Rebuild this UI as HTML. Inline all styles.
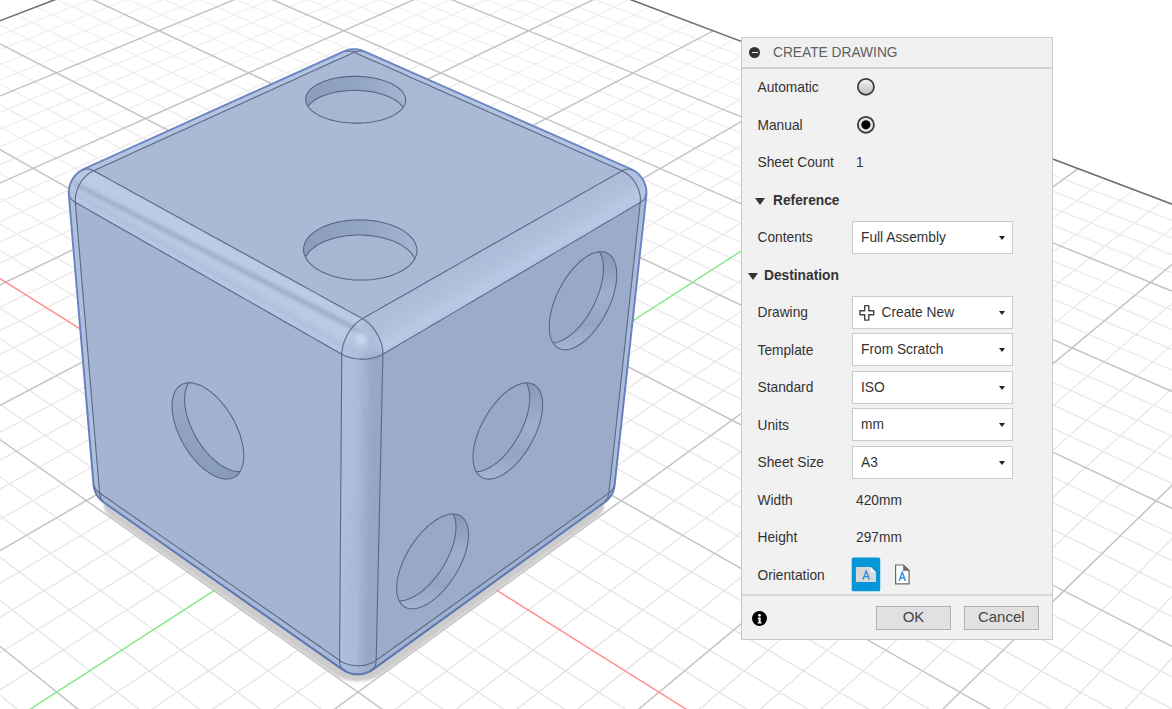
<!DOCTYPE html>
<html><head><meta charset="utf-8"><style>
html,body{margin:0;padding:0;background:#fff;width:1172px;height:709px;overflow:hidden}
body{position:relative;font-family:"Liberation Sans",sans-serif}
</style></head><body>
<svg width="1172" height="709" viewBox="0 0 1172 709" style="position:absolute;left:0;top:0"><path d="M-891.45,629.51L-1124.39,736.06M1604.10,630.07L1841.40,736.67M-876.97,649.79L-1112.02,759.05M1590.50,650.33L1830.01,759.65M-862.14,670.56L-1099.32,782.66M1576.56,671.09L1818.33,783.24M-831.33,713.71L-1072.88,831.81M1547.62,714.21L1794.01,832.36M-601.17,629.58L-815.33,736.12M-815.33,736.12L-1059.11,857.40M1314.01,630.00L1532.58,736.60M1532.58,736.60L1781.34,857.93M-583.13,649.85L-798.91,759.12M-798.91,759.12L-1044.95,883.71M1296.85,650.26L1517.15,759.59M1517.15,759.59L1768.32,884.22M-564.64,670.63L-782.06,782.73M-782.06,782.73L-1030.40,910.76M1279.25,671.03L1501.32,783.18M1501.32,783.18L1754.93,911.27M-526.24,713.78L-746.97,831.87M-746.97,831.87L-1000.01,967.25M1242.72,714.14L1468.35,832.29M1468.35,832.29L1726.97,967.72M-310.92,629.64L-506.30,736.18M-506.30,736.18L-728.70,857.46M-728.70,857.46L-984.13,996.75M1023.90,629.94L1223.74,736.54M1223.74,736.54L1451.18,857.87M1451.18,857.87L1712.37,997.20M-289.32,649.91L-485.84,759.18M-485.84,759.18L-709.92,883.77M-709.92,883.77L-967.78,1027.14M1003.17,650.20L1204.27,759.52M1204.27,759.52L1433.53,884.16M1433.53,884.16L1697.33,1027.58M-267.17,670.69L-464.83,782.79M-464.83,782.79L-690.60,910.83M-690.60,910.83L-950.93,1058.46M981.92,670.96L1184.27,783.12M1184.27,783.12L1415.38,911.20M1415.38,911.20L1681.83,1058.88M-221.19,713.84L-421.10,831.93M-421.10,831.93L-650.27,967.31M-650.27,967.31L-915.64,1124.07M937.79,714.08L1142.66,832.23M1142.66,832.23L1377.48,967.66M1377.48,967.66L1649.36,1124.45M-20.70,629.71L-197.30,736.25M-197.30,736.25L-398.32,857.52M-398.32,857.52L-629.21,996.81M-629.21,996.81L-897.14,1158.45M733.77,629.87L914.87,736.48M914.87,736.48L1120.99,857.81M1120.99,857.81L1357.69,997.14M1357.69,997.14L1632.34,1158.81M4.47,649.98L-172.79,759.24M-172.79,759.24L-374.91,883.83M-374.91,883.83L-607.51,1027.20M-607.51,1027.20L-878.04,1193.95M709.47,650.13L891.35,759.46M891.35,759.46L1098.71,884.10M1098.71,884.10L1337.30,1027.52M1337.30,1027.52L1614.77,1194.30M30.27,670.76L-147.63,782.85M-147.63,782.85L-350.84,910.89M-350.84,910.89L-585.15,1058.52M-585.15,1058.52L-858.31,1230.63M684.56,670.90L867.20,783.05M867.20,783.05L1075.79,911.14M1075.79,911.14L1316.29,1058.82M1316.29,1058.82L1596.61,1230.96M83.85,713.90L-95.25,831.99M-95.25,831.99L-300.57,967.37M-300.57,967.37L-538.31,1124.13M-538.31,1124.13L-816.81,1307.76M632.83,714.02L816.94,832.17M816.94,832.17L1027.96,967.60M1027.96,967.60L1272.27,1124.40M1272.27,1124.40L1558.43,1308.05M269.50,629.77L111.67,736.31M111.67,736.31L-67.98,857.59M-67.98,857.59L-274.32,996.87M-274.32,996.87L-513.76,1158.51M-513.76,1158.51L-794.98,1348.34M443.61,629.81L605.97,736.41M605.97,736.41L790.76,857.75M790.76,857.75L1002.97,997.09M1002.97,997.09L1249.21,1158.76M1249.21,1158.76L1538.35,1348.61M298.24,650.04L140.23,759.31M140.23,759.31L-39.94,883.89M-39.94,883.89L-247.27,1027.26M-247.27,1027.26L-488.42,1194.01M-488.42,1194.01L-772.37,1390.36M415.74,650.07L578.40,759.40M578.40,759.40L763.85,884.04M763.85,884.04L977.24,1027.46M977.24,1027.46L1225.39,1194.24M1225.39,1194.24L1517.55,1390.61M327.69,670.82L169.54,782.91M169.54,782.91L-11.11,910.95M-11.11,910.95L-219.40,1058.58M-219.40,1058.58L-462.23,1230.69M-462.23,1230.69L-748.95,1433.90M387.17,670.83L550.10,782.99M550.10,782.99L736.18,911.08M736.18,911.08L950.71,1058.76M950.71,1058.76L1200.78,1230.91M1200.78,1230.91L1495.99,1434.13M388.85,713.97L230.56,832.06M230.56,832.06L49.09,967.43M49.09,967.43L-161.02,1124.18M-161.02,1124.18L-407.17,1307.81M-407.17,1307.81L-699.47,1525.87M327.85,713.95L491.18,832.11M491.18,832.11L678.40,967.54M678.40,967.54L895.15,1124.34M895.15,1124.34L1149.03,1308.00M1149.03,1308.00L1450.47,1526.06M559.68,629.83L420.62,736.38M420.62,736.38L262.33,857.65M262.33,857.65L80.53,996.93M80.53,996.93L-130.43,1158.56M-130.43,1158.56L-378.20,1348.39M-378.20,1348.39L-673.31,1574.49M153.42,629.74L297.04,736.35M297.04,736.35L460.50,857.68M460.50,857.68L648.22,997.03M648.22,997.03L866.03,1158.71M866.03,1158.71L1121.80,1348.56M1121.80,1348.56L1426.40,1574.66M591.98,650.11L453.21,759.37M453.21,759.37L294.99,883.95M294.99,883.95L112.92,1027.32M112.92,1027.32L-98.84,1194.06M-98.84,1194.06L-348.20,1390.41M-348.20,1390.41L-646.13,1625.00M121.98,650.00L265.42,759.33M265.42,759.33L428.96,883.98M428.96,883.98L617.13,1027.40M617.13,1027.40L835.96,1194.19M835.96,1194.19L1093.60,1390.56M1093.60,1390.56L1401.39,1625.16M625.08,670.88L486.68,782.98M486.68,782.98L328.59,911.01M328.59,911.01L146.30,1058.64M146.30,1058.64L-66.20,1230.74M-66.20,1230.74L-317.11,1433.94M-317.11,1433.94L-617.88,1677.52M89.76,670.77L232.97,782.93M232.97,782.93L396.52,911.02M396.52,911.02L585.09,1058.71M585.09,1058.71L804.90,1230.85M804.90,1230.85L1064.39,1434.08M1064.39,1434.08L1375.39,1677.66M693.83,714.03L556.33,832.12M556.33,832.12L398.72,967.49M398.72,967.49L216.22,1124.24M216.22,1124.24L2.43,1307.86M2.43,1307.86L-251.45,1525.91M-251.45,1525.91L-557.86,1789.08M22.84,713.89L165.40,832.04M165.40,832.04L328.80,967.48M328.80,967.48L517.98,1124.28M517.98,1124.28L739.57,1307.95M739.57,1307.95L1002.68,1526.02M1002.68,1526.02L1320.17,1789.17M849.83,629.90L729.53,736.44M729.53,736.44L592.61,857.71M592.61,857.71L435.35,996.99M435.35,996.99L252.86,1158.62M252.86,1158.62L38.54,1348.44M38.54,1348.44L-216.74,1574.53M-216.74,1574.53L-525.95,1848.39M-136.78,629.68L-11.91,736.29M-11.91,736.29L130.21,857.62M130.21,857.62L293.43,996.97M293.43,996.97L482.81,1158.65M482.81,1158.65L705.20,1348.51M705.20,1348.51L970.05,1574.63M970.05,1574.63L1290.81,1848.46M885.69,650.17L766.17,759.43M766.17,759.43L629.90,884.02M629.90,884.02L473.08,1027.38M473.08,1027.38L290.69,1194.12M290.69,1194.12L75.93,1390.45M75.93,1390.45L-180.68,1625.04M-180.68,1625.04L-492.67,1910.26M-171.80,649.94L-47.58,759.27M-47.58,759.27L94.04,883.92M94.04,883.92L256.99,1027.34M256.99,1027.34L446.49,1194.14M446.49,1194.14L669.61,1390.52M669.61,1390.52L936.16,1625.12M936.16,1625.12L1260.18,1910.31M922.45,670.95L803.78,783.04M803.78,783.04L668.25,911.07M668.25,911.07L511.97,1058.70M511.97,1058.70L329.78,1230.79M329.78,1230.79L114.67,1433.99M114.67,1433.99L-143.18,1677.56M-143.18,1677.56L-457.91,1974.85M-207.68,670.71L-84.20,782.86M-84.20,782.86L56.83,910.96M56.83,910.96L219.44,1058.65M219.44,1058.65L408.97,1230.80M408.97,1230.80L632.73,1434.04M632.73,1434.04L900.91,1677.62M900.91,1677.62L1228.19,1974.89M998.78,714.09L882.08,832.18M882.08,832.18L748.31,967.55M748.31,967.55L593.42,1124.29M593.42,1124.29L411.97,1307.91M411.97,1307.91L196.51,1525.95M196.51,1525.95L-63.54,1789.10M-63.54,1789.10L-383.60,2112.98M-282.19,713.83L-160.42,831.98M-160.42,831.98L-20.84,967.42M-20.84,967.42L140.77,1124.23M140.77,1124.23L330.07,1307.90M330.07,1307.90L554.83,1525.98M554.83,1525.98L826.05,1789.15M826.05,1789.15L1159.81,2112.99M1139.95,629.96L1038.42,736.50M1038.42,736.50L922.85,857.77M922.85,857.77L790.13,997.05M790.13,997.05L636.10,1158.67M636.10,1158.67L455.22,1348.48M455.22,1348.48L239.77,1574.57M239.77,1574.57L-21.20,1848.41M-21.20,1848.41L-343.81,2186.94M-427.02,629.62L-320.90,736.22M-320.90,736.22L-200.11,857.56M-200.11,857.56L-61.40,996.91M-61.40,996.91L99.55,1158.60M99.55,1158.60L288.55,1348.47M288.55,1348.47L513.64,1574.59M513.64,1574.59L786.25,1848.44M786.25,1848.44L1123.19,2186.93M1179.38,650.24L1079.10,759.50M1079.10,759.50L964.77,884.08M964.77,884.08L833.20,1027.44M833.20,1027.44L680.18,1194.17M680.18,1194.17L500.00,1390.50M500.00,1390.50L284.71,1625.07M284.71,1625.07L22.97,1910.27M22.97,1910.27L-302.10,2264.47M-465.60,649.88L-360.62,759.21M-360.62,759.21L-240.92,883.86M-240.92,883.86L-103.19,1027.28M-103.19,1027.28L56.98,1194.08M56.98,1194.08L245.56,1390.47M245.56,1390.47L470.85,1625.09M470.85,1625.09L744.73,1910.30M744.73,1910.30L1084.80,2264.44M1219.79,671.01L1120.86,783.10M1120.86,783.10L1007.87,911.13M1007.87,911.13L877.59,1058.75M877.59,1058.75L725.72,1230.84M725.72,1230.84L546.39,1434.03M546.39,1434.03L331.45,1677.59M331.45,1677.59L69.09,1974.87M69.09,1974.87L-258.32,2345.85M-505.14,670.64L-401.39,782.80M-401.39,782.80L-282.89,910.90M-282.89,910.90L-146.26,1058.59M-146.26,1058.59L13.00,1230.75M13.00,1230.75L201.02,1434.00M201.02,1434.00L426.36,1677.59M426.36,1677.59L701.38,1974.88M701.38,1974.88L1044.51,2345.80M1303.70,714.16L1207.80,832.24M1207.80,832.24L1097.87,967.61M1097.87,967.61L970.58,1124.35M970.58,1124.35L821.47,1307.96M821.47,1307.96L644.40,1525.99M644.40,1525.99L430.71,1789.13M430.71,1789.13L167.70,2112.99M167.70,2112.99L-163.91,2521.32M-587.26,713.76L-486.27,831.92M-486.27,831.92L-370.51,967.36M-370.51,967.36L-236.48,1124.17M-236.48,1124.17L-79.49,1307.85M-79.49,1307.85L106.92,1525.94M106.92,1525.94L331.86,1789.12M331.86,1789.12L608.67,2112.99M608.67,2112.99L957.62,2521.25M1430.05,630.03L1347.28,736.57M1347.28,736.57L1253.07,857.83M1253.07,857.83L1144.87,997.11M1144.87,997.11L1019.31,1158.73M1019.31,1158.73L871.85,1348.53M871.85,1348.53L696.21,1574.60M696.21,1574.60L483.48,1848.43M483.48,1848.43L220.50,2186.94M220.50,2186.94L-112.92,2616.10M-717.28,629.55L-629.91,736.16M-629.91,736.16L-530.47,857.50M-530.47,857.50L-416.27,996.85M-416.27,996.85L-283.76,1158.54M-283.76,1158.54L-128.15,1348.42M-128.15,1348.42L57.17,1574.55M57.17,1574.55L281.62,1848.42M281.62,1848.42L559.03,2186.93M559.03,2186.93L910.69,2616.03M1473.04,650.30L1392.00,759.56M1392.00,759.56L1299.61,884.14M1299.61,884.14L1193.28,1027.50M1193.28,1027.50L1069.62,1194.22M1069.62,1194.22L924.01,1390.55M924.01,1390.55L750.04,1625.11M750.04,1625.11L538.53,1910.29M538.53,1910.29L275.85,2264.46M275.85,2264.46L-59.12,2716.09M-759.43,649.81L-673.68,759.14M-673.68,759.14L-575.91,883.79M-575.91,883.79L-463.41,1027.23M-463.41,1027.23L-332.58,1194.03M-332.58,1194.03L-178.54,1390.43M-178.54,1390.43L5.49,1625.05M5.49,1625.05L229.20,1910.28M229.20,1910.28L507.00,2264.46M507.00,2264.46L861.17,2716.01M1517.10,671.08L1437.91,783.17M1437.91,783.17L1347.47,911.19M1347.47,911.19L1243.18,1058.81M1243.18,1058.81L1121.60,1230.90M1121.60,1230.90L978.06,1434.08M978.06,1434.08L806.01,1677.62M806.01,1677.62L596.00,1974.88M596.00,1974.88L333.94,2345.83M333.94,2345.83L-2.28,2821.74M-802.64,670.58L-718.61,782.74M-718.61,782.74L-622.64,910.84M-622.64,910.84L-512.00,1058.53M-512.00,1058.53L-383.02,1230.70M-383.02,1230.70L-230.75,1433.95M-230.75,1433.95L-48.25,1677.56M-48.25,1677.56L174.48,1974.87M174.48,1974.87L452.38,2345.82M452.38,2345.82L808.85,2821.66M1608.59,714.22L1533.48,832.31M1533.48,832.31L1447.38,967.67M1447.38,967.67L1347.69,1124.41M1347.69,1124.41L1230.91,1308.01M1230.91,1308.01L1092.24,1526.03M1092.24,1526.03L924.88,1789.15M924.88,1789.15L718.91,2112.99M718.91,2112.99L459.21,2521.28M459.21,2521.28L121.62,3052.04M-892.35,713.70L-812.15,831.86M-812.15,831.86L-720.21,967.30M-720.21,967.30L-613.77,1124.12M-613.77,1124.12L-489.09,1307.80M-489.09,1307.80L-341.05,1525.90M-341.05,1525.90L-162.40,1789.10M-162.40,1789.10L57.45,2112.99M57.45,2112.99L334.59,2521.29M334.59,2521.29L694.80,3051.96M1720.12,630.09L1656.11,736.63M1656.11,736.63L1583.25,857.90M1583.25,857.90L1499.57,997.17M1499.57,997.17L1402.46,1158.78M1402.46,1158.78L1288.42,1348.58M1288.42,1348.58L1152.60,1574.64M1152.60,1574.64L988.08,1848.45M988.08,1848.45L784.71,2186.93M784.71,2186.93L526.87,2616.05M526.87,2616.05L189.31,3177.86M-1007.56,629.49L-938.95,736.10M-938.95,736.10L-860.86,857.44M-860.86,857.44L-771.17,996.79M-771.17,996.79L-667.11,1158.49M-667.11,1158.49L-544.90,1348.37M-544.90,1348.37L-399.36,1574.51M-399.36,1574.51L-223.09,1848.40M-223.09,1848.40L-5.21,2186.94M-5.21,2186.94L270.97,2616.07M270.97,2616.07L632.48,3177.79M1766.68,650.36L1704.87,759.62M1704.87,759.62L1634.41,884.20M1634.41,884.20L1553.32,1027.55M1553.32,1027.55L1459.02,1194.28M1459.02,1194.28L1347.98,1390.59M1347.98,1390.59L1215.31,1625.14M1215.31,1625.14L1054.01,1910.31M1054.01,1910.31L853.69,2264.45M853.69,2264.45L598.26,2716.04M598.26,2716.04L261.32,3311.71M-1053.29,649.75L-986.77,759.08M-986.77,759.08L-910.93,883.73M-910.93,883.73L-823.67,1027.17M-823.67,1027.17L-722.18,1193.98M-722.18,1193.98L-602.69,1390.38M-602.69,1390.38L-459.94,1625.02M-459.94,1625.02L-286.40,1910.26M-286.40,1910.26L-70.91,2264.47M-70.91,2264.47L203.84,2716.07M203.84,2716.07L566.19,3311.66M1814.39,671.14L1754.93,783.23M1754.93,783.23L1687.02,911.25M1687.02,911.25L1608.72,1058.87M1608.72,1058.87L1517.45,1230.95M1517.45,1230.95L1409.68,1434.12M1409.68,1434.12L1280.50,1677.65M1280.50,1677.65L1122.84,1974.89M1122.84,1974.89L926.09,2345.81M926.09,2345.81L673.68,2821.67M673.68,2821.67L338.07,3454.37M-1100.15,670.51L-1035.86,782.67M-1035.86,782.67L-962.43,910.78M-962.43,910.78L-877.77,1058.48M-877.77,1058.48L-779.09,1230.64M-779.09,1230.64L-662.58,1433.91M-662.58,1433.91L-522.93,1677.53M-522.93,1677.53L-352.51,1974.86M-352.51,1974.86L-139.86,2345.84M-139.86,2345.84L132.92,2821.73M132.92,2821.73L495.53,3454.34" stroke="#e5e5e5" stroke-width="1.35" fill="none"/><path d="M-945.99,553.11L-1170.84,649.72M1655.35,553.72L1884.12,650.39M-932.83,571.54L-1159.66,670.50M1642.98,572.13L1873.84,671.15M-905.57,609.73L-1136.45,713.65M1617.37,610.29L1852.49,714.27M-669.16,553.18L-876.97,649.79M1378.70,553.65L1590.50,650.33M-652.76,571.61L-862.14,670.56M1363.10,572.07L1576.56,671.09M-618.78,609.79L-831.33,713.71M1330.77,610.23L1547.62,714.21M-392.35,553.24L-583.13,649.85M1102.04,553.59L1296.85,650.26M-372.71,571.67L-564.64,670.63M1083.19,572.01L1279.25,671.03M-332.01,609.85L-526.24,713.78M1044.14,610.16L1242.72,714.14M-115.56,553.31L-289.32,649.91M825.35,553.53L1003.17,650.20M-92.68,571.74L-267.17,670.69M803.26,571.94L981.92,670.96M-45.27,609.92L-221.19,713.84M757.49,610.10L937.79,714.08M161.21,553.37L4.47,649.98M548.64,553.46L709.47,650.13M187.33,571.80L30.27,670.76M523.30,571.88L684.56,670.90M241.45,609.98L83.85,713.90M470.81,610.03L632.83,714.02M437.95,553.44L298.24,650.04M271.90,553.40L415.74,650.07M467.31,571.86L327.69,670.82M243.33,571.81L387.17,670.83M528.15,610.05L388.85,713.97M184.11,609.97L327.85,713.95M714.67,553.50L591.98,650.11M-4.85,553.33L121.98,650.00M747.27,571.93L625.08,670.88M-36.67,571.75L89.76,670.77M814.82,610.11L693.83,714.03M-102.61,609.91L22.84,713.89M991.36,553.56L885.69,650.17M-281.63,553.27L-171.80,649.94M1027.21,571.99L922.45,670.95M-316.70,571.68L-207.68,670.71M1101.47,610.18L998.78,714.09M-389.36,609.84L-282.19,713.83M1268.04,553.63L1179.38,650.24M-558.43,553.20L-465.60,649.88M1307.12,572.06L1219.79,671.01M-596.75,571.62L-505.14,670.64M1388.09,610.24L1303.70,714.16M-676.14,609.78L-587.26,713.76M1544.69,553.69L1473.04,650.30M-835.26,553.14L-759.43,649.81M1587.01,572.12L1517.10,671.08M-876.82,571.56L-802.64,670.58M1674.69,610.30L1608.59,714.22M-962.93,609.71L-892.35,713.70M1821.32,553.76L1766.68,650.36M-1112.10,553.07L-1053.29,649.75M1866.88,572.19L1814.39,671.14M-1156.91,571.49L-1100.15,670.51" stroke="#e6e6e6" stroke-width="1.35" fill="none"/><path d="M-1007.46,467.02L-1222.85,553.05M1713.09,467.69L1931.97,553.78M-995.71,483.48L-1212.93,571.48M1702.06,484.13L1922.85,572.20M-971.41,517.51L-1192.39,609.66M1679.23,518.14L1903.95,610.36M-958.85,535.11L-1181.74,629.45M1667.42,535.73L1894.16,630.13M-745.77,467.09L-945.99,553.11M1451.60,467.63L1655.35,553.72M-731.13,483.54L-932.83,571.54M1437.66,484.07L1642.98,572.13M-700.84,517.57L-905.57,609.73M1408.85,518.07L1617.37,610.29M-685.18,535.17L-891.45,629.51M1393.95,535.66L1604.10,630.07M-484.11,467.15L-669.16,553.18M1190.08,467.56L1378.70,553.65M-466.57,483.61L-652.76,571.61M1173.25,484.00L1363.10,572.07M-430.30,517.64L-618.78,609.79M1138.45,518.01L1330.77,610.23M-411.54,535.24L-601.17,629.58M1120.45,535.60L1314.01,630.00M-222.46,467.21L-392.35,553.24M928.54,467.50L1102.04,553.59M-202.03,483.67L-372.71,571.67M908.82,483.94L1083.19,572.01M-159.77,517.70L-332.01,609.85M868.03,517.95L1044.14,610.16M-137.92,535.30L-310.92,629.64M846.93,535.53L1023.90,629.94M39.17,467.28L-115.56,553.31M666.99,467.43L825.35,553.53M62.49,483.73L-92.68,571.74M644.37,483.88L803.26,571.94M110.73,517.77L-45.27,609.92M597.59,517.88L757.49,610.10M135.68,535.36L-20.70,629.71M573.39,535.47L733.77,629.87M300.77,467.34L161.21,553.37M405.41,467.37L548.64,553.46M326.99,483.80L187.33,571.80M379.89,483.81L523.30,571.88M381.22,517.83L241.45,609.98M327.12,517.82L470.81,610.03M409.26,535.43L269.50,629.77M299.83,535.40L443.61,629.81M562.36,467.41L437.95,553.44M143.81,467.30L271.90,553.40M591.47,483.86L467.31,571.86M115.40,483.75L243.33,571.81M651.68,517.89L528.15,610.05M56.63,517.75L184.11,609.97M682.81,535.49L559.68,629.83M26.24,535.34L153.42,629.74M823.92,467.47L714.67,553.50M-117.81,467.24L-4.85,553.33M855.93,483.93L747.27,571.93M-149.12,483.68L-36.67,571.75M922.12,517.96L814.82,610.11M-213.87,517.69L-102.61,609.91M956.34,535.56L849.83,629.90M-247.36,535.27L-136.78,629.68M1085.47,467.54L991.36,553.56M-379.44,467.18L-281.63,553.27M1120.37,483.99L1027.21,571.99M-413.66,483.62L-316.70,571.68M1192.53,518.02L1101.47,610.18M-484.40,517.62L-389.36,609.84M1229.85,535.62L1139.95,629.96M-520.99,535.21L-427.02,629.62M1346.99,467.60L1268.04,553.63M-641.10,467.11L-558.43,553.20M1384.78,484.06L1307.12,572.06M-678.21,483.55L-596.75,571.62M1462.93,518.09L1388.09,610.24M-754.96,517.56L-676.14,609.78M1503.34,535.69L1430.05,630.03M-794.65,535.15L-717.28,629.55M1608.50,467.66L1544.69,553.69M-902.78,467.05L-835.26,553.14M1649.18,484.12L1587.01,572.12M-942.79,483.49L-876.82,571.56M1733.30,518.15L1674.69,610.30M-1025.53,517.49L-962.93,609.71M1776.81,535.75L1720.12,630.09M-1068.32,535.08L-1007.56,629.49M1869.98,467.73L1821.32,553.76M-1164.48,466.98L-1112.10,553.07M1913.55,484.18L1866.88,572.19M-1207.39,483.43L-1156.91,571.49" stroke="#e7e7e7" stroke-width="1.35" fill="none"/><path d="M-1030.20,435.17L-1242.00,517.44M1734.46,435.86L1949.59,518.20M-1018.95,450.92L-1232.54,535.04M1723.89,451.60L1940.88,535.79M-814.44,389.93L-1007.46,467.02M1516.93,390.53L1713.09,467.69M-801.28,404.71L-995.71,483.48M1504.41,405.30L1702.06,484.13M-774.12,435.23L-971.41,517.51M1478.57,435.79L1679.23,518.14M-760.10,450.99L-958.85,535.11M1465.23,451.54L1667.42,535.73M-566.34,389.99L-745.77,467.09M1268.99,390.46L1451.60,467.63M-550.58,404.78L-731.13,483.54M1253.87,405.23L1437.66,484.07M-518.06,435.29L-700.84,517.57M1222.66,435.73L1408.85,518.07M-501.26,451.05L-685.18,535.17M1206.55,451.47L1393.95,535.66M-318.27,390.05L-484.11,467.15M1021.03,390.40L1190.08,467.56M-299.91,404.84L-466.57,483.61M1003.31,405.17L1173.25,484.00M-262.01,435.36L-430.30,517.64M966.73,435.67L1138.45,518.01M-242.45,451.11L-411.54,535.24M947.84,451.41L1120.45,535.60M-70.21,390.12L-222.46,467.21M773.05,390.33L928.54,467.50M-49.25,404.90L-202.03,483.67M752.73,405.11L908.82,483.94M-5.99,435.42L-159.77,517.70M710.78,435.60L868.03,517.95M16.34,451.18L-137.92,535.30M689.12,451.34L846.93,535.53M177.83,390.18L39.17,467.28M525.05,390.27L666.99,467.43M201.39,404.97L62.49,483.73M502.13,405.04L644.37,483.88M250.02,435.49L110.73,517.77M454.81,435.54L597.59,517.88M275.12,451.24L135.68,535.36M430.38,451.28L573.39,535.47M425.85,390.25L300.77,467.34M277.04,390.21L405.41,467.37M452.01,405.03L326.99,483.80M251.51,404.98L379.89,483.81M506.00,435.55L381.22,517.83M198.82,435.47L327.12,517.82M533.87,451.31L409.26,535.43M171.61,451.22L299.83,535.40M673.85,390.31L562.36,467.41M29.01,390.14L143.81,467.30M702.61,405.09L591.47,483.86M0.88,404.92L115.40,483.75M761.97,435.61L651.68,517.89M-57.19,435.41L56.63,517.75M792.61,451.37L682.81,535.49M-87.17,451.15L26.24,535.34M921.84,390.37L823.92,467.47M-219.04,390.08L-117.81,467.24M953.19,405.16L855.93,483.93M-249.78,404.85L-149.12,483.68M1017.91,435.68L922.12,517.96M-313.22,435.35L-213.87,517.69M1051.33,451.43L956.34,535.56M-345.97,451.09L-247.36,535.27M1169.80,390.44L1085.47,467.54M-467.11,390.02L-379.44,467.18M1203.76,405.22L1120.37,483.99M-500.45,404.79L-413.66,483.62M1273.84,435.74L1192.53,518.02M-569.27,435.28L-484.40,517.62M1310.02,451.50L1229.85,535.62M-604.80,451.02L-520.99,535.21M1417.75,390.50L1346.99,467.60M-715.20,389.95L-641.10,467.11M1454.30,405.29L1384.78,484.06M-751.14,404.72L-678.21,483.55M1529.75,435.81L1462.93,518.09M-825.33,435.22L-754.96,517.56M1568.70,451.56L1503.34,535.69M-863.64,450.96L-794.65,535.15M1665.68,390.56L1608.50,467.66M-963.30,389.89L-902.78,467.05M1704.83,405.35L1649.18,484.12M-1001.85,404.66L-942.79,483.49M1785.64,435.87L1733.30,518.15M-1081.42,435.15L-1025.53,517.49M1827.35,451.63L1776.81,535.75M-1122.50,450.90L-1068.32,535.08" stroke="#e8e8e8" stroke-width="1.35" fill="none"/><path d="M-839.95,361.26L-1030.20,435.17M1541.20,361.88L1734.46,435.86M-827.32,375.45L-1018.95,450.92M1529.19,376.06L1723.89,451.60M-640.47,320.44L-814.44,389.93M-626.23,333.80L-801.28,404.71M1326.45,334.32L1504.41,405.30M-596.90,361.32L-774.12,435.23M1298.30,361.82L1478.57,435.79M-581.78,375.51L-760.10,450.99M1283.79,375.99L1465.23,451.54M-404.62,320.51L-566.34,389.99M-388.04,333.86L-550.58,404.78M1088.38,334.25L1253.87,405.23M-353.86,361.39L-518.06,435.29M1055.39,361.75L1222.66,435.73M-336.25,375.57L-501.26,451.05M1038.38,375.93L1206.55,451.47M-168.80,320.57L-318.27,390.05M868.64,320.85L1021.03,390.40M-149.86,333.92L-299.91,404.84M850.29,334.19L1003.31,405.17M-110.85,361.45L-262.01,435.36M812.45,361.69L966.73,435.67M-90.74,375.64L-242.45,451.11M792.95,375.87L947.84,451.41M67.01,320.63L-70.21,390.12M632.89,320.78L773.05,390.33M88.29,333.99L-49.25,404.90M612.18,334.13L752.73,405.11M132.15,361.51L-5.99,435.42M569.50,361.63L710.78,435.60M154.76,375.70L16.34,451.18M547.51,375.80L689.12,451.34M302.81,320.69L177.83,390.18M397.12,320.72L525.05,390.27M326.44,334.05L201.39,404.97M374.06,334.06L502.13,405.04M375.13,361.58L250.02,435.49M326.54,361.56L454.81,435.54M400.23,375.76L275.12,451.24M302.04,375.74L430.38,451.28M538.58,320.76L425.85,390.25M161.33,320.66L277.04,390.21M564.56,334.11L452.01,405.03M135.92,334.00L251.51,404.98M618.10,361.64L506.00,435.55M83.55,361.50L198.82,435.47M645.69,375.83L533.87,451.31M56.56,375.67L171.61,451.22M774.34,320.82L673.85,390.31M-74.47,320.59L29.01,390.14M802.67,334.18L702.61,405.09M-102.23,333.94L0.88,404.92M861.04,361.70L761.97,435.61M-159.45,361.44L-57.19,435.41M891.13,375.89L792.61,451.37M-188.94,375.61L-87.17,451.15M1010.09,320.88L921.84,390.37M-310.29,320.53L-219.04,390.08M1040.76,334.24L953.19,405.16M-340.40,333.87L-249.78,404.85M1103.97,361.77L1017.91,435.68M-402.47,361.37L-313.22,435.35M1136.55,375.95L1051.33,451.43M-434.46,375.55L-345.97,451.09M-546.13,320.47L-467.11,390.02M1278.83,334.30L1203.76,405.22M-578.59,333.81L-500.45,404.79M1346.88,361.83L1273.84,435.74M-645.50,361.31L-569.27,435.28M1381.95,376.02L1310.02,451.50M-679.99,375.48L-604.80,451.02M-781.98,320.40L-715.20,389.95M1516.89,334.37L1454.30,405.29M-816.80,333.75L-751.14,404.72M1589.77,361.89L1529.75,435.81M-888.56,361.25L-825.33,435.22M1627.34,376.08L1568.70,451.56M-925.55,375.42L-863.64,450.96" stroke="#e9e9e9" stroke-width="1.35" fill="none"/><path d="M-668.11,294.51L-839.95,361.26M1366.62,295.06L1541.20,361.88M-654.42,307.35L-827.32,375.45M1353.49,307.89L1529.19,376.06M1340.10,320.97L1516.93,390.53M-467.81,269.62L-626.23,333.80M1165.37,270.07L1326.45,334.32M-436.83,294.57L-596.90,361.32M1135.46,295.00L1298.30,361.82M-420.88,307.41L-581.78,375.51M1120.08,307.83L1283.79,375.99M1104.38,320.91L1268.99,390.46M-240.93,269.68L-388.04,333.86M938.59,270.00L1088.38,334.25M-205.56,294.63L-353.86,361.39M904.29,294.93L1055.39,361.75M-187.36,307.47L-336.25,375.57M886.64,307.76L1038.38,375.93M-14.07,269.74L-149.86,333.92M711.79,269.94L850.29,334.19M25.69,294.69L-110.85,361.45M673.10,294.87L812.45,361.69M46.15,307.54L-90.74,375.64M653.19,307.70L792.95,375.87M212.78,269.81L88.29,333.99M484.97,269.88L612.18,334.13M256.92,294.76L132.15,361.51M441.90,294.81L569.50,361.63M279.64,307.60L154.76,375.70M419.73,307.64L547.51,375.80M439.61,269.87L326.44,334.05M258.15,269.82L374.06,334.06M488.14,294.82L375.13,361.58M210.68,294.74L326.54,361.56M513.12,307.66L400.23,375.76M186.25,307.57L302.04,375.74M666.43,269.93L564.56,334.11M31.30,269.76L135.92,334.00M719.34,294.88L618.10,361.64M-20.56,294.68L83.55,361.50M746.57,307.72L645.69,375.83M-47.25,307.51L56.56,375.67M893.23,269.99L802.67,334.18M-195.56,269.69L-102.23,333.94M950.53,294.95L861.04,361.70M-251.81,294.62L-159.45,361.44M980.02,307.79L891.13,375.89M-280.77,307.45L-188.94,375.61M1120.01,270.05L1040.76,334.24M-422.43,269.63L-340.40,333.87M1181.70,295.01L1103.97,361.77M-483.08,294.56L-402.47,361.37M1213.44,307.85L1136.55,375.95M-514.30,307.39L-434.46,375.55M1245.82,320.95L1169.80,390.44M1346.78,270.12L1278.83,334.30M-649.32,269.57L-578.59,333.81M1412.85,295.07L1346.88,361.83M-714.37,294.49L-645.50,361.31M1446.85,307.91L1381.95,376.02M-747.84,307.32L-679.99,375.48M1481.53,321.01L1417.75,390.50" stroke="#eaeaea" stroke-width="1.35" fill="none"/><path d="M-512.14,233.92L-668.11,294.51M1208.15,234.40L1366.62,295.06M-497.63,245.60L-654.42,307.35M1194.16,246.07L1353.49,307.89M-482.86,257.49L-640.47,320.44M1179.90,257.95L1340.10,320.97M-323.75,211.26L-467.81,269.62M1018.88,211.64L1165.37,270.07M-291.54,233.98L-436.83,294.57M987.65,234.34L1135.46,295.00M-274.98,245.66L-420.88,307.41M971.60,246.01L1120.08,307.83M-258.12,257.56L-404.62,320.51M955.25,257.89L1104.38,320.91M-107.16,211.32L-240.93,269.68M802.36,211.58L938.59,270.00M-70.95,234.04L-205.56,294.63M767.14,234.28L904.29,294.93M-52.34,245.72L-187.36,307.47M749.03,245.94L886.64,307.76M-33.39,257.62L-168.80,320.57M730.58,257.83L868.64,320.85M109.42,211.38L-14.07,269.74M585.83,211.51L711.79,269.94M149.62,234.10L25.69,294.69M546.61,234.21L673.10,294.87M170.28,245.78L46.15,307.54M526.45,245.88L653.19,307.70M191.33,257.68L67.01,320.63M505.90,257.77L632.89,320.78M325.98,211.44L212.78,269.81M369.29,211.45L484.97,269.88M370.17,234.16L256.92,294.76M326.06,234.15L441.90,294.81M392.89,245.84L279.64,307.60M303.85,245.82L419.73,307.64M416.03,257.74L302.81,320.69M281.21,257.71L397.12,320.72M542.52,211.50L439.61,269.87M152.73,211.39L258.15,269.82M590.71,234.23L488.14,294.82M105.50,234.09L210.68,294.74M615.48,245.91L513.12,307.66M81.23,245.76L186.25,307.57M640.71,257.81L538.58,320.76M56.50,257.64L161.33,320.66M759.06,211.56L666.43,269.93M-63.84,211.33L31.30,269.76M811.24,234.29L719.34,294.88M-115.07,234.03L-20.56,294.68M838.06,245.97L746.57,307.72M-141.40,245.70L-47.25,307.51M865.38,257.87L774.34,320.82M-168.22,257.58L-74.47,320.59M975.58,211.63L893.23,269.99M-280.43,211.27L-195.56,269.69M1031.75,234.35L950.53,294.95M-335.66,233.97L-251.81,294.62M1060.62,246.03L980.02,307.79M-364.04,245.63L-280.77,307.45M1090.04,257.93L1010.09,320.88M-392.96,257.52L-310.29,320.53M1192.08,211.69L1120.01,270.05M-497.03,211.21L-422.43,269.63M1252.25,234.41L1181.70,295.01M-556.26,233.91L-483.08,294.56M1283.17,246.09L1213.44,307.85M-586.70,245.57L-514.30,307.39M1314.68,257.99L1245.82,320.95M-617.72,257.46L-546.13,320.47" stroke="#ebebeb" stroke-width="1.35" fill="none"/><path d="M-369.93,178.68L-512.14,233.92M1063.66,179.09L1208.15,234.40M-354.81,189.34L-497.63,245.60M1049.00,189.75L1194.16,246.07M-339.42,200.20L-482.86,257.49M1034.07,200.59L1179.90,257.95M-192.18,157.96L-323.75,211.26M885.08,158.27L1018.88,211.64M-159.07,178.74L-291.54,233.98M852.87,179.03L987.65,234.34M-142.07,189.40L-274.98,245.66M836.34,189.68L971.60,246.01M-124.77,200.26L-258.12,257.56M819.50,200.53L955.25,257.89M15.01,158.02L-107.16,211.32M677.95,158.21L802.36,211.58M51.78,178.80L-70.95,234.04M642.08,178.97L767.14,234.28M70.65,189.47L-52.34,245.72M623.66,189.62L749.03,245.94M89.86,200.32L-33.39,257.62M604.92,200.47L730.58,257.83M222.19,158.08L109.42,211.38M470.79,158.15L585.83,211.51M262.61,178.86L149.62,234.10M431.27,178.91L546.61,234.21M283.36,189.53L170.28,245.78M410.97,189.56L526.45,245.88M304.48,200.39L191.33,257.68M390.32,200.41L505.90,257.77M429.36,158.14L325.98,211.44M263.63,158.09L369.29,211.45M473.43,178.92L370.17,234.16M220.44,178.85L326.06,234.15M496.05,189.59L392.89,245.84M198.27,189.50L303.85,245.82M519.08,200.45L416.03,257.74M175.71,200.35L281.21,257.71M636.52,158.20L542.52,211.50M56.45,158.03L152.73,211.39M684.24,178.98L590.71,234.23M9.61,178.79L105.50,234.09M708.73,189.65L615.48,245.91M-14.44,189.44L81.23,245.76M733.67,200.51L640.71,257.81M-38.92,200.29L56.50,257.64M843.66,158.26L759.06,211.56M-150.74,157.97L-63.84,211.33M895.03,179.04L811.24,234.29M-201.24,178.73L-115.07,234.03M921.40,189.71L838.06,245.97M-227.17,189.38L-141.40,245.70M948.25,200.57L865.38,257.87M-253.56,200.23L-168.22,257.58M1050.79,158.32L975.58,211.63M-357.94,157.91L-280.43,211.27M1105.81,179.10L1031.75,234.35M-412.10,178.66L-335.66,233.97M1134.06,189.77L1060.62,246.03M-439.91,189.32L-364.04,245.63M1162.81,200.63L1090.04,257.93M-468.21,200.17L-392.96,257.52" stroke="#ececec" stroke-width="1.35" fill="none"/><path d="M-239.74,128.10L-369.93,178.68M931.36,128.45L1063.66,179.09M-224.16,137.89L-354.81,189.34M916.20,138.22L1049.00,189.75M-208.31,147.84L-339.42,200.20M900.78,148.16L1034.07,200.59M-37.80,128.16L-159.07,178.74M729.48,128.39L852.87,179.03M-20.50,137.95L-142.07,189.40M712.59,138.16L836.34,189.68M-2.89,147.90L-124.77,200.26M695.42,148.10L819.50,200.53M164.13,128.22L51.78,178.80M527.58,128.33L642.08,178.97M183.16,138.01L70.65,189.47M508.97,138.10L623.66,189.62M202.51,147.96L89.86,200.32M490.05,148.04L604.92,200.47M366.05,128.28L262.61,178.86M325.67,128.27L431.27,178.91M386.79,138.07L283.36,189.53M305.34,138.04L410.97,189.56M407.90,148.02L304.48,200.39M284.66,147.98L390.32,200.41M567.96,128.34L473.43,178.92M123.75,128.21L220.44,178.85M590.42,138.13L496.05,189.59M101.70,137.98L198.27,189.50M613.27,148.08L519.08,200.45M79.27,147.92L175.71,200.35M769.85,128.40L684.24,178.98M-78.19,128.15L9.61,178.79M794.04,138.19L708.73,189.65M-101.96,137.92L-14.44,189.44M818.63,148.14L733.67,200.51M-126.14,147.86L-38.92,200.29M971.74,128.46L895.03,179.04M-280.14,128.09L-201.24,178.73M997.64,138.25L921.40,189.71M-305.63,137.86L-227.17,189.38M1023.98,148.20L948.25,200.57M-331.56,147.80L-253.56,200.23" stroke="#ededed" stroke-width="1.35" fill="none"/><path d="M-120.12,81.63L-239.74,128.10M809.79,81.92L931.36,128.45M-104.19,90.64L-224.16,137.89M794.25,90.91L916.20,138.22M-88.00,99.79L-208.31,147.84M778.46,100.05L900.78,148.16M-71.55,109.09L-192.18,157.96M762.40,109.34L885.08,158.27M73.63,81.69L-37.80,128.16M616.08,81.86L729.48,128.39M91.14,90.70L-20.50,137.95M598.96,90.85L712.59,138.16M108.94,99.85L-2.89,147.90M581.55,99.99L695.42,148.10M127.03,109.15L15.01,158.02M563.86,109.28L677.95,158.21M267.37,81.75L164.13,128.22M422.36,81.80L527.58,128.33M286.46,90.75L183.16,138.01M403.65,90.79L508.97,138.10M305.87,99.90L202.51,147.96M384.64,99.93L490.05,148.04M325.60,109.21L222.19,158.08M365.31,109.22L470.79,158.15M461.10,81.81L366.05,128.28M228.63,81.74L325.67,128.27M481.78,90.81L386.79,138.07M208.34,90.73L305.34,138.04M502.79,99.96L407.90,148.02M187.71,99.87L284.66,147.98M524.15,109.27L429.36,158.14M166.74,109.16L263.63,158.09M654.82,81.87L567.96,128.34M34.88,81.68L123.75,128.21M677.08,90.87L590.42,138.13M13.01,90.67L101.70,137.98M699.70,100.02L613.27,148.08M-9.23,99.81L79.27,147.92M722.69,109.33L636.52,158.20M-31.83,109.10L56.45,158.03M848.53,81.93L769.85,128.40M-158.87,81.62L-78.19,128.15M872.37,90.93L794.04,138.19M-182.33,90.61L-101.96,137.92M896.59,100.08L818.63,148.14M-206.18,99.75L-126.14,147.86M921.23,109.38L843.66,158.26M-230.42,109.04L-150.74,157.97" stroke="#eeeeee" stroke-width="1.35" fill="none"/><path d="M-9.82,38.79L-120.12,81.63M697.68,39.00L809.79,81.92M6.35,47.10L-104.19,90.64M681.88,47.31L794.25,90.91M22.77,55.54L-88.00,99.79M665.82,55.74L778.46,100.05M39.46,64.12L-71.55,109.09M649.50,64.31L762.40,109.34M176.38,38.84L73.63,81.69M511.51,38.95L616.08,81.86M194.01,47.16L91.14,90.70M494.24,47.25L598.96,90.85M211.92,55.60L108.94,99.85M476.70,55.68L581.55,99.99M230.11,64.18L127.03,109.15M458.87,64.25L563.86,109.28M362.57,38.90L267.37,81.75M325.33,38.89L422.36,81.80M381.66,47.21L286.46,90.75M306.60,47.19L403.65,90.79M401.05,55.66L305.87,99.90M287.57,55.62L384.64,99.93M420.75,64.24L325.60,109.21M268.24,64.19L365.31,109.22M548.75,38.96L461.10,81.81M139.14,38.83L228.63,81.74M569.30,47.27L481.78,90.81M118.95,47.13L208.34,90.73M590.17,55.72L502.79,99.96M98.43,55.56L187.71,99.87M611.38,64.29L524.15,109.27M77.59,64.13L166.74,109.16M734.92,39.02L654.82,81.87M-47.06,38.77L34.88,81.68M756.93,47.33L677.08,90.87M-68.72,47.07L13.01,90.67M779.28,55.77L699.70,100.02M-90.72,55.51L-9.23,99.81M802.00,64.35L722.69,109.33M-113.07,64.07L-31.83,109.10" stroke="#efefef" stroke-width="1.35" fill="none"/><path d="M357.02,-103.71L274.91,-71.82M274.91,-71.82L186.86,-37.62M186.86,-37.62L92.21,-0.85M92.21,-0.85L-9.82,38.79M324.80,-103.73L408.27,-71.78M408.27,-71.78L497.77,-37.52M497.77,-37.52L593.98,-0.69M593.98,-0.69L697.68,39.00M373.48,-97.50L291.37,-65.16M291.37,-65.16L203.28,-30.47M203.28,-30.47L108.54,6.85M108.54,6.85L6.35,47.10M308.61,-97.52L392.10,-65.13M392.10,-65.13L481.66,-30.38M481.66,-30.38L577.99,7.00M577.99,7.00L681.88,47.31M390.16,-91.20L308.07,-58.41M308.07,-58.41L219.94,-23.21M219.94,-23.21L125.11,14.67M125.11,14.67L22.77,55.54M292.19,-91.23L375.69,-58.38M375.69,-58.38L465.31,-23.13M465.31,-23.13L561.75,14.80M561.75,14.80L665.82,55.74M407.08,-84.81L325.00,-51.56M325.00,-51.56L236.85,-15.85M236.85,-15.85L141.94,22.60M141.94,22.60L39.46,64.12M275.55,-84.85L359.05,-51.55M359.05,-51.55L448.72,-15.78M448.72,-15.78L545.26,22.73M545.26,22.73L649.50,64.31M441.61,-71.76L359.59,-37.56M359.59,-37.56L271.42,-0.79M271.42,-0.79L176.38,38.84M241.57,-71.83L325.05,-37.57M325.05,-37.57L414.79,-0.75M414.79,-0.75L511.51,38.95M459.24,-65.11L377.27,-30.41M377.27,-30.41L289.10,6.91M289.10,6.91L194.01,47.16M224.22,-65.18L307.68,-30.43M307.68,-30.43L397.44,6.94M397.44,6.94L494.24,47.25M477.12,-58.35L395.21,-23.15M395.21,-23.15L307.05,14.72M307.05,14.72L211.92,55.60M206.63,-58.44L290.05,-23.19M290.05,-23.19L379.82,14.75M379.82,14.75L476.70,55.68M495.26,-51.50L413.41,-15.79M413.41,-15.79L325.27,22.66M325.27,22.66L230.11,64.18M188.78,-51.60L272.16,-15.84M272.16,-15.84L361.94,22.67M361.94,22.67L458.87,64.25M532.32,-37.51L450.63,-0.74M450.63,-0.74L362.57,38.90M152.32,-37.63L235.58,-0.80M235.58,-0.80L325.33,38.89M551.25,-30.35L469.66,6.96M469.66,6.96L381.66,47.21M133.69,-30.49L216.88,6.88M216.88,6.88L306.60,47.19M570.46,-23.10L488.98,14.78M488.98,14.78L401.05,55.66M114.78,-23.24L197.89,14.69M197.89,14.69L287.57,55.62M589.95,-15.74L508.60,22.72M508.60,22.72L420.75,64.24M95.60,-15.89L178.61,22.61M178.61,22.61L268.24,64.19M629.82,-0.68L548.75,38.96M56.37,-0.86L139.14,38.83M650.20,7.02L569.30,47.27M36.31,6.83L118.95,47.13M670.90,14.84L590.17,55.72M15.94,14.63L98.43,55.56M691.91,22.77L611.38,64.29M-4.73,22.56L77.59,64.13" stroke="#f0f0f0" stroke-width="1.35" fill="none"/><path d="M424.22,-78.33L-1202.78,590.34M258.68,-78.39L1913.51,591.05M513.65,-44.55L-1148.20,691.80M170.68,-44.66L1863.30,692.44M609.74,-8.26L-1086.27,806.90M76.13,-8.43L1806.33,807.47M713.25,30.83L-1015.42,938.60M-25.73,30.60L1741.15,939.09M825.08,73.07L-933.56,1090.76M-135.79,72.78L1665.84,1091.16M1078.06,168.62L-724.66,1479.04M-384.79,168.20L1473.65,1479.25M1221.89,222.95L-588.48,1732.17M-526.37,222.45L1348.34,1732.28M1379.50,282.47L-421.59,2042.36M-681.53,281.91L1194.77,2042.38M1552.97,347.99L-212.31,2431.35M-852.32,347.36L1002.17,2431.30M1744.80,420.45L57.86,2933.54M-1041.21,419.75L753.49,2933.46" stroke="#c4c4c4" stroke-width="1.5" fill="none"/><path d="M340.78,-109.85L-1251.26,500.24M340.78,-109.85L1958.10,501.01M1958.10,501.01L420.05,3606.75M-1251.26,500.24L420.05,3606.75" stroke="#6e6e6e" stroke-width="1.6" fill="none"/><path d="M-255.07,118.49L1577.84,1268.85" stroke="#ff8c8c" stroke-width="1.4" fill="none"/><path d="M946.27,118.84L-837.91,1268.55" stroke="#80e880" stroke-width="1.4" fill="none"/><defs><filter id="blur" x="-10%" y="-10%" width="120%" height="120%"><feGaussianBlur stdDeviation="1.1"/></filter></defs><path d="M381.34,674.20 L376.93,676.88 L371.89,678.97 L366.39,680.41 L360.60,681.13 L354.70,681.13 L348.88,680.40 L343.32,678.97 L338.19,676.88 L333.66,674.19 L110.83,517.07 L107.77,514.45 L105.52,511.50 L104.16,508.30 L103.71,504.97 L104.19,501.61 L105.58,498.31 L107.82,495.17 L110.85,492.30 L114.57,489.76 L331.41,363.81 L335.07,362.03 L339.21,360.65 L343.69,359.71 L348.39,359.23 L353.18,359.23 L357.90,359.71 L362.43,360.66 L366.62,362.04 L370.35,363.82 L592.55,489.88 L596.38,492.41 L599.53,495.29 L601.91,498.43 L603.44,501.73 L604.06,505.09 L603.76,508.42 L602.53,511.61 L600.41,514.57 L597.46,517.19Z" fill="#cccccc" filter="url(#blur)"/><path d="M68.75,192.23 L68.89,190.25 L69.03,189.08 L69.36,187.14 L69.89,185.24 L70.21,184.14 L70.92,182.34 L71.42,181.28 L72.29,179.61 L72.93,178.62 L73.95,177.11 L74.71,176.19 L75.84,174.86 L76.69,174.03 L77.90,172.89 L78.82,172.16 L80.08,171.23 L81.01,170.60 L82.03,170.02 L83.20,169.39 L84.20,168.90 L344.33,51.26 L345.22,50.90 L346.35,50.49 L347.17,50.21 L348.05,49.96 L348.98,49.74 L349.93,49.56 L350.59,49.47 L351.42,49.35 L352.28,49.26 L353.15,49.21 L354.03,49.20 L354.91,49.21 L355.79,49.26 L356.66,49.35 L357.49,49.47 L358.09,49.56 L359.05,49.74 L359.99,49.96 L360.88,50.21 L361.72,50.50 L362.80,50.90 L363.70,51.27 L630.98,169.05 L632.01,169.54 L632.95,170.06 L634.17,170.76 L635.15,171.39 L636.00,172.05 L637.29,173.04 L638.13,173.80 L639.35,175.00 L640.12,175.86 L641.25,177.26 L641.91,178.20 L642.91,179.77 L643.45,180.77 L644.30,182.50 L644.96,184.30 L645.35,185.40 L645.84,187.30 L646.04,188.44 L646.33,190.41 L646.42,192.39 L646.43,193.56 L646.31,195.56 L614.52,485.34 L614.31,486.62 L614.05,488.22 L613.60,489.79 L613.22,491.03 L612.60,492.51 L612.06,493.69 L611.29,495.06 L610.59,496.17 L609.70,497.41 L608.87,498.43 L607.86,499.51 L606.93,500.42 L605.84,501.32 L604.84,502.12 L373.00,669.40 L371.63,670.30 L370.68,670.87 L369.30,671.63 L367.82,672.31 L366.28,672.88 L365.56,673.12 L364.07,673.56 L362.52,673.90 L360.93,674.15 L359.32,674.31 L357.69,674.36 L356.06,674.30 L354.44,674.15 L352.84,673.90 L351.27,673.55 L349.75,673.11 L348.31,672.58 L347.55,672.30 L346.05,671.63 L344.63,670.86 L343.33,670.03 L342.36,669.40 L103.31,502.01 L102.26,501.20 L101.22,500.30 L100.25,499.38 L99.30,498.30 L98.43,497.29 L97.57,496.05 L96.83,494.94 L96.11,493.57 L95.51,492.39 L94.94,490.90 L94.51,489.66 L94.10,488.10 L93.84,486.82 L93.61,485.20 L68.88,195.38 L68.82,194.22Z" fill="#b3c3df"/><g><path d="M608.9,493.1L376.2,660.4L382.9,354.2L640.3,202.5Z" fill="#9aacca" stroke="#9aacca" stroke-width="0.5"/><path d="M99.6,493.0L339.6,660.4L341.8,354.2L75.3,202.3ZM359.0,665.7L358.0,665.7L362.5,359.1L363.6,359.1ZM360.1,672.4L360.2,671.5L357.9,671.5L357.8,672.4ZM360.2,671.5L360.3,670.3L357.9,670.4L357.9,671.5ZM360.3,670.3L360.4,669.0L357.9,669.1L357.9,670.4Z" fill="#a3b5d3" stroke="#a3b5d3" stroke-width="0.5"/><path d="M354.2,52.3L622.0,170.8L362.3,318.6L93.6,170.7Z" fill="#a9bad6" stroke="#a9bad6" stroke-width="0.5"/><path d="M354.2,52.3L374.5,61.3L375.1,61.0L354.8,52.0ZM354.2,52.3L334.5,61.3L333.8,61.0L353.5,52.0ZM374.5,61.3L395.1,70.4L395.7,70.1L375.1,61.0ZM334.5,61.3L314.4,70.4L313.8,70.1L333.8,61.0ZM395.1,70.4L416.0,79.7L416.7,79.4L395.7,70.1ZM314.4,70.4L294.0,79.6L293.4,79.4L313.8,70.1ZM416.0,79.7L437.3,89.1L438.0,88.8L416.7,79.4ZM294.0,79.6L273.3,89.1L272.6,88.8L293.4,79.4ZM437.3,89.1L459.0,98.7L459.6,98.4L438.0,88.8ZM273.3,89.1L252.2,98.6L251.5,98.3L272.6,88.8ZM459.0,98.7L481.1,108.5L481.7,108.2L459.6,98.4ZM252.2,98.6L230.7,108.4L230.1,108.1L251.5,98.3ZM481.1,108.5L503.5,118.4L504.2,118.1L481.7,108.2ZM230.7,108.4L208.9,118.3L208.2,118.0L230.1,108.1ZM503.5,118.4L526.4,128.5L527.0,128.2L504.2,118.1ZM208.9,118.3L186.6,128.4L186.0,128.1L208.2,118.0ZM526.4,128.5L549.6,138.8L550.3,138.5L527.0,128.2ZM186.6,128.4L164.0,138.7L163.4,138.4L186.0,128.1ZM549.6,138.8L573.3,149.3L574.0,149.0L550.3,138.5ZM164.0,138.7L141.0,149.2L140.3,148.8L163.4,138.4ZM573.3,149.3L597.4,160.0L598.1,159.6L574.0,149.0ZM141.0,149.2L117.5,159.8L116.9,159.5L140.3,148.8ZM597.4,160.0L622.0,170.8L622.6,170.5L598.1,159.6ZM117.5,159.8L93.6,170.7L93.0,170.3L116.9,159.5ZM635.4,183.0L616.0,194.2L616.6,195.1L635.9,183.9ZM616.0,194.2L596.3,205.7L596.8,206.6L616.6,195.1ZM596.3,205.7L576.2,217.3L576.8,218.2L596.8,206.6ZM576.2,217.3L555.7,229.2L556.3,230.1L576.8,218.2ZM555.7,229.2L534.8,241.2L535.4,242.2L556.3,230.1ZM534.8,241.2L513.6,253.6L514.1,254.5L535.4,242.2ZM513.6,253.6L491.8,266.1L492.4,267.1L514.1,254.5ZM491.8,266.1L469.7,279.0L470.3,279.9L492.4,267.1ZM469.7,279.0L447.1,292.0L447.7,293.0L470.3,279.9ZM447.1,292.0L424.0,305.4L424.6,306.3L447.7,293.0ZM424.0,305.4L400.5,319.0L401.1,320.0L424.6,306.3ZM400.5,319.0L376.5,332.9L377.1,333.9L401.1,320.0ZM97.5,491.2L98.0,491.7L73.5,201.2L73.0,200.8ZM613.2,487.8L613.4,487.2L645.2,197.3L645.0,197.7ZM354.2,52.3L353.3,51.5L353.5,51.4L354.2,52.3ZM354.2,52.3L353.5,51.4L353.7,51.4L354.2,52.3ZM354.2,52.3L353.7,51.4L353.9,51.4L354.2,52.3ZM354.2,52.3L353.9,51.4L354.2,51.4L354.2,52.3ZM354.2,52.3L354.2,51.4L354.4,51.4L354.2,52.3ZM354.2,52.3L354.4,51.4L354.6,51.4L354.2,52.3ZM354.2,52.3L354.6,51.4L354.8,51.4L354.2,52.3ZM354.2,52.3L354.8,51.4L355.0,51.5L354.2,52.3ZM613.2,488.7L613.5,487.0L613.8,485.6L613.5,487.3ZM622.0,170.8L624.1,170.3L623.9,170.2L622.0,170.8ZM622.0,170.8L623.9,170.2L623.7,170.1L622.0,170.8ZM624.4,170.7L626.8,170.8L626.6,170.5L624.3,170.6ZM624.3,170.6L626.6,170.5L626.4,170.3L624.2,170.5ZM627.0,171.3L629.4,171.8L629.3,171.4L626.9,171.0ZM626.9,171.0L629.3,171.4L629.1,171.1L626.8,170.8ZM629.4,172.5L631.8,173.5L631.8,173.0L629.5,172.2ZM629.5,172.2L631.8,173.0L631.7,172.5L629.4,171.8ZM631.7,174.0L633.8,175.3L634.0,174.7L631.8,173.5ZM633.6,175.8L635.6,177.4L635.9,176.7L633.8,175.3ZM635.2,178.0L636.9,179.8L637.4,179.1L635.6,177.4ZM635.6,177.4L637.4,179.1L637.8,178.3L635.9,176.7ZM636.9,179.8L638.6,181.7L639.1,180.9L637.4,179.1ZM637.0,183.2L638.2,185.4L639.2,184.6L637.8,182.5ZM377.1,333.9L378.4,336.4L376.8,337.2L375.6,334.7ZM359.9,348.6L359.8,351.4L357.1,351.2L357.3,348.4ZM357.3,348.4L357.1,351.2L354.4,350.8L354.7,348.1ZM347.5,346.1L347.0,348.8L344.8,347.8L345.4,345.2ZM349.3,349.6L349.0,352.2L346.6,351.4L347.0,348.8Z" fill="#b0c1dd" stroke="#b0c1dd" stroke-width="0.5"/><path d="M354.8,52.0L375.1,61.0L375.7,60.8L355.5,51.8ZM353.5,52.0L333.8,61.0L333.2,60.7L352.9,51.8ZM375.1,61.0L395.7,70.1L396.3,69.9L375.7,60.8ZM333.8,61.0L313.8,70.1L313.1,69.8L333.2,60.7ZM395.7,70.1L416.7,79.4L417.3,79.1L396.3,69.9ZM313.8,70.1L293.4,79.4L292.7,79.1L313.1,69.8ZM416.7,79.4L438.0,88.8L438.6,88.6L417.3,79.1ZM293.4,79.4L272.6,88.8L272.0,88.5L292.7,79.1ZM438.0,88.8L459.6,98.4L460.3,98.1L438.6,88.6ZM272.6,88.8L251.5,98.3L250.9,98.1L272.0,88.5ZM459.6,98.4L481.7,108.2L482.3,107.9L460.3,98.1ZM251.5,98.3L230.1,108.1L229.4,107.8L250.9,98.1ZM481.7,108.2L504.2,118.1L504.8,117.8L482.3,107.9ZM230.1,108.1L208.2,118.0L207.6,117.7L229.4,107.8ZM504.2,118.1L527.0,128.2L527.6,127.9L504.8,117.8ZM208.2,118.0L186.0,128.1L185.3,127.8L207.6,117.7ZM527.0,128.2L550.3,138.5L550.9,138.2L527.6,127.9ZM186.0,128.1L163.4,138.4L162.7,138.1L185.3,127.8ZM550.3,138.5L574.0,149.0L574.6,148.7L550.9,138.2ZM163.4,138.4L140.3,148.8L139.7,148.5L162.7,138.1ZM574.0,149.0L598.1,159.6L598.7,159.3L574.6,148.7ZM140.3,148.8L116.9,159.5L116.2,159.2L139.7,148.5ZM598.1,159.6L622.6,170.5L623.2,170.2L598.7,159.3ZM116.9,159.5L93.0,170.3L92.3,170.0L116.2,159.2ZM635.9,183.9L616.6,195.1L617.1,196.0L636.4,184.8ZM616.6,195.1L596.8,206.6L597.4,207.5L617.1,196.0ZM596.8,206.6L576.8,218.2L577.3,219.1L597.4,207.5ZM576.8,218.2L556.3,230.1L556.8,231.0L577.3,219.1ZM556.3,230.1L535.4,242.2L535.9,243.1L556.8,231.0ZM535.4,242.2L514.1,254.5L514.6,255.4L535.9,243.1ZM514.1,254.5L492.4,267.1L492.9,268.0L514.6,255.4ZM492.4,267.1L470.3,279.9L470.8,280.9L492.9,268.0ZM470.3,279.9L447.7,293.0L448.2,294.0L470.8,280.9ZM447.7,293.0L424.6,306.3L425.2,307.3L448.2,294.0ZM424.6,306.3L401.1,320.0L401.6,321.0L425.2,307.3ZM401.1,320.0L377.1,333.9L377.6,334.9L401.6,321.0ZM636.4,184.8L617.1,196.0L617.5,196.9L636.9,185.7ZM617.1,196.0L597.4,207.5L597.8,208.4L617.5,196.9ZM597.4,207.5L577.3,219.1L577.8,220.0L597.8,208.4ZM577.3,219.1L556.8,231.0L557.3,231.9L577.8,220.0ZM556.8,231.0L535.9,243.1L536.4,244.0L557.3,231.9ZM535.9,243.1L514.6,255.4L515.1,256.4L536.4,244.0ZM514.6,255.4L492.9,268.0L493.4,269.0L515.1,256.4ZM492.9,268.0L470.8,280.9L471.3,281.8L493.4,269.0ZM470.8,280.9L448.2,294.0L448.7,294.9L471.3,281.8ZM448.2,294.0L425.2,307.3L425.7,308.3L448.7,294.9ZM425.2,307.3L401.6,321.0L402.2,322.0L425.7,308.3ZM401.6,321.0L377.6,334.9L378.2,335.9L402.2,322.0ZM96.2,489.7L96.6,490.2L72.0,199.9L71.6,199.4ZM613.4,487.2L613.6,486.7L645.4,196.8L645.2,197.3ZM354.2,52.3L352.6,51.7L352.7,51.6L354.2,52.3ZM354.2,52.3L352.7,51.6L352.9,51.6L354.2,52.3ZM354.2,52.3L352.9,51.6L353.1,51.5L354.2,52.3ZM354.2,52.3L355.2,51.5L355.4,51.6L354.2,52.3ZM354.2,52.3L355.4,51.6L355.6,51.6L354.2,52.3ZM354.2,52.3L355.6,51.6L355.8,51.7L354.2,52.3ZM353.3,51.5L352.4,50.8L352.8,50.8L353.5,51.4ZM353.5,51.4L352.8,50.8L353.2,50.7L353.7,51.4ZM353.7,51.4L353.2,50.7L353.7,50.7L353.9,51.4ZM353.9,51.4L353.7,50.7L354.1,50.7L354.2,51.4ZM354.2,51.4L354.1,50.7L354.6,50.7L354.4,51.4ZM354.4,51.4L354.6,50.7L355.0,50.7L354.6,51.4ZM354.6,51.4L355.0,50.7L355.4,50.8L354.8,51.4ZM354.8,51.4L355.4,50.8L355.9,50.8L355.0,51.5ZM93.6,170.7L92.0,169.9L91.8,170.0L93.6,170.7ZM93.6,170.7L91.8,170.0L91.6,170.1L93.6,170.7ZM624.1,170.3L626.1,170.1L625.8,169.9L623.9,170.2ZM626.8,170.8L629.1,171.1L628.8,170.7L626.6,170.5ZM626.6,170.5L628.8,170.7L628.5,170.4L626.4,170.3ZM629.4,171.8L631.7,172.5L631.5,172.1L629.3,171.4ZM629.3,171.4L631.5,172.1L631.3,171.6L629.1,171.1ZM631.8,173.0L634.0,174.1L633.9,173.5L631.7,172.5ZM634.0,174.7L636.1,176.0L636.1,175.3L634.0,174.1ZM635.9,176.7L637.8,178.3L638.0,177.5L636.1,176.0ZM637.4,179.1L639.1,180.9L639.5,180.1L637.8,178.3ZM635.9,183.9L637.1,186.2L638.2,185.4L637.0,183.2ZM638.6,181.7L640.0,183.8L640.6,182.9L639.1,180.9ZM644.9,196.0L644.8,198.2L645.3,197.0L645.4,194.8ZM378.4,336.4L379.6,339.0L377.9,339.9L376.8,337.2ZM347.0,348.8L346.6,351.4L344.3,350.4L344.8,347.8ZM349.0,352.2L348.8,354.8L346.3,353.9L346.6,351.4Z" fill="#b1c2de" stroke="#b1c2de" stroke-width="0.5"/><path d="M355.5,51.8L375.7,60.8L376.4,60.6L356.1,51.6ZM352.9,51.8L333.2,60.7L332.5,60.5L352.2,51.6ZM375.7,60.8L396.3,69.9L397.0,69.7L376.4,60.6ZM333.2,60.7L313.1,69.8L312.5,69.6L332.5,60.5ZM396.3,69.9L417.3,79.1L417.9,78.9L397.0,69.7ZM313.1,69.8L292.7,79.1L292.1,78.9L312.5,69.6ZM417.3,79.1L438.6,88.6L439.2,88.3L417.9,78.9ZM292.7,79.1L272.0,88.5L271.3,88.3L292.1,78.9ZM438.6,88.6L460.3,98.1L460.9,97.9L439.2,88.3ZM272.0,88.5L250.9,98.1L250.2,97.8L271.3,88.3ZM460.3,98.1L482.3,107.9L483.0,107.7L460.9,97.9ZM250.9,98.1L229.4,107.8L228.8,107.6L250.2,97.8ZM482.3,107.9L504.8,117.8L505.4,117.6L483.0,107.7ZM229.4,107.8L207.6,117.7L206.9,117.5L228.8,107.6ZM504.8,117.8L527.6,127.9L528.3,127.7L505.4,117.6ZM207.6,117.7L185.3,127.8L184.7,127.6L206.9,117.5ZM527.6,127.9L550.9,138.2L551.5,138.0L528.3,127.7ZM185.3,127.8L162.7,138.1L162.1,137.8L184.7,127.6ZM550.9,138.2L574.6,148.7L575.2,148.4L551.5,138.0ZM162.7,138.1L139.7,148.5L139.0,148.3L162.1,137.8ZM574.6,148.7L598.7,159.3L599.3,159.1L575.2,148.4ZM139.7,148.5L116.2,159.2L115.6,158.9L139.0,148.3ZM598.7,159.3L623.2,170.2L623.9,169.9L599.3,159.1ZM116.2,159.2L92.3,170.0L91.7,169.8L115.6,158.9ZM75.9,194.0L81.9,197.4L81.7,198.3L75.7,195.0ZM81.9,197.4L87.9,200.8L87.7,201.7L81.7,198.3ZM87.9,200.8L93.9,204.2L93.7,205.1L87.7,201.7ZM93.9,204.2L99.9,207.6L99.7,208.6L93.7,205.1ZM99.9,207.6L106.0,211.1L105.8,212.0L99.7,208.6ZM106.0,211.1L112.2,214.5L112.0,215.5L105.8,212.0ZM112.2,214.5L118.3,218.0L118.1,219.0L112.0,215.5ZM118.3,218.0L124.5,221.5L124.3,222.5L118.1,219.0ZM124.5,221.5L130.7,225.0L130.5,226.0L124.3,222.5ZM130.7,225.0L137.0,228.6L136.8,229.6L130.5,226.0ZM137.0,228.6L143.3,232.2L143.1,233.1L136.8,229.6ZM143.3,232.2L149.6,235.7L149.4,236.7L143.1,233.1ZM149.6,235.7L156.0,239.3L155.8,240.3L149.4,236.7ZM156.0,239.3L162.4,243.0L162.2,244.0L155.8,240.3ZM162.4,243.0L168.9,246.6L168.7,247.6L162.2,244.0ZM168.9,246.6L175.4,250.3L175.1,251.3L168.7,247.6ZM175.4,250.3L181.9,254.0L181.7,255.0L175.1,251.3ZM181.9,254.0L188.4,257.7L188.2,258.7L181.7,255.0ZM188.4,257.7L195.0,261.4L194.8,262.4L188.2,258.7ZM195.0,261.4L201.7,265.2L201.4,266.2L194.8,262.4ZM201.7,265.2L208.4,269.0L208.1,270.0L201.4,266.2ZM208.4,269.0L215.1,272.8L214.8,273.8L208.1,270.0ZM215.1,272.8L221.8,276.6L221.6,277.6L214.8,273.8ZM221.8,276.6L228.6,280.4L228.4,281.4L221.6,277.6ZM228.6,280.4L235.5,284.3L235.2,285.3L228.4,281.4ZM235.5,284.3L242.3,288.2L242.1,289.2L235.2,285.3ZM242.3,288.2L249.3,292.1L249.0,293.1L242.1,289.2ZM249.3,292.1L256.2,296.1L256.0,297.1L249.0,293.1ZM256.2,296.1L263.2,300.0L263.0,301.0L256.0,297.1ZM263.2,300.0L270.3,304.0L270.0,305.0L263.0,301.0ZM270.3,304.0L277.3,308.0L277.1,309.0L270.0,305.0ZM277.3,308.0L284.5,312.1L284.2,313.1L277.1,309.0ZM284.5,312.1L291.6,316.1L291.4,317.1L284.2,313.1ZM291.6,316.1L298.9,320.2L298.6,321.2L291.4,317.1ZM298.9,320.2L306.1,324.3L305.9,325.3L298.6,321.2ZM306.1,324.3L313.4,328.4L313.2,329.5L305.9,325.3ZM313.4,328.4L320.8,332.6L320.5,333.6L313.2,329.5ZM320.8,332.6L328.2,336.8L327.9,337.8L320.5,333.6ZM328.2,336.8L335.6,341.0L335.4,342.0L327.9,337.8ZM335.6,341.0L343.1,345.2L342.8,346.3L335.4,342.0ZM75.7,195.0L81.7,198.3L81.5,199.3L75.6,195.9ZM81.7,198.3L87.7,201.7L87.5,202.7L81.5,199.3ZM87.7,201.7L93.7,205.1L93.5,206.1L87.5,202.7ZM93.7,205.1L99.7,208.6L99.6,209.5L93.5,206.1ZM99.7,208.6L105.8,212.0L105.7,213.0L99.6,209.5ZM105.8,212.0L112.0,215.5L111.8,216.4L105.7,213.0ZM112.0,215.5L118.1,219.0L117.9,219.9L111.8,216.4ZM118.1,219.0L124.3,222.5L124.1,223.4L117.9,219.9ZM124.3,222.5L130.5,226.0L130.4,227.0L124.1,223.4ZM130.5,226.0L136.8,229.6L136.6,230.5L130.4,227.0ZM136.8,229.6L143.1,233.1L142.9,234.1L136.6,230.5ZM143.1,233.1L149.4,236.7L149.2,237.7L142.9,234.1ZM149.4,236.7L155.8,240.3L155.6,241.3L149.2,237.7ZM155.8,240.3L162.2,244.0L162.0,244.9L155.6,241.3ZM162.2,244.0L168.7,247.6L168.5,248.6L162.0,244.9ZM168.7,247.6L175.1,251.3L174.9,252.3L168.5,248.6ZM175.1,251.3L181.7,255.0L181.5,256.0L174.9,252.3ZM181.7,255.0L188.2,258.7L188.0,259.7L181.5,256.0ZM188.2,258.7L194.8,262.4L194.6,263.4L188.0,259.7ZM194.8,262.4L201.4,266.2L201.3,267.2L194.6,263.4ZM201.4,266.2L208.1,270.0L207.9,271.0L201.3,267.2ZM208.1,270.0L214.8,273.8L214.6,274.8L207.9,271.0ZM214.8,273.8L221.6,277.6L221.4,278.6L214.6,274.8ZM221.6,277.6L228.4,281.4L228.2,282.4L221.4,278.6ZM228.4,281.4L235.2,285.3L235.0,286.3L228.2,282.4ZM235.2,285.3L242.1,289.2L241.9,290.2L235.0,286.3ZM242.1,289.2L249.0,293.1L248.8,294.1L241.9,290.2ZM249.0,293.1L256.0,297.1L255.8,298.1L248.8,294.1ZM256.0,297.1L263.0,301.0L262.8,302.0L255.8,298.1ZM263.0,301.0L270.0,305.0L269.8,306.0L262.8,302.0ZM270.0,305.0L277.1,309.0L276.9,310.1L269.8,306.0ZM277.1,309.0L284.2,313.1L284.0,314.1L276.9,310.1ZM284.2,313.1L291.4,317.1L291.2,318.2L284.0,314.1ZM291.4,317.1L298.6,321.2L298.4,322.2L291.2,318.2ZM298.6,321.2L305.9,325.3L305.6,326.4L298.4,322.2ZM305.9,325.3L313.2,329.5L312.9,330.5L305.6,326.4ZM313.2,329.5L320.5,333.6L320.3,334.7L312.9,330.5ZM320.5,333.6L327.9,337.8L327.7,338.9L320.3,334.7ZM327.9,337.8L335.4,342.0L335.1,343.1L327.7,338.9ZM335.4,342.0L342.8,346.3L342.6,347.3L335.1,343.1ZM353.1,51.5L352.0,50.9L352.4,50.8L353.3,51.5ZM355.0,51.5L355.9,50.8L356.3,50.9L355.2,51.5ZM93.6,170.7L91.6,170.1L91.5,170.2L93.6,170.7ZM73.3,179.6L72.1,181.4L71.8,182.5L72.9,180.7ZM72.9,182.8L71.8,184.8L72.1,185.9L73.2,183.8ZM73.5,191.2L72.9,193.5L74.2,194.5L74.7,192.2ZM74.7,192.2L74.2,194.5L75.6,195.4L76.1,193.1ZM623.9,170.2L625.8,169.9L625.4,169.7L623.7,170.1ZM626.4,170.3L628.5,170.4L628.1,170.0L626.1,170.1ZM629.1,171.1L631.3,171.6L630.9,171.1L628.8,170.7ZM631.7,172.5L633.9,173.5L633.7,172.9L631.5,172.1ZM352.7,344.8L352.2,347.5L349.8,346.9L350.4,344.1ZM350.4,344.1L349.8,346.9L347.5,346.1L348.2,343.4Z" fill="#b2c2de" stroke="#b2c2de" stroke-width="0.5"/><path d="M356.1,51.6L376.4,60.6L377.0,60.4L356.7,51.4ZM352.2,51.6L332.5,60.5L331.9,60.4L351.6,51.4ZM376.4,60.6L397.0,69.7L397.6,69.5L377.0,60.4ZM332.5,60.5L312.5,69.6L311.8,69.4L331.9,60.4ZM397.0,69.7L417.9,78.9L418.5,78.7L397.6,69.5ZM312.5,69.6L292.1,78.9L291.4,78.7L311.8,69.4ZM417.9,78.9L439.2,88.3L439.9,88.1L418.5,78.7ZM292.1,78.9L271.3,88.3L270.7,88.1L291.4,78.7ZM439.2,88.3L460.9,97.9L461.5,97.7L439.9,88.1ZM271.3,88.3L250.2,97.8L249.6,97.7L270.7,88.1ZM460.9,97.9L483.0,107.7L483.6,107.5L461.5,97.7ZM250.2,97.8L228.8,107.6L228.1,107.4L249.6,97.7ZM483.0,107.7L505.4,117.6L506.0,117.4L483.6,107.5ZM228.8,107.6L206.9,117.5L206.3,117.3L228.1,107.4ZM505.4,117.6L528.3,127.7L528.9,127.5L506.0,117.4ZM206.9,117.5L184.7,127.6L184.1,127.4L206.3,117.3ZM528.3,127.7L551.5,138.0L552.1,137.7L528.9,127.5ZM184.7,127.6L162.1,137.8L161.4,137.6L184.1,127.4ZM551.5,138.0L575.2,148.4L575.8,148.2L552.1,137.7ZM162.1,137.8L139.0,148.3L138.4,148.1L161.4,137.6ZM575.2,148.4L599.3,159.1L599.9,158.8L575.8,148.2ZM139.0,148.3L115.6,158.9L114.9,158.7L138.4,148.1ZM599.3,159.1L623.9,169.9L624.5,169.7L599.9,158.8ZM115.6,158.9L91.7,169.8L91.0,169.5L114.9,158.7ZM636.9,185.7L617.5,196.9L618.0,197.9L637.3,186.6ZM617.5,196.9L597.8,208.4L598.3,209.3L618.0,197.9ZM597.8,208.4L577.8,220.0L578.2,221.0L598.3,209.3ZM577.8,220.0L557.3,231.9L557.7,232.9L578.2,221.0ZM557.3,231.9L536.4,244.0L536.9,245.0L557.7,232.9ZM536.4,244.0L515.1,256.4L515.6,257.4L536.9,245.0ZM515.1,256.4L493.4,269.0L493.9,270.0L515.6,257.4ZM493.4,269.0L471.3,281.8L471.8,282.8L493.9,270.0ZM471.3,281.8L448.7,294.9L449.2,295.9L471.8,282.8ZM448.7,294.9L425.7,308.3L426.2,309.3L449.2,295.9ZM425.7,308.3L402.2,322.0L402.7,323.0L426.2,309.3ZM402.2,322.0L378.2,335.9L378.7,336.9L402.7,323.0ZM95.6,488.7L95.9,489.2L71.2,199.0L70.9,198.5ZM613.7,486.1L613.8,485.6L645.6,195.8L645.5,196.3ZM352.6,51.7L350.9,51.3L351.3,51.1L352.7,51.6ZM352.7,51.6L351.3,51.1L351.6,51.0L352.9,51.6ZM355.4,51.6L356.7,51.0L357.0,51.2L355.6,51.6ZM355.6,51.6L357.0,51.2L357.3,51.3L355.8,51.7ZM352.4,50.8L351.5,50.4L352.1,50.3L352.8,50.8ZM352.8,50.8L352.1,50.3L352.8,50.3L353.2,50.7ZM353.2,50.7L352.8,50.3L353.4,50.2L353.7,50.7ZM353.7,50.7L353.4,50.2L354.1,50.2L354.1,50.7ZM354.1,50.7L354.1,50.2L354.7,50.2L354.6,50.7ZM354.6,50.7L354.7,50.2L355.4,50.3L355.0,50.7ZM355.0,50.7L355.4,50.3L356.0,50.3L355.4,50.8ZM355.4,50.8L356.0,50.3L356.7,50.4L355.9,50.8ZM71.4,197.0L71.4,199.2L72.5,200.3L72.4,198.1ZM623.7,170.1L625.4,169.7L625.1,169.5L623.5,170.0ZM626.1,170.1L628.1,170.0L627.6,169.7L625.8,169.9ZM628.8,170.7L630.9,171.1L630.5,170.7L628.5,170.4ZM631.5,172.1L633.7,172.9L633.4,172.3L631.3,171.6ZM634.0,174.1L636.1,175.3L636.0,174.6L633.9,173.5ZM633.9,173.5L636.0,174.6L635.7,173.9L633.7,172.9ZM636.1,176.0L638.0,177.5L638.0,176.7L636.1,175.3ZM637.8,178.3L639.5,180.1L639.7,179.2L638.0,177.5ZM639.1,180.9L640.6,182.9L641.0,182.0L639.5,180.1ZM637.1,186.2L638.1,188.5L639.4,187.7L638.2,185.4ZM640.0,183.8L641.2,185.9L641.9,185.0L640.6,182.9ZM645.4,194.8L645.3,197.0L645.6,195.8L645.7,193.6ZM379.6,339.0L380.7,341.6L378.8,342.6L377.9,339.9ZM365.1,345.8L365.2,348.6L362.6,348.7L362.6,345.9ZM355.1,345.3L354.7,348.1L352.2,347.5L352.7,344.8ZM344.8,347.8L344.3,350.4L342.2,349.4L342.7,346.8ZM346.6,351.4L346.3,353.9L344.0,352.9L344.3,350.4Z" fill="#b2c3df" stroke="#b2c3df" stroke-width="0.5"/><path d="M356.7,51.4L377.0,60.4L377.6,60.2L357.3,51.3ZM351.6,51.4L331.9,60.4L331.2,60.2L350.9,51.3ZM377.0,60.4L397.6,69.5L398.2,69.3L377.6,60.2ZM331.9,60.4L311.8,69.4L311.2,69.3L331.2,60.2ZM397.6,69.5L418.5,78.7L419.2,78.6L398.2,69.3ZM311.8,69.4L291.4,78.7L290.8,78.5L311.2,69.3ZM418.5,78.7L439.9,88.1L440.5,88.0L419.2,78.6ZM291.4,78.7L270.7,88.1L270.0,87.9L290.8,78.5ZM439.9,88.1L461.5,97.7L462.1,97.6L440.5,88.0ZM270.7,88.1L249.6,97.7L249.0,97.5L270.0,87.9ZM461.5,97.7L483.6,107.5L484.2,107.3L462.1,97.6ZM249.6,97.7L228.1,107.4L227.5,107.2L249.0,97.5ZM483.6,107.5L506.0,117.4L506.7,117.2L484.2,107.3ZM228.1,107.4L206.3,117.3L205.7,117.1L227.5,107.2ZM506.0,117.4L528.9,127.5L529.5,127.3L506.7,117.2ZM206.3,117.3L184.1,127.4L183.4,127.2L205.7,117.1ZM528.9,127.5L552.1,137.7L552.7,137.6L529.5,127.3ZM184.1,127.4L161.4,137.6L160.8,137.4L183.4,127.2ZM552.1,137.7L575.8,148.2L576.4,148.0L552.7,137.6ZM161.4,137.6L138.4,148.1L137.8,147.9L160.8,137.4ZM575.8,148.2L599.9,158.8L600.5,158.7L576.4,148.0ZM138.4,148.1L114.9,158.7L114.3,158.5L137.8,147.9ZM599.9,158.8L624.5,169.7L625.1,169.5L600.5,158.7ZM114.9,158.7L91.0,169.5L90.4,169.3L114.3,158.5ZM637.8,187.5L618.4,198.8L618.8,199.7L638.1,188.5ZM618.4,198.8L598.7,210.3L599.1,211.2L618.8,199.7ZM598.7,210.3L578.6,221.9L579.0,222.9L599.1,211.2ZM578.6,221.9L558.2,233.8L558.6,234.8L579.0,222.9ZM558.2,233.8L537.3,246.0L537.7,246.9L558.6,234.8ZM537.3,246.0L516.1,258.3L516.5,259.3L537.7,246.9ZM516.1,258.3L494.4,270.9L494.8,271.9L516.5,259.3ZM494.4,270.9L472.3,283.8L472.7,284.8L494.8,271.9ZM472.3,283.8L449.7,296.9L450.1,297.9L472.7,284.8ZM449.7,296.9L426.7,310.3L427.1,311.3L450.1,297.9ZM426.7,310.3L403.2,324.0L403.6,325.0L427.1,311.3ZM403.2,324.0L379.2,337.9L379.6,339.0L403.6,325.0ZM95.0,487.7L95.3,488.2L70.6,198.1L70.3,197.6ZM351.3,51.1L349.8,50.9L350.4,50.7L351.6,51.0ZM356.7,51.0L357.8,50.7L358.4,50.9L357.0,51.2ZM350.9,50.6L349.9,50.4L350.7,50.2L351.5,50.4ZM351.5,50.4L350.7,50.2L351.5,50.1L352.1,50.3ZM356.0,50.3L356.6,50.1L357.5,50.2L356.7,50.4ZM356.7,50.4L357.5,50.2L358.2,50.4L357.3,50.6ZM352.3,50.0L351.9,50.0L352.9,49.9L353.2,50.0ZM353.2,50.0L352.9,49.9L354.0,49.9L354.0,49.9ZM354.0,49.9L354.0,49.9L355.1,49.9L354.9,50.0ZM354.9,50.0L355.1,49.9L356.1,50.0L355.8,50.0ZM625.8,169.9L627.6,169.7L627.1,169.4L625.4,169.7ZM628.5,170.4L630.5,170.7L629.9,170.2L628.1,170.0ZM630.9,171.1L632.9,171.7L632.4,171.2L630.5,170.7ZM633.7,172.9L635.7,173.9L635.3,173.2L633.4,172.3ZM636.0,174.6L637.9,175.9L637.6,175.1L635.7,173.9ZM638.0,176.7L639.7,178.3L639.6,177.4L637.9,175.9ZM639.7,179.2L641.2,181.0L641.3,180.0L639.7,178.3ZM640.6,182.9L641.9,185.0L642.3,184.0L641.0,182.0ZM641.2,185.9L642.3,188.1L642.9,187.1L641.9,185.0ZM641.4,189.1L642.1,191.4L643.1,190.4L642.3,188.1ZM642.7,193.7L643.0,196.0L644.0,194.9L643.7,192.6ZM643.7,192.6L644.0,194.9L644.8,193.8L644.4,191.5ZM380.7,341.6L381.5,344.2L379.6,345.2L378.8,342.6ZM357.6,345.6L357.3,348.4L354.7,348.1L355.1,345.3Z" fill="#b3c4e0" stroke="#b3c4e0" stroke-width="0.5"/><path d="M357.3,51.3L377.6,60.2L378.2,60.1L358.0,51.2ZM350.9,51.3L331.2,60.2L330.6,60.1L350.3,51.2ZM377.6,60.2L398.2,69.3L398.8,69.2L378.2,60.1ZM331.2,60.2L311.2,69.3L310.5,69.2L330.6,60.1ZM398.2,69.3L419.2,78.6L419.8,78.5L398.8,69.2ZM311.2,69.3L290.8,78.5L290.1,78.4L310.5,69.2ZM419.2,78.6L440.5,88.0L441.1,87.9L419.8,78.5ZM290.8,78.5L270.0,87.9L269.4,87.8L290.1,78.4ZM440.5,88.0L462.1,97.6L462.8,97.4L441.1,87.9ZM270.0,87.9L249.0,97.5L248.3,97.4L269.4,87.8ZM462.1,97.6L484.2,107.3L484.8,107.2L462.8,97.4ZM249.0,97.5L227.5,107.2L226.9,107.1L248.3,97.4ZM484.2,107.3L506.7,117.2L507.3,117.1L484.8,107.2ZM227.5,107.2L205.7,117.1L205.0,117.0L226.9,107.1ZM506.7,117.2L529.5,127.3L530.1,127.2L507.3,117.1ZM205.7,117.1L183.4,127.2L182.8,127.1L205.0,117.0ZM529.5,127.3L552.7,137.6L553.3,137.4L530.1,127.2ZM183.4,127.2L160.8,137.4L160.2,137.3L182.8,127.1ZM552.7,137.6L576.4,148.0L577.0,147.9L553.3,137.4ZM160.8,137.4L137.8,147.9L137.1,147.7L160.2,137.3ZM576.4,148.0L600.5,158.7L601.1,158.5L577.0,147.9ZM137.8,147.9L114.3,158.5L113.7,158.4L137.1,147.7ZM600.5,158.7L625.1,169.5L625.7,169.3L601.1,158.5ZM114.3,158.5L90.4,169.3L89.8,169.2L113.7,158.4ZM114.4,207.8L120.6,211.3L120.1,212.2L114.0,208.7ZM76.4,192.1L82.3,195.5L82.1,196.4L76.1,193.1ZM82.3,195.5L88.3,198.9L88.1,199.8L82.1,196.4ZM88.3,198.9L94.4,202.3L94.1,203.2L88.1,199.8ZM94.4,202.3L100.4,205.7L100.2,206.6L94.1,203.2ZM100.4,205.7L106.5,209.1L106.3,210.1L100.2,206.6ZM106.5,209.1L112.6,212.6L112.4,213.6L106.3,210.1ZM112.6,212.6L118.8,216.1L118.5,217.0L112.4,213.6ZM118.8,216.1L125.0,219.6L124.7,220.5L118.5,217.0ZM125.0,219.6L131.2,223.1L131.0,224.1L124.7,220.5ZM131.2,223.1L137.5,226.6L137.2,227.6L131.0,224.1ZM137.5,226.6L143.8,230.2L143.5,231.2L137.2,227.6ZM143.8,230.2L150.2,233.8L149.9,234.8L143.5,231.2ZM150.2,233.8L156.5,237.4L156.3,238.4L149.9,234.8ZM156.5,237.4L162.9,241.0L162.7,242.0L156.3,238.4ZM162.9,241.0L169.4,244.7L169.1,245.6L162.7,242.0ZM169.4,244.7L175.9,248.3L175.6,249.3L169.1,245.6ZM175.9,248.3L182.4,252.0L182.1,253.0L175.6,249.3ZM182.4,252.0L189.0,255.7L188.7,256.7L182.1,253.0ZM189.0,255.7L195.6,259.4L195.3,260.4L188.7,256.7ZM195.6,259.4L202.2,263.2L201.9,264.2L195.3,260.4ZM202.2,263.2L208.9,267.0L208.6,268.0L201.9,264.2ZM208.9,267.0L215.6,270.8L215.3,271.8L208.6,268.0ZM215.6,270.8L222.4,274.6L222.1,275.6L215.3,271.8ZM222.4,274.6L229.2,278.4L228.9,279.4L222.1,275.6ZM229.2,278.4L236.0,282.3L235.7,283.3L228.9,279.4ZM236.0,282.3L242.9,286.2L242.6,287.2L235.7,283.3ZM242.9,286.2L249.8,290.1L249.5,291.1L242.6,287.2ZM249.8,290.1L256.8,294.0L256.5,295.0L249.5,291.1ZM256.8,294.0L263.8,298.0L263.5,299.0L256.5,295.0ZM263.8,298.0L270.8,302.0L270.5,303.0L263.5,299.0ZM270.8,302.0L277.9,306.0L277.6,307.0L270.5,303.0ZM277.9,306.0L285.1,310.0L284.8,311.0L277.6,307.0ZM285.1,310.0L292.2,314.1L291.9,315.1L284.8,311.0ZM292.2,314.1L299.5,318.1L299.1,319.2L291.9,315.1ZM299.5,318.1L306.7,322.2L306.4,323.3L299.1,319.2ZM306.7,322.2L314.0,326.4L313.7,327.4L306.4,323.3ZM314.0,326.4L321.4,330.5L321.1,331.6L313.7,327.4ZM321.4,330.5L328.8,334.7L328.5,335.8L321.1,331.6ZM328.8,334.7L336.2,338.9L335.9,340.0L328.5,335.8ZM336.2,338.9L343.7,343.2L343.4,344.2L335.9,340.0ZM94.8,487.1L95.0,487.7L70.3,197.6L70.1,197.1ZM350.9,51.3L349.3,51.1L349.8,50.9L351.3,51.1ZM357.0,51.2L358.4,50.9L358.9,51.1L357.3,51.3ZM350.4,50.7L349.1,50.6L349.9,50.4L350.9,50.6ZM357.3,50.6L358.2,50.4L359.0,50.6L357.8,50.7ZM350.7,50.2L349.8,50.3L350.8,50.1L351.5,50.1ZM351.5,50.1L350.8,50.1L351.9,50.0L352.3,50.0ZM355.8,50.0L356.1,50.0L357.2,50.1L356.6,50.1ZM356.6,50.1L357.2,50.1L358.2,50.3L357.5,50.2ZM91.5,170.2L89.4,169.9L89.2,170.1L91.4,170.3ZM74.3,178.9L72.9,180.7L72.8,181.7L74.2,179.9ZM72.1,181.4L71.2,183.4L70.9,184.5L71.8,182.5ZM74.3,188.9L73.5,191.2L74.7,192.2L75.5,189.8ZM75.5,189.8L74.7,192.2L76.1,193.1L76.8,190.7ZM71.8,189.1L71.1,191.4L71.9,192.5L72.5,190.2ZM71.1,191.4L70.7,193.6L71.5,194.7L71.9,192.5ZM625.4,169.7L627.1,169.4L626.5,169.2L625.1,169.5ZM628.1,170.0L629.9,170.2L629.3,169.8L627.6,169.7ZM630.5,170.7L632.4,171.2L631.7,170.6L629.9,170.2ZM633.4,172.3L635.3,173.2L634.8,172.6L632.9,171.7ZM635.7,173.9L637.6,175.1L637.1,174.3L635.3,173.2ZM637.9,175.9L639.6,177.4L639.2,176.5L637.6,175.1ZM639.7,178.3L641.3,180.0L641.1,179.1L639.6,177.4ZM641.0,182.0L642.3,184.0L642.6,182.9L641.2,181.0ZM638.1,188.5L639.0,190.8L640.3,190.0L639.4,187.7ZM641.9,185.0L642.9,187.1L643.4,186.0L642.3,184.0ZM640.3,190.0L641.0,192.3L642.1,191.4L641.4,189.1ZM346.2,342.5L345.4,345.2L343.4,344.2L344.3,341.6Z" fill="#b4c4e0" stroke="#b4c4e0" stroke-width="0.5"/><path d="M358.0,51.2L378.2,60.1L378.8,60.0L358.6,51.1ZM350.3,51.2L330.6,60.1L329.9,60.0L349.7,51.1ZM378.2,60.1L398.8,69.2L399.4,69.1L378.8,60.0ZM330.6,60.1L310.5,69.2L309.9,69.1L329.9,60.0ZM398.8,69.2L419.8,78.5L420.4,78.4L399.4,69.1ZM310.5,69.2L290.1,78.4L289.5,78.3L309.9,69.1ZM419.8,78.5L441.1,87.9L441.7,87.8L420.4,78.4ZM290.1,78.4L269.4,87.8L268.8,87.7L289.5,78.3ZM441.1,87.9L462.8,97.4L463.4,97.3L441.7,87.8ZM269.4,87.8L248.3,97.4L247.7,97.3L268.8,87.7ZM462.8,97.4L484.8,107.2L485.4,107.1L463.4,97.3ZM248.3,97.4L226.9,107.1L226.2,107.0L247.7,97.3ZM484.8,107.2L507.3,117.1L507.9,117.0L485.4,107.1ZM226.9,107.1L205.0,117.0L204.4,116.9L226.2,107.0ZM507.3,117.1L530.1,127.2L530.7,127.1L507.9,117.0ZM205.0,117.0L182.8,127.1L182.2,126.9L204.4,116.9ZM530.1,127.2L553.3,137.4L553.9,137.3L530.7,127.1ZM182.8,127.1L160.2,137.3L159.6,137.2L182.2,126.9ZM553.3,137.4L577.0,147.9L577.6,147.7L553.9,137.3ZM160.2,137.3L137.1,147.7L136.5,147.6L159.6,137.2ZM577.0,147.9L601.1,158.5L601.7,158.4L577.6,147.7ZM137.1,147.7L113.7,158.4L113.1,158.2L136.5,147.6ZM601.1,158.5L625.7,169.3L626.2,169.2L601.7,158.4ZM113.7,158.4L89.8,169.2L89.2,169.1L113.1,158.2ZM638.1,188.5L618.8,199.7L619.2,200.7L638.5,189.4ZM618.8,199.7L599.1,211.2L599.5,212.2L619.2,200.7ZM599.1,211.2L579.0,222.9L579.4,223.8L599.5,212.2ZM579.0,222.9L558.6,234.8L559.0,235.8L579.4,223.8ZM558.6,234.8L537.7,246.9L538.1,247.9L559.0,235.8ZM537.7,246.9L516.5,259.3L516.9,260.3L538.1,247.9ZM516.5,259.3L494.8,271.9L495.2,272.9L516.9,260.3ZM494.8,271.9L472.7,284.8L473.1,285.8L495.2,272.9ZM472.7,284.8L450.1,297.9L450.5,299.0L473.1,285.8ZM450.1,297.9L427.1,311.3L427.5,312.4L450.5,299.0ZM427.1,311.3L403.6,325.0L404.0,326.0L427.5,312.4ZM403.6,325.0L379.6,339.0L380.1,340.0L404.0,326.0ZM349.8,50.9L348.4,50.8L349.1,50.6L350.4,50.7ZM357.8,50.7L359.0,50.6L359.7,50.8L358.4,50.9ZM349.9,50.4L348.9,50.5L349.8,50.3L350.7,50.2ZM357.5,50.2L358.2,50.3L359.2,50.5L358.2,50.4ZM90.4,169.3L88.9,169.0L88.3,169.3L90.1,169.5ZM90.1,169.5L88.3,169.3L87.9,169.6L89.7,169.7ZM71.2,188.0L70.5,190.2L71.1,191.4L71.8,189.1ZM70.7,193.6L70.5,195.8L71.4,197.0L71.5,194.7ZM627.6,169.7L629.3,169.8L628.7,169.4L627.1,169.4ZM632.9,171.7L634.8,172.6L634.1,171.9L632.4,171.2ZM635.3,173.2L637.1,174.3L636.5,173.6L634.8,172.6ZM637.6,175.1L639.2,176.5L638.7,175.6L637.1,174.3ZM639.6,177.4L641.1,179.1L640.7,178.1L639.2,176.5ZM639.2,176.5L640.7,178.1L640.2,177.1L638.7,175.6ZM641.2,181.0L642.6,182.9L642.6,181.9L641.3,180.0ZM641.3,180.0L642.6,181.9L642.4,180.8L641.1,179.1ZM641.1,179.1L642.4,180.8L642.0,179.8L640.7,178.1ZM642.3,184.0L643.4,186.0L643.7,184.9L642.6,182.9ZM642.9,187.1L643.8,189.3L644.3,188.2L643.4,186.0ZM641.0,192.3L641.5,194.7L642.7,193.7L642.1,191.4ZM643.8,189.3L644.4,191.5L644.9,190.4L644.3,188.2ZM644.4,191.5L644.8,193.8L645.3,192.6L644.9,190.4ZM351.1,341.4L350.4,344.1L348.2,343.4L349.0,340.7Z" fill="#b4c5e1" stroke="#b4c5e1" stroke-width="0.5"/><path d="M358.6,51.1L378.8,60.0L379.4,60.0L359.2,51.1ZM349.7,51.1L329.9,60.0L329.3,60.0L349.0,51.1ZM378.8,60.0L399.4,69.1L400.0,69.1L379.4,60.0ZM329.9,60.0L309.9,69.1L309.3,69.1L329.3,60.0ZM399.4,69.1L420.4,78.4L421.0,78.3L400.0,69.1ZM309.9,69.1L289.5,78.3L288.9,78.3L309.3,69.1ZM420.4,78.4L441.7,87.8L442.3,87.7L421.0,78.3ZM289.5,78.3L268.8,87.7L268.2,87.7L288.9,78.3ZM441.7,87.8L463.4,97.3L464.0,97.3L442.3,87.7ZM268.8,87.7L247.7,97.3L247.1,97.2L268.2,87.7ZM463.4,97.3L485.4,107.1L486.0,107.0L464.0,97.3ZM247.7,97.3L226.2,107.0L225.6,106.9L247.1,97.2ZM485.4,107.1L507.9,117.0L508.4,116.9L486.0,107.0ZM226.2,107.0L204.4,116.9L203.8,116.8L225.6,106.9ZM507.9,117.0L530.7,127.1L531.3,127.0L508.4,116.9ZM204.4,116.9L182.2,126.9L181.6,126.9L203.8,116.8ZM530.7,127.1L553.9,137.3L554.5,137.2L531.3,127.0ZM182.2,126.9L159.6,137.2L158.9,137.1L181.6,126.9ZM553.9,137.3L577.6,147.7L578.2,147.7L554.5,137.2ZM159.6,137.2L136.5,147.6L135.9,147.5L158.9,137.1ZM577.6,147.7L601.7,158.4L602.3,158.3L578.2,147.7ZM136.5,147.6L113.1,158.2L112.5,158.2L135.9,147.5ZM601.7,158.4L626.2,169.2L626.8,169.1L602.3,158.3ZM113.1,158.2L89.2,169.1L88.6,169.0L112.5,158.2ZM638.5,189.4L619.2,200.7L619.5,201.6L638.8,190.4ZM619.2,200.7L599.5,212.2L599.8,213.1L619.5,201.6ZM599.5,212.2L579.4,223.8L579.8,224.8L599.8,213.1ZM579.4,223.8L559.0,235.8L559.3,236.7L579.8,224.8ZM559.0,235.8L538.1,247.9L538.5,248.9L559.3,236.7ZM538.1,247.9L516.9,260.3L517.2,261.3L538.5,248.9ZM516.9,260.3L495.2,272.9L495.6,273.9L517.2,261.3ZM495.2,272.9L473.1,285.8L473.5,286.8L495.6,273.9ZM473.1,285.8L450.5,299.0L450.9,300.0L473.5,286.8ZM450.5,299.0L427.5,312.4L427.9,313.4L450.9,300.0ZM427.5,312.4L404.0,326.0L404.4,327.1L427.9,313.4ZM404.0,326.0L380.1,340.0L380.5,341.1L404.4,327.1ZM120.6,211.3L126.8,214.8L126.4,215.7L120.1,212.2ZM83.3,192.6L89.3,196.0L88.9,196.9L82.9,193.6ZM76.7,191.2L82.6,194.5L82.3,195.5L76.4,192.1ZM82.6,194.5L88.6,197.9L88.3,198.9L82.3,195.5ZM88.6,197.9L94.6,201.3L94.4,202.3L88.3,198.9ZM94.6,201.3L100.7,204.7L100.4,205.7L94.4,202.3ZM100.7,204.7L106.8,208.2L106.5,209.1L100.4,205.7ZM106.8,208.2L112.9,211.6L112.6,212.6L106.5,209.1ZM112.9,211.6L119.1,215.1L118.8,216.1L112.6,212.6ZM119.1,215.1L125.3,218.6L125.0,219.6L118.8,216.1ZM125.3,218.6L131.5,222.1L131.2,223.1L125.0,219.6ZM131.5,222.1L137.8,225.7L137.5,226.6L131.2,223.1ZM137.8,225.7L144.1,229.2L143.8,230.2L137.5,226.6ZM144.1,229.2L150.5,232.8L150.2,233.8L143.8,230.2ZM150.5,232.8L156.8,236.4L156.5,237.4L150.2,233.8ZM156.8,236.4L163.2,240.0L162.9,241.0L156.5,237.4ZM163.2,240.0L169.7,243.7L169.4,244.7L162.9,241.0ZM169.7,243.7L176.2,247.3L175.9,248.3L169.4,244.7ZM176.2,247.3L182.7,251.0L182.4,252.0L175.9,248.3ZM182.7,251.0L189.3,254.7L189.0,255.7L182.4,252.0ZM189.3,254.7L195.9,258.5L195.6,259.4L189.0,255.7ZM195.9,258.5L202.5,262.2L202.2,263.2L195.6,259.4ZM202.5,262.2L209.2,266.0L208.9,267.0L202.2,263.2ZM209.2,266.0L215.9,269.8L215.6,270.8L208.9,267.0ZM215.9,269.8L222.7,273.6L222.4,274.6L215.6,270.8ZM222.7,273.6L229.5,277.4L229.2,278.4L222.4,274.6ZM229.5,277.4L236.3,281.3L236.0,282.3L229.2,278.4ZM236.3,281.3L243.2,285.2L242.9,286.2L236.0,282.3ZM243.2,285.2L250.2,289.1L249.8,290.1L242.9,286.2ZM250.2,289.1L257.1,293.0L256.8,294.0L249.8,290.1ZM257.1,293.0L264.1,297.0L263.8,298.0L256.8,294.0ZM264.1,297.0L271.2,300.9L270.8,302.0L263.8,298.0ZM271.2,300.9L278.3,304.9L277.9,306.0L270.8,302.0ZM278.3,304.9L285.4,309.0L285.1,310.0L277.9,306.0ZM285.4,309.0L292.6,313.0L292.2,314.1L285.1,310.0ZM292.6,313.0L299.8,317.1L299.5,318.1L292.2,314.1ZM299.8,317.1L307.1,321.2L306.7,322.2L299.5,318.1ZM307.1,321.2L314.4,325.3L314.0,326.4L306.7,322.2ZM314.4,325.3L321.7,329.5L321.4,330.5L314.0,326.4ZM321.7,329.5L329.1,333.7L328.8,334.7L321.4,330.5ZM329.1,333.7L336.6,337.9L336.2,338.9L328.8,334.7ZM336.6,337.9L344.1,342.1L343.7,343.2L336.2,338.9ZM75.4,196.9L81.4,200.2L81.3,201.2L75.3,197.8ZM81.4,200.2L87.4,203.6L87.3,204.6L81.3,201.2ZM87.4,203.6L93.4,207.0L93.3,208.0L87.3,204.6ZM93.4,207.0L99.4,210.5L99.3,211.4L93.3,208.0ZM99.4,210.5L105.5,213.9L105.4,214.9L99.3,211.4ZM105.5,213.9L111.6,217.4L111.5,218.4L105.4,214.9ZM111.6,217.4L117.8,220.9L117.7,221.8L111.5,218.4ZM117.8,220.9L124.0,224.4L123.9,225.4L117.7,221.8ZM124.0,224.4L130.2,227.9L130.1,228.9L123.9,225.4ZM130.2,227.9L136.5,231.5L136.4,232.4L130.1,228.9ZM136.5,231.5L142.8,235.1L142.6,236.0L136.4,232.4ZM142.8,235.1L149.1,238.7L149.0,239.6L142.6,236.0ZM149.1,238.7L155.5,242.3L155.3,243.2L149.0,239.6ZM155.5,242.3L161.9,245.9L161.7,246.9L155.3,243.2ZM161.9,245.9L168.3,249.6L168.2,250.5L161.7,246.9ZM168.3,249.6L174.8,253.2L174.7,254.2L168.2,250.5ZM174.8,253.2L181.3,256.9L181.2,257.9L174.7,254.2ZM181.3,256.9L187.9,260.7L187.7,261.6L181.2,257.9ZM187.9,260.7L194.5,264.4L194.3,265.4L187.7,261.6ZM194.5,264.4L201.1,268.2L201.0,269.1L194.3,265.4ZM201.1,268.2L207.8,271.9L207.6,272.9L201.0,269.1ZM207.8,271.9L214.5,275.8L214.3,276.7L207.6,272.9ZM214.5,275.8L221.2,279.6L221.1,280.6L214.3,276.7ZM221.2,279.6L228.0,283.4L227.9,284.4L221.1,280.6ZM228.0,283.4L234.8,287.3L234.7,288.3L227.9,284.4ZM234.8,287.3L241.7,291.2L241.6,292.2L234.7,288.3ZM241.7,291.2L248.6,295.1L248.5,296.1L241.6,292.2ZM248.6,295.1L255.6,299.1L255.4,300.1L248.5,296.1ZM255.6,299.1L262.6,303.0L262.4,304.0L255.4,300.1ZM262.6,303.0L269.6,307.0L269.5,308.0L262.4,304.0ZM269.6,307.0L276.7,311.1L276.5,312.1L269.5,308.0ZM276.7,311.1L283.8,315.1L283.6,316.1L276.5,312.1ZM283.8,315.1L291.0,319.2L290.8,320.2L283.6,316.1ZM291.0,319.2L298.2,323.3L298.0,324.3L290.8,320.2ZM298.2,323.3L305.4,327.4L305.3,328.4L298.0,324.3ZM305.4,327.4L312.7,331.5L312.6,332.5L305.3,328.4ZM312.7,331.5L320.1,335.7L319.9,336.7L312.6,332.5ZM320.1,335.7L327.5,339.9L327.3,340.9L319.9,336.7ZM327.5,339.9L334.9,344.1L334.7,345.1L327.3,340.9ZM334.9,344.1L342.4,348.3L342.2,349.4L334.7,345.1ZM94.4,485.4L94.5,486.0L69.7,196.1L69.6,195.6ZM94.5,486.0L94.6,486.6L69.9,196.6L69.7,196.1ZM349.1,50.6L348.0,50.7L348.9,50.5L349.9,50.4ZM358.2,50.4L359.2,50.5L360.1,50.7L359.0,50.6ZM89.7,169.7L87.9,169.6L87.4,169.9L89.4,169.9ZM73.8,178.6L72.7,180.3L72.1,181.4L73.3,179.6ZM72.6,186.9L71.8,189.1L72.5,190.2L73.4,188.0ZM70.9,186.9L70.2,189.0L70.5,190.2L71.2,188.0ZM70.2,189.0L69.7,191.2L70.1,192.4L70.5,190.2ZM70.1,192.4L69.9,194.6L70.5,195.8L70.7,193.6ZM69.6,193.4L69.6,195.6L70.0,196.8L69.9,194.6ZM629.9,170.2L631.7,170.6L631.0,170.1L629.3,169.8ZM632.4,171.2L634.1,171.9L633.4,171.3L631.7,170.6ZM634.8,172.6L636.5,173.6L635.8,172.8L634.1,171.9ZM637.1,174.3L638.7,175.6L638.1,174.8L636.5,173.6ZM638.7,175.6L640.2,177.1L639.5,176.2L638.1,174.8ZM640.7,178.1L642.0,179.8L641.4,178.7L640.2,177.1ZM642.6,182.9L643.7,184.9L643.7,183.8L642.6,181.9ZM642.6,181.9L643.7,183.8L643.5,182.7L642.4,180.8ZM642.4,180.8L643.5,182.7L643.1,181.6L642.0,179.8ZM639.0,190.8L639.6,193.2L641.0,192.3L640.3,190.0ZM643.4,186.0L644.3,188.2L644.5,187.0L643.7,184.9ZM353.3,342.0L352.7,344.8L350.4,344.1L351.1,341.4ZM360.1,345.8L359.9,348.6L357.3,348.4L357.6,345.6ZM344.3,350.4L344.0,352.9L341.9,351.8L342.2,349.4Z" fill="#b5c5e1" stroke="#b5c5e1" stroke-width="0.5"/><path d="M359.2,51.1L379.4,60.0L380.0,60.0L359.8,51.1ZM349.0,51.1L329.3,60.0L328.7,60.0L348.4,51.1ZM379.4,60.0L400.0,69.1L400.6,69.1L380.0,60.0ZM329.3,60.0L309.3,69.1L308.7,69.1L328.7,60.0ZM400.0,69.1L421.0,78.3L421.6,78.3L400.6,69.1ZM309.3,69.1L288.9,78.3L288.3,78.3L308.7,69.1ZM421.0,78.3L442.3,87.7L442.9,87.7L421.6,78.3ZM288.9,78.3L268.2,87.7L267.6,87.7L288.3,78.3ZM442.3,87.7L464.0,97.3L464.5,97.3L442.9,87.7ZM268.2,87.7L247.1,97.2L246.5,97.2L267.6,87.7ZM464.0,97.3L486.0,107.0L486.6,107.0L464.5,97.3ZM247.1,97.2L225.6,106.9L225.0,106.9L246.5,97.2ZM486.0,107.0L508.4,116.9L509.0,116.9L486.6,107.0ZM225.6,106.9L203.8,116.8L203.2,116.8L225.0,106.9ZM508.4,116.9L531.3,127.0L531.9,127.0L509.0,116.9ZM203.8,116.8L181.6,126.9L181.0,126.9L203.2,116.8ZM531.3,127.0L554.5,137.2L555.1,137.2L531.9,127.0ZM181.6,126.9L158.9,137.1L158.3,137.1L181.0,126.9ZM554.5,137.2L578.2,147.7L578.7,147.6L555.1,137.2ZM158.9,137.1L135.9,147.5L135.3,147.5L158.3,137.1ZM578.2,147.7L602.3,158.3L602.8,158.3L578.7,147.6ZM135.9,147.5L112.5,158.2L111.9,158.1L135.3,147.5ZM602.3,158.3L626.8,169.1L627.4,169.1L602.8,158.3ZM112.5,158.2L88.6,169.0L88.0,168.9L111.9,158.1ZM638.8,190.4L619.5,201.6L619.8,202.6L639.1,191.3ZM619.5,201.6L599.8,213.1L600.1,214.1L619.8,202.6ZM599.8,213.1L579.8,224.8L580.1,225.8L600.1,214.1ZM579.8,224.8L559.3,236.7L559.6,237.7L580.1,225.8ZM559.3,236.7L538.5,248.9L538.8,249.9L559.6,237.7ZM538.5,248.9L517.2,261.3L517.6,262.3L538.8,249.9ZM517.2,261.3L495.6,273.9L495.9,274.9L517.6,262.3ZM495.6,273.9L473.5,286.8L473.8,287.8L495.9,274.9ZM473.5,286.8L450.9,300.0L451.3,301.0L473.8,287.8ZM450.9,300.0L427.9,313.4L428.3,314.4L451.3,301.0ZM427.9,313.4L404.4,327.1L404.8,328.1L428.3,314.4ZM404.4,327.1L380.5,341.1L380.8,342.1L404.8,328.1ZM349.3,51.1L347.8,51.1L348.4,50.8L349.8,50.9ZM358.4,50.9L359.7,50.8L360.4,51.1L358.9,51.1ZM627.1,169.4L628.7,169.4L627.9,169.1L626.5,169.2ZM636.5,173.6L638.1,174.8L637.3,173.9L635.8,172.8ZM638.1,174.8L639.5,176.2L638.6,175.2L637.3,173.9ZM640.2,177.1L641.4,178.7L640.7,177.7L639.5,176.2ZM642.0,179.8L643.1,181.6L642.5,180.5L641.4,178.7ZM643.7,184.9L644.5,187.0L644.6,185.9L643.7,183.8ZM643.7,183.8L644.6,185.9L644.4,184.7L643.5,182.7ZM643.5,182.7L644.4,184.7L643.9,183.5L643.1,181.6Z" fill="#b5c6e2" stroke="#b5c6e2" stroke-width="0.5"/><path d="M359.8,51.1L380.0,60.0L380.6,60.0L360.4,51.1ZM348.4,51.1L328.7,60.0L328.1,60.0L347.8,51.1ZM380.0,60.0L400.6,69.1L401.2,69.1L380.6,60.0ZM328.7,60.0L308.7,69.1L308.1,69.1L328.1,60.0ZM400.6,69.1L421.6,78.3L422.2,78.3L401.2,69.1ZM308.7,69.1L288.3,78.3L287.7,78.3L308.1,69.1ZM421.6,78.3L442.9,87.7L443.4,87.7L422.2,78.3ZM288.3,78.3L267.6,87.7L267.0,87.7L287.7,78.3ZM442.9,87.7L464.5,97.3L465.1,97.3L443.4,87.7ZM267.6,87.7L246.5,97.2L245.9,97.2L267.0,87.7ZM464.5,97.3L486.6,107.0L487.2,107.0L465.1,97.3ZM246.5,97.2L225.0,106.9L224.4,106.9L245.9,97.2ZM486.6,107.0L509.0,116.9L509.6,116.9L487.2,107.0ZM225.0,106.9L203.2,116.8L202.6,116.8L224.4,106.9ZM509.0,116.9L531.9,127.0L532.4,127.0L509.6,116.9ZM203.2,116.8L181.0,126.9L180.4,126.9L202.6,116.8ZM531.9,127.0L555.1,137.2L555.7,137.2L532.4,127.0ZM181.0,126.9L158.3,137.1L157.8,137.1L180.4,126.9ZM555.1,137.2L578.7,147.6L579.3,147.6L555.7,137.2ZM158.3,137.1L135.3,147.5L134.7,147.5L157.8,137.1ZM578.7,147.6L602.8,158.3L603.4,158.3L579.3,147.6ZM135.3,147.5L111.9,158.1L111.3,158.1L134.7,147.5ZM602.8,158.3L627.4,169.1L627.9,169.1L603.4,158.3ZM111.9,158.1L88.0,168.9L87.4,168.9L111.3,158.1ZM639.1,191.3L619.8,202.6L620.1,203.6L639.4,192.3ZM619.8,202.6L600.1,214.1L600.4,215.0L620.1,203.6ZM600.1,214.1L580.1,225.8L580.4,226.8L600.4,215.0ZM580.1,225.8L559.6,237.7L559.9,238.7L580.4,226.8ZM559.6,237.7L538.8,249.9L539.1,250.9L559.9,238.7ZM538.8,249.9L517.6,262.3L517.9,263.3L539.1,250.9ZM517.6,262.3L495.9,274.9L496.2,275.9L517.9,263.3ZM495.9,274.9L473.8,287.8L474.1,288.8L496.2,275.9ZM473.8,287.8L451.3,301.0L451.6,302.0L474.1,288.8ZM451.3,301.0L428.3,314.4L428.6,315.5L451.6,302.0ZM428.3,314.4L404.8,328.1L405.1,329.2L428.6,315.5ZM404.8,328.1L380.8,342.1L381.2,343.2L405.1,329.2ZM107.8,205.3L114.0,208.7L113.6,209.7L107.5,206.2ZM95.3,199.4L101.4,202.8L101.0,203.8L95.0,200.3ZM95.0,200.3L101.0,203.8L100.7,204.7L94.6,201.3ZM101.0,203.8L107.1,207.2L106.8,208.2L100.7,204.7ZM107.1,207.2L113.3,210.7L112.9,211.6L106.8,208.2ZM113.3,210.7L119.4,214.1L119.1,215.1L112.9,211.6ZM75.3,197.8L81.3,201.2L81.2,202.1L75.3,198.7ZM81.3,201.2L87.3,204.6L87.2,205.5L81.2,202.1ZM87.3,204.6L93.3,208.0L93.2,208.9L87.2,205.5ZM93.3,208.0L99.3,211.4L99.3,212.4L93.2,208.9ZM99.3,211.4L105.4,214.9L105.3,215.8L99.3,212.4ZM105.4,214.9L111.5,218.4L111.5,219.3L105.3,215.8ZM111.5,218.4L117.7,221.8L117.6,222.8L111.5,219.3ZM117.7,221.8L123.9,225.4L123.8,226.3L117.6,222.8ZM123.9,225.4L130.1,228.9L130.0,229.8L123.8,226.3ZM130.1,228.9L136.4,232.4L136.3,233.4L130.0,229.8ZM136.4,232.4L142.6,236.0L142.6,237.0L136.3,233.4ZM142.6,236.0L149.0,239.6L148.9,240.6L142.6,237.0ZM149.0,239.6L155.3,243.2L155.3,244.2L148.9,240.6ZM155.3,243.2L161.7,246.9L161.7,247.8L155.3,244.2ZM161.7,246.9L168.2,250.5L168.1,251.5L161.7,247.8ZM168.2,250.5L174.7,254.2L174.6,255.2L168.1,251.5ZM174.7,254.2L181.2,257.9L181.1,258.9L174.6,255.2ZM181.2,257.9L187.7,261.6L187.6,262.6L181.1,258.9ZM187.7,261.6L194.3,265.4L194.2,266.3L187.6,262.6ZM194.3,265.4L201.0,269.1L200.9,270.1L194.2,266.3ZM201.0,269.1L207.6,272.9L207.5,273.9L200.9,270.1ZM207.6,272.9L214.3,276.7L214.2,277.7L207.5,273.9ZM214.3,276.7L221.1,280.6L221.0,281.5L214.2,277.7ZM221.1,280.6L227.9,284.4L227.8,285.4L221.0,281.5ZM227.9,284.4L234.7,288.3L234.6,289.3L227.8,285.4ZM234.7,288.3L241.6,292.2L241.4,293.2L234.6,289.3ZM241.6,292.2L248.5,296.1L248.4,297.1L241.4,293.2ZM248.5,296.1L255.4,300.1L255.3,301.0L248.4,297.1ZM255.4,300.1L262.4,304.0L262.3,305.0L255.3,301.0ZM262.4,304.0L269.5,308.0L269.3,309.0L262.3,305.0ZM269.5,308.0L276.5,312.1L276.4,313.0L269.3,309.0ZM276.5,312.1L283.6,316.1L283.5,317.1L276.4,313.0ZM283.6,316.1L290.8,320.2L290.7,321.2L283.5,317.1ZM290.8,320.2L298.0,324.3L297.9,325.3L290.7,321.2ZM298.0,324.3L305.3,328.4L305.1,329.4L297.9,325.3ZM305.3,328.4L312.6,332.5L312.4,333.5L305.1,329.4ZM312.6,332.5L319.9,336.7L319.8,337.7L312.4,333.5ZM319.9,336.7L327.3,340.9L327.2,341.9L319.8,337.7ZM327.3,340.9L334.7,345.1L334.6,346.1L327.2,341.9ZM334.7,345.1L342.2,349.4L342.1,350.4L334.6,346.1ZM94.3,484.9L94.4,485.4L69.6,195.6L69.6,195.1ZM348.4,50.8L347.1,51.0L348.0,50.7L349.1,50.6ZM359.0,50.6L360.1,50.7L361.0,51.0L359.7,50.8ZM88.9,169.0L87.4,168.9L86.7,169.3L88.3,169.3ZM88.3,169.3L86.7,169.3L86.1,169.7L87.9,169.6ZM71.7,183.7L70.8,185.7L70.9,186.9L71.8,184.8ZM71.8,184.8L70.9,186.9L71.2,188.0L72.1,185.9ZM72.1,185.9L71.2,188.0L71.8,189.1L72.6,186.9ZM70.8,185.7L70.1,187.8L70.2,189.0L70.9,186.9ZM70.2,186.6L69.8,188.7L69.6,190.0L70.1,187.8ZM70.1,187.8L69.6,190.0L69.7,191.2L70.2,189.0ZM69.7,191.2L69.6,193.4L69.9,194.6L70.1,192.4ZM69.5,192.1L69.5,194.3L69.6,195.6L69.6,193.4ZM629.3,169.8L631.0,170.1L630.1,169.6L628.7,169.4ZM631.7,170.6L633.4,171.3L632.5,170.7L631.0,170.1ZM634.1,171.9L635.8,172.8L634.9,172.1L633.4,171.3ZM635.8,172.8L637.3,173.9L636.3,173.1L634.9,172.1ZM639.6,193.2L640.1,195.6L641.5,194.7L641.0,192.3ZM644.5,187.0L645.2,189.2L645.2,188.0L644.6,185.9ZM644.6,185.9L645.2,188.0L645.0,186.8L644.4,184.7ZM640.1,195.6L640.4,198.0L641.8,197.0L641.5,194.7ZM645.2,189.2L645.6,191.4L645.6,190.1L645.2,188.0ZM645.2,188.0L645.6,190.1L645.4,188.9L645.0,186.8Z" fill="#b6c6e2" stroke="#b6c6e2" stroke-width="0.5"/><path d="M360.4,51.1L380.6,60.0L381.2,60.1L360.9,51.2ZM347.8,51.1L328.1,60.0L327.5,60.1L347.2,51.2ZM380.6,60.0L401.2,69.1L401.8,69.2L381.2,60.1ZM328.1,60.0L308.1,69.1L307.5,69.1L327.5,60.1ZM401.2,69.1L422.2,78.3L422.7,78.4L401.8,69.2ZM308.1,69.1L287.7,78.3L287.1,78.4L307.5,69.1ZM422.2,78.3L443.4,87.7L444.0,87.8L422.7,78.4ZM287.7,78.3L267.0,87.7L266.4,87.7L287.1,78.4ZM443.4,87.7L465.1,97.3L465.7,97.3L444.0,87.8ZM267.0,87.7L245.9,97.2L245.3,97.3L266.4,87.7ZM465.1,97.3L487.2,107.0L487.7,107.1L465.7,97.3ZM245.9,97.2L224.4,106.9L223.8,107.0L245.3,97.3ZM487.2,107.0L509.6,116.9L510.1,116.9L487.7,107.1ZM224.4,106.9L202.6,116.8L202.0,116.9L223.8,107.0ZM509.6,116.9L532.4,127.0L533.0,127.0L510.1,116.9ZM202.6,116.8L180.4,126.9L179.8,126.9L202.0,116.9ZM532.4,127.0L555.7,137.2L556.2,137.2L533.0,127.0ZM180.4,126.9L157.8,137.1L157.2,137.1L179.8,126.9ZM555.7,137.2L579.3,147.6L579.8,147.7L556.2,137.2ZM157.8,137.1L134.7,147.5L134.2,147.5L157.2,137.1ZM579.3,147.6L603.4,158.3L603.9,158.3L579.8,147.7ZM134.7,147.5L111.3,158.1L110.7,158.1L134.2,147.5ZM603.4,158.3L627.9,169.1L628.5,169.1L603.9,158.3ZM111.3,158.1L87.4,168.9L86.9,168.9L110.7,158.1ZM639.4,192.3L620.1,203.6L620.3,204.5L639.6,193.2ZM620.1,203.6L600.4,215.0L600.7,216.0L620.3,204.5ZM600.4,215.0L580.4,226.8L580.6,227.7L600.7,216.0ZM580.4,226.8L559.9,238.7L560.2,239.7L580.6,227.7ZM559.9,238.7L539.1,250.9L539.4,251.9L560.2,239.7ZM539.1,250.9L517.9,263.3L518.1,264.3L539.4,251.9ZM517.9,263.3L496.2,275.9L496.5,276.9L518.1,264.3ZM496.2,275.9L474.1,288.8L474.4,289.9L496.5,276.9ZM474.1,288.8L451.6,302.0L451.9,303.0L474.4,289.9ZM451.6,302.0L428.6,315.5L428.9,316.5L451.9,303.0ZM428.6,315.5L405.1,329.2L405.4,330.2L428.9,316.5ZM405.1,329.2L381.2,343.2L381.5,344.2L405.4,330.2ZM120.1,212.2L126.4,215.7L126.0,216.7L119.8,213.2ZM119.8,213.2L126.0,216.7L125.6,217.6L119.4,214.1ZM75.2,199.6L81.2,203.0L81.2,203.9L75.2,200.6ZM81.2,203.0L87.2,206.4L87.1,207.3L81.2,203.9ZM87.2,206.4L93.2,209.8L93.2,210.8L87.1,207.3ZM93.2,209.8L99.2,213.3L99.2,214.2L93.2,210.8ZM99.2,213.3L105.3,216.7L105.3,217.7L99.2,214.2ZM105.3,216.7L111.4,220.2L111.4,221.1L105.3,217.7ZM111.4,220.2L117.6,223.7L117.5,224.6L111.4,221.1ZM117.6,223.7L123.7,227.2L123.7,228.2L117.5,224.6ZM123.7,227.2L130.0,230.8L129.9,231.7L123.7,228.2ZM130.0,230.8L136.2,234.3L136.2,235.3L129.9,231.7ZM136.2,234.3L142.5,237.9L142.5,238.8L136.2,235.3ZM142.5,237.9L148.8,241.5L148.8,242.4L142.5,238.8ZM148.8,241.5L155.2,245.1L155.2,246.1L148.8,242.4ZM155.2,245.1L161.6,248.8L161.6,249.7L155.2,246.1ZM161.6,248.8L168.0,252.4L168.0,253.4L161.6,249.7ZM168.0,252.4L174.5,256.1L174.5,257.0L168.0,253.4ZM174.5,256.1L181.0,259.8L181.0,260.8L174.5,257.0ZM181.0,259.8L187.6,263.5L187.5,264.5L181.0,260.8ZM187.6,263.5L194.2,267.3L194.1,268.2L187.5,264.5ZM194.2,267.3L200.8,271.1L200.7,272.0L194.1,268.2ZM200.8,271.1L207.4,274.8L207.4,275.8L200.7,272.0ZM207.4,274.8L214.1,278.7L214.1,279.6L207.4,275.8ZM214.1,278.7L220.9,282.5L220.8,283.4L214.1,279.6ZM220.9,282.5L227.7,286.4L227.6,287.3L220.8,283.4ZM227.7,286.4L234.5,290.2L234.4,291.2L227.6,287.3ZM234.5,290.2L241.4,294.1L241.3,295.1L234.4,291.2ZM241.4,294.1L248.3,298.1L248.2,299.0L241.3,295.1ZM248.3,298.1L255.2,302.0L255.2,303.0L248.2,299.0ZM255.2,302.0L262.2,306.0L262.1,306.9L255.2,303.0ZM262.2,306.0L269.2,310.0L269.2,311.0L262.1,306.9ZM269.2,310.0L276.3,314.0L276.2,315.0L269.2,311.0ZM276.3,314.0L283.4,318.1L283.4,319.0L276.2,315.0ZM283.4,318.1L290.6,322.1L290.5,323.1L283.4,319.0ZM290.6,322.1L297.8,326.2L297.7,327.2L290.5,323.1ZM297.8,326.2L305.0,330.4L305.0,331.3L297.7,327.2ZM305.0,330.4L312.3,334.5L312.3,335.5L305.0,331.3ZM312.3,334.5L319.7,338.7L319.6,339.6L312.3,335.5ZM319.7,338.7L327.0,342.9L327.0,343.8L319.6,339.6ZM327.0,342.9L334.5,347.1L334.4,348.1L327.0,343.8ZM334.5,347.1L341.9,351.3L341.9,352.3L334.4,348.1ZM347.8,51.1L346.3,51.3L347.1,51.0L348.4,50.8ZM359.7,50.8L361.0,51.0L361.8,51.3L360.4,51.1ZM347.1,51.0L345.8,51.4L346.9,51.1L348.0,50.7ZM360.1,50.7L361.2,51.1L362.2,51.4L361.0,51.0ZM87.4,168.9L86.1,169.1L85.2,169.5L86.7,169.3ZM86.7,169.3L85.2,169.5L84.4,170.0L86.1,169.7ZM74.6,177.9L73.3,179.6L72.9,180.7L74.3,178.9ZM71.2,183.4L70.6,185.4L70.2,186.6L70.9,184.5ZM70.9,184.5L70.2,186.6L70.1,187.8L70.8,185.7ZM69.6,190.0L69.5,192.1L69.6,193.4L69.7,191.2ZM628.7,169.4L630.1,169.6L629.2,169.2L627.9,169.1ZM631.0,170.1L632.5,170.7L631.5,170.1L630.1,169.6ZM632.5,170.7L633.9,171.4L632.8,170.8L631.5,170.1ZM350.0,338.0L349.0,340.7L347.1,339.9L348.2,337.2Z" fill="#b7c7e3" stroke="#b7c7e3" stroke-width="0.5"/><path d="M360.9,51.2L381.2,60.1L381.8,60.2L361.5,51.3ZM347.2,51.2L327.5,60.1L326.9,60.2L346.6,51.3ZM381.2,60.1L401.8,69.2L402.3,69.3L381.8,60.2ZM327.5,60.1L307.5,69.1L306.9,69.2L326.9,60.2ZM401.8,69.2L422.7,78.4L423.3,78.5L402.3,69.3ZM307.5,69.1L287.1,78.4L286.5,78.5L306.9,69.2ZM422.7,78.4L444.0,87.8L444.6,87.9L423.3,78.5ZM287.1,78.4L266.4,87.7L265.8,87.8L286.5,78.5ZM444.0,87.8L465.7,97.3L466.2,97.4L444.6,87.9ZM266.4,87.7L245.3,97.3L244.7,97.4L265.8,87.8ZM465.7,97.3L487.7,107.1L488.3,107.1L466.2,97.4ZM245.3,97.3L223.8,107.0L223.3,107.1L244.7,97.4ZM487.7,107.1L510.1,116.9L510.7,117.0L488.3,107.1ZM223.8,107.0L202.0,116.9L201.4,116.9L223.3,107.1ZM510.1,116.9L533.0,127.0L533.5,127.1L510.7,117.0ZM202.0,116.9L179.8,126.9L179.2,127.0L201.4,116.9ZM533.0,127.0L556.2,137.2L556.7,137.3L533.5,127.1ZM179.8,126.9L157.2,137.1L156.6,137.2L179.2,127.0ZM556.2,137.2L579.8,147.7L580.4,147.7L556.7,137.3ZM157.2,137.1L134.2,147.5L133.6,147.6L156.6,137.2ZM579.8,147.7L603.9,158.3L604.5,158.4L580.4,147.7ZM134.2,147.5L110.7,158.1L110.2,158.2L133.6,147.6ZM603.9,158.3L628.5,169.1L629.0,169.2L604.5,158.4ZM110.7,158.1L86.9,168.9L86.3,169.0L110.2,158.2ZM639.6,193.2L620.3,204.5L620.6,205.5L639.9,194.2ZM620.3,204.5L600.7,216.0L600.9,217.0L620.6,205.5ZM600.7,216.0L580.6,227.7L580.9,228.7L600.9,217.0ZM580.6,227.7L560.2,239.7L560.4,240.7L580.9,228.7ZM560.2,239.7L539.4,251.9L539.6,252.9L560.4,240.7ZM539.4,251.9L518.1,264.3L518.4,265.3L539.6,252.9ZM518.1,264.3L496.5,276.9L496.7,278.0L518.4,265.3ZM496.5,276.9L474.4,289.9L474.7,290.9L496.7,278.0ZM474.4,289.9L451.9,303.0L452.1,304.1L474.7,290.9ZM451.9,303.0L428.9,316.5L429.2,317.5L452.1,304.1ZM428.9,316.5L405.4,330.2L405.7,331.2L429.2,317.5ZM405.4,330.2L381.5,344.2L381.8,345.3L405.7,331.2ZM640.4,198.0L621.1,209.3L621.2,210.2L640.4,198.9ZM621.1,209.3L601.5,220.8L601.5,221.8L621.2,210.2ZM601.5,220.8L581.4,232.6L581.5,233.5L601.5,221.8ZM581.4,232.6L561.0,244.6L561.1,245.5L581.5,233.5ZM561.0,244.6L540.2,256.8L540.3,257.7L561.1,245.5ZM540.2,256.8L519.0,269.2L519.1,270.2L540.3,257.7ZM519.0,269.2L497.4,281.9L497.5,282.9L519.1,270.2ZM497.4,281.9L475.4,294.9L475.5,295.8L497.5,282.9ZM475.4,294.9L452.9,308.1L453.0,309.1L475.5,295.8ZM452.9,308.1L429.9,321.6L430.0,322.6L453.0,309.1ZM429.9,321.6L406.5,335.3L406.6,336.3L430.0,322.6ZM406.5,335.3L382.6,349.4L382.7,350.4L406.6,336.3Z" fill="#b7c8e4" stroke="#b7c8e4" stroke-width="0.5"/><path d="M361.5,51.3L381.8,60.2L382.3,60.3L362.1,51.4ZM346.6,51.3L326.9,60.2L326.3,60.3L346.0,51.4ZM381.8,60.2L402.3,69.3L402.9,69.4L382.3,60.3ZM326.9,60.2L306.9,69.2L306.3,69.4L326.3,60.3ZM402.3,69.3L423.3,78.5L423.8,78.6L402.9,69.4ZM306.9,69.2L286.5,78.5L285.9,78.6L306.3,69.4ZM423.3,78.5L444.6,87.9L445.1,88.0L423.8,78.6ZM286.5,78.5L265.8,87.8L265.2,88.0L285.9,78.6ZM444.6,87.9L466.2,97.4L466.8,97.6L445.1,88.0ZM265.8,87.8L244.7,97.4L244.1,97.5L265.2,88.0ZM466.2,97.4L488.3,107.1L488.8,107.3L466.8,97.6ZM244.7,97.4L223.3,107.1L222.7,107.2L244.1,97.5ZM488.3,107.1L510.7,117.0L511.2,117.1L488.8,107.3ZM223.3,107.1L201.4,116.9L200.9,117.1L222.7,107.2ZM510.7,117.0L533.5,127.1L534.0,127.2L511.2,117.1ZM201.4,116.9L179.2,127.0L178.7,127.1L200.9,117.1ZM533.5,127.1L556.7,137.3L557.3,137.4L534.0,127.2ZM179.2,127.0L156.6,137.2L156.1,137.3L178.7,127.1ZM556.7,137.3L580.4,147.7L580.9,147.9L557.3,137.4ZM156.6,137.2L133.6,147.6L133.1,147.7L156.1,137.3ZM580.4,147.7L604.5,158.4L605.0,158.5L580.9,147.9ZM133.6,147.6L110.2,158.2L109.6,158.3L133.1,147.7ZM604.5,158.4L629.0,169.2L629.5,169.3L605.0,158.5ZM110.2,158.2L86.3,169.0L85.8,169.1L109.6,158.3ZM639.9,194.2L620.6,205.5L620.7,206.4L640.0,195.1ZM620.6,205.5L600.9,217.0L601.1,217.9L620.7,206.4ZM600.9,217.0L580.9,228.7L581.0,229.7L601.1,217.9ZM580.9,228.7L560.4,240.7L560.6,241.6L581.0,229.7ZM560.4,240.7L539.6,252.9L539.8,253.8L560.6,241.6ZM539.6,252.9L518.4,265.3L518.6,266.3L539.8,253.8ZM518.4,265.3L496.7,278.0L497.0,279.0L518.6,266.3ZM496.7,278.0L474.7,290.9L474.9,291.9L497.0,279.0ZM474.7,290.9L452.1,304.1L452.4,305.1L474.9,291.9ZM452.1,304.1L429.2,317.5L429.4,318.5L452.4,305.1ZM429.2,317.5L405.7,331.2L406.0,332.3L429.4,318.5ZM405.7,331.2L381.8,345.3L382.0,346.3L406.0,332.3ZM640.3,197.0L621.0,208.3L621.1,209.3L640.4,198.0ZM621.0,208.3L601.4,219.9L601.5,220.8L621.1,209.3ZM601.4,219.9L581.3,231.6L581.4,232.6L601.5,220.8ZM581.3,231.6L560.9,243.6L561.0,244.6L581.4,232.6ZM560.9,243.6L540.1,255.8L540.2,256.8L561.0,244.6ZM540.1,255.8L518.9,268.2L519.0,269.2L540.2,256.8ZM518.9,268.2L497.3,280.9L497.4,281.9L519.0,269.2ZM497.3,280.9L475.2,293.9L475.4,294.9L497.4,281.9ZM475.2,293.9L452.7,307.1L452.9,308.1L475.4,294.9ZM452.7,307.1L429.8,320.6L429.9,321.6L452.9,308.1ZM429.8,320.6L406.4,334.3L406.5,335.3L429.9,321.6ZM406.4,334.3L382.4,348.3L382.6,349.4L406.5,335.3ZM138.9,222.8L145.2,226.3L144.8,227.3L138.5,223.7ZM75.3,198.7L81.2,202.1L81.2,203.0L75.2,199.6ZM81.2,202.1L87.2,205.5L87.2,206.4L81.2,203.0ZM87.2,205.5L93.2,208.9L93.2,209.8L87.2,206.4ZM93.2,208.9L99.3,212.4L99.2,213.3L93.2,209.8ZM99.3,212.4L105.3,215.8L105.3,216.7L99.2,213.3ZM105.3,215.8L111.5,219.3L111.4,220.2L105.3,216.7ZM111.5,219.3L117.6,222.8L117.6,223.7L111.4,220.2ZM117.6,222.8L123.8,226.3L123.7,227.2L117.6,223.7ZM123.8,226.3L130.0,229.8L130.0,230.8L123.7,227.2ZM130.0,229.8L136.3,233.4L136.2,234.3L130.0,230.8ZM136.3,233.4L142.6,237.0L142.5,237.9L136.2,234.3ZM142.6,237.0L148.9,240.6L148.8,241.5L142.5,237.9ZM148.9,240.6L155.3,244.2L155.2,245.1L148.8,241.5ZM155.3,244.2L161.7,247.8L161.6,248.8L155.2,245.1ZM161.7,247.8L168.1,251.5L168.0,252.4L161.6,248.8ZM168.1,251.5L174.6,255.2L174.5,256.1L168.0,252.4ZM174.6,255.2L181.1,258.9L181.0,259.8L174.5,256.1ZM181.1,258.9L187.6,262.6L187.6,263.5L181.0,259.8ZM187.6,262.6L194.2,266.3L194.2,267.3L187.6,263.5ZM194.2,266.3L200.9,270.1L200.8,271.1L194.2,267.3ZM200.9,270.1L207.5,273.9L207.4,274.8L200.8,271.1ZM207.5,273.9L214.2,277.7L214.1,278.7L207.4,274.8ZM214.2,277.7L221.0,281.5L220.9,282.5L214.1,278.7ZM221.0,281.5L227.8,285.4L227.7,286.4L220.9,282.5ZM227.8,285.4L234.6,289.3L234.5,290.2L227.7,286.4ZM234.6,289.3L241.4,293.2L241.4,294.1L234.5,290.2ZM241.4,293.2L248.4,297.1L248.3,298.1L241.4,294.1ZM248.4,297.1L255.3,301.0L255.2,302.0L248.3,298.1ZM255.3,301.0L262.3,305.0L262.2,306.0L255.2,302.0ZM262.3,305.0L269.3,309.0L269.2,310.0L262.2,306.0ZM269.3,309.0L276.4,313.0L276.3,314.0L269.2,310.0ZM276.4,313.0L283.5,317.1L283.4,318.1L276.3,314.0ZM283.5,317.1L290.7,321.2L290.6,322.1L283.4,318.1ZM290.7,321.2L297.9,325.3L297.8,326.2L290.6,322.1ZM297.9,325.3L305.1,329.4L305.0,330.4L297.8,326.2ZM305.1,329.4L312.4,333.5L312.3,334.5L305.0,330.4ZM312.4,333.5L319.8,337.7L319.7,338.7L312.3,334.5ZM319.8,337.7L327.2,341.9L327.0,342.9L319.7,338.7ZM327.2,341.9L334.6,346.1L334.5,347.1L327.0,342.9ZM334.6,346.1L342.1,350.4L341.9,351.3L334.5,347.1ZM346.3,51.3L344.9,51.8L345.8,51.4L347.1,51.0ZM361.0,51.0L362.2,51.4L363.1,51.8L361.8,51.3ZM630.1,169.6L631.5,170.1L630.4,169.6L629.2,169.2Z" fill="#b8c8e4" stroke="#b8c8e4" stroke-width="0.5"/><path d="M362.1,51.4L382.3,60.3L382.8,60.5L362.6,51.6ZM346.0,51.4L326.3,60.3L325.8,60.5L345.5,51.6ZM382.3,60.3L402.9,69.4L403.4,69.6L382.8,60.5ZM326.3,60.3L306.3,69.4L305.7,69.5L325.8,60.5ZM402.9,69.4L423.8,78.6L424.4,78.8L403.4,69.6ZM306.3,69.4L285.9,78.6L285.4,78.7L305.7,69.5ZM423.8,78.6L445.1,88.0L445.6,88.2L424.4,78.8ZM285.9,78.6L265.2,88.0L264.7,88.1L285.4,78.7ZM445.1,88.0L466.8,97.6L467.3,97.7L445.6,88.2ZM265.2,88.0L244.1,97.5L243.6,97.6L264.7,88.1ZM466.8,97.6L488.8,107.3L489.3,107.4L467.3,97.7ZM244.1,97.5L222.7,107.2L222.2,107.3L243.6,97.6ZM488.8,107.3L511.2,117.1L511.7,117.3L489.3,107.4ZM222.7,107.2L200.9,117.1L200.3,117.2L222.2,107.3ZM511.2,117.1L534.0,127.2L534.5,127.4L511.7,117.3ZM200.9,117.1L178.7,127.1L178.1,127.2L200.3,117.2ZM534.0,127.2L557.3,137.4L557.8,137.6L534.5,127.4ZM178.7,127.1L156.1,137.3L155.5,137.5L178.1,127.2ZM557.3,137.4L580.9,147.9L581.4,148.0L557.8,137.6ZM156.1,137.3L133.1,147.7L132.5,147.9L155.5,137.5ZM580.9,147.9L605.0,158.5L605.5,158.6L581.4,148.0ZM133.1,147.7L109.6,158.3L109.1,158.5L132.5,147.9ZM605.0,158.5L629.5,169.3L630.0,169.4L605.5,158.6ZM109.6,158.3L85.8,169.1L85.3,169.2L109.1,158.5ZM362.6,51.6L382.8,60.5L383.4,60.7L363.1,51.8ZM345.5,51.6L325.8,60.5L325.2,60.7L344.9,51.8ZM382.8,60.5L403.4,69.6L403.9,69.8L383.4,60.7ZM325.8,60.5L305.7,69.5L305.2,69.7L325.2,60.7ZM403.4,69.6L424.4,78.8L424.9,79.0L403.9,69.8ZM305.7,69.5L285.4,78.7L284.8,78.9L305.2,69.7ZM424.4,78.8L445.6,88.2L446.2,88.4L424.9,79.0ZM285.4,78.7L264.7,88.1L264.1,88.3L284.8,78.9ZM445.6,88.2L467.3,97.7L467.8,97.9L446.2,88.4ZM264.7,88.1L243.6,97.6L243.1,97.8L264.1,88.3ZM467.3,97.7L489.3,107.4L489.8,107.6L467.8,97.9ZM243.6,97.6L222.2,107.3L221.6,107.5L243.1,97.8ZM489.3,107.4L511.7,117.3L512.2,117.5L489.8,107.6ZM222.2,107.3L200.3,117.2L199.8,117.4L221.6,107.5ZM511.7,117.3L534.5,127.4L535.0,127.5L512.2,117.5ZM200.3,117.2L178.1,127.2L177.6,127.4L199.8,117.4ZM534.5,127.4L557.8,137.6L558.3,137.8L535.0,127.5ZM178.1,127.2L155.5,137.5L155.0,137.6L177.6,127.4ZM557.8,137.6L581.4,148.0L581.9,148.2L558.3,137.8ZM155.5,137.5L132.5,147.9L132.0,148.0L155.0,137.6ZM581.4,148.0L605.5,158.6L605.9,158.8L581.9,148.2ZM132.5,147.9L109.1,158.5L108.6,158.6L132.0,148.0ZM605.5,158.6L630.0,169.4L630.4,169.6L605.9,158.8ZM109.1,158.5L85.3,169.2L84.8,169.4L108.6,158.6ZM344.9,51.8L325.2,60.7L324.7,60.9L344.4,52.0ZM325.2,60.7L305.2,69.7L304.7,70.0L324.7,60.9ZM305.2,69.7L284.8,78.9L284.3,79.2L304.7,70.0ZM284.8,78.9L264.1,88.3L263.6,88.5L284.3,79.2ZM264.1,88.3L243.1,97.8L242.5,98.1L263.6,88.5ZM243.1,97.8L221.6,107.5L221.1,107.8L242.5,98.1ZM221.6,107.5L199.8,117.4L199.3,117.6L221.1,107.8ZM199.8,117.4L177.6,127.4L177.1,127.7L199.3,117.6ZM177.6,127.4L155.0,137.6L154.5,137.9L177.1,127.7ZM155.0,137.6L132.0,148.0L131.5,148.3L154.5,137.9ZM132.0,148.0L108.6,158.6L108.1,158.9L131.5,148.3ZM108.6,158.6L84.8,169.4L84.3,169.6L108.1,158.9ZM640.0,195.1L620.7,206.4L620.9,207.4L640.2,196.1ZM620.7,206.4L601.1,217.9L601.2,218.9L620.9,207.4ZM601.1,217.9L581.0,229.7L581.2,230.7L601.2,218.9ZM581.0,229.7L560.6,241.6L560.8,242.6L581.2,230.7ZM560.6,241.6L539.8,253.8L540.0,254.8L560.8,242.6ZM539.8,253.8L518.6,266.3L518.8,267.3L540.0,254.8ZM518.6,266.3L497.0,279.0L497.1,279.9L518.8,267.3ZM497.0,279.0L474.9,291.9L475.1,292.9L497.1,279.9ZM474.9,291.9L452.4,305.1L452.6,306.1L475.1,292.9ZM452.4,305.1L429.4,318.5L429.6,319.6L452.6,306.1ZM429.4,318.5L406.0,332.3L406.2,333.3L429.6,319.6ZM406.0,332.3L382.0,346.3L382.3,347.3L406.2,333.3ZM640.2,196.1L620.9,207.4L621.0,208.3L640.3,197.0ZM620.9,207.4L601.2,218.9L601.4,219.9L621.0,208.3ZM601.2,218.9L581.2,230.7L581.3,231.6L601.4,219.9ZM581.2,230.7L560.8,242.6L560.9,243.6L581.3,231.6ZM560.8,242.6L540.0,254.8L540.1,255.8L560.9,243.6ZM540.0,254.8L518.8,267.3L518.9,268.2L540.1,255.8ZM518.8,267.3L497.1,279.9L497.3,280.9L518.9,268.2ZM497.1,279.9L475.1,292.9L475.2,293.9L497.3,280.9ZM475.1,292.9L452.6,306.1L452.7,307.1L475.2,293.9ZM452.6,306.1L429.6,319.6L429.8,320.6L452.7,307.1ZM429.6,319.6L406.2,333.3L406.4,334.3L429.8,320.6ZM406.2,333.3L382.3,347.3L382.4,348.3L406.4,334.3ZM86.1,169.1L84.8,169.4L83.7,169.9L85.2,169.5ZM83.7,169.9L82.4,170.6L81.3,171.2L82.8,170.5ZM82.8,170.5L81.3,171.2L80.3,171.9L81.9,171.1ZM75.8,176.0L74.5,177.5L73.8,178.6L75.1,176.9Z" fill="#b9c9e5" stroke="#b9c9e5" stroke-width="0.5"/><path d="M103.9,501.6L122.0,514.3L121.6,513.9L103.5,501.2ZM122.0,514.3L140.4,527.1L140.0,526.8L121.6,513.9ZM140.4,527.1L159.1,540.2L158.7,539.9L140.0,526.8ZM159.1,540.2L178.1,553.6L177.7,553.2L158.7,539.9ZM178.1,553.6L197.5,567.1L197.1,566.8L177.7,553.2ZM197.5,567.1L217.2,580.9L216.8,580.6L197.1,566.8ZM217.2,580.9L237.2,594.9L236.8,594.6L216.8,580.6ZM237.2,594.9L257.6,609.2L257.2,608.9L236.8,594.6ZM257.6,609.2L278.4,623.8L278.0,623.4L257.2,608.9ZM278.4,623.8L299.5,638.6L299.1,638.2L278.0,623.4ZM299.5,638.6L321.0,653.6L320.6,653.3L299.1,638.2ZM321.0,653.6L342.9,669.0L342.5,668.7L320.6,653.3ZM103.5,501.2L121.6,513.9L121.1,513.5L103.0,500.9ZM121.6,513.9L140.0,526.8L139.5,526.4L121.1,513.5ZM140.0,526.8L158.7,539.9L158.3,539.5L139.5,526.4ZM158.7,539.9L177.7,553.2L177.3,552.9L158.3,539.5ZM177.7,553.2L197.1,566.8L196.7,566.4L177.3,552.9ZM197.1,566.8L216.8,580.6L216.4,580.2L196.7,566.4ZM216.8,580.6L236.8,594.6L236.4,594.3L216.4,580.2ZM236.8,594.6L257.2,608.9L256.8,608.5L236.4,594.3ZM257.2,608.9L278.0,623.4L277.6,623.1L256.8,608.5ZM278.0,623.4L299.1,638.2L298.7,637.9L277.6,623.1ZM299.1,638.2L320.6,653.3L320.2,653.0L298.7,637.9ZM320.6,653.3L342.5,668.7L342.2,668.3L320.2,653.0ZM103.0,500.9L121.1,513.5L120.7,513.1L102.6,500.5ZM121.1,513.5L139.5,526.4L139.1,526.0L120.7,513.1ZM139.5,526.4L158.3,539.5L157.9,539.1L139.1,526.0ZM158.3,539.5L177.3,552.9L176.9,552.5L157.9,539.1ZM177.3,552.9L196.7,566.4L196.3,566.0L176.9,552.5ZM196.7,566.4L216.4,580.2L216.0,579.8L196.3,566.0ZM216.4,580.2L236.4,594.3L236.0,593.9L216.0,579.8ZM236.4,594.3L256.8,608.5L256.4,608.2L236.0,593.9ZM256.8,608.5L277.6,623.1L277.2,622.7L256.4,608.2ZM277.6,623.1L298.7,637.9L298.4,637.5L277.2,622.7ZM298.7,637.9L320.2,653.0L319.9,652.6L298.4,637.5ZM320.2,653.0L342.2,668.3L341.8,667.9L319.9,652.6ZM102.6,500.5L120.7,513.1L120.4,512.7L102.2,500.0ZM120.7,513.1L139.1,526.0L138.8,525.6L120.4,512.7ZM139.1,526.0L157.9,539.1L157.5,538.7L138.8,525.6ZM157.9,539.1L176.9,552.5L176.5,552.0L157.5,538.7ZM176.9,552.5L196.3,566.0L195.9,565.6L176.5,552.0ZM196.3,566.0L216.0,579.8L215.6,579.4L195.9,565.6ZM216.0,579.8L236.0,593.9L235.7,593.4L215.6,579.4ZM236.0,593.9L256.4,608.2L256.1,607.7L235.7,593.4ZM256.4,608.2L277.2,622.7L276.9,622.3L256.1,607.7ZM277.2,622.7L298.4,637.5L298.0,637.1L276.9,622.3ZM298.4,637.5L319.9,652.6L319.6,652.2L298.0,637.1ZM319.9,652.6L341.8,667.9L341.5,667.5L319.6,652.2ZM102.2,500.0L120.4,512.7L120.0,512.3L101.9,499.6ZM120.4,512.7L138.8,525.6L138.4,525.1L120.0,512.3ZM138.8,525.6L157.5,538.7L157.1,538.3L138.4,525.1ZM157.5,538.7L176.5,552.0L176.2,551.6L157.1,538.3ZM176.5,552.0L195.9,565.6L195.6,565.1L176.2,551.6ZM195.9,565.6L215.6,579.4L215.3,578.9L195.6,565.1ZM215.6,579.4L235.7,593.4L235.3,593.0L215.3,578.9ZM235.7,593.4L256.1,607.7L255.8,607.3L235.3,593.0ZM256.1,607.7L276.9,622.3L276.5,621.8L255.8,607.3ZM276.9,622.3L298.0,637.1L297.7,636.6L276.5,621.8ZM298.0,637.1L319.6,652.2L319.2,651.7L297.7,636.6ZM319.6,652.2L341.5,667.5L341.2,667.1L319.2,651.7ZM101.9,499.6L120.0,512.3L119.7,511.8L101.5,499.1ZM120.0,512.3L138.4,525.1L138.1,524.7L119.7,511.8ZM138.4,525.1L157.1,538.3L156.8,537.8L138.1,524.7ZM157.1,538.3L176.2,551.6L175.9,551.1L156.8,537.8ZM176.2,551.6L195.6,565.1L195.3,564.7L175.9,551.1ZM195.6,565.1L215.3,578.9L215.0,578.5L195.3,564.7ZM215.3,578.9L235.3,593.0L235.0,592.5L215.0,578.5ZM235.3,593.0L255.8,607.3L255.5,606.8L235.0,592.5ZM255.8,607.3L276.5,621.8L276.2,621.4L255.5,606.8ZM276.5,621.8L297.7,636.6L297.4,636.2L276.2,621.4ZM297.7,636.6L319.2,651.7L319.0,651.2L297.4,636.2ZM319.2,651.7L341.2,667.1L340.9,666.6L319.0,651.2ZM101.5,499.1L119.7,511.8L119.4,511.3L101.2,498.6ZM119.7,511.8L138.1,524.7L137.8,524.2L119.4,511.3ZM138.1,524.7L156.8,537.8L156.5,537.3L137.8,524.2ZM156.8,537.8L175.9,551.1L175.6,550.6L156.5,537.3ZM175.9,551.1L195.3,564.7L195.0,564.2L175.6,550.6ZM195.3,564.7L215.0,578.5L214.7,578.0L195.0,564.2ZM215.0,578.5L235.0,592.5L234.8,592.0L214.7,578.0ZM235.0,592.5L255.5,606.8L255.2,606.3L234.8,592.0ZM255.5,606.8L276.2,621.4L276.0,620.8L255.2,606.3ZM276.2,621.4L297.4,636.2L297.1,635.7L276.0,620.8ZM297.4,636.2L319.0,651.2L318.7,650.7L297.1,635.7ZM319.0,651.2L340.9,666.6L340.6,666.1L318.7,650.7ZM101.2,498.6L119.4,511.3L119.1,510.7L100.9,498.0ZM119.4,511.3L137.8,524.2L137.5,523.6L119.1,510.7ZM137.8,524.2L156.5,537.3L156.2,536.7L137.5,523.6ZM156.5,537.3L175.6,550.6L175.3,550.1L156.2,536.7ZM175.6,550.6L195.0,564.2L194.7,563.6L175.3,550.1ZM195.0,564.2L214.7,578.0L214.4,577.4L194.7,563.6ZM214.7,578.0L234.8,592.0L234.5,591.5L214.4,577.4ZM234.8,592.0L255.2,606.3L254.9,605.8L234.5,591.5ZM255.2,606.3L276.0,620.8L275.7,620.3L254.9,605.8ZM276.0,620.8L297.1,635.7L296.9,635.1L275.7,620.3ZM297.1,635.7L318.7,650.7L318.5,650.2L296.9,635.1ZM318.7,650.7L340.6,666.1L340.4,665.6L318.5,650.2ZM100.9,498.0L119.1,510.7L118.8,510.2L100.7,497.5ZM119.1,510.7L137.5,523.6L137.2,523.1L118.8,510.2ZM137.5,523.6L156.2,536.7L156.0,536.2L137.2,523.1ZM156.2,536.7L175.3,550.1L175.1,549.5L156.0,536.2ZM175.3,550.1L194.7,563.6L194.5,563.1L175.1,549.5ZM194.7,563.6L214.4,577.4L214.2,576.9L194.5,563.1ZM214.4,577.4L234.5,591.5L234.3,590.9L214.2,576.9ZM234.5,591.5L254.9,605.8L254.7,605.2L234.3,590.9ZM254.9,605.8L275.7,620.3L275.5,619.8L254.7,605.2ZM275.7,620.3L296.9,635.1L296.7,634.6L275.5,619.8ZM296.9,635.1L318.5,650.2L318.3,649.6L296.7,634.6ZM318.5,650.2L340.4,665.6L340.2,665.0L318.3,649.6ZM100.7,497.5L118.8,510.2L118.6,509.6L100.5,496.9ZM118.8,510.2L137.2,523.1L137.0,522.5L118.6,509.6ZM137.2,523.1L156.0,536.2L155.8,535.6L137.0,522.5ZM156.0,536.2L175.1,549.5L174.8,548.9L155.8,535.6ZM175.1,549.5L194.5,563.1L194.2,562.5L174.8,548.9ZM194.5,563.1L214.2,576.9L214.0,576.3L194.2,562.5ZM214.2,576.9L234.3,590.9L234.1,590.3L214.0,576.3ZM234.3,590.9L254.7,605.2L254.5,604.6L234.1,590.3ZM254.7,605.2L275.5,619.8L275.3,619.2L254.5,604.6ZM275.5,619.8L296.7,634.6L296.5,634.0L275.3,619.2ZM296.7,634.6L318.3,649.6L318.1,649.1L296.5,634.0ZM318.3,649.6L340.2,665.0L340.0,664.4L318.1,649.1ZM100.5,496.9L118.6,509.6L118.4,509.0L100.2,496.3ZM118.6,509.6L137.0,522.5L136.8,521.9L118.4,509.0ZM137.0,522.5L155.8,535.6L155.6,535.0L136.8,521.9ZM155.8,535.6L174.8,548.9L174.6,548.3L155.6,535.0ZM174.8,548.9L194.2,562.5L194.1,561.9L174.6,548.3ZM194.2,562.5L214.0,576.3L213.8,575.7L194.1,561.9ZM214.0,576.3L234.1,590.3L233.9,589.7L213.8,575.7ZM234.1,590.3L254.5,604.6L254.3,604.0L233.9,589.7ZM254.5,604.6L275.3,619.2L275.2,618.6L254.3,604.0ZM275.3,619.2L296.5,634.0L296.3,633.4L275.2,618.6ZM296.5,634.0L318.1,649.1L317.9,648.4L296.3,633.4ZM318.1,649.1L340.0,664.4L339.9,663.8L317.9,648.4ZM100.2,496.3L118.4,509.0L118.2,508.3L100.1,495.7ZM118.4,509.0L136.8,521.9L136.6,521.2L118.2,508.3ZM136.8,521.9L155.6,535.0L155.4,534.3L136.6,521.2ZM155.6,535.0L174.6,548.3L174.5,547.7L155.4,534.3ZM174.6,548.3L194.1,561.9L193.9,561.2L174.5,547.7ZM194.1,561.9L213.8,575.7L213.6,575.0L193.9,561.2ZM213.8,575.7L233.9,589.7L233.7,589.1L213.6,575.0ZM233.9,589.7L254.3,604.0L254.2,603.4L233.7,589.1ZM254.3,604.0L275.2,618.6L275.0,617.9L254.2,603.4ZM275.2,618.6L296.3,633.4L296.2,632.7L275.0,617.9ZM296.3,633.4L317.9,648.4L317.8,647.8L296.2,632.7ZM317.9,648.4L339.9,663.8L339.8,663.2L317.8,647.8ZM100.1,495.7L118.2,508.3L118.0,507.7L99.9,495.0ZM118.2,508.3L136.6,521.2L136.5,520.6L118.0,507.7ZM136.6,521.2L155.4,534.3L155.3,533.7L136.5,520.6ZM155.4,534.3L174.5,547.7L174.3,547.0L155.3,533.7ZM174.5,547.7L193.9,561.2L193.8,560.6L174.3,547.0ZM193.9,561.2L213.6,575.0L213.5,574.4L193.8,560.6ZM213.6,575.0L233.7,589.1L233.6,588.4L213.5,574.4ZM233.7,589.1L254.2,603.4L254.1,602.7L233.6,588.4ZM254.2,603.4L275.0,617.9L274.9,617.3L254.1,602.7ZM275.0,617.9L296.2,632.7L296.1,632.1L274.9,617.3ZM296.2,632.7L317.8,647.8L317.7,647.1L296.1,632.1ZM317.8,647.8L339.8,663.2L339.7,662.5L317.7,647.1ZM99.9,495.0L118.0,507.7L117.9,507.0L99.8,494.4ZM118.0,507.7L136.5,520.6L136.4,519.9L117.9,507.0ZM136.5,520.6L155.3,533.7L155.1,533.0L136.4,519.9ZM155.3,533.7L174.3,547.0L174.2,546.3L155.1,533.0ZM174.3,547.0L193.8,560.6L193.7,559.9L174.2,546.3ZM193.8,560.6L213.5,574.4L213.4,573.7L193.7,559.9ZM213.5,574.4L233.6,588.4L233.5,587.7L213.4,573.7ZM233.6,588.4L254.1,602.7L254.0,602.0L233.5,587.7ZM254.1,602.7L274.9,617.3L274.8,616.6L254.0,602.0ZM274.9,617.3L296.1,632.1L296.0,631.4L274.8,616.6ZM296.1,632.1L317.7,647.1L317.6,646.5L296.0,631.4ZM317.7,647.1L339.7,662.5L339.6,661.8L317.6,646.5ZM99.8,494.4L117.9,507.0L117.8,506.3L99.7,493.7ZM117.9,507.0L136.4,519.9L136.3,519.2L117.8,506.3ZM136.4,519.9L155.1,533.0L155.1,532.3L136.3,519.2ZM155.1,533.0L174.2,546.3L174.2,545.6L155.1,532.3ZM174.2,546.3L193.7,559.9L193.6,559.2L174.2,545.6ZM193.7,559.9L213.4,573.7L213.3,573.0L193.6,559.2ZM213.4,573.7L233.5,587.7L233.5,587.0L213.3,573.0ZM233.5,587.7L254.0,602.0L253.9,601.3L233.5,587.0ZM254.0,602.0L274.8,616.6L274.8,615.9L253.9,601.3ZM274.8,616.6L296.0,631.4L296.0,630.7L274.8,615.9ZM296.0,631.4L317.6,646.5L317.6,645.8L296.0,630.7ZM317.6,646.5L339.6,661.8L339.6,661.1L317.6,645.8ZM99.7,493.7L117.8,506.3L117.8,505.6L99.6,493.0ZM117.8,506.3L136.3,519.2L136.2,518.5L117.8,505.6ZM136.3,519.2L155.1,532.3L155.0,531.6L136.2,518.5ZM155.1,532.3L174.2,545.6L174.1,544.9L155.0,531.6ZM174.2,545.6L193.6,559.2L193.5,558.5L174.1,544.9ZM193.6,559.2L213.3,573.0L213.3,572.3L193.5,558.5ZM213.3,573.0L233.5,587.0L233.4,586.3L213.3,572.3ZM233.5,587.0L253.9,601.3L253.9,600.6L233.4,586.3ZM253.9,601.3L274.8,615.9L274.7,615.1L253.9,600.6ZM274.8,615.9L296.0,630.7L296.0,630.0L274.7,615.1ZM296.0,630.7L317.6,645.8L317.6,645.0L296.0,630.0ZM317.6,645.8L339.6,661.1L339.6,660.4L317.6,645.0ZM608.9,493.1L609.4,492.7L640.9,202.1L640.3,202.5ZM610.6,494.2L611.0,492.6L612.0,491.4L611.5,493.0ZM609.9,493.7L610.2,492.0L611.3,490.9L611.0,492.6ZM350.7,672.7L350.1,672.4L348.3,671.8L349.1,672.1ZM351.9,672.9L351.5,672.4L349.5,671.9L350.1,672.4ZM350.1,672.4L349.5,671.9L347.6,671.3L348.3,671.8ZM351.5,672.4L351.2,671.7L349.1,671.2L349.5,671.9ZM351.2,671.7L350.9,670.8L348.7,670.3L349.1,671.2ZM353.2,671.2L353.1,670.1L350.7,669.7L350.9,670.8ZM365.4,354.1L365.4,356.6L362.5,356.7L362.6,354.2Z" fill="#a8b9d7" stroke="#a8b9d7" stroke-width="0.5"/><path d="M604.2,501.7L586.7,514.4L587.1,514.0L604.7,501.4ZM586.7,514.4L568.8,527.2L569.3,526.9L587.1,514.0ZM568.8,527.2L550.7,540.3L551.1,540.0L569.3,526.9ZM550.7,540.3L532.2,553.6L532.7,553.3L551.1,540.0ZM532.2,553.6L513.4,567.2L513.9,566.9L532.7,553.3ZM513.4,567.2L494.3,581.0L494.8,580.6L513.9,566.9ZM494.3,581.0L474.9,595.0L475.4,594.7L494.8,580.6ZM474.9,595.0L455.1,609.3L455.6,608.9L475.4,594.7ZM455.1,609.3L435.0,623.8L435.4,623.5L455.6,608.9ZM435.0,623.8L414.5,638.6L414.9,638.3L435.4,623.5ZM414.5,638.6L393.6,653.6L394.1,653.3L414.9,638.3ZM393.6,653.6L372.4,669.0L372.8,668.7L394.1,653.3ZM604.7,501.4L587.1,514.0L587.6,513.7L605.1,501.0ZM587.1,514.0L569.3,526.9L569.7,526.5L587.6,513.7ZM569.3,526.9L551.1,540.0L551.6,539.6L569.7,526.5ZM551.1,540.0L532.7,553.3L533.1,552.9L551.6,539.6ZM532.7,553.3L513.9,566.9L514.3,566.5L533.1,552.9ZM513.9,566.9L494.8,580.6L495.2,580.3L514.3,566.5ZM494.8,580.6L475.4,594.7L475.8,594.3L495.2,580.3ZM475.4,594.7L455.6,608.9L456.0,608.6L475.8,594.3ZM455.6,608.9L435.4,623.5L435.9,623.1L456.0,608.6ZM435.4,623.5L414.9,638.3L415.4,637.9L435.9,623.1ZM414.9,638.3L394.1,653.3L394.5,653.0L415.4,637.9ZM394.1,653.3L372.8,668.7L373.2,668.3L394.5,653.0ZM605.1,501.0L587.6,513.7L588.0,513.3L605.6,500.6ZM587.6,513.7L569.7,526.5L570.2,526.1L588.0,513.3ZM569.7,526.5L551.6,539.6L552.0,539.2L570.2,526.1ZM551.6,539.6L533.1,552.9L533.5,552.5L552.0,539.2ZM533.1,552.9L514.3,566.5L514.8,566.1L533.5,552.5ZM514.3,566.5L495.2,580.3L495.6,579.9L514.8,566.1ZM495.2,580.3L475.8,594.3L476.2,593.9L495.6,579.9ZM475.8,594.3L456.0,608.6L456.4,608.2L476.2,593.9ZM456.0,608.6L435.9,623.1L436.3,622.7L456.4,608.2ZM435.9,623.1L415.4,637.9L415.8,637.5L436.3,622.7ZM415.4,637.9L394.5,653.0L394.9,652.6L415.8,637.5ZM394.5,653.0L373.2,668.3L373.6,667.9L394.9,652.6ZM605.6,500.6L588.0,513.3L588.4,512.8L606.0,500.2ZM588.0,513.3L570.2,526.1L570.6,525.7L588.4,512.8ZM570.2,526.1L552.0,539.2L552.4,538.8L570.6,525.7ZM552.0,539.2L533.5,552.5L533.9,552.1L552.4,538.8ZM533.5,552.5L514.8,566.1L515.1,565.7L533.9,552.1ZM514.8,566.1L495.6,579.9L496.0,579.5L515.1,565.7ZM495.6,579.9L476.2,593.9L476.6,593.5L496.0,579.5ZM476.2,593.9L456.4,608.2L456.8,607.8L476.6,593.5ZM456.4,608.2L436.3,622.7L436.6,622.3L456.8,607.8ZM436.3,622.7L415.8,637.5L416.1,637.1L436.6,622.3ZM415.8,637.5L394.9,652.6L395.2,652.2L416.1,637.1ZM394.9,652.6L373.6,667.9L374.0,667.5L395.2,652.2ZM606.0,500.2L588.4,512.8L588.8,512.4L606.4,499.7ZM588.4,512.8L570.6,525.7L570.9,525.2L588.8,512.4ZM570.6,525.7L552.4,538.8L552.8,538.3L570.9,525.2ZM552.4,538.8L533.9,552.1L534.3,551.7L552.8,538.3ZM533.9,552.1L515.1,565.7L515.5,565.2L534.3,551.7ZM515.1,565.7L496.0,579.5L496.4,579.0L515.5,565.2ZM496.0,579.5L476.6,593.5L476.9,593.0L496.4,579.0ZM476.6,593.5L456.8,607.8L457.1,607.3L476.9,593.0ZM456.8,607.8L436.6,622.3L437.0,621.9L457.1,607.3ZM436.6,622.3L416.1,637.1L416.5,636.7L437.0,621.9ZM416.1,637.1L395.2,652.2L395.6,651.7L416.5,636.7ZM395.2,652.2L374.0,667.5L374.3,667.1L395.6,651.7ZM606.4,499.7L588.8,512.4L589.2,511.9L606.7,499.2ZM588.8,512.4L570.9,525.2L571.3,524.8L589.2,511.9ZM570.9,525.2L552.8,538.3L553.1,537.9L571.3,524.8ZM552.8,538.3L534.3,551.7L534.7,551.2L553.1,537.9ZM534.3,551.7L515.5,565.2L515.9,564.7L534.7,551.2ZM515.5,565.2L496.4,579.0L496.7,578.5L515.9,564.7ZM496.4,579.0L476.9,593.0L477.3,592.6L496.7,578.5ZM476.9,593.0L457.1,607.3L457.5,606.9L477.3,592.6ZM457.1,607.3L437.0,621.9L437.3,621.4L457.5,606.9ZM437.0,621.9L416.5,636.7L416.8,636.2L437.3,621.4ZM416.5,636.7L395.6,651.7L395.9,651.3L416.8,636.2ZM395.6,651.7L374.3,667.1L374.6,666.6L395.9,651.3ZM606.7,499.2L589.2,511.9L589.5,511.4L607.1,498.7ZM589.2,511.9L571.3,524.8L571.6,524.3L589.5,511.4ZM571.3,524.8L553.1,537.9L553.5,537.4L571.6,524.3ZM553.1,537.9L534.7,551.2L535.0,550.7L553.5,537.4ZM534.7,551.2L515.9,564.7L516.2,564.2L535.0,550.7ZM515.9,564.7L496.7,578.5L497.0,578.0L516.2,564.2ZM496.7,578.5L477.3,592.6L477.6,592.1L497.0,578.0ZM477.3,592.6L457.5,606.9L457.8,606.3L477.6,592.1ZM457.5,606.9L437.3,621.4L437.6,620.9L457.8,606.3ZM437.3,621.4L416.8,636.2L417.1,635.7L437.6,620.9ZM416.8,636.2L395.9,651.3L396.2,650.8L417.1,635.7ZM395.9,651.3L374.6,666.6L374.9,666.1L396.2,650.8ZM607.1,498.7L589.5,511.4L589.8,510.8L607.4,498.2ZM589.5,511.4L571.6,524.3L571.9,523.7L589.8,510.8ZM571.6,524.3L553.5,537.4L553.7,536.8L571.9,523.7ZM553.5,537.4L535.0,550.7L535.3,550.1L553.7,536.8ZM535.0,550.7L516.2,564.2L516.5,563.7L535.3,550.1ZM516.2,564.2L497.0,578.0L497.3,577.5L516.5,563.7ZM497.0,578.0L477.6,592.1L477.9,591.5L497.3,577.5ZM477.6,592.1L457.8,606.3L458.0,605.8L477.9,591.5ZM457.8,606.3L437.6,620.9L437.9,620.4L458.0,605.8ZM437.6,620.9L417.1,635.7L417.3,635.2L437.9,620.4ZM417.1,635.7L396.2,650.8L396.4,650.2L417.3,635.2ZM396.2,650.8L374.9,666.1L375.1,665.6L396.4,650.2ZM607.4,498.2L589.8,510.8L590.1,510.3L607.6,497.6ZM589.8,510.8L571.9,523.7L572.2,523.2L590.1,510.3ZM571.9,523.7L553.7,536.8L554.0,536.3L572.2,523.2ZM553.7,536.8L535.3,550.1L535.5,549.6L554.0,536.3ZM535.3,550.1L516.5,563.7L516.7,563.1L535.5,549.6ZM516.5,563.7L497.3,577.5L497.6,576.9L516.7,563.1ZM497.3,577.5L477.9,591.5L478.1,591.0L497.6,576.9ZM477.9,591.5L458.0,605.8L458.3,605.2L478.1,591.0ZM458.0,605.8L437.9,620.4L438.1,619.8L458.3,605.2ZM437.9,620.4L417.3,635.2L417.6,634.6L438.1,619.8ZM417.3,635.2L396.4,650.2L396.7,649.7L417.6,634.6ZM396.4,650.2L375.1,665.6L375.4,665.0L396.7,649.7ZM360.0,665.7L359.0,665.7L363.6,359.1L364.8,359.1ZM363.0,673.1L363.5,672.9L361.6,673.2L361.2,673.4ZM363.5,672.9L364.0,672.4L362.0,672.8L361.6,673.2ZM362.5,671.2L362.7,670.1L360.3,670.3L360.2,671.5ZM373.5,352.9L373.6,355.5L370.9,356.0L370.8,353.5ZM368.2,356.4L368.2,358.8L365.3,359.1L365.4,356.6Z" fill="#a1b3d1" stroke="#a1b3d1" stroke-width="0.5"/><path d="M607.6,497.6L590.1,510.3L590.3,509.7L607.9,497.0ZM590.1,510.3L572.2,523.2L572.4,522.6L590.3,509.7ZM572.2,523.2L554.0,536.3L554.3,535.7L572.4,522.6ZM554.0,536.3L535.5,549.6L535.8,549.0L554.3,535.7ZM535.5,549.6L516.7,563.1L517.0,562.6L535.8,549.0ZM516.7,563.1L497.6,576.9L497.8,576.3L517.0,562.6ZM497.6,576.9L478.1,591.0L478.3,590.4L497.8,576.3ZM478.1,591.0L458.3,605.2L458.5,604.7L478.3,590.4ZM458.3,605.2L438.1,619.8L438.3,619.2L458.5,604.7ZM438.1,619.8L417.6,634.6L417.8,634.0L438.3,619.2ZM417.6,634.6L396.7,649.7L396.9,649.1L417.8,634.0ZM396.7,649.7L375.4,665.0L375.6,664.4L396.9,649.1ZM607.9,497.0L590.3,509.7L590.5,509.1L608.1,496.4ZM590.3,509.7L572.4,522.6L572.7,522.0L590.5,509.1ZM572.4,522.6L554.3,535.7L554.5,535.1L572.7,522.0ZM554.3,535.7L535.8,549.0L536.0,548.4L554.5,535.1ZM535.8,549.0L517.0,562.6L517.2,561.9L536.0,548.4ZM517.0,562.6L497.8,576.3L498.0,575.7L517.2,561.9ZM497.8,576.3L478.3,590.4L478.5,589.8L498.0,575.7ZM478.3,590.4L458.5,604.7L458.7,604.1L478.5,589.8ZM458.5,604.7L438.3,619.2L438.5,618.6L458.7,604.1ZM438.3,619.2L417.8,634.0L418.0,633.4L438.5,618.6ZM417.8,634.0L396.9,649.1L397.1,648.5L418.0,633.4ZM396.9,649.1L375.6,664.4L375.7,663.8L397.1,648.5ZM608.1,496.4L590.5,509.1L590.7,508.5L608.3,495.8ZM590.5,509.1L572.7,522.0L572.9,521.3L590.7,508.5ZM572.7,522.0L554.5,535.1L554.7,534.4L572.9,521.3ZM554.5,535.1L536.0,548.4L536.2,547.8L554.7,534.4ZM536.0,548.4L517.2,561.9L517.4,561.3L536.2,547.8ZM517.2,561.9L498.0,575.7L498.2,575.1L517.4,561.3ZM498.0,575.7L478.5,589.8L478.7,589.1L498.2,575.1ZM478.5,589.8L458.7,604.1L458.9,603.4L478.7,589.1ZM458.7,604.1L438.5,618.6L438.7,618.0L458.9,603.4ZM438.5,618.6L418.0,633.4L418.1,632.8L438.7,618.0ZM418.0,633.4L397.1,648.5L397.2,647.8L418.1,632.8ZM397.1,648.5L375.7,663.8L375.9,663.2L397.2,647.8ZM608.3,495.8L590.7,508.5L590.9,507.8L608.5,495.1ZM590.7,508.5L572.9,521.3L573.0,520.7L590.9,507.8ZM572.9,521.3L554.7,534.4L554.8,533.8L573.0,520.7ZM554.7,534.4L536.2,547.8L536.3,547.1L554.8,533.8ZM536.2,547.8L517.4,561.3L517.5,560.7L536.3,547.1ZM517.4,561.3L498.2,575.1L498.4,574.4L517.5,560.7ZM498.2,575.1L478.7,589.1L478.9,588.5L498.4,574.4ZM478.7,589.1L458.9,603.4L459.0,602.8L478.9,588.5ZM458.9,603.4L438.7,618.0L438.8,617.3L459.0,602.8ZM438.7,618.0L418.1,632.8L418.3,632.1L438.8,617.3ZM418.1,632.8L397.2,647.8L397.3,647.2L418.3,632.1ZM397.2,647.8L375.9,663.2L376.0,662.5L397.3,647.2ZM608.5,495.1L590.9,507.8L591.1,507.1L608.7,494.5ZM590.9,507.8L573.0,520.7L573.2,520.0L591.1,507.1ZM573.0,520.7L554.8,533.8L555.0,533.1L573.2,520.0ZM554.8,533.8L536.3,547.1L536.5,546.4L555.0,533.1ZM536.3,547.1L517.5,560.7L517.6,560.0L536.5,546.4ZM517.5,560.7L498.4,574.4L498.5,573.8L517.6,560.0ZM498.4,574.4L478.9,588.5L479.0,587.8L498.5,573.8ZM478.9,588.5L459.0,602.8L459.1,602.1L479.0,587.8ZM459.0,602.8L438.8,617.3L438.9,616.6L459.1,602.1ZM438.8,617.3L418.3,632.1L418.4,631.4L438.9,616.6ZM418.3,632.1L397.3,647.2L397.4,646.5L418.4,631.4ZM397.3,647.2L376.0,662.5L376.1,661.8L397.4,646.5ZM608.7,494.5L591.1,507.1L591.2,506.5L608.8,493.8ZM591.1,507.1L573.2,520.0L573.3,519.3L591.2,506.5ZM573.2,520.0L555.0,533.1L555.1,532.4L573.3,519.3ZM555.0,533.1L536.5,546.4L536.6,545.7L555.1,532.4ZM536.5,546.4L517.6,560.0L517.7,559.3L536.6,545.7ZM517.6,560.0L498.5,573.8L498.6,573.1L517.7,559.3ZM498.5,573.8L479.0,587.8L479.1,587.1L498.6,573.1ZM479.0,587.8L459.1,602.1L459.2,601.4L479.1,587.1ZM459.1,602.1L438.9,616.6L439.0,615.9L459.2,601.4ZM438.9,616.6L418.4,631.4L418.4,630.7L439.0,615.9ZM418.4,631.4L397.4,646.5L397.5,645.8L418.4,630.7ZM397.4,646.5L376.1,661.8L376.2,661.1L397.5,645.8ZM608.8,493.8L591.2,506.5L591.3,505.7L608.9,493.1ZM591.2,506.5L573.3,519.3L573.4,518.6L591.3,505.7ZM573.3,519.3L555.1,532.4L555.2,531.7L573.4,518.6ZM555.1,532.4L536.6,545.7L536.6,545.0L555.2,531.7ZM536.6,545.7L517.7,559.3L517.8,558.6L536.6,545.0ZM517.7,559.3L498.6,573.1L498.6,572.3L517.8,558.6ZM498.6,573.1L479.1,587.1L479.1,586.4L498.6,572.3ZM479.1,587.1L459.2,601.4L459.3,600.7L479.1,586.4ZM459.2,601.4L439.0,615.9L439.1,615.2L459.3,600.7ZM439.0,615.9L418.4,630.7L418.5,630.0L439.1,615.2ZM418.4,630.7L397.5,645.8L397.5,645.0L418.5,630.0ZM397.5,645.8L376.2,661.1L376.2,660.4L397.5,645.0ZM361.0,665.6L360.0,665.7L364.8,359.1L365.9,359.0ZM370.3,670.3L371.3,669.7L369.6,670.5L368.7,671.1ZM368.7,671.1L369.6,670.5L367.8,671.3L367.1,671.8ZM367.1,671.8L367.8,671.3L366.0,671.9L365.3,672.4ZM365.3,672.4L366.0,671.9L364.0,672.4L363.5,672.9ZM371.3,669.7L372.2,668.8L370.4,669.7L369.6,670.5ZM364.0,672.4L364.4,671.7L362.3,672.1L362.0,672.8ZM373.8,667.7L374.6,666.6L372.9,667.7L372.2,668.8ZM364.4,671.7L364.8,670.8L362.5,671.2L362.3,672.1ZM374.6,666.6L375.3,665.3L373.5,666.4L372.9,667.7ZM362.7,670.1L362.9,668.7L360.4,669.0L360.3,670.3Z" fill="#a0b2d0" stroke="#a0b2d0" stroke-width="0.5"/><path d="M622.0,170.8L602.6,181.9L603.4,182.3L622.8,171.2ZM602.6,181.9L582.8,193.1L583.6,193.5L603.4,182.3ZM582.8,193.1L562.6,204.6L563.4,205.0L583.6,193.5ZM562.6,204.6L542.1,216.3L542.9,216.7L563.4,205.0ZM542.1,216.3L521.1,228.2L521.9,228.7L542.9,216.7ZM521.1,228.2L499.8,240.4L500.6,240.8L521.9,228.7ZM499.8,240.4L478.0,252.8L478.8,253.2L500.6,240.8ZM478.0,252.8L455.8,265.4L456.6,265.9L478.8,253.2ZM455.8,265.4L433.1,278.3L433.9,278.8L456.6,265.9ZM433.1,278.3L410.0,291.5L410.8,291.9L433.9,278.8ZM410.0,291.5L386.4,304.9L387.2,305.4L410.8,291.9ZM386.4,304.9L362.3,318.6L363.2,319.1L387.2,305.4ZM622.8,171.2L603.4,182.3L604.2,182.7L623.6,171.6ZM603.4,182.3L583.6,193.5L584.4,194.0L604.2,182.7ZM583.6,193.5L563.4,205.0L564.2,205.5L584.4,194.0ZM563.4,205.0L542.9,216.7L543.7,217.2L564.2,205.5ZM542.9,216.7L521.9,228.7L522.7,229.1L543.7,217.2ZM521.9,228.7L500.6,240.8L501.4,241.3L522.7,229.1ZM500.6,240.8L478.8,253.2L479.6,253.7L501.4,241.3ZM478.8,253.2L456.6,265.9L457.4,266.3L479.6,253.7ZM456.6,265.9L433.9,278.8L434.8,279.3L457.4,266.3ZM433.9,278.8L410.8,291.9L411.6,292.4L434.8,279.3ZM410.8,291.9L387.2,305.4L388.1,305.9L411.6,292.4ZM387.2,305.4L363.2,319.1L364.0,319.6L388.1,305.9ZM622.0,170.8L624.0,171.8L624.1,171.7L622.0,170.8ZM373.2,338.6L374.0,341.4L371.9,342.0L371.2,339.2Z" fill="#abbcd8" stroke="#abbcd8" stroke-width="0.5"/><path d="M623.6,171.6L604.2,182.7L605.0,183.1L624.4,172.1ZM604.2,182.7L584.4,194.0L585.2,194.4L605.0,183.1ZM584.4,194.0L564.2,205.5L565.0,205.9L585.2,194.4ZM564.2,205.5L543.7,217.2L544.5,217.6L565.0,205.9ZM543.7,217.2L522.7,229.1L523.6,229.6L544.5,217.6ZM522.7,229.1L501.4,241.3L502.2,241.8L523.6,229.6ZM501.4,241.3L479.6,253.7L480.4,254.2L502.2,241.8ZM479.6,253.7L457.4,266.3L458.2,266.9L480.4,254.2ZM457.4,266.3L434.8,279.3L435.6,279.8L458.2,266.9ZM434.8,279.3L411.6,292.4L412.5,293.0L435.6,279.8ZM411.6,292.4L388.1,305.9L388.9,306.4L412.5,293.0ZM388.1,305.9L364.0,319.6L364.8,320.1L388.9,306.4ZM624.4,172.1L605.0,183.1L605.8,183.6L625.2,172.5ZM605.0,183.1L585.2,194.4L586.0,194.9L605.8,183.6ZM585.2,194.4L565.0,205.9L565.8,206.4L586.0,194.9ZM565.0,205.9L544.5,217.6L545.3,218.1L565.8,206.4ZM544.5,217.6L523.6,229.6L524.4,230.1L545.3,218.1ZM523.6,229.6L502.2,241.8L503.0,242.3L524.4,230.1ZM502.2,241.8L480.4,254.2L481.2,254.7L503.0,242.3ZM480.4,254.2L458.2,266.9L459.0,267.4L481.2,254.7ZM458.2,266.9L435.6,279.8L436.4,280.3L459.0,267.4ZM435.6,279.8L412.5,293.0L413.3,293.5L436.4,280.3ZM412.5,293.0L388.9,306.4L389.7,307.0L413.3,293.5ZM388.9,306.4L364.8,320.1L365.6,320.7L389.7,307.0ZM625.2,172.5L605.8,183.6L606.6,184.1L626.0,173.0ZM605.8,183.6L586.0,194.9L586.8,195.4L606.6,184.1ZM586.0,194.9L565.8,206.4L566.6,206.9L586.8,195.4ZM565.8,206.4L545.3,218.1L546.1,218.7L566.6,206.9ZM545.3,218.1L524.4,230.1L525.1,230.6L546.1,218.7ZM524.4,230.1L503.0,242.3L503.8,242.8L525.1,230.6ZM503.0,242.3L481.2,254.7L482.0,255.3L503.8,242.8ZM481.2,254.7L459.0,267.4L459.8,268.0L482.0,255.3ZM459.0,267.4L436.4,280.3L437.2,280.9L459.8,268.0ZM436.4,280.3L413.3,293.5L414.1,294.1L437.2,280.9ZM413.3,293.5L389.7,307.0L390.5,307.6L414.1,294.1ZM389.7,307.0L365.6,320.7L366.4,321.3L390.5,307.6ZM626.0,173.0L606.6,184.1L607.3,184.7L626.7,173.6ZM606.6,184.1L586.8,195.4L587.6,196.0L607.3,184.7ZM586.8,195.4L566.6,206.9L567.4,207.5L587.6,196.0ZM566.6,206.9L546.1,218.7L546.9,219.3L567.4,207.5ZM546.1,218.7L525.1,230.6L525.9,231.2L546.9,219.3ZM525.1,230.6L503.8,242.8L504.6,243.4L525.9,231.2ZM503.8,242.8L482.0,255.3L482.8,255.9L504.6,243.4ZM482.0,255.3L459.8,268.0L460.6,268.6L482.8,255.9ZM459.8,268.0L437.2,280.9L438.0,281.5L460.6,268.6ZM437.2,280.9L414.1,294.1L414.9,294.7L438.0,281.5ZM414.1,294.1L390.5,307.6L391.3,308.2L414.9,294.7ZM390.5,307.6L366.4,321.3L367.2,322.0L391.3,308.2ZM626.7,173.6L607.3,184.7L608.1,185.3L627.5,174.2ZM607.3,184.7L587.6,196.0L588.3,196.6L608.1,185.3ZM587.6,196.0L567.4,207.5L568.2,208.1L588.3,196.6ZM567.4,207.5L546.9,219.3L547.6,219.9L568.2,208.1ZM546.9,219.3L525.9,231.2L526.7,231.8L547.6,219.9ZM525.9,231.2L504.6,243.4L505.4,244.1L526.7,231.8ZM504.6,243.4L482.8,255.9L483.6,256.5L505.4,244.1ZM482.8,255.9L460.6,268.6L461.4,269.2L483.6,256.5ZM460.6,268.6L438.0,281.5L438.8,282.2L461.4,269.2ZM438.0,281.5L414.9,294.7L415.7,295.4L438.8,282.2ZM414.9,294.7L391.3,308.2L392.1,308.9L415.7,295.4ZM391.3,308.2L367.2,322.0L368.0,322.7L392.1,308.9ZM622.0,170.8L624.1,171.7L624.3,171.6L622.0,170.8ZM622.0,170.8L624.3,171.6L624.4,171.5L622.0,170.8ZM624.0,171.8L626.0,173.0L626.3,172.9L624.1,171.7ZM624.1,171.7L626.3,172.9L626.5,172.7L624.3,171.6ZM362.3,318.6L364.4,319.9L364.2,320.0L362.3,318.6ZM362.3,318.6L364.2,320.0L364.0,320.1L362.3,318.6ZM364.4,319.9L366.4,321.3L366.0,321.5L364.2,320.0ZM367.8,348.4L368.0,351.2L365.3,351.4L365.2,348.6Z" fill="#acbdd9" stroke="#acbdd9" stroke-width="0.5"/><path d="M627.5,174.2L608.1,185.3L608.9,185.9L628.3,174.8ZM608.1,185.3L588.3,196.6L589.1,197.2L608.9,185.9ZM588.3,196.6L568.2,208.1L568.9,208.7L589.1,197.2ZM568.2,208.1L547.6,219.9L548.4,220.5L568.9,208.7ZM547.6,219.9L526.7,231.8L527.5,232.5L548.4,220.5ZM526.7,231.8L505.4,244.1L506.1,244.7L527.5,232.5ZM505.4,244.1L483.6,256.5L484.4,257.2L506.1,244.7ZM483.6,256.5L461.4,269.2L462.2,269.9L484.4,257.2ZM461.4,269.2L438.8,282.2L439.5,282.9L462.2,269.9ZM438.8,282.2L415.7,295.4L416.4,296.1L439.5,282.9ZM415.7,295.4L392.1,308.9L392.9,309.6L416.4,296.1ZM392.1,308.9L368.0,322.7L368.8,323.4L392.9,309.6ZM628.3,174.8L608.9,185.9L609.6,186.5L629.0,175.4ZM608.9,185.9L589.1,197.2L589.8,197.8L609.6,186.5ZM589.1,197.2L568.9,208.7L569.7,209.4L589.8,197.8ZM568.9,208.7L548.4,220.5L549.2,221.2L569.7,209.4ZM548.4,220.5L527.5,232.5L528.2,233.2L549.2,221.2ZM527.5,232.5L506.1,244.7L506.9,245.4L528.2,233.2ZM506.1,244.7L484.4,257.2L485.1,257.9L506.9,245.4ZM484.4,257.2L462.2,269.9L462.9,270.6L485.1,257.9ZM462.2,269.9L439.5,282.9L440.3,283.6L462.9,270.6ZM439.5,282.9L416.4,296.1L417.2,296.8L440.3,283.6ZM416.4,296.1L392.9,309.6L393.6,310.3L417.2,296.8ZM392.9,309.6L368.8,323.4L369.6,324.1L393.6,310.3ZM629.0,175.4L609.6,186.5L610.3,187.2L629.7,176.0ZM609.6,186.5L589.8,197.8L590.6,198.5L610.3,187.2ZM589.8,197.8L569.7,209.4L570.4,210.1L590.6,198.5ZM569.7,209.4L549.2,221.2L549.9,221.8L570.4,210.1ZM549.2,221.2L528.2,233.2L529.0,233.9L549.9,221.8ZM528.2,233.2L506.9,245.4L507.6,246.1L529.0,233.9ZM506.9,245.4L485.1,257.9L485.9,258.6L507.6,246.1ZM485.1,257.9L462.9,270.6L463.7,271.3L485.9,258.6ZM462.9,270.6L440.3,283.6L441.1,284.3L463.7,271.3ZM440.3,283.6L417.2,296.8L418.0,297.6L441.1,284.3ZM417.2,296.8L393.6,310.3L394.4,311.1L418.0,297.6ZM393.6,310.3L369.6,324.1L370.3,324.9L394.4,311.1ZM629.7,176.0L610.3,187.2L611.0,187.9L630.4,176.7ZM610.3,187.2L590.6,198.5L591.3,199.2L611.0,187.9ZM590.6,198.5L570.4,210.1L571.1,210.8L591.3,199.2ZM570.4,210.1L549.9,221.8L550.6,222.6L571.1,210.8ZM549.9,221.8L529.0,233.9L529.7,234.6L550.6,222.6ZM529.0,233.9L507.6,246.1L508.4,246.8L529.7,234.6ZM507.6,246.1L485.9,258.6L486.6,259.3L508.4,246.8ZM485.9,258.6L463.7,271.3L464.4,272.1L486.6,259.3ZM463.7,271.3L441.1,284.3L441.8,285.1L464.4,272.1ZM441.1,284.3L418.0,297.6L418.7,298.3L441.8,285.1ZM418.0,297.6L394.4,311.1L395.1,311.9L418.7,298.3ZM394.4,311.1L370.3,324.9L371.1,325.7L395.1,311.9ZM622.0,170.8L624.4,171.5L624.4,171.4L622.0,170.8ZM622.0,170.8L624.4,171.4L624.5,171.3L622.0,170.8ZM622.0,170.8L624.5,171.3L624.5,171.2L622.0,170.8ZM624.3,171.6L626.5,172.7L626.7,172.4L624.4,171.5ZM624.4,171.5L626.7,172.4L626.9,172.2L624.4,171.4ZM626.0,173.0L627.9,174.4L628.3,174.2L626.3,172.9ZM626.3,172.9L628.3,174.2L628.7,173.9L626.5,172.7ZM626.5,172.7L628.7,173.9L629.0,173.6L626.7,172.4ZM627.9,174.4L629.7,176.0L630.3,175.7L628.3,174.2ZM628.3,174.2L630.3,175.7L630.8,175.3L628.7,173.9ZM362.3,318.6L364.0,320.1L363.7,320.2L362.3,318.6ZM364.0,320.1L365.6,321.7L365.1,321.9L363.7,320.2ZM366.0,321.5L367.8,323.3L367.1,323.6L365.6,321.7ZM368.4,323.0L370.3,324.9L369.5,325.3L367.8,323.3ZM367.8,323.3L369.5,325.3L368.7,325.7L367.1,323.6ZM370.3,324.9L372.2,326.9L371.2,327.4L369.5,325.3ZM369.5,325.3L371.2,327.4L370.1,327.9L368.7,325.7ZM370.1,345.3L370.4,348.1L367.8,348.4L367.6,345.6Z" fill="#adbeda" stroke="#adbeda" stroke-width="0.5"/><path d="M630.4,176.7L611.0,187.9L611.7,188.6L631.1,177.4ZM611.0,187.9L591.3,199.2L592.0,199.9L611.7,188.6ZM591.3,199.2L571.1,210.8L571.8,211.5L592.0,199.9ZM571.1,210.8L550.6,222.6L551.3,223.3L571.8,211.5ZM550.6,222.6L529.7,234.6L530.4,235.3L551.3,223.3ZM529.7,234.6L508.4,246.8L509.1,247.6L530.4,235.3ZM508.4,246.8L486.6,259.3L487.3,260.1L509.1,247.6ZM486.6,259.3L464.4,272.1L465.2,272.8L487.3,260.1ZM464.4,272.1L441.8,285.1L442.5,285.9L465.2,272.8ZM441.8,285.1L418.7,298.3L419.4,299.1L442.5,285.9ZM418.7,298.3L395.1,311.9L395.9,312.7L419.4,299.1ZM395.1,311.9L371.1,325.7L371.8,326.5L395.9,312.7ZM631.1,177.4L611.7,188.6L612.4,189.3L631.8,178.2ZM611.7,188.6L592.0,199.9L592.6,200.7L612.4,189.3ZM592.0,199.9L571.8,211.5L572.5,212.3L592.6,200.7ZM571.8,211.5L551.3,223.3L552.0,224.1L572.5,212.3ZM551.3,223.3L530.4,235.3L531.1,236.1L552.0,224.1ZM530.4,235.3L509.1,247.6L509.8,248.4L531.1,236.1ZM509.1,247.6L487.3,260.1L488.0,260.9L509.8,248.4ZM487.3,260.1L465.2,272.8L465.9,273.7L488.0,260.9ZM465.2,272.8L442.5,285.9L443.2,286.7L465.9,273.7ZM442.5,285.9L419.4,299.1L420.2,300.0L443.2,286.7ZM419.4,299.1L395.9,312.7L396.6,313.5L420.2,300.0ZM395.9,312.7L371.8,326.5L372.5,327.4L396.6,313.5ZM631.8,178.2L612.4,189.3L613.1,190.1L632.4,178.9ZM612.4,189.3L592.6,200.7L593.3,201.5L613.1,190.1ZM592.6,200.7L572.5,212.3L573.2,213.1L593.3,201.5ZM572.5,212.3L552.0,224.1L552.7,224.9L573.2,213.1ZM552.0,224.1L531.1,236.1L531.8,236.9L552.7,224.9ZM531.1,236.1L509.8,248.4L510.5,249.2L531.8,236.9ZM509.8,248.4L488.0,260.9L488.7,261.7L510.5,249.2ZM488.0,260.9L465.9,273.7L466.5,274.5L488.7,261.7ZM465.9,273.7L443.2,286.7L443.9,287.5L466.5,274.5ZM443.2,286.7L420.2,300.0L420.8,300.8L443.9,287.5ZM420.2,300.0L396.6,313.5L397.3,314.4L420.8,300.8ZM396.6,313.5L372.5,327.4L373.3,328.2L397.3,314.4ZM632.4,178.9L613.1,190.1L613.7,190.9L633.1,179.7ZM613.1,190.1L593.3,201.5L594.0,202.3L613.7,190.9ZM593.3,201.5L573.2,213.1L573.8,213.9L594.0,202.3ZM573.2,213.1L552.7,224.9L553.3,225.7L573.8,213.9ZM552.7,224.9L531.8,236.9L532.4,237.7L553.3,225.7ZM531.8,236.9L510.5,249.2L511.1,250.0L532.4,237.7ZM510.5,249.2L488.7,261.7L489.4,262.6L511.1,250.0ZM488.7,261.7L466.5,274.5L467.2,275.3L489.4,262.6ZM466.5,274.5L443.9,287.5L444.6,288.4L467.2,275.3ZM443.9,287.5L420.8,300.8L421.5,301.7L444.6,288.4ZM420.8,300.8L397.3,314.4L398.0,315.3L421.5,301.7ZM397.3,314.4L373.3,328.2L373.9,329.1L398.0,315.3ZM633.1,179.7L613.7,190.9L614.3,191.7L633.7,180.5ZM613.7,190.9L594.0,202.3L594.6,203.1L614.3,191.7ZM594.0,202.3L573.8,213.9L574.5,214.7L594.6,203.1ZM573.8,213.9L553.3,225.7L554.0,226.5L574.5,214.7ZM553.3,225.7L532.4,237.7L533.1,238.6L554.0,226.5ZM532.4,237.7L511.1,250.0L511.8,250.9L533.1,238.6ZM511.1,250.0L489.4,262.6L490.0,263.4L511.8,250.9ZM489.4,262.6L467.2,275.3L467.9,276.2L490.0,263.4ZM467.2,275.3L444.6,288.4L445.3,289.3L467.9,276.2ZM444.6,288.4L421.5,301.7L422.2,302.6L445.3,289.3ZM421.5,301.7L398.0,315.3L398.6,316.2L422.2,302.6ZM398.0,315.3L373.9,329.1L374.6,330.0L398.6,316.2ZM622.0,170.8L624.5,171.2L624.5,171.1L622.0,170.8ZM622.0,170.8L624.5,171.1L624.5,170.9L622.0,170.8ZM622.0,170.8L624.5,170.9L624.5,170.8L622.0,170.8ZM622.0,170.8L624.5,170.8L624.4,170.7L622.0,170.8ZM624.4,171.4L626.9,172.2L627.0,172.0L624.5,171.3ZM624.5,171.3L627.0,172.0L627.0,171.8L624.5,171.2ZM624.5,171.2L627.0,171.8L627.0,171.5L624.5,171.1ZM626.7,172.4L629.0,173.6L629.2,173.2L626.9,172.2ZM626.9,172.2L629.2,173.2L629.4,172.9L627.0,172.0ZM628.7,173.9L630.8,175.3L631.1,174.9L629.0,173.6ZM629.0,173.6L631.1,174.9L631.4,174.4L629.2,173.2ZM629.7,176.0L631.5,177.8L632.1,177.4L630.3,175.7ZM630.3,175.7L632.1,177.4L632.7,176.9L630.8,175.3ZM630.8,175.3L632.7,176.9L633.2,176.4L631.1,174.9ZM631.5,177.8L633.1,179.7L633.9,179.2L632.1,177.4ZM632.1,177.4L633.9,179.2L634.6,178.6L632.7,176.9ZM365.1,321.9L366.4,323.8L365.7,324.0L364.6,322.0ZM368.7,325.7L370.1,327.9L369.0,328.3L367.7,326.0ZM372.2,326.9L373.9,329.1L372.8,329.7L371.2,327.4ZM371.2,327.4L372.8,329.7L371.5,330.3L370.1,327.9ZM370.1,327.9L371.5,330.3L370.2,330.7L369.0,328.3ZM373.9,329.1L375.6,331.4L374.3,332.1L372.8,329.7ZM372.8,329.7L374.3,332.1L372.8,332.7L371.5,330.3ZM371.5,330.3L372.8,332.7L371.3,333.3L370.2,330.7ZM374.3,332.1L375.6,334.7L374.0,335.3L372.8,332.7ZM372.8,332.7L374.0,335.3L372.3,335.9L371.3,333.3ZM374.0,335.3L375.1,338.0L373.2,338.6L372.3,335.9ZM375.1,338.0L376.0,340.7L374.0,341.4L373.2,338.6ZM379.6,345.2L380.2,347.9L378.0,348.8L377.5,346.1Z" fill="#aebfdb" stroke="#aebfdb" stroke-width="0.5"/><path d="M633.7,180.5L614.3,191.7L614.9,192.5L634.3,181.3ZM614.3,191.7L594.6,203.1L595.2,203.9L614.9,192.5ZM594.6,203.1L574.5,214.7L575.1,215.5L595.2,203.9ZM574.5,214.7L554.0,226.5L554.6,227.4L575.1,215.5ZM554.0,226.5L533.1,238.6L533.7,239.5L554.6,227.4ZM533.1,238.6L511.8,250.9L512.4,251.8L533.7,239.5ZM511.8,250.9L490.0,263.4L490.7,264.3L512.4,251.8ZM490.0,263.4L467.9,276.2L468.5,277.1L490.7,264.3ZM467.9,276.2L445.3,289.3L445.9,290.2L468.5,277.1ZM445.3,289.3L422.2,302.6L422.8,303.5L445.9,290.2ZM422.2,302.6L398.6,316.2L399.3,317.1L422.8,303.5ZM398.6,316.2L374.6,330.0L375.3,331.0L399.3,317.1ZM634.3,181.3L614.9,192.5L615.5,193.4L634.9,182.2ZM614.9,192.5L595.2,203.9L595.8,204.8L615.5,193.4ZM595.2,203.9L575.1,215.5L575.7,216.4L595.8,204.8ZM575.1,215.5L554.6,227.4L555.2,228.3L575.7,216.4ZM554.6,227.4L533.7,239.5L534.3,240.3L555.2,228.3ZM533.7,239.5L512.4,251.8L513.0,252.7L534.3,240.3ZM512.4,251.8L490.7,264.3L491.3,265.2L513.0,252.7ZM490.7,264.3L468.5,277.1L469.1,278.0L491.3,265.2ZM468.5,277.1L445.9,290.2L446.5,291.1L469.1,278.0ZM445.9,290.2L422.8,303.5L423.4,304.4L446.5,291.1ZM422.8,303.5L399.3,317.1L399.9,318.0L423.4,304.4ZM399.3,317.1L375.3,331.0L375.9,331.9L399.9,318.0ZM634.9,182.2L615.5,193.4L616.0,194.2L635.4,183.0ZM615.5,193.4L595.8,204.8L596.3,205.7L616.0,194.2ZM595.8,204.8L575.7,216.4L576.2,217.3L596.3,205.7ZM575.7,216.4L555.2,228.3L555.7,229.2L576.2,217.3ZM555.2,228.3L534.3,240.3L534.8,241.2L555.7,229.2ZM534.3,240.3L513.0,252.7L513.6,253.6L534.8,241.2ZM513.0,252.7L491.3,265.2L491.8,266.1L513.6,253.6ZM491.3,265.2L469.1,278.0L469.7,279.0L491.8,266.1ZM469.1,278.0L446.5,291.1L447.1,292.0L469.7,279.0ZM446.5,291.1L423.4,304.4L424.0,305.4L447.1,292.0ZM423.4,304.4L399.9,318.0L400.5,319.0L424.0,305.4ZM399.9,318.0L375.9,331.9L376.5,332.9L400.5,319.0ZM612.7,488.8L613.0,488.3L644.8,198.2L644.5,198.7ZM622.0,170.8L624.4,170.7L624.3,170.6L622.0,170.8ZM622.0,170.8L624.3,170.6L624.2,170.5L622.0,170.8ZM622.0,170.8L624.2,170.5L624.1,170.3L622.0,170.8ZM624.5,171.1L627.0,171.5L627.0,171.3L624.5,170.9ZM624.5,170.9L627.0,171.3L626.9,171.0L624.5,170.8ZM624.5,170.8L626.9,171.0L626.8,170.8L624.4,170.7ZM627.0,172.0L629.4,172.9L629.4,172.5L627.0,171.8ZM627.0,171.8L629.4,172.5L629.5,172.2L627.0,171.5ZM629.2,173.2L631.4,174.4L631.7,174.0L629.4,172.9ZM629.4,172.9L631.7,174.0L631.8,173.5L629.4,172.5ZM631.1,174.9L633.2,176.4L633.6,175.8L631.4,174.4ZM631.4,174.4L633.6,175.8L633.8,175.3L631.7,174.0ZM632.7,176.9L634.6,178.6L635.2,178.0L633.2,176.4ZM633.2,176.4L635.2,178.0L635.6,177.4L633.6,175.8ZM633.1,179.7L634.6,181.8L635.5,181.2L633.9,179.2ZM633.9,179.2L635.5,181.2L636.3,180.5L634.6,178.6ZM634.6,178.6L636.3,180.5L636.9,179.8L635.2,178.0ZM634.6,181.8L635.9,183.9L637.0,183.2L635.5,181.2ZM635.5,181.2L637.0,183.2L637.8,182.5L636.3,180.5ZM375.6,331.4L377.1,333.9L375.6,334.7L374.3,332.1ZM375.6,334.7L376.8,337.2L375.1,338.0L374.0,335.3ZM367.6,345.6L367.8,348.4L365.2,348.6L365.1,345.8ZM362.6,348.7L362.6,351.5L359.8,351.4L359.9,348.6ZM354.4,350.8L354.2,353.5L351.6,352.9L351.8,350.3ZM382.6,349.4L382.9,351.8L380.8,352.9L380.6,350.4Z" fill="#afc0dc" stroke="#afc0dc" stroke-width="0.5"/><path d="M637.3,186.6L618.0,197.9L618.4,198.8L637.8,187.5ZM618.0,197.9L598.3,209.3L598.7,210.3L618.4,198.8ZM598.3,209.3L578.2,221.0L578.6,221.9L598.7,210.3ZM578.2,221.0L557.7,232.9L558.2,233.8L578.6,221.9ZM557.7,232.9L536.9,245.0L537.3,246.0L558.2,233.8ZM536.9,245.0L515.6,257.4L516.1,258.3L537.3,246.0ZM515.6,257.4L493.9,270.0L494.4,270.9L516.1,258.3ZM493.9,270.0L471.8,282.8L472.3,283.8L494.4,270.9ZM471.8,282.8L449.2,295.9L449.7,296.9L472.3,283.8ZM449.2,295.9L426.2,309.3L426.7,310.3L449.7,296.9ZM426.2,309.3L402.7,323.0L403.2,324.0L426.7,310.3ZM402.7,323.0L378.7,336.9L379.2,337.9L403.2,324.0ZM76.1,193.1L82.1,196.4L81.9,197.4L75.9,194.0ZM82.1,196.4L88.1,199.8L87.9,200.8L81.9,197.4ZM88.1,199.8L94.1,203.2L93.9,204.2L87.9,200.8ZM94.1,203.2L100.2,206.6L99.9,207.6L93.9,204.2ZM100.2,206.6L106.3,210.1L106.0,211.1L99.9,207.6ZM106.3,210.1L112.4,213.6L112.2,214.5L106.0,211.1ZM112.4,213.6L118.5,217.0L118.3,218.0L112.2,214.5ZM118.5,217.0L124.7,220.5L124.5,221.5L118.3,218.0ZM124.7,220.5L131.0,224.1L130.7,225.0L124.5,221.5ZM131.0,224.1L137.2,227.6L137.0,228.6L130.7,225.0ZM137.2,227.6L143.5,231.2L143.3,232.2L137.0,228.6ZM143.5,231.2L149.9,234.8L149.6,235.7L143.3,232.2ZM149.9,234.8L156.3,238.4L156.0,239.3L149.6,235.7ZM156.3,238.4L162.7,242.0L162.4,243.0L156.0,239.3ZM162.7,242.0L169.1,245.6L168.9,246.6L162.4,243.0ZM169.1,245.6L175.6,249.3L175.4,250.3L168.9,246.6ZM175.6,249.3L182.1,253.0L181.9,254.0L175.4,250.3ZM182.1,253.0L188.7,256.7L188.4,257.7L181.9,254.0ZM188.7,256.7L195.3,260.4L195.0,261.4L188.4,257.7ZM195.3,260.4L201.9,264.2L201.7,265.2L195.0,261.4ZM201.9,264.2L208.6,268.0L208.4,269.0L201.7,265.2ZM208.6,268.0L215.3,271.8L215.1,272.8L208.4,269.0ZM215.3,271.8L222.1,275.6L221.8,276.6L215.1,272.8ZM222.1,275.6L228.9,279.4L228.6,280.4L221.8,276.6ZM228.9,279.4L235.7,283.3L235.5,284.3L228.6,280.4ZM235.7,283.3L242.6,287.2L242.3,288.2L235.5,284.3ZM242.6,287.2L249.5,291.1L249.3,292.1L242.3,288.2ZM249.5,291.1L256.5,295.0L256.2,296.1L249.3,292.1ZM256.5,295.0L263.5,299.0L263.2,300.0L256.2,296.1ZM263.5,299.0L270.5,303.0L270.3,304.0L263.2,300.0ZM270.5,303.0L277.6,307.0L277.3,308.0L270.3,304.0ZM277.6,307.0L284.8,311.0L284.5,312.1L277.3,308.0ZM284.8,311.0L291.9,315.1L291.6,316.1L284.5,312.1ZM291.9,315.1L299.1,319.2L298.9,320.2L291.6,316.1ZM299.1,319.2L306.4,323.3L306.1,324.3L298.9,320.2ZM306.4,323.3L313.7,327.4L313.4,328.4L306.1,324.3ZM313.7,327.4L321.1,331.6L320.8,332.6L313.4,328.4ZM321.1,331.6L328.5,335.8L328.2,336.8L320.8,332.6ZM328.5,335.8L335.9,340.0L335.6,341.0L328.2,336.8ZM335.9,340.0L343.4,344.2L343.1,345.2L335.6,341.0ZM75.6,195.9L81.5,199.3L81.4,200.2L75.4,196.9ZM81.5,199.3L87.5,202.7L87.4,203.6L81.4,200.2ZM87.5,202.7L93.5,206.1L93.4,207.0L87.4,203.6ZM93.5,206.1L99.6,209.5L99.4,210.5L93.4,207.0ZM99.6,209.5L105.7,213.0L105.5,213.9L99.4,210.5ZM105.7,213.0L111.8,216.4L111.6,217.4L105.5,213.9ZM111.8,216.4L117.9,219.9L117.8,220.9L111.6,217.4ZM117.9,219.9L124.1,223.4L124.0,224.4L117.8,220.9ZM124.1,223.4L130.4,227.0L130.2,227.9L124.0,224.4ZM130.4,227.0L136.6,230.5L136.5,231.5L130.2,227.9ZM136.6,230.5L142.9,234.1L142.8,235.1L136.5,231.5ZM142.9,234.1L149.2,237.7L149.1,238.7L142.8,235.1ZM149.2,237.7L155.6,241.3L155.5,242.3L149.1,238.7ZM155.6,241.3L162.0,244.9L161.9,245.9L155.5,242.3ZM162.0,244.9L168.5,248.6L168.3,249.6L161.9,245.9ZM168.5,248.6L174.9,252.3L174.8,253.2L168.3,249.6ZM174.9,252.3L181.5,256.0L181.3,256.9L174.8,253.2ZM181.5,256.0L188.0,259.7L187.9,260.7L181.3,256.9ZM188.0,259.7L194.6,263.4L194.5,264.4L187.9,260.7ZM194.6,263.4L201.3,267.2L201.1,268.2L194.5,264.4ZM201.3,267.2L207.9,271.0L207.8,271.9L201.1,268.2ZM207.9,271.0L214.6,274.8L214.5,275.8L207.8,271.9ZM214.6,274.8L221.4,278.6L221.2,279.6L214.5,275.8ZM221.4,278.6L228.2,282.4L228.0,283.4L221.2,279.6ZM228.2,282.4L235.0,286.3L234.8,287.3L228.0,283.4ZM235.0,286.3L241.9,290.2L241.7,291.2L234.8,287.3ZM241.9,290.2L248.8,294.1L248.6,295.1L241.7,291.2ZM248.8,294.1L255.8,298.1L255.6,299.1L248.6,295.1ZM255.8,298.1L262.8,302.0L262.6,303.0L255.6,299.1ZM262.8,302.0L269.8,306.0L269.6,307.0L262.6,303.0ZM269.8,306.0L276.9,310.1L276.7,311.1L269.6,307.0ZM276.9,310.1L284.0,314.1L283.8,315.1L276.7,311.1ZM284.0,314.1L291.2,318.2L291.0,319.2L283.8,315.1ZM291.2,318.2L298.4,322.2L298.2,323.3L291.0,319.2ZM298.4,322.2L305.6,326.4L305.4,327.4L298.2,323.3ZM305.6,326.4L312.9,330.5L312.7,331.5L305.4,327.4ZM312.9,330.5L320.3,334.7L320.1,335.7L312.7,331.5ZM320.3,334.7L327.7,338.9L327.5,339.9L320.1,335.7ZM327.7,338.9L335.1,343.1L334.9,344.1L327.5,339.9ZM335.1,343.1L342.6,347.3L342.4,348.3L334.9,344.1ZM351.6,51.0L350.4,50.7L350.9,50.6L352.0,50.9ZM352.0,50.9L350.9,50.6L351.5,50.4L352.4,50.8ZM355.9,50.8L356.7,50.4L357.3,50.6L356.3,50.9ZM356.3,50.9L357.3,50.6L357.8,50.7L356.7,51.0ZM352.8,50.3L352.3,50.0L353.2,50.0L353.4,50.2ZM353.4,50.2L353.2,50.0L354.0,49.9L354.1,50.2ZM354.1,50.2L354.0,49.9L354.9,50.0L354.7,50.2ZM354.7,50.2L354.9,50.0L355.8,50.0L355.4,50.3ZM93.6,170.7L91.3,170.4L91.2,170.5L93.6,170.7ZM93.6,170.7L91.2,170.5L91.1,170.7L93.6,170.7ZM92.0,169.9L90.4,169.3L90.1,169.5L91.8,170.0ZM91.8,170.0L90.1,169.5L89.7,169.7L91.6,170.1ZM73.7,184.8L72.6,186.9L73.4,188.0L74.4,185.8ZM74.4,185.8L73.4,188.0L74.3,188.9L75.3,186.7ZM75.3,186.7L74.3,188.9L75.5,189.8L76.4,187.5ZM76.4,187.5L75.5,189.8L76.8,190.7L77.7,188.3ZM72.5,190.2L71.9,192.5L72.9,193.5L73.5,191.2ZM72.9,193.5L72.6,195.8L73.8,196.9L74.2,194.5ZM74.2,194.5L73.8,196.9L75.3,197.8L75.6,195.4ZM631.3,171.6L633.4,172.3L632.9,171.7L630.9,171.1ZM636.1,175.3L638.0,176.7L637.9,175.9L636.0,174.6ZM638.0,177.5L639.7,179.2L639.7,178.3L638.0,176.7ZM639.5,180.1L641.0,182.0L641.2,181.0L639.7,179.2ZM348.2,343.4L347.5,346.1L345.4,345.2L346.2,342.5Z" fill="#b3c3df" stroke="#b3c3df" stroke-width="0.5"/><path d="M640.4,198.9L621.2,210.2L621.2,211.1L640.4,199.8ZM621.2,210.2L601.5,221.8L601.5,222.7L621.2,211.1ZM601.5,221.8L581.5,233.5L581.5,234.5L601.5,222.7ZM581.5,233.5L561.1,245.5L561.1,246.5L581.5,234.5ZM561.1,245.5L540.3,257.7L540.4,258.7L561.1,246.5ZM540.3,257.7L519.1,270.2L519.2,271.1L540.4,258.7ZM519.1,270.2L497.5,282.9L497.6,283.9L519.2,271.1ZM497.5,282.9L475.5,295.8L475.5,296.8L497.6,283.9ZM475.5,295.8L453.0,309.1L453.1,310.0L475.5,296.8ZM453.0,309.1L430.0,322.6L430.1,323.5L453.1,310.0ZM430.0,322.6L406.6,336.3L406.7,337.3L430.1,323.5ZM406.6,336.3L382.7,350.4L382.8,351.4L406.7,337.3ZM633.4,171.3L634.9,172.1L633.9,171.4L632.5,170.7Z" fill="#b6c7e3" stroke="#b6c7e3" stroke-width="0.5"/><path d="M640.4,199.8L621.2,211.1L621.2,212.1L640.4,200.7ZM621.2,211.1L601.5,222.7L601.5,223.6L621.2,212.1ZM601.5,222.7L581.5,234.5L581.5,235.4L601.5,223.6ZM581.5,234.5L561.1,246.5L561.2,247.4L581.5,235.4ZM561.1,246.5L540.4,258.7L540.4,259.6L561.2,247.4ZM540.4,258.7L519.2,271.1L519.2,272.1L540.4,259.6ZM519.2,271.1L497.6,283.9L497.6,284.8L519.2,272.1ZM497.6,283.9L475.5,296.8L475.6,297.8L497.6,284.8ZM475.5,296.8L453.1,310.0L453.1,311.0L475.6,297.8ZM453.1,310.0L430.1,323.5L430.2,324.5L453.1,311.0ZM430.1,323.5L406.7,337.3L406.8,338.3L430.2,324.5ZM406.7,337.3L382.8,351.4L382.9,352.3L406.8,338.3Z" fill="#b6c6e3" stroke="#b6c6e3" stroke-width="0.5"/><path d="M640.4,200.7L621.2,212.1L621.1,213.0L640.4,201.6ZM621.2,212.1L601.5,223.6L601.5,224.5L621.1,213.0ZM601.5,223.6L581.5,235.4L581.5,236.3L601.5,224.5ZM581.5,235.4L561.2,247.4L561.1,248.3L581.5,236.3ZM561.2,247.4L540.4,259.6L540.4,260.5L561.1,248.3ZM540.4,259.6L519.2,272.1L519.2,273.0L540.4,260.5ZM519.2,272.1L497.6,284.8L497.6,285.7L519.2,273.0ZM497.6,284.8L475.6,297.8L475.6,298.7L497.6,285.7ZM475.6,297.8L453.1,311.0L453.1,311.9L475.6,298.7ZM453.1,311.0L430.2,324.5L430.2,325.4L453.1,311.9ZM430.2,324.5L406.8,338.3L406.8,339.2L430.2,325.4ZM406.8,338.3L382.9,352.3L382.9,353.3L406.8,339.2Z" fill="#b5c6e3" stroke="#b5c6e3" stroke-width="0.5"/><path d="M640.4,201.6L621.1,213.0L621.0,213.8L640.3,202.5ZM621.1,213.0L601.5,224.5L601.4,225.4L621.0,213.8ZM601.5,224.5L581.5,236.3L581.4,237.2L601.4,225.4ZM581.5,236.3L561.1,248.3L561.1,249.2L581.4,237.2ZM561.1,248.3L540.4,260.5L540.3,261.4L561.1,249.2ZM540.4,260.5L519.2,273.0L519.1,273.9L540.3,261.4ZM519.2,273.0L497.6,285.7L497.6,286.7L519.1,273.9ZM497.6,285.7L475.6,298.7L475.5,299.6L497.6,286.7ZM475.6,298.7L453.1,311.9L453.1,312.9L475.5,299.6ZM453.1,311.9L430.2,325.4L430.2,326.4L453.1,312.9ZM430.2,325.4L406.8,339.2L406.8,340.2L430.2,326.4ZM406.8,339.2L382.9,353.3L382.9,354.2L406.8,340.2Z" fill="#b4c5e2" stroke="#b4c5e2" stroke-width="0.5"/><path d="M93.6,170.7L99.6,174.0L98.8,174.4L92.8,171.0ZM99.6,174.0L105.6,177.3L104.8,177.7L98.8,174.4ZM105.6,177.3L111.7,180.6L110.9,181.0L104.8,177.7ZM111.7,180.6L117.8,184.0L117.0,184.4L110.9,181.0ZM117.8,184.0L123.9,187.4L123.1,187.7L117.0,184.4ZM123.9,187.4L130.1,190.7L129.3,191.1L123.1,187.7ZM130.1,190.7L136.3,194.2L135.5,194.5L129.3,191.1ZM136.3,194.2L142.5,197.6L141.7,198.0L135.5,194.5ZM142.5,197.6L148.8,201.0L148.0,201.4L141.7,198.0ZM148.8,201.0L155.1,204.5L154.3,204.9L148.0,201.4ZM155.1,204.5L161.4,208.0L160.6,208.4L154.3,204.9ZM161.4,208.0L167.8,211.5L167.0,211.9L160.6,208.4ZM167.8,211.5L174.2,215.0L173.4,215.4L167.0,211.9ZM174.2,215.0L180.6,218.6L179.8,219.0L173.4,215.4ZM180.6,218.6L187.1,222.2L186.3,222.6L179.8,219.0ZM187.1,222.2L193.6,225.7L192.9,226.2L186.3,222.6ZM193.6,225.7L200.2,229.4L199.4,229.8L192.9,226.2ZM200.2,229.4L206.8,233.0L206.0,233.4L199.4,229.8ZM206.8,233.0L213.4,236.6L212.7,237.1L206.0,233.4ZM213.4,236.6L220.1,240.3L219.3,240.7L212.7,237.1ZM220.1,240.3L226.8,244.0L226.0,244.4L219.3,240.7ZM226.8,244.0L233.6,247.7L232.8,248.2L226.0,244.4ZM233.6,247.7L240.4,251.5L239.6,251.9L232.8,248.2ZM240.4,251.5L247.2,255.2L246.4,255.7L239.6,251.9ZM247.2,255.2L254.1,259.0L253.3,259.5L246.4,255.7ZM254.1,259.0L261.0,262.8L260.2,263.3L253.3,259.5ZM261.0,262.8L268.0,266.7L267.2,267.1L260.2,263.3ZM268.0,266.7L275.0,270.5L274.2,271.0L267.2,267.1ZM275.0,270.5L282.0,274.4L281.2,274.8L274.2,271.0ZM282.0,274.4L289.1,278.3L288.3,278.7L281.2,274.8ZM289.1,278.3L296.2,282.2L295.4,282.7L288.3,278.7ZM296.2,282.2L303.4,286.2L302.6,286.6L295.4,282.7ZM303.4,286.2L310.6,290.1L309.8,290.6L302.6,286.6ZM310.6,290.1L317.9,294.1L317.1,294.6L309.8,290.6ZM317.9,294.1L325.2,298.2L324.4,298.6L317.1,294.6ZM325.2,298.2L332.5,302.2L331.7,302.7L324.4,298.6ZM332.5,302.2L339.9,306.3L339.1,306.7L331.7,302.7ZM339.9,306.3L347.3,310.4L346.5,310.8L339.1,306.7ZM347.3,310.4L354.8,314.5L354.0,314.9L346.5,310.8ZM354.8,314.5L362.3,318.6L361.5,319.1L354.0,314.9ZM283.1,295.0L290.2,299.0L289.7,300.0L282.5,296.0ZM172.1,237.8L178.6,241.5L178.2,242.4L171.7,238.8ZM146.0,224.4L152.4,228.0L151.9,228.9L145.6,225.4ZM95.7,198.4L101.7,201.9L101.4,202.8L95.3,199.4ZM77.3,189.3L83.3,192.6L82.9,193.6L77.0,190.2ZM93.6,170.7L91.1,171.1L91.2,171.3L93.6,170.7ZM93.6,170.7L91.2,171.3L91.3,171.4L93.6,170.7ZM91.3,170.4L89.0,170.4L88.8,170.6L91.2,170.5ZM91.2,170.5L88.8,170.6L88.7,170.9L91.1,170.7ZM79.5,180.3L77.9,182.4L78.8,183.1L80.3,181.0ZM75.9,179.0L74.3,180.8L74.6,181.8L76.1,179.9ZM362.3,318.6L360.8,320.1L360.6,320.0L362.3,318.6Z" fill="#b5c5e0" stroke="#b5c5e0" stroke-width="0.5"/><path d="M92.8,171.0L98.8,174.4L98.0,174.8L92.0,171.5ZM98.8,174.4L104.8,177.7L104.1,178.1L98.0,174.8ZM104.8,177.7L110.9,181.0L110.1,181.4L104.1,178.1ZM110.9,181.0L117.0,184.4L116.2,184.8L110.1,181.4ZM117.0,184.4L123.1,187.7L122.3,188.2L116.2,184.8ZM123.1,187.7L129.3,191.1L128.5,191.6L122.3,188.2ZM129.3,191.1L135.5,194.5L134.7,195.0L128.5,191.6ZM135.5,194.5L141.7,198.0L140.9,198.4L134.7,195.0ZM141.7,198.0L148.0,201.4L147.2,201.9L140.9,198.4ZM148.0,201.4L154.3,204.9L153.5,205.3L147.2,201.9ZM154.3,204.9L160.6,208.4L159.8,208.8L153.5,205.3ZM160.6,208.4L167.0,211.9L166.2,212.3L159.8,208.8ZM167.0,211.9L173.4,215.4L172.6,215.9L166.2,212.3ZM173.4,215.4L179.8,219.0L179.1,219.4L172.6,215.9ZM179.8,219.0L186.3,222.6L185.5,223.0L179.1,219.4ZM186.3,222.6L192.9,226.2L192.1,226.6L185.5,223.0ZM192.9,226.2L199.4,229.8L198.6,230.2L192.1,226.6ZM199.4,229.8L206.0,233.4L205.2,233.9L198.6,230.2ZM206.0,233.4L212.7,237.1L211.9,237.5L205.2,233.9ZM212.7,237.1L219.3,240.7L218.5,241.2L211.9,237.5ZM219.3,240.7L226.0,244.4L225.3,244.9L218.5,241.2ZM226.0,244.4L232.8,248.2L232.0,248.6L225.3,244.9ZM232.8,248.2L239.6,251.9L238.8,252.4L232.0,248.6ZM239.6,251.9L246.4,255.7L245.6,256.1L238.8,252.4ZM246.4,255.7L253.3,259.5L252.5,259.9L245.6,256.1ZM253.3,259.5L260.2,263.3L259.4,263.7L252.5,259.9ZM260.2,263.3L267.2,267.1L266.4,267.6L259.4,263.7ZM267.2,267.1L274.2,271.0L273.4,271.4L266.4,267.6ZM274.2,271.0L281.2,274.8L280.4,275.3L273.4,271.4ZM281.2,274.8L288.3,278.7L287.5,279.2L280.4,275.3ZM288.3,278.7L295.4,282.7L294.6,283.1L287.5,279.2ZM295.4,282.7L302.6,286.6L301.8,287.1L294.6,283.1ZM302.6,286.6L309.8,290.6L309.0,291.1L301.8,287.1ZM309.8,290.6L317.1,294.6L316.3,295.1L309.0,291.1ZM317.1,294.6L324.4,298.6L323.6,299.1L316.3,295.1ZM324.4,298.6L331.7,302.7L330.9,303.2L323.6,299.1ZM331.7,302.7L339.1,306.7L338.3,307.2L330.9,303.2ZM339.1,306.7L346.5,310.8L345.7,311.3L338.3,307.2ZM346.5,310.8L354.0,314.9L353.2,315.5L345.7,311.3ZM354.0,314.9L361.5,319.1L360.8,319.6L353.2,315.5ZM238.1,262.6L245.0,266.4L244.3,267.2L237.4,263.4ZM210.3,248.3L217.0,252.0L216.4,252.8L209.7,249.1ZM183.2,234.4L189.8,238.0L189.1,238.9L182.6,235.2ZM124.7,204.1L130.9,207.6L130.3,208.4L124.1,204.9ZM327.3,318.4L334.7,322.6L334.1,323.5L326.7,319.4ZM297.4,303.0L304.7,307.1L304.1,308.0L296.9,304.0Z" fill="#b8c7e1" stroke="#b8c7e1" stroke-width="0.5"/><path d="M92.0,171.5L98.0,174.8L97.3,175.2L91.3,171.9ZM98.0,174.8L104.1,178.1L103.3,178.5L97.3,175.2ZM104.1,178.1L110.1,181.4L109.3,181.9L103.3,178.5ZM110.1,181.4L116.2,184.8L115.4,185.2L109.3,181.9ZM116.2,184.8L122.3,188.2L121.6,188.6L115.4,185.2ZM122.3,188.2L128.5,191.6L127.7,192.0L121.6,188.6ZM128.5,191.6L134.7,195.0L133.9,195.4L127.7,192.0ZM134.7,195.0L140.9,198.4L140.1,198.9L133.9,195.4ZM140.9,198.4L147.2,201.9L146.4,202.3L140.1,198.9ZM147.2,201.9L153.5,205.3L152.7,205.8L146.4,202.3ZM153.5,205.3L159.8,208.8L159.0,209.3L152.7,205.8ZM159.8,208.8L166.2,212.3L165.4,212.8L159.0,209.3ZM166.2,212.3L172.6,215.9L171.8,216.3L165.4,212.8ZM172.6,215.9L179.1,219.4L178.3,219.9L171.8,216.3ZM179.1,219.4L185.5,223.0L184.8,223.5L178.3,219.9ZM185.5,223.0L192.1,226.6L191.3,227.1L184.8,223.5ZM192.1,226.6L198.6,230.2L197.8,230.7L191.3,227.1ZM198.6,230.2L205.2,233.9L204.4,234.3L197.8,230.7ZM205.2,233.9L211.9,237.5L211.1,238.0L204.4,234.3ZM211.9,237.5L218.5,241.2L217.7,241.7L211.1,238.0ZM218.5,241.2L225.3,244.9L224.5,245.4L217.7,241.7ZM225.3,244.9L232.0,248.6L231.2,249.1L224.5,245.4ZM232.0,248.6L238.8,252.4L238.0,252.9L231.2,249.1ZM238.8,252.4L245.6,256.1L244.8,256.6L238.0,252.9ZM245.6,256.1L252.5,259.9L251.7,260.4L244.8,256.6ZM252.5,259.9L259.4,263.7L258.6,264.2L251.7,260.4ZM259.4,263.7L266.4,267.6L265.6,268.1L258.6,264.2ZM266.4,267.6L273.4,271.4L272.6,271.9L265.6,268.1ZM273.4,271.4L280.4,275.3L279.6,275.8L272.6,271.9ZM280.4,275.3L287.5,279.2L286.7,279.7L279.6,275.8ZM287.5,279.2L294.6,283.1L293.8,283.7L286.7,279.7ZM294.6,283.1L301.8,287.1L301.0,287.6L293.8,283.7ZM301.8,287.1L309.0,291.1L308.2,291.6L301.0,287.6ZM309.0,291.1L316.3,295.1L315.5,295.6L308.2,291.6ZM316.3,295.1L323.6,299.1L322.8,299.6L315.5,295.6ZM323.6,299.1L330.9,303.2L330.1,303.7L322.8,299.6ZM330.9,303.2L338.3,307.2L337.5,307.8L330.1,303.7ZM338.3,307.2L345.7,311.3L344.9,311.9L337.5,307.8ZM345.7,311.3L353.2,315.5L352.4,316.0L344.9,311.9ZM353.2,315.5L360.8,319.6L360.0,320.1L352.4,316.0ZM310.8,299.5L318.1,303.5L317.4,304.3L310.1,300.2ZM281.4,284.3L288.5,288.2L287.7,289.0L280.6,285.0ZM252.6,269.4L259.5,273.3L258.8,274.1L251.9,270.2ZM190.4,237.2L197.0,240.9L196.4,241.7L189.8,238.0ZM163.8,223.6L170.2,227.2L169.6,228.0L163.2,224.4ZM137.8,210.2L144.1,213.7L143.5,214.6L137.2,211.1ZM106.2,193.8L112.4,197.2L111.8,198.1L105.7,194.6ZM81.5,181.2L87.5,184.5L87.0,185.4L81.0,182.0ZM319.3,315.3L326.7,319.4L326.1,320.4L318.7,316.2ZM91.3,171.4L89.0,172.3L89.2,172.5L91.4,171.5ZM89.0,172.3L86.7,173.4L87.0,173.7L89.2,172.5ZM86.7,173.4L84.6,174.7L85.0,175.1L87.0,173.7ZM84.6,174.7L82.5,176.2L83.0,176.7L85.0,175.1ZM82.5,176.2L80.6,177.9L81.2,178.5L83.0,176.7ZM81.2,178.5L79.5,180.3L80.3,181.0L81.9,179.0Z" fill="#bac9e3" stroke="#bac9e3" stroke-width="0.5"/><path d="M91.3,171.9L97.3,175.2L96.5,175.7L90.5,172.4ZM97.3,175.2L103.3,178.5L102.5,179.0L96.5,175.7ZM103.3,178.5L109.3,181.9L108.6,182.4L102.5,179.0ZM109.3,181.9L115.4,185.2L114.7,185.7L108.6,182.4ZM115.4,185.2L121.6,188.6L120.8,189.1L114.7,185.7ZM121.6,188.6L127.7,192.0L126.9,192.5L120.8,189.1ZM127.7,192.0L133.9,195.4L133.1,195.9L126.9,192.5ZM133.9,195.4L140.1,198.9L139.4,199.4L133.1,195.9ZM140.1,198.9L146.4,202.3L145.6,202.8L139.4,199.4ZM146.4,202.3L152.7,205.8L151.9,206.3L145.6,202.8ZM152.7,205.8L159.0,209.3L158.3,209.8L151.9,206.3ZM159.0,209.3L165.4,212.8L164.6,213.3L158.3,209.8ZM165.4,212.8L171.8,216.3L171.1,216.9L164.6,213.3ZM171.8,216.3L178.3,219.9L177.5,220.4L171.1,216.9ZM178.3,219.9L184.8,223.5L184.0,224.0L177.5,220.4ZM184.8,223.5L191.3,227.1L190.5,227.6L184.0,224.0ZM191.3,227.1L197.8,230.7L197.1,231.2L190.5,227.6ZM197.8,230.7L204.4,234.3L203.7,234.9L197.1,231.2ZM204.4,234.3L211.1,238.0L210.3,238.5L203.7,234.9ZM211.1,238.0L217.7,241.7L217.0,242.2L210.3,238.5ZM217.7,241.7L224.5,245.4L223.7,245.9L217.0,242.2ZM224.5,245.4L231.2,249.1L230.4,249.6L223.7,245.9ZM231.2,249.1L238.0,252.9L237.2,253.4L230.4,249.6ZM238.0,252.9L244.8,256.6L244.1,257.2L237.2,253.4ZM244.8,256.6L251.7,260.4L250.9,261.0L244.1,257.2ZM251.7,260.4L258.6,264.2L257.8,264.8L250.9,261.0ZM258.6,264.2L265.6,268.1L264.8,268.6L257.8,264.8ZM265.6,268.1L272.6,271.9L271.8,272.5L264.8,268.6ZM272.6,271.9L279.6,275.8L278.8,276.4L271.8,272.5ZM279.6,275.8L286.7,279.7L285.9,280.3L278.8,276.4ZM286.7,279.7L293.8,283.7L293.0,284.2L285.9,280.3ZM293.8,283.7L301.0,287.6L300.2,288.2L293.0,284.2ZM301.0,287.6L308.2,291.6L307.4,292.2L300.2,288.2ZM308.2,291.6L315.5,295.6L314.7,296.2L307.4,292.2ZM315.5,295.6L322.8,299.6L322.0,300.2L314.7,296.2ZM322.8,299.6L330.1,303.7L329.3,304.2L322.0,300.2ZM330.1,303.7L337.5,307.8L336.7,308.3L329.3,304.2ZM337.5,307.8L344.9,311.9L344.2,312.4L336.7,308.3ZM344.9,311.9L352.4,316.0L351.6,316.6L344.2,312.4ZM352.4,316.0L360.0,320.1L359.2,320.7L351.6,316.6ZM90.5,172.4L96.5,175.7L95.7,176.2L89.7,172.9ZM96.5,175.7L102.5,179.0L101.7,179.5L95.7,176.2ZM102.5,179.0L108.6,182.4L107.8,182.9L101.7,179.5ZM108.6,182.4L114.7,185.7L113.9,186.2L107.8,182.9ZM114.7,185.7L120.8,189.1L120.0,189.6L113.9,186.2ZM120.8,189.1L126.9,192.5L126.2,193.0L120.0,189.6ZM126.9,192.5L133.1,195.9L132.4,196.4L126.2,193.0ZM133.1,195.9L139.4,199.4L138.6,199.9L132.4,196.4ZM139.4,199.4L145.6,202.8L144.9,203.3L138.6,199.9ZM145.6,202.8L151.9,206.3L151.2,206.8L144.9,203.3ZM151.9,206.3L158.3,209.8L157.5,210.3L151.2,206.8ZM158.3,209.8L164.6,213.3L163.9,213.9L157.5,210.3ZM164.6,213.3L171.1,216.9L170.3,217.4L163.9,213.9ZM171.1,216.9L177.5,220.4L176.7,221.0L170.3,217.4ZM177.5,220.4L184.0,224.0L183.2,224.5L176.7,221.0ZM184.0,224.0L190.5,227.6L189.7,228.1L183.2,224.5ZM190.5,227.6L197.1,231.2L196.3,231.8L189.7,228.1ZM197.1,231.2L203.7,234.9L202.9,235.4L196.3,231.8ZM203.7,234.9L210.3,238.5L209.5,239.1L202.9,235.4ZM210.3,238.5L217.0,242.2L216.2,242.8L209.5,239.1ZM217.0,242.2L223.7,245.9L222.9,246.5L216.2,242.8ZM223.7,245.9L230.4,249.6L229.7,250.2L222.9,246.5ZM230.4,249.6L237.2,253.4L236.4,254.0L229.7,250.2ZM237.2,253.4L244.1,257.2L243.3,257.7L236.4,254.0ZM244.1,257.2L250.9,261.0L250.2,261.5L243.3,257.7ZM250.9,261.0L257.8,264.8L257.1,265.4L250.2,261.5ZM257.8,264.8L264.8,268.6L264.0,269.2L257.1,265.4ZM264.8,268.6L271.8,272.5L271.0,273.1L264.0,269.2ZM271.8,272.5L278.8,276.4L278.1,277.0L271.0,273.1ZM278.8,276.4L285.9,280.3L285.1,280.9L278.1,277.0ZM285.9,280.3L293.0,284.2L292.3,284.8L285.1,280.9ZM293.0,284.2L300.2,288.2L299.4,288.8L292.3,284.8ZM300.2,288.2L307.4,292.2L306.6,292.7L299.4,288.8ZM307.4,292.2L314.7,296.2L313.9,296.8L306.6,292.7ZM314.7,296.2L322.0,300.2L321.2,300.8L313.9,296.8ZM322.0,300.2L329.3,304.2L328.5,304.8L321.2,300.8ZM329.3,304.2L336.7,308.3L335.9,308.9L328.5,304.8ZM336.7,308.3L344.2,312.4L343.4,313.0L335.9,308.9ZM344.2,312.4L351.6,316.6L350.9,317.2L343.4,313.0ZM351.6,316.6L359.2,320.7L358.4,321.3L350.9,317.2ZM89.7,172.9L95.7,176.2L95.0,176.7L89.0,173.4ZM95.7,176.2L101.7,179.5L101.0,180.1L95.0,176.7ZM101.7,179.5L107.8,182.9L107.0,183.4L101.0,180.1ZM107.8,182.9L113.9,186.2L113.1,186.8L107.0,183.4ZM113.9,186.2L120.0,189.6L119.3,190.2L113.1,186.8ZM120.0,189.6L126.2,193.0L125.4,193.6L119.3,190.2ZM126.2,193.0L132.4,196.4L131.6,197.0L125.4,193.6ZM132.4,196.4L138.6,199.9L137.8,200.4L131.6,197.0ZM138.6,199.9L144.9,203.3L144.1,203.9L137.8,200.4ZM144.9,203.3L151.2,206.8L150.4,207.4L144.1,203.9ZM151.2,206.8L157.5,210.3L156.7,210.9L150.4,207.4ZM157.5,210.3L163.9,213.9L163.1,214.4L156.7,210.9ZM163.9,213.9L170.3,217.4L169.5,218.0L163.1,214.4ZM170.3,217.4L176.7,221.0L176.0,221.5L169.5,218.0ZM176.7,221.0L183.2,224.5L182.4,225.1L176.0,221.5ZM183.2,224.5L189.7,228.1L189.0,228.7L182.4,225.1ZM189.7,228.1L196.3,231.8L195.5,232.3L189.0,228.7ZM196.3,231.8L202.9,235.4L202.1,236.0L195.5,232.3ZM202.9,235.4L209.5,239.1L208.7,239.7L202.1,236.0ZM209.5,239.1L216.2,242.8L215.4,243.4L208.7,239.7ZM216.2,242.8L222.9,246.5L222.1,247.1L215.4,243.4ZM222.9,246.5L229.7,250.2L228.9,250.8L222.1,247.1ZM229.7,250.2L236.4,254.0L235.7,254.6L228.9,250.8ZM236.4,254.0L243.3,257.7L242.5,258.3L235.7,254.6ZM243.3,257.7L250.2,261.5L249.4,262.1L242.5,258.3ZM250.2,261.5L257.1,265.4L256.3,266.0L249.4,262.1ZM257.1,265.4L264.0,269.2L263.3,269.8L256.3,266.0ZM264.0,269.2L271.0,273.1L270.2,273.7L263.3,269.8ZM271.0,273.1L278.1,277.0L277.3,277.6L270.2,273.7ZM278.1,277.0L285.1,280.9L284.4,281.5L277.3,277.6ZM285.1,280.9L292.3,284.8L291.5,285.4L284.4,281.5ZM292.3,284.8L299.4,288.8L298.7,289.4L291.5,285.4ZM299.4,288.8L306.6,292.7L305.9,293.4L298.7,289.4ZM306.6,292.7L313.9,296.8L313.1,297.4L305.9,293.4ZM313.9,296.8L321.2,300.8L320.4,301.4L313.1,297.4ZM321.2,300.8L328.5,304.8L327.8,305.5L320.4,301.4ZM328.5,304.8L335.9,308.9L335.2,309.6L327.8,305.5ZM335.9,308.9L343.4,313.0L342.6,313.7L335.2,309.6ZM343.4,313.0L350.9,317.2L350.1,317.8L342.6,313.7ZM350.9,317.2L358.4,321.3L357.6,322.0L350.1,317.8ZM89.0,173.4L95.0,176.7L94.2,177.3L88.2,174.0ZM95.0,176.7L101.0,180.1L100.2,180.6L94.2,177.3ZM101.0,180.1L107.0,183.4L106.3,184.0L100.2,180.6ZM107.0,183.4L113.1,186.8L112.4,187.4L106.3,184.0ZM113.1,186.8L119.3,190.2L118.5,190.8L112.4,187.4ZM119.3,190.2L125.4,193.6L124.7,194.2L118.5,190.8ZM125.4,193.6L131.6,197.0L130.9,197.6L124.7,194.2ZM131.6,197.0L137.8,200.4L137.1,201.0L130.9,197.6ZM137.8,200.4L144.1,203.9L143.3,204.5L137.1,201.0ZM144.1,203.9L150.4,207.4L149.6,208.0L143.3,204.5ZM150.4,207.4L156.7,210.9L156.0,211.5L149.6,208.0ZM156.7,210.9L163.1,214.4L162.4,215.0L156.0,211.5ZM163.1,214.4L169.5,218.0L168.8,218.6L162.4,215.0ZM169.5,218.0L176.0,221.5L175.2,222.1L168.8,218.6ZM176.0,221.5L182.4,225.1L181.7,225.7L175.2,222.1ZM182.4,225.1L189.0,228.7L188.2,229.3L181.7,225.7ZM189.0,228.7L195.5,232.3L194.8,233.0L188.2,229.3ZM195.5,232.3L202.1,236.0L201.4,236.6L194.8,233.0ZM202.1,236.0L208.7,239.7L208.0,240.3L201.4,236.6ZM208.7,239.7L215.4,243.4L214.7,244.0L208.0,240.3ZM215.4,243.4L222.1,247.1L221.4,247.7L214.7,244.0ZM222.1,247.1L228.9,250.8L228.1,251.4L221.4,247.7ZM228.9,250.8L235.7,254.6L234.9,255.2L228.1,251.4ZM235.7,254.6L242.5,258.3L241.7,259.0L234.9,255.2ZM242.5,258.3L249.4,262.1L248.6,262.8L241.7,259.0ZM249.4,262.1L256.3,266.0L255.5,266.6L248.6,262.8ZM256.3,266.0L263.3,269.8L262.5,270.4L255.5,266.6ZM263.3,269.8L270.2,273.7L269.5,274.3L262.5,270.4ZM270.2,273.7L277.3,277.6L276.5,278.2L269.5,274.3ZM277.3,277.6L284.4,281.5L283.6,282.1L276.5,278.2ZM284.4,281.5L291.5,285.4L290.7,286.1L283.6,282.1ZM291.5,285.4L298.7,289.4L297.9,290.0L290.7,286.1ZM298.7,289.4L305.9,293.4L305.1,294.0L297.9,290.0ZM305.9,293.4L313.1,297.4L312.4,298.0L305.1,294.0ZM313.1,297.4L320.4,301.4L319.7,302.1L312.4,298.0ZM320.4,301.4L327.8,305.5L327.0,306.1L319.7,302.1ZM327.8,305.5L335.2,309.6L334.4,310.2L327.0,306.1ZM335.2,309.6L342.6,313.7L341.8,314.4L334.4,310.2ZM342.6,313.7L350.1,317.8L349.3,318.5L341.8,314.4ZM350.1,317.8L357.6,322.0L356.8,322.7L349.3,318.5ZM88.2,174.0L94.2,177.3L93.5,177.9L87.5,174.6ZM94.2,177.3L100.2,180.6L99.5,181.2L93.5,177.9ZM100.2,180.6L106.3,184.0L105.6,184.6L99.5,181.2ZM106.3,184.0L112.4,187.4L111.6,188.0L105.6,184.6ZM112.4,187.4L118.5,190.8L117.8,191.4L111.6,188.0ZM118.5,190.8L124.7,194.2L123.9,194.8L117.8,191.4ZM124.7,194.2L130.9,197.6L130.1,198.2L123.9,194.8ZM130.9,197.6L137.1,201.0L136.3,201.7L130.1,198.2ZM137.1,201.0L143.3,204.5L142.6,205.1L136.3,201.7ZM143.3,204.5L149.6,208.0L148.9,208.6L142.6,205.1ZM149.6,208.0L156.0,211.5L155.2,212.1L148.9,208.6ZM156.0,211.5L162.4,215.0L161.6,215.7L155.2,212.1ZM162.4,215.0L168.8,218.6L168.0,219.2L161.6,215.7ZM168.8,218.6L175.2,222.1L174.5,222.8L168.0,219.2ZM175.2,222.1L181.7,225.7L180.9,226.4L174.5,222.8ZM181.7,225.7L188.2,229.3L187.5,230.0L180.9,226.4ZM188.2,229.3L194.8,233.0L194.0,233.6L187.5,230.0ZM194.8,233.0L201.4,236.6L200.6,237.3L194.0,233.6ZM201.4,236.6L208.0,240.3L207.2,240.9L200.6,237.3ZM208.0,240.3L214.7,244.0L213.9,244.6L207.2,240.9ZM214.7,244.0L221.4,247.7L220.6,248.3L213.9,244.6ZM221.4,247.7L228.1,251.4L227.4,252.1L220.6,248.3ZM228.1,251.4L234.9,255.2L234.2,255.8L227.4,252.1ZM234.9,255.2L241.7,259.0L241.0,259.6L234.2,255.8ZM241.7,259.0L248.6,262.8L247.9,263.4L241.0,259.6ZM248.6,262.8L255.5,266.6L254.8,267.3L247.9,263.4ZM255.5,266.6L262.5,270.4L261.7,271.1L254.8,267.3ZM262.5,270.4L269.5,274.3L268.7,275.0L261.7,271.1ZM269.5,274.3L276.5,278.2L275.8,278.9L268.7,275.0ZM276.5,278.2L283.6,282.1L282.8,282.8L275.8,278.9ZM283.6,282.1L290.7,286.1L290.0,286.8L282.8,282.8ZM290.7,286.1L297.9,290.0L297.1,290.7L290.0,286.8ZM297.9,290.0L305.1,294.0L304.3,294.7L297.1,290.7ZM305.1,294.0L312.4,298.0L311.6,298.7L304.3,294.7ZM312.4,298.0L319.7,302.1L318.9,302.8L311.6,298.7ZM319.7,302.1L327.0,306.1L326.2,306.8L318.9,302.8ZM327.0,306.1L334.4,310.2L333.6,310.9L326.2,306.8ZM334.4,310.2L341.8,314.4L341.1,315.1L333.6,310.9ZM341.8,314.4L349.3,318.5L348.5,319.2L341.1,315.1ZM275.8,278.9L282.8,282.8L282.1,283.5L275.0,279.6ZM282.8,282.8L290.0,286.8L289.2,287.5L282.1,283.5ZM290.0,286.8L297.1,290.7L296.4,291.4L289.2,287.5ZM297.1,290.7L304.3,294.7L303.6,295.4L296.4,291.4ZM304.3,294.7L311.6,298.7L310.8,299.5L303.6,295.4ZM311.6,298.7L318.9,302.8L318.1,303.5L310.8,299.5ZM261.0,271.8L268.0,275.7L267.2,276.4L260.2,272.5ZM268.0,275.7L275.0,279.6L274.3,280.3L267.2,276.4ZM275.0,279.6L282.1,283.5L281.4,284.3L274.3,280.3ZM282.1,283.5L289.2,287.5L288.5,288.2L281.4,284.3ZM289.2,287.5L296.4,291.4L295.6,292.2L288.5,288.2ZM239.5,261.0L246.4,264.9L245.7,265.6L238.8,261.8ZM246.4,264.9L253.3,268.7L252.6,269.4L245.7,265.6ZM253.3,268.7L260.2,272.5L259.5,273.3L252.6,269.4ZM260.2,272.5L267.2,276.4L266.5,277.2L259.5,273.3ZM211.7,246.8L218.4,250.5L217.7,251.2L211.0,247.5ZM218.4,250.5L225.2,254.2L224.5,255.0L217.7,251.2ZM225.2,254.2L232.0,258.0L231.3,258.8L224.5,255.0ZM232.0,258.0L238.8,261.8L238.1,262.6L231.3,258.8ZM191.1,236.5L197.7,240.1L197.0,240.9L190.4,237.2ZM197.7,240.1L204.4,243.8L203.7,244.6L197.0,240.9ZM204.4,243.8L211.0,247.5L210.3,248.3L203.7,244.6ZM158.1,219.2L164.5,222.8L163.8,223.6L157.4,220.0ZM164.5,222.8L170.9,226.4L170.2,227.2L163.8,223.6ZM170.9,226.4L177.4,230.0L176.7,230.8L170.2,227.2ZM132.2,206.0L138.4,209.4L137.8,210.2L131.5,206.8ZM138.4,209.4L144.7,212.9L144.1,213.7L137.8,210.2ZM106.9,193.0L113.0,196.4L112.4,197.2L106.2,193.8ZM89.4,172.7L87.4,174.0L87.9,174.3L89.7,172.9ZM87.4,174.0L85.5,175.5L86.1,175.9L87.9,174.3ZM85.5,175.5L83.6,177.2L84.3,177.6L86.1,175.9ZM83.6,177.2L81.9,179.0L82.7,179.6L84.3,177.6Z" fill="#bccbe4" stroke="#bccbe4" stroke-width="0.5"/><path d="M349.3,318.5L356.8,322.7L356.1,323.4L348.5,319.2ZM177.4,230.0L183.9,233.6L183.2,234.4L176.7,230.8ZM151.0,216.5L157.4,220.0L156.8,220.8L150.4,217.3ZM119.1,199.8L125.3,203.3L124.7,204.1L118.5,200.7ZM125.3,203.3L131.5,206.8L130.9,207.6L124.7,204.1ZM88.1,183.7L94.1,187.1L93.5,187.9L87.5,184.5ZM94.1,187.1L100.2,190.4L99.6,191.3L93.5,187.9ZM341.6,327.7L349.1,331.9L348.5,332.9L341.0,328.7ZM318.7,316.2L326.1,320.4L325.5,321.3L318.1,317.2ZM85.0,175.1L83.0,176.7L83.6,177.2L85.5,175.5ZM81.9,179.0L80.3,181.0L81.3,181.6L82.7,179.6ZM358.8,321.5L357.1,323.3L356.4,323.0L358.4,321.3ZM357.2,334.1L356.6,336.8L354.7,336.4L355.5,333.7ZM365.0,343.0L365.1,345.8L362.6,345.9L362.6,343.0Z" fill="#bbcae4" stroke="#bbcae4" stroke-width="0.5"/><path d="M87.5,174.6L93.5,177.9L92.8,178.5L86.8,175.2ZM93.5,177.9L99.5,181.2L98.8,181.9L92.8,178.5ZM99.5,181.2L105.6,184.6L104.8,185.2L98.8,181.9ZM105.6,184.6L111.6,188.0L110.9,188.6L104.8,185.2ZM111.6,188.0L117.8,191.4L117.0,192.0L110.9,188.6ZM117.8,191.4L123.9,194.8L123.2,195.4L117.0,192.0ZM123.9,194.8L130.1,198.2L129.4,198.9L123.2,195.4ZM130.1,198.2L136.3,201.7L135.6,202.3L129.4,198.9ZM136.3,201.7L142.6,205.1L141.9,205.8L135.6,202.3ZM142.6,205.1L148.9,208.6L148.2,209.3L141.9,205.8ZM148.9,208.6L155.2,212.1L154.5,212.8L148.2,209.3ZM155.2,212.1L161.6,215.7L160.9,216.3L154.5,212.8ZM161.6,215.7L168.0,219.2L167.3,219.9L160.9,216.3ZM168.0,219.2L174.5,222.8L173.7,223.4L167.3,219.9ZM174.5,222.8L180.9,226.4L180.2,227.0L173.7,223.4ZM180.9,226.4L187.5,230.0L186.7,230.6L180.2,227.0ZM187.5,230.0L194.0,233.6L193.3,234.3L186.7,230.6ZM194.0,233.6L200.6,237.3L199.9,237.9L193.3,234.3ZM200.6,237.3L207.2,240.9L206.5,241.6L199.9,237.9ZM207.2,240.9L213.9,244.6L213.2,245.3L206.5,241.6ZM213.9,244.6L220.6,248.3L219.9,249.0L213.2,245.3ZM220.6,248.3L227.4,252.1L226.6,252.8L219.9,249.0ZM227.4,252.1L234.2,255.8L233.4,256.5L226.6,252.8ZM234.2,255.8L241.0,259.6L240.2,260.3L233.4,256.5ZM241.0,259.6L247.9,263.4L247.1,264.1L240.2,260.3ZM247.9,263.4L254.8,267.3L254.0,268.0L247.1,264.1ZM254.8,267.3L261.7,271.1L261.0,271.8L254.0,268.0ZM261.7,271.1L268.7,275.0L268.0,275.7L261.0,271.8ZM86.8,175.2L92.8,178.5L92.0,179.2L86.1,175.9ZM92.8,178.5L98.8,181.9L98.1,182.5L92.0,179.2ZM98.8,181.9L104.8,185.2L104.1,185.9L98.1,182.5ZM104.8,185.2L110.9,188.6L110.2,189.3L104.1,185.9ZM110.9,188.6L117.0,192.0L116.3,192.7L110.2,189.3ZM117.0,192.0L123.2,195.4L122.5,196.1L116.3,192.7ZM123.2,195.4L129.4,198.9L128.7,199.5L122.5,196.1ZM129.4,198.9L135.6,202.3L134.9,203.0L128.7,199.5ZM135.6,202.3L141.9,205.8L141.2,206.5L134.9,203.0ZM141.9,205.8L148.2,209.3L147.5,210.0L141.2,206.5ZM148.2,209.3L154.5,212.8L153.8,213.5L147.5,210.0ZM154.5,212.8L160.9,216.3L160.2,217.0L153.8,213.5ZM160.9,216.3L167.3,219.9L166.6,220.6L160.2,217.0ZM167.3,219.9L173.7,223.4L173.0,224.1L166.6,220.6ZM173.7,223.4L180.2,227.0L179.5,227.7L173.0,224.1ZM180.2,227.0L186.7,230.6L186.0,231.3L179.5,227.7ZM186.7,230.6L193.3,234.3L192.5,235.0L186.0,231.3ZM193.3,234.3L199.9,237.9L199.1,238.6L192.5,235.0ZM199.9,237.9L206.5,241.6L205.8,242.3L199.1,238.6ZM206.5,241.6L213.2,245.3L212.4,246.0L205.8,242.3ZM213.2,245.3L219.9,249.0L219.1,249.7L212.4,246.0ZM219.9,249.0L226.6,252.8L225.9,253.5L219.1,249.7ZM226.6,252.8L233.4,256.5L232.7,257.2L225.9,253.5ZM233.4,256.5L240.2,260.3L239.5,261.0L232.7,257.2ZM240.2,260.3L247.1,264.1L246.4,264.9L239.5,261.0ZM247.1,264.1L254.0,268.0L253.3,268.7L246.4,264.9ZM86.1,175.9L92.0,179.2L91.3,179.9L85.4,176.6ZM92.0,179.2L98.1,182.5L97.4,183.2L91.3,179.9ZM98.1,182.5L104.1,185.9L103.4,186.6L97.4,183.2ZM104.1,185.9L110.2,189.3L109.5,190.0L103.4,186.6ZM110.2,189.3L116.3,192.7L115.6,193.4L109.5,190.0ZM116.3,192.7L122.5,196.1L121.8,196.8L115.6,193.4ZM122.5,196.1L128.7,199.5L128.0,200.2L121.8,196.8ZM128.7,199.5L134.9,203.0L134.2,203.7L128.0,200.2ZM134.9,203.0L141.2,206.5L140.4,207.2L134.2,203.7ZM141.2,206.5L147.5,210.0L146.7,210.7L140.4,207.2ZM147.5,210.0L153.8,213.5L153.1,214.2L146.7,210.7ZM153.8,213.5L160.2,217.0L159.4,217.7L153.1,214.2ZM160.2,217.0L166.6,220.6L165.8,221.3L159.4,217.7ZM166.6,220.6L173.0,224.1L172.3,224.8L165.8,221.3ZM173.0,224.1L179.5,227.7L178.8,228.4L172.3,224.8ZM179.5,227.7L186.0,231.3L185.3,232.1L178.8,228.4ZM186.0,231.3L192.5,235.0L191.8,235.7L185.3,232.1ZM192.5,235.0L199.1,238.6L198.4,239.4L191.8,235.7ZM199.1,238.6L205.8,242.3L205.1,243.0L198.4,239.4ZM205.8,242.3L212.4,246.0L211.7,246.8L205.1,243.0ZM212.4,246.0L219.1,249.7L218.4,250.5L211.7,246.8ZM219.1,249.7L225.9,253.5L225.2,254.2L218.4,250.5ZM225.9,253.5L232.7,257.2L232.0,258.0L225.2,254.2ZM85.4,176.6L91.3,179.9L90.7,180.6L84.7,177.3ZM91.3,179.9L97.4,183.2L96.7,184.0L90.7,180.6ZM97.4,183.2L103.4,186.6L102.7,187.3L96.7,184.0ZM103.4,186.6L109.5,190.0L108.8,190.7L102.7,187.3ZM109.5,190.0L115.6,193.4L114.9,194.1L108.8,190.7ZM115.6,193.4L121.8,196.8L121.1,197.5L114.9,194.1ZM121.8,196.8L128.0,200.2L127.3,201.0L121.1,197.5ZM128.0,200.2L134.2,203.7L133.5,204.4L127.3,201.0ZM134.2,203.7L140.4,207.2L139.8,207.9L133.5,204.4ZM140.4,207.2L146.7,210.7L146.1,211.4L139.8,207.9ZM146.7,210.7L153.1,214.2L152.4,214.9L146.1,211.4ZM153.1,214.2L159.4,217.7L158.7,218.5L152.4,214.9ZM159.4,217.7L165.8,221.3L165.2,222.0L158.7,218.5ZM165.8,221.3L172.3,224.8L171.6,225.6L165.2,222.0ZM172.3,224.8L178.8,228.4L178.1,229.2L171.6,225.6ZM178.8,228.4L185.3,232.1L184.6,232.8L178.1,229.2ZM185.3,232.1L191.8,235.7L191.1,236.5L184.6,232.8ZM191.8,235.7L198.4,239.4L197.7,240.1L191.1,236.5ZM198.4,239.4L205.1,243.0L204.4,243.8L197.7,240.1ZM205.1,243.0L211.7,246.8L211.0,247.5L204.4,243.8ZM84.7,177.3L90.7,180.6L90.0,181.3L84.0,178.0ZM90.7,180.6L96.7,184.0L96.0,184.7L90.0,181.3ZM96.7,184.0L102.7,187.3L102.1,188.1L96.0,184.7ZM102.7,187.3L108.8,190.7L108.1,191.4L102.1,188.1ZM108.8,190.7L114.9,194.1L114.3,194.8L108.1,191.4ZM114.9,194.1L121.1,197.5L120.4,198.3L114.3,194.8ZM121.1,197.5L127.3,201.0L126.6,201.7L120.4,198.3ZM127.3,201.0L133.5,204.4L132.8,205.2L126.6,201.7ZM133.5,204.4L139.8,207.9L139.1,208.7L132.8,205.2ZM139.8,207.9L146.1,211.4L145.4,212.2L139.1,208.7ZM146.1,211.4L152.4,214.9L151.7,215.7L145.4,212.2ZM152.4,214.9L158.7,218.5L158.1,219.2L151.7,215.7ZM158.7,218.5L165.2,222.0L164.5,222.8L158.1,219.2ZM165.2,222.0L171.6,225.6L170.9,226.4L164.5,222.8ZM171.6,225.6L178.1,229.2L177.4,230.0L170.9,226.4ZM84.0,178.0L90.0,181.3L89.4,182.1L83.4,178.8ZM90.0,181.3L96.0,184.7L95.4,185.5L89.4,182.1ZM96.0,184.7L102.1,188.1L101.4,188.8L95.4,185.5ZM102.1,188.1L108.1,191.4L107.5,192.2L101.4,188.8ZM108.1,191.4L114.3,194.8L113.6,195.6L107.5,192.2ZM114.3,194.8L120.4,198.3L119.8,199.0L113.6,195.6ZM120.4,198.3L126.6,201.7L125.9,202.5L119.8,199.0ZM126.6,201.7L132.8,205.2L132.2,206.0L125.9,202.5ZM132.8,205.2L139.1,208.7L138.4,209.4L132.2,206.0Z" fill="#bdcce5" stroke="#bdcce5" stroke-width="0.5"/><path d="M268.7,275.0L275.8,278.9L275.0,279.6L268.0,275.7ZM254.0,268.0L261.0,271.8L260.2,272.5L253.3,268.7ZM232.7,257.2L239.5,261.0L238.8,261.8L232.0,258.0ZM184.6,232.8L191.1,236.5L190.4,237.2L183.9,233.6ZM145.4,212.2L151.7,215.7L151.0,216.5L144.7,212.9ZM151.7,215.7L158.1,219.2L157.4,220.0L151.0,216.5ZM107.5,192.2L113.6,195.6L113.0,196.4L106.9,193.0ZM113.6,195.6L119.8,199.0L119.1,199.8L113.0,196.4ZM119.8,199.0L125.9,202.5L125.3,203.3L119.1,199.8ZM125.9,202.5L132.2,206.0L131.5,206.8L125.3,203.3ZM82.7,179.6L88.7,182.9L88.1,183.7L82.1,180.4ZM88.7,182.9L94.7,186.2L94.1,187.1L88.1,183.7ZM94.7,186.2L100.8,189.6L100.2,190.4L94.1,187.1ZM100.8,189.6L106.9,193.0L106.2,193.8L100.2,190.4ZM367.0,339.9L367.3,342.8L365.0,343.0L364.8,340.1Z" fill="#bccbe5" stroke="#bccbe5" stroke-width="0.5"/><path d="M318.9,302.8L326.2,306.8L325.5,307.6L318.1,303.5ZM144.7,212.9L151.0,216.5L150.4,217.3L144.1,213.7ZM113.0,196.4L119.1,199.8L118.5,200.7L112.4,197.2ZM82.1,180.4L88.1,183.7L87.5,184.5L81.5,181.2ZM91.5,171.6L89.4,172.7L89.7,172.9L91.7,171.7Z" fill="#bbcbe4" stroke="#bbcbe4" stroke-width="0.5"/><path d="M326.2,306.8L333.6,310.9L332.9,311.7L325.5,307.6ZM333.6,310.9L341.1,315.1L340.3,315.8L332.9,311.7ZM296.4,291.4L303.6,295.4L302.8,296.2L295.6,292.2ZM303.6,295.4L310.8,299.5L310.1,300.2L302.8,296.2ZM267.2,276.4L274.3,280.3L273.6,281.1L266.5,277.2ZM274.3,280.3L281.4,284.3L280.6,285.0L273.6,281.1ZM238.8,261.8L245.7,265.6L245.0,266.4L238.1,262.6ZM245.7,265.6L252.6,269.4L251.9,270.2L245.0,266.4ZM211.0,247.5L217.7,251.2L217.0,252.0L210.3,248.3ZM217.7,251.2L224.5,255.0L223.8,255.8L217.0,252.0ZM183.9,233.6L190.4,237.2L189.8,238.0L183.2,234.4ZM157.4,220.0L163.8,223.6L163.2,224.4L156.8,220.8ZM87.0,173.7L85.0,175.1L85.5,175.5L87.4,174.0ZM360.6,320.0L358.8,321.5L358.4,321.3L360.4,319.9Z" fill="#bbcae3" stroke="#bbcae3" stroke-width="0.5"/><path d="M341.1,315.1L348.5,319.2L347.8,319.9L340.3,315.8ZM224.5,255.0L231.3,258.8L230.6,259.6L223.8,255.8ZM197.0,240.9L203.7,244.6L203.0,245.4L196.4,241.7ZM360.8,320.1L359.3,321.7L358.8,321.5L360.6,320.0ZM359.3,321.7L357.7,323.6L357.1,323.3L358.8,321.5Z" fill="#bac9e2" stroke="#bac9e2" stroke-width="0.5"/><path d="M348.5,319.2L356.1,323.4L355.3,324.1L347.8,319.9ZM318.1,303.5L325.5,307.6L324.7,308.3L317.4,304.3ZM288.5,288.2L295.6,292.2L294.9,293.0L287.7,289.0ZM170.2,227.2L176.7,230.8L176.1,231.6L169.6,228.0Z" fill="#b9c9e2" stroke="#b9c9e2" stroke-width="0.5"/><path d="M325.5,307.6L332.9,311.7L332.1,312.4L324.7,308.3ZM295.6,292.2L302.8,296.2L302.1,297.0L294.9,293.0Z" fill="#b9c8e1" stroke="#b9c8e1" stroke-width="0.5"/><path d="M332.9,311.7L340.3,315.8L339.6,316.6L332.1,312.4ZM302.8,296.2L310.1,300.2L309.4,301.0L302.1,297.0Z" fill="#b8c7e0" stroke="#b8c7e0" stroke-width="0.5"/><path d="M340.3,315.8L347.8,319.9L347.0,320.7L339.6,316.6ZM310.1,300.2L317.4,304.3L316.7,305.0L309.4,301.0Z" fill="#b6c6df" stroke="#b6c6df" stroke-width="0.5"/><path d="M347.8,319.9L355.3,324.1L354.6,324.9L347.0,320.7ZM317.4,304.3L324.7,308.3L324.0,309.1L316.7,305.0ZM287.7,289.0L294.9,293.0L294.2,293.8L287.0,289.8ZM258.8,274.1L265.8,278.0L265.1,278.8L258.1,274.9ZM169.6,228.0L176.1,231.6L175.4,232.4L169.0,228.8Z" fill="#b5c4de" stroke="#b5c4de" stroke-width="0.5"/><path d="M324.7,308.3L332.1,312.4L331.4,313.2L324.0,309.1ZM203.0,245.4L209.7,249.1L209.0,249.9L202.3,246.2Z" fill="#b4c3dd" stroke="#b4c3dd" stroke-width="0.5"/><path d="M332.1,312.4L339.6,316.6L338.8,317.3L331.4,313.2ZM302.1,297.0L309.4,301.0L308.7,301.8L301.4,297.8Z" fill="#b2c1db" stroke="#b2c1db" stroke-width="0.5"/><path d="M339.6,316.6L347.0,320.7L346.3,321.5L338.8,317.3ZM189.1,238.9L195.7,242.5L195.1,243.4L188.5,239.7Z" fill="#b0c0da" stroke="#b0c0da" stroke-width="0.5"/><path d="M347.0,320.7L354.6,324.9L353.8,325.7L346.3,321.5ZM316.7,305.0L324.0,309.1L323.3,309.9L315.9,305.8ZM169.0,228.8L175.4,232.4L174.8,233.3L168.4,229.7ZM276.6,290.1L283.7,294.1L283.1,295.0L276.0,291.0Z" fill="#aebed8" stroke="#aebed8" stroke-width="0.5"/><path d="M259.5,273.3L266.5,277.2L265.8,278.0L258.8,274.1ZM231.3,258.8L238.1,262.6L237.4,263.4L230.6,259.6ZM203.7,244.6L210.3,248.3L209.7,249.1L203.0,245.4ZM144.1,213.7L150.4,217.3L149.8,218.1L143.5,214.6ZM118.5,200.7L124.7,204.1L124.1,204.9L117.9,201.5ZM91.2,171.3L88.8,172.1L89.0,172.3L91.3,171.4ZM88.7,171.8L86.3,172.7L86.5,173.1L88.8,172.1Z" fill="#b9c8e2" stroke="#b9c8e2" stroke-width="0.5"/><path d="M266.5,277.2L273.6,281.1L272.8,281.9L265.8,278.0ZM150.4,217.3L156.8,220.8L156.1,221.7L149.8,218.1ZM361.0,320.2L359.7,321.9L359.3,321.7L360.8,320.1ZM359.7,321.9L358.5,323.8L357.7,323.6L359.3,321.7Z" fill="#b8c8e1" stroke="#b8c8e1" stroke-width="0.5"/><path d="M273.6,281.1L280.6,285.0L279.9,285.8L272.8,281.9ZM357.1,323.3L355.4,325.3L354.6,324.9L356.4,323.0Z" fill="#b7c7e0" stroke="#b7c7e0" stroke-width="0.5"/><path d="M280.6,285.0L287.7,289.0L287.0,289.8L279.9,285.8ZM251.9,270.2L258.8,274.1L258.1,274.9L251.2,271.0ZM223.8,255.8L230.6,259.6L229.9,260.4L223.1,256.6ZM137.2,211.1L143.5,214.6L142.9,215.4L136.6,211.9ZM358.5,323.8L357.2,326.0L356.3,325.7L357.7,323.6Z" fill="#b6c5df" stroke="#b6c5df" stroke-width="0.5"/><path d="M294.9,293.0L302.1,297.0L301.4,297.8L294.2,293.8ZM176.1,231.6L182.6,235.2L182.0,236.1L175.4,232.4ZM149.8,218.1L156.1,221.7L155.5,222.5L149.2,219.0ZM268.9,287.1L276.0,291.0L275.4,292.0L268.3,288.0ZM240.5,272.4L247.4,276.3L246.8,277.3L239.9,273.4ZM364.2,331.8L364.4,334.5L362.6,334.5L362.6,331.8ZM353.5,330.3L352.2,332.7L350.8,332.1L352.2,329.7Z" fill="#b3c3dd" stroke="#b3c3dd" stroke-width="0.5"/><path d="M309.4,301.0L316.7,305.0L315.9,305.8L308.7,301.8ZM279.9,285.8L287.0,289.8L286.3,290.6L279.2,286.6ZM162.5,225.2L169.0,228.8L168.4,229.7L161.9,226.1ZM283.7,294.1L290.9,298.1L290.2,299.0L283.1,295.0ZM254.9,279.3L261.9,283.2L261.3,284.1L254.3,280.2Z" fill="#b0bfda" stroke="#b0bfda" stroke-width="0.5"/><path d="M324.0,309.1L331.4,313.2L330.7,314.0L323.3,309.9ZM202.3,246.2L209.0,249.9L208.4,250.8L201.7,247.1ZM175.4,232.4L182.0,236.1L181.3,236.9L174.8,233.3ZM269.5,286.2L276.6,290.1L276.0,291.0L268.9,287.1ZM241.1,271.5L248.0,275.4L247.4,276.3L240.5,272.4ZM213.3,257.2L220.0,261.0L219.5,261.9L212.7,258.2ZM78.1,187.4L84.0,190.7L83.6,191.7L77.7,188.3Z" fill="#acbcd7" stroke="#acbcd7" stroke-width="0.5"/><path d="M331.4,313.2L338.8,317.3L338.1,318.2L330.7,314.0ZM301.4,297.8L308.7,301.8L307.9,302.6L300.7,298.6ZM182.0,236.1L188.5,239.7L187.9,240.6L181.3,236.9ZM291.5,297.2L298.7,301.2L298.1,302.1L290.9,298.1ZM155.5,222.5L161.9,226.1L161.3,227.0L155.0,223.4ZM262.5,282.2L269.5,286.2L268.9,287.1L261.9,283.2ZM234.2,267.7L241.1,271.5L240.5,272.4L233.6,268.6ZM96.5,196.6L102.6,200.0L102.1,200.9L96.1,197.5Z" fill="#aabad5" stroke="#aabad5" stroke-width="0.5"/><path d="M338.8,317.3L346.3,321.5L345.6,322.3L338.1,318.2ZM308.7,301.8L315.9,305.8L315.2,306.7L307.9,302.6ZM313.9,308.4L321.2,312.5L320.6,313.4L313.2,309.3ZM284.3,293.2L291.5,297.2L290.9,298.1L283.7,294.1ZM161.9,226.1L168.4,229.7L167.8,230.6L161.3,227.0ZM136.0,212.8L142.3,216.3L141.7,217.2L135.4,213.7ZM115.3,205.9L121.4,209.4L121.0,210.3L114.8,206.9ZM355.4,325.3L353.8,327.4L352.7,326.9L354.6,324.9Z" fill="#a8b8d3" stroke="#a8b8d3" stroke-width="0.5"/><path d="M346.3,321.5L353.8,325.7L353.1,326.5L345.6,322.3Z" fill="#a7b6d2" stroke="#a7b6d2" stroke-width="0.5"/><path d="M178.1,229.2L184.6,232.8L183.9,233.6L177.4,230.0ZM139.1,208.7L145.4,212.2L144.7,212.9L138.4,209.4ZM83.4,178.8L89.4,182.1L88.7,182.9L82.7,179.6ZM89.4,182.1L95.4,185.5L94.7,186.2L88.7,182.9ZM95.4,185.5L101.4,188.8L100.8,189.6L94.7,186.2ZM101.4,188.8L107.5,192.2L106.9,193.0L100.8,189.6Z" fill="#bccce5" stroke="#bccce5" stroke-width="0.5"/><path d="M245.0,266.4L251.9,270.2L251.2,271.0L244.3,267.2ZM217.0,252.0L223.8,255.8L223.1,256.6L216.4,252.8ZM130.9,207.6L137.2,211.1L136.6,211.9L130.3,208.4ZM319.9,314.3L327.3,318.4L326.7,319.4L319.3,315.3ZM366.2,334.3L366.6,337.1L364.6,337.3L364.4,334.5Z" fill="#b7c6e0" stroke="#b7c6e0" stroke-width="0.5"/><path d="M265.8,278.0L272.8,281.9L272.1,282.7L265.1,278.8ZM327.9,317.5L335.4,321.7L334.7,322.6L327.3,318.4ZM124.1,204.9L130.3,208.4L129.7,209.3L123.5,205.8ZM298.1,302.1L305.3,306.2L304.7,307.1L297.4,303.0ZM359.4,331.6L359.0,334.3L357.2,334.1L357.8,331.4Z" fill="#b3c2dd" stroke="#b3c2dd" stroke-width="0.5"/><path d="M272.8,281.9L279.9,285.8L279.2,286.6L272.1,282.7ZM320.6,313.4L327.9,317.5L327.3,318.4L319.9,314.3ZM130.3,208.4L136.6,211.9L136.0,212.8L129.7,209.3Z" fill="#b1c1db" stroke="#b1c1db" stroke-width="0.5"/><path d="M287.0,289.8L294.2,293.8L293.5,294.6L286.3,290.6ZM305.9,305.2L313.2,309.3L312.6,310.2L305.3,306.2Z" fill="#aebdd8" stroke="#aebdd8" stroke-width="0.5"/><path d="M294.2,293.8L301.4,297.8L300.7,298.6L293.5,294.6ZM328.6,316.6L336.0,320.8L335.4,321.7L327.9,317.5Z" fill="#acbbd6" stroke="#acbbd6" stroke-width="0.5"/><path d="M315.9,305.8L323.3,309.9L322.6,310.8L315.2,306.7ZM306.6,304.3L313.9,308.4L313.2,309.3L305.9,305.2ZM277.2,289.2L284.3,293.2L283.7,294.1L276.6,290.1ZM168.4,229.7L174.8,233.3L174.2,234.2L167.8,230.6ZM142.3,216.3L148.6,219.8L148.0,220.7L141.7,217.2ZM134.4,215.5L140.7,219.0L140.2,219.9L133.9,216.4ZM109.1,202.5L115.3,205.9L114.8,206.9L108.7,203.4ZM84.5,189.8L90.5,193.2L90.0,194.1L84.0,190.7ZM78.8,183.1L77.5,185.3L78.7,186.0L79.9,183.8ZM356.0,328.3L354.9,330.7L353.5,330.3L354.9,327.9Z" fill="#a6b6d2" stroke="#a6b6d2" stroke-width="0.5"/><path d="M323.3,309.9L330.7,314.0L330.0,314.9L322.6,310.8ZM299.3,300.3L306.6,304.3L305.9,305.2L298.7,301.2ZM270.1,285.3L277.2,289.2L276.6,290.1L269.5,286.2ZM174.8,233.3L181.3,236.9L180.8,237.8L174.2,234.2ZM103.0,199.1L109.1,202.5L108.7,203.4L102.6,200.0Z" fill="#a5b5d0" stroke="#a5b5d0" stroke-width="0.5"/><path d="M330.7,314.0L338.1,318.2L337.4,319.0L330.0,314.9ZM300.7,298.6L307.9,302.6L307.3,303.5L300.0,299.4ZM271.5,283.5L278.5,287.5L277.9,288.3L270.8,284.4ZM321.9,311.6L329.3,315.7L328.6,316.6L321.2,312.5ZM242.9,268.9L249.8,272.7L249.2,273.6L242.3,269.7ZM292.1,296.3L299.3,300.3L298.7,301.2L291.5,297.2ZM181.3,236.9L187.9,240.6L187.3,241.5L180.8,237.8ZM155.0,223.4L161.3,227.0L160.8,227.8L154.4,224.3ZM200.5,248.8L207.2,252.6L206.6,253.5L199.9,249.8ZM129.2,210.2L135.4,213.7L134.9,214.6L128.6,211.1ZM173.7,235.1L180.2,238.7L179.6,239.6L173.1,236.0ZM104.0,197.3L110.1,200.7L109.6,201.6L103.5,198.2ZM147.5,221.6L153.9,225.2L153.3,226.1L147.0,222.5ZM79.4,184.6L85.4,188.0L84.9,188.9L78.9,185.5ZM121.9,208.5L128.1,212.0L127.7,212.9L121.4,209.4ZM97.0,195.7L103.0,199.1L102.6,200.0L96.5,196.6Z" fill="#a3b3cf" stroke="#a3b3cf" stroke-width="0.5"/><path d="M338.1,318.2L345.6,322.3L344.9,323.2L337.4,319.0ZM307.9,302.6L315.2,306.7L314.6,307.5L307.3,303.5ZM344.9,323.2L352.4,327.3L351.7,328.2L344.2,324.0ZM278.5,287.5L285.7,291.4L285.0,292.3L277.9,288.3ZM314.6,307.5L321.9,311.6L321.2,312.5L313.9,308.4ZM249.8,272.7L256.8,276.6L256.1,277.5L249.2,273.6ZM285.0,292.3L292.1,296.3L291.5,297.2L284.3,293.2ZM221.8,258.3L228.6,262.1L228.0,263.0L221.2,259.2ZM249.2,273.6L256.1,277.5L255.5,278.3L248.6,274.5ZM256.1,277.5L263.1,281.4L262.5,282.2L255.5,278.3ZM187.9,240.6L194.5,244.3L193.9,245.1L187.3,241.5ZM194.5,244.3L201.1,248.0L200.5,248.8L193.9,245.1ZM221.2,259.2L228.0,263.0L227.4,263.9L220.6,260.1ZM161.3,227.0L167.8,230.6L167.2,231.4L160.8,227.8ZM193.9,245.1L200.5,248.8L199.9,249.8L193.3,246.1ZM135.4,213.7L141.7,217.2L141.2,218.1L134.9,214.6ZM167.2,231.4L173.7,235.1L173.1,236.0L166.7,232.4ZM110.1,200.7L116.3,204.1L115.8,205.0L109.6,201.6ZM141.2,218.1L147.5,221.6L147.0,222.5L140.7,219.0ZM85.4,188.0L91.4,191.4L90.9,192.3L84.9,188.9ZM115.8,205.0L121.9,208.5L121.4,209.4L115.3,205.9ZM84.9,188.9L90.9,192.3L90.5,193.2L84.5,189.8ZM90.9,192.3L97.0,195.7L96.5,196.6L90.5,193.2Z" fill="#a2b2ce" stroke="#a2b2ce" stroke-width="0.5"/><path d="M345.6,322.3L353.1,326.5L352.4,327.3L344.9,323.2ZM277.9,288.3L285.0,292.3L284.3,293.2L277.2,289.2ZM167.8,230.6L174.2,234.2L173.7,235.1L167.2,231.4Z" fill="#a2b2cd" stroke="#a2b2cd" stroke-width="0.5"/><path d="M230.6,259.6L237.4,263.4L236.7,264.2L229.9,260.4ZM143.5,214.6L149.8,218.1L149.2,219.0L142.9,215.4ZM335.4,321.7L342.8,325.8L342.2,326.8L334.7,322.6ZM117.9,201.5L124.1,204.9L123.5,205.8L117.3,202.4ZM305.3,306.2L312.6,310.2L312.0,311.2L304.7,307.1ZM276.0,291.0L283.1,295.0L282.5,296.0L275.4,292.0ZM362.3,318.6L361.3,320.2L361.0,320.2L362.3,318.6ZM352.2,329.7L350.8,332.1L349.4,331.4L351.0,329.1Z" fill="#b4c4de" stroke="#b4c4de" stroke-width="0.5"/><path d="M237.4,263.4L244.3,267.2L243.6,268.0L236.7,264.2Z" fill="#b3c2dc" stroke="#b3c2dc" stroke-width="0.5"/><path d="M244.3,267.2L251.2,271.0L250.5,271.9L243.6,268.0ZM216.4,252.8L223.1,256.6L222.5,257.4L215.7,253.7ZM105.1,195.5L111.2,198.9L110.6,199.8L104.5,196.4Z" fill="#b1c0db" stroke="#b1c0db" stroke-width="0.5"/><path d="M251.2,271.0L258.1,274.9L257.4,275.7L250.5,271.9Z" fill="#afbfd9" stroke="#afbfd9" stroke-width="0.5"/><path d="M258.1,274.9L265.1,278.8L264.4,279.6L257.4,275.7ZM336.0,320.8L343.5,324.9L342.8,325.8L335.4,321.7ZM142.9,215.4L149.2,219.0L148.6,219.8L142.3,216.3ZM117.3,202.4L123.5,205.8L123.0,206.7L116.8,203.2ZM159.7,229.7L166.2,233.3L165.7,234.2L159.2,230.6ZM133.9,216.4L140.2,219.9L139.7,220.9L133.4,217.3ZM108.7,203.4L114.8,206.9L114.4,207.8L108.2,204.4ZM361.2,329.2L361.0,331.8L359.4,331.6L359.8,329.0Z" fill="#adbdd8" stroke="#adbdd8" stroke-width="0.5"/><path d="M265.1,278.8L272.1,282.7L271.5,283.5L264.4,279.6ZM236.7,264.2L243.6,268.0L242.9,268.9L236.1,265.0ZM123.5,205.8L129.7,209.3L129.2,210.2L123.0,206.7ZM98.5,193.0L104.5,196.4L104.0,197.3L97.9,193.9ZM179.6,239.6L186.2,243.3L185.7,244.2L179.1,240.6ZM153.3,226.1L159.7,229.7L159.2,230.6L152.8,227.0Z" fill="#abbbd6" stroke="#abbbd6" stroke-width="0.5"/><path d="M272.1,282.7L279.2,286.6L278.5,287.5L271.5,283.5Z" fill="#aab9d4" stroke="#aab9d4" stroke-width="0.5"/><path d="M279.2,286.6L286.3,290.6L285.7,291.4L278.5,287.5ZM344.2,324.0L351.7,328.2L351.0,329.1L343.5,324.9ZM140.7,219.0L147.0,222.5L146.5,223.5L140.2,219.9Z" fill="#a8b7d3" stroke="#a8b7d3" stroke-width="0.5"/><path d="M286.3,290.6L293.5,294.6L292.8,295.4L285.7,291.4ZM257.4,275.7L264.4,279.6L263.8,280.5L256.8,276.6ZM336.7,319.9L344.2,324.0L343.5,324.9L336.0,320.8ZM116.8,203.2L123.0,206.7L122.4,207.6L116.3,204.1ZM160.2,228.8L166.7,232.4L166.2,233.3L159.7,229.7Z" fill="#a6b6d1" stroke="#a6b6d1" stroke-width="0.5"/><path d="M293.5,294.6L300.7,298.6L300.0,299.4L292.8,295.4ZM264.4,279.6L271.5,283.5L270.8,284.4L263.8,280.5ZM329.3,315.7L336.7,319.9L336.0,320.8L328.6,316.6ZM236.1,265.0L242.9,268.9L242.3,269.7L235.4,265.9ZM207.2,252.6L213.9,256.3L213.3,257.2L206.6,253.5ZM123.0,206.7L129.2,210.2L128.6,211.1L122.4,207.6ZM180.2,238.7L186.7,242.4L186.2,243.3L179.6,239.6ZM97.9,193.9L104.0,197.3L103.5,198.2L97.4,194.7ZM153.9,225.2L160.2,228.8L159.7,229.7L153.3,226.1ZM128.1,212.0L134.4,215.5L133.9,216.4L127.7,212.9ZM353.8,327.4L352.2,329.7L351.0,329.1L352.7,326.9Z" fill="#a4b4d0" stroke="#a4b4d0" stroke-width="0.5"/><path d="M315.2,306.7L322.6,310.8L321.9,311.6L314.6,307.5ZM322.6,310.8L330.0,314.9L329.3,315.7L321.9,311.6ZM330.0,314.9L337.4,319.0L336.7,319.9L329.3,315.7ZM337.4,319.0L344.9,323.2L344.2,324.0L336.7,319.9ZM285.7,291.4L292.8,295.4L292.1,296.3L285.0,292.3ZM292.8,295.4L300.0,299.4L299.3,300.3L292.1,296.3ZM300.0,299.4L307.3,303.5L306.6,304.3L299.3,300.3ZM307.3,303.5L314.6,307.5L313.9,308.4L306.6,304.3ZM256.8,276.6L263.8,280.5L263.1,281.4L256.1,277.5ZM263.8,280.5L270.8,284.4L270.1,285.3L263.1,281.4ZM270.8,284.4L277.9,288.3L277.2,289.2L270.1,285.3ZM228.6,262.1L235.4,265.9L234.8,266.8L228.0,263.0ZM235.4,265.9L242.3,269.7L241.7,270.6L234.8,266.8ZM242.3,269.7L249.2,273.6L248.6,274.5L241.7,270.6ZM201.1,248.0L207.8,251.7L207.2,252.6L200.5,248.8ZM207.8,251.7L214.5,255.4L213.9,256.3L207.2,252.6ZM214.5,255.4L221.2,259.2L220.6,260.1L213.9,256.3ZM174.2,234.2L180.8,237.8L180.2,238.7L173.7,235.1ZM180.8,237.8L187.3,241.5L186.7,242.4L180.2,238.7ZM187.3,241.5L193.9,245.1L193.3,246.1L186.7,242.4ZM141.7,217.2L148.0,220.7L147.5,221.6L141.2,218.1ZM148.0,220.7L154.4,224.3L153.9,225.2L147.5,221.6ZM154.4,224.3L160.8,227.8L160.2,228.8L153.9,225.2ZM160.8,227.8L167.2,231.4L166.7,232.4L160.2,228.8ZM116.3,204.1L122.4,207.6L121.9,208.5L115.8,205.0ZM122.4,207.6L128.6,211.1L128.1,212.0L121.9,208.5ZM128.6,211.1L134.9,214.6L134.4,215.5L128.1,212.0ZM134.9,214.6L141.2,218.1L140.7,219.0L134.4,215.5ZM91.4,191.4L97.4,194.7L97.0,195.7L90.9,192.3ZM97.4,194.7L103.5,198.2L103.0,199.1L97.0,195.7ZM103.5,198.2L109.6,201.6L109.1,202.5L103.0,199.1ZM78.9,185.5L84.9,188.9L84.5,189.8L78.5,186.5Z" fill="#a1b1cd" stroke="#a1b1cd" stroke-width="0.5"/><path d="M176.7,230.8L183.2,234.4L182.6,235.2L176.1,231.6ZM93.5,187.9L99.6,191.3L99.0,192.1L93.0,188.7ZM334.7,322.6L342.2,326.8L341.6,327.7L334.1,323.5ZM304.7,307.1L312.0,311.2L311.4,312.1L304.1,308.0ZM275.4,292.0L282.5,296.0L281.9,296.9L274.8,292.9ZM246.8,277.3L253.8,281.1L253.2,282.1L246.3,278.2ZM218.9,262.9L225.7,266.7L225.2,267.6L218.4,263.8ZM91.1,171.0L88.6,171.6L88.7,171.8L91.1,171.1ZM91.1,171.1L88.7,171.8L88.8,172.1L91.2,171.3ZM88.6,171.4L86.1,172.0L86.2,172.4L88.6,171.6ZM88.6,171.6L86.2,172.4L86.3,172.7L88.7,171.8ZM86.5,170.9L84.2,171.4L84.0,171.9L86.3,171.3ZM86.3,171.3L84.0,171.9L83.9,172.4L86.2,171.6ZM86.2,171.6L83.9,172.4L83.8,172.9L86.1,172.0ZM355.5,333.7L354.7,336.4L352.8,335.9L353.8,333.3ZM352.2,332.7L351.1,335.3L349.4,334.6L350.8,332.1Z" fill="#b8c8e2" stroke="#b8c8e2" stroke-width="0.5"/><path d="M189.8,238.0L196.4,241.7L195.7,242.5L189.1,238.9ZM105.7,194.6L111.8,198.1L111.2,198.9L105.1,195.5ZM81.0,182.0L87.0,185.4L86.4,186.2L80.4,182.9ZM93.6,170.7L91.3,171.4L91.4,171.5L93.6,170.7ZM93.6,170.7L91.4,171.5L91.5,171.6L93.6,170.7ZM361.6,320.3L360.8,322.1L360.2,322.0L361.3,320.2ZM360.8,322.1L360.0,324.2L359.2,324.0L360.2,322.0ZM357.7,323.6L356.3,325.7L355.4,325.3L357.1,323.3Z" fill="#b6c6e0" stroke="#b6c6e0" stroke-width="0.5"/><path d="M196.4,241.7L203.0,245.4L202.3,246.2L195.7,242.5ZM342.8,325.8L350.4,330.0L349.7,331.0L342.2,326.8ZM111.8,198.1L117.9,201.5L117.3,202.4L111.2,198.9ZM312.6,310.2L319.9,314.3L319.3,315.3L312.0,311.2ZM87.0,185.4L93.0,188.7L92.4,189.6L86.4,186.2ZM80.3,181.0L78.8,183.1L79.9,183.8L81.3,181.6ZM361.8,320.3L361.3,322.2L360.8,322.1L361.6,320.3ZM361.3,322.2L360.8,324.3L360.0,324.2L360.8,322.1ZM360.0,324.2L359.3,326.4L358.2,326.2L359.2,324.0ZM359.2,324.0L358.2,326.2L357.2,326.0L358.5,323.8Z" fill="#b5c5df" stroke="#b5c5df" stroke-width="0.5"/><path d="M209.7,249.1L216.4,252.8L215.7,253.7L209.0,249.9Z" fill="#b2c2dc" stroke="#b2c2dc" stroke-width="0.5"/><path d="M223.1,256.6L229.9,260.4L229.2,261.2L222.5,257.4Z" fill="#afbed9" stroke="#afbed9" stroke-width="0.5"/><path d="M229.9,260.4L236.7,264.2L236.1,265.0L229.2,261.2Z" fill="#adbdd7" stroke="#adbdd7" stroke-width="0.5"/><path d="M243.6,268.0L250.5,271.9L249.8,272.7L242.9,268.9ZM215.7,253.7L222.5,257.4L221.8,258.3L215.1,254.5ZM104.5,196.4L110.6,199.8L110.1,200.7L104.0,197.3ZM199.9,249.8L206.6,253.5L206.0,254.4L199.4,250.7ZM79.9,183.8L85.9,187.1L85.4,188.0L79.4,184.6ZM173.1,236.0L179.6,239.6L179.1,240.6L172.6,236.9ZM356.3,325.7L354.9,327.9L353.8,327.4L355.4,325.3Z" fill="#a9b9d4" stroke="#a9b9d4" stroke-width="0.5"/><path d="M250.5,271.9L257.4,275.7L256.8,276.6L249.8,272.7ZM110.6,199.8L116.8,203.2L116.3,204.1L110.1,200.7ZM193.3,246.1L199.9,249.8L199.4,250.7L192.8,247.0ZM85.9,187.1L91.9,190.5L91.4,191.4L85.4,188.0ZM166.7,232.4L173.1,236.0L172.6,236.9L166.2,233.3ZM77.5,185.3L76.4,187.5L77.7,188.3L78.7,186.0Z" fill="#a7b7d3" stroke="#a7b7d3" stroke-width="0.5"/><path d="M131.5,206.8L137.8,210.2L137.2,211.1L130.9,207.6ZM91.4,171.5L89.2,172.5L89.4,172.7L91.5,171.6ZM89.2,172.5L87.0,173.7L87.4,174.0L89.4,172.7Z" fill="#bacae3" stroke="#bacae3" stroke-width="0.5"/><path d="M156.8,220.8L163.2,224.4L162.5,225.2L156.1,221.7ZM99.6,191.3L105.7,194.6L105.1,195.5L99.0,192.1ZM91.1,170.9L88.6,171.4L88.6,171.6L91.1,171.0ZM78.2,178.9L76.5,180.8L77.1,181.6L78.8,179.7ZM361.3,320.2L360.2,322.0L359.7,321.9L361.0,320.2ZM360.2,322.0L359.2,324.0L358.5,323.8L359.7,321.9Z" fill="#b7c7e1" stroke="#b7c7e1" stroke-width="0.5"/><path d="M163.2,224.4L169.6,228.0L169.0,228.8L162.5,225.2ZM254.3,280.2L261.3,284.1L260.7,285.0L253.8,281.1ZM226.2,265.7L233.1,269.5L232.5,270.5L225.7,266.7ZM198.9,251.6L205.5,255.3L205.0,256.3L198.4,252.6ZM367.3,342.8L367.6,345.6L365.1,345.8L365.0,343.0Z" fill="#b6c5e0" stroke="#b6c5e0" stroke-width="0.5"/><path d="M182.6,235.2L189.1,238.9L188.5,239.7L182.0,236.1ZM206.0,254.4L212.7,258.2L212.2,259.1L205.5,255.3ZM367.9,334.1L368.6,336.8L366.6,337.1L366.2,334.3ZM368.6,336.8L369.1,339.6L367.0,339.9L366.6,337.1Z" fill="#b2c1dc" stroke="#b2c1dc" stroke-width="0.5"/><path d="M195.7,242.5L202.3,246.2L201.7,247.1L195.1,243.4ZM248.0,275.4L254.9,279.3L254.3,280.2L247.4,276.3ZM86.4,186.2L92.4,189.6L91.9,190.5L85.9,187.1ZM220.0,261.0L226.8,264.8L226.2,265.7L219.5,261.9ZM192.8,247.0L199.4,250.7L198.9,251.6L192.2,247.9ZM359.3,326.4L358.5,328.9L357.2,328.6L358.2,326.2Z" fill="#aebed9" stroke="#aebed9" stroke-width="0.5"/><path d="M209.0,249.9L215.7,253.7L215.1,254.5L208.4,250.8Z" fill="#abbad5" stroke="#abbad5" stroke-width="0.5"/><path d="M222.5,257.4L229.2,261.2L228.6,262.1L221.8,258.3ZM195.1,243.4L201.7,247.1L201.1,248.0L194.5,244.3ZM248.6,274.5L255.5,278.3L254.9,279.3L248.0,275.4ZM220.6,260.1L227.4,263.9L226.8,264.8L220.0,261.0Z" fill="#a7b7d2" stroke="#a7b7d2" stroke-width="0.5"/><path d="M229.2,261.2L236.1,265.0L235.4,265.9L228.6,262.1ZM201.7,247.1L208.4,250.8L207.8,251.7L201.1,248.0ZM241.7,270.6L248.6,274.5L248.0,275.4L241.1,271.5ZM213.9,256.3L220.6,260.1L220.0,261.0L213.3,257.2ZM186.7,242.4L193.3,246.1L192.8,247.0L186.2,243.3ZM91.9,190.5L97.9,193.9L97.4,194.7L91.4,191.4ZM78.5,186.5L84.5,189.8L84.0,190.7L78.1,187.4ZM354.9,327.9L353.5,330.3L352.2,329.7L353.8,327.4Z" fill="#a5b5d1" stroke="#a5b5d1" stroke-width="0.5"/><path d="M321.2,312.5L328.6,316.6L327.9,317.5L320.6,313.4Z" fill="#aab9d5" stroke="#aab9d5" stroke-width="0.5"/><path d="M343.5,324.9L351.0,329.1L350.4,330.0L342.8,325.8ZM313.2,309.3L320.6,313.4L319.9,314.3L312.6,310.2ZM136.6,211.9L142.9,215.4L142.3,216.3L136.0,212.8ZM111.2,198.9L117.3,202.4L116.8,203.2L110.6,199.8ZM140.2,219.9L146.5,223.5L146.0,224.4L139.7,220.9ZM114.8,206.9L121.0,210.3L120.6,211.3L114.4,207.8ZM90.0,194.1L96.1,197.5L95.7,198.4L89.6,195.1Z" fill="#afbfda" stroke="#afbfda" stroke-width="0.5"/><path d="M100.2,190.4L106.2,193.8L105.7,194.6L99.6,191.3ZM326.7,319.4L334.1,323.5L333.5,324.5L326.1,320.4ZM334.1,323.5L341.6,327.7L341.0,328.7L333.5,324.5ZM304.1,308.0L311.4,312.1L310.8,313.1L303.5,309.0ZM311.4,312.1L318.7,316.2L318.1,317.2L310.8,313.1ZM274.8,292.9L281.9,296.9L281.4,297.9L274.3,293.9ZM281.9,296.9L289.1,300.9L288.5,301.9L281.4,297.9ZM289.1,300.9L296.3,305.0L295.7,305.9L288.5,301.9ZM246.3,278.2L253.2,282.1L252.7,283.1L245.8,279.2ZM253.2,282.1L260.2,286.0L259.7,287.0L252.7,283.1ZM225.2,267.6L232.0,271.5L231.5,272.4L224.7,268.6ZM197.9,253.5L204.5,257.3L204.1,258.2L197.4,254.5ZM83.0,176.7L81.2,178.5L81.9,179.0L83.6,177.2Z" fill="#bacae4" stroke="#bacae4" stroke-width="0.5"/><path d="M112.4,197.2L118.5,200.7L117.9,201.5L111.8,198.1ZM342.2,326.8L349.7,331.0L349.1,331.9L341.6,327.7ZM312.0,311.2L319.3,315.3L318.7,316.2L311.4,312.1ZM282.5,296.0L289.7,300.0L289.1,300.9L281.9,296.9ZM289.7,300.0L296.9,304.0L296.3,305.0L289.1,300.9ZM260.7,285.0L267.8,289.0L267.2,289.9L260.2,286.0ZM232.5,270.5L239.4,274.3L238.9,275.3L232.0,271.5ZM88.8,172.1L86.5,173.1L86.7,173.4L89.0,172.3ZM86.5,173.1L84.2,174.3L84.6,174.7L86.7,173.4ZM84.0,173.8L81.8,175.1L82.1,175.7L84.2,174.3ZM84.2,174.3L82.1,175.7L82.5,176.2L84.6,174.7ZM81.6,173.3L79.6,174.5L79.5,175.2L81.6,173.9ZM81.6,173.9L79.5,175.2L79.5,175.9L81.6,174.5ZM81.6,174.5L79.5,175.9L79.7,176.6L81.8,175.1ZM81.8,175.1L79.7,176.6L80.1,177.2L82.1,175.7ZM82.1,175.7L80.1,177.2L80.6,177.9L82.5,176.2ZM79.5,175.9L77.6,177.4L77.8,178.2L79.7,176.6ZM79.7,176.6L77.8,178.2L78.2,178.9L80.1,177.2ZM80.6,177.9L78.8,179.7L79.5,180.3L81.2,178.5ZM354.7,336.4L353.9,339.2L351.9,338.6L352.8,335.9Z" fill="#b9c9e3" stroke="#b9c9e3" stroke-width="0.5"/><path d="M156.1,221.7L162.5,225.2L161.9,226.1L155.5,222.5ZM290.9,298.1L298.1,302.1L297.4,303.0L290.2,299.0ZM261.9,283.2L268.9,287.1L268.3,288.0L261.3,284.1ZM233.6,268.6L240.5,272.4L239.9,273.4L233.1,269.5ZM362.3,318.6L362.4,320.3L362.1,320.3L362.3,318.6ZM362.9,320.3L363.5,322.2L363.0,322.3L362.7,320.3ZM364.1,324.3L364.7,326.6L363.6,326.7L363.3,324.4ZM364.7,326.6L365.2,329.0L363.9,329.2L363.6,326.7ZM365.2,329.0L365.7,331.6L364.2,331.8L363.9,329.2ZM363.9,329.2L364.2,331.8L362.6,331.8L362.5,329.2ZM367.3,331.4L367.9,334.1L366.2,334.3L365.7,331.6ZM357.8,331.4L357.2,334.1L355.5,333.7L356.3,331.1ZM356.3,331.1L355.5,333.7L353.8,333.3L354.9,330.7Z" fill="#b1c1dc" stroke="#b1c1dc" stroke-width="0.5"/><path d="M188.5,239.7L195.1,243.4L194.5,244.3L187.9,240.6ZM255.5,278.3L262.5,282.2L261.9,283.2L254.9,279.3ZM90.5,193.2L96.5,196.6L96.1,197.5L90.0,194.1ZM77.9,182.4L76.5,184.5L77.5,185.3L78.8,183.1ZM76.5,184.5L75.3,186.7L76.4,187.5L77.5,185.3ZM358.5,328.9L357.8,331.4L356.3,331.1L357.2,328.6Z" fill="#a8b8d4" stroke="#a8b8d4" stroke-width="0.5"/><path d="M208.4,250.8L215.1,254.5L214.5,255.4L207.8,251.7ZM234.8,266.8L241.7,270.6L241.1,271.5L234.2,267.7Z" fill="#a4b4cf" stroke="#a4b4cf" stroke-width="0.5"/><path d="M215.1,254.5L221.8,258.3L221.2,259.2L214.5,255.4ZM228.0,263.0L234.8,266.8L234.2,267.7L227.4,263.9Z" fill="#a3b3ce" stroke="#a3b3ce" stroke-width="0.5"/><path d="M263.1,281.4L270.1,285.3L269.5,286.2L262.5,282.2Z" fill="#a4b3cf" stroke="#a4b3cf" stroke-width="0.5"/><path d="M298.7,301.2L305.9,305.2L305.3,306.2L298.1,302.1ZM149.2,219.0L155.5,222.5L155.0,223.4L148.6,219.8Z" fill="#acbbd7" stroke="#acbbd7" stroke-width="0.5"/><path d="M87.5,184.5L93.5,187.9L93.0,188.7L87.0,185.4ZM253.8,281.1L260.7,285.0L260.2,286.0L253.2,282.1ZM225.7,266.7L232.5,270.5L232.0,271.5L225.2,267.6ZM198.4,252.6L205.0,256.3L204.5,257.3L197.9,253.5ZM86.2,172.4L83.9,173.4L84.0,173.8L86.3,172.7ZM86.3,172.7L84.0,173.8L84.2,174.3L86.5,173.1ZM84.0,171.9L81.8,172.7L81.6,173.3L83.9,172.4ZM83.9,172.4L81.6,173.3L81.6,173.9L83.8,172.9ZM83.8,172.9L81.6,173.9L81.6,174.5L83.9,173.4ZM83.9,173.4L81.6,174.5L81.8,175.1L84.0,173.8ZM80.1,177.2L78.2,178.9L78.8,179.7L80.6,177.9ZM77.6,177.4L75.9,179.0L76.1,179.9L77.8,178.2Z" fill="#b9c8e3" stroke="#b9c8e3" stroke-width="0.5"/><path d="M93.0,188.7L99.0,192.1L98.5,193.0L92.4,189.6ZM362.6,331.8L362.6,334.5L360.8,334.5L361.0,331.8ZM361.0,331.8L360.8,334.5L359.0,334.3L359.4,331.6Z" fill="#b4c3de" stroke="#b4c3de" stroke-width="0.5"/><path d="M99.0,192.1L105.1,195.5L104.5,196.4L98.5,193.0ZM179.1,240.6L185.7,244.2L185.2,245.2L178.6,241.5ZM152.8,227.0L159.2,230.6L158.8,231.6L152.4,228.0ZM127.2,213.8L133.4,217.3L133.0,218.3L126.8,214.8ZM102.1,200.9L108.2,204.4L107.8,205.3L101.7,201.9ZM77.7,188.3L83.6,191.7L83.3,192.6L77.3,189.3ZM362.3,318.6L362.1,320.3L361.8,320.3L362.3,318.6ZM362.3,318.6L361.8,320.3L361.6,320.3L362.3,318.6ZM362.7,320.3L363.0,322.3L362.4,322.3L362.4,320.3ZM363.0,322.3L363.3,324.4L362.5,324.4L362.4,322.3ZM363.3,324.4L363.6,326.7L362.5,326.7L362.5,324.4ZM363.6,326.7L363.9,329.2L362.5,329.2L362.5,326.7ZM362.5,326.7L362.5,329.2L361.2,329.2L361.4,326.7ZM365.7,331.6L366.2,334.3L364.4,334.5L364.2,331.8ZM354.9,330.7L353.8,333.3L352.2,332.7L353.5,330.3ZM369.1,339.6L369.6,342.4L367.3,342.8L367.0,339.9Z" fill="#b2c2dd" stroke="#b2c2dd" stroke-width="0.5"/><path d="M129.7,209.3L136.0,212.8L135.4,213.7L129.2,210.2ZM147.0,222.5L153.3,226.1L152.8,227.0L146.5,223.5ZM121.4,209.4L127.7,212.9L127.2,213.8L121.0,210.3ZM75.7,183.6L74.4,185.8L75.3,186.7L76.5,184.5Z" fill="#a9b9d5" stroke="#a9b9d5" stroke-width="0.5"/><path d="M148.6,219.8L155.0,223.4L154.4,224.3L148.0,220.7Z" fill="#a5b4d0" stroke="#a5b4d0" stroke-width="0.5"/><path d="M227.4,263.9L234.2,267.7L233.6,268.6L226.8,264.8Z" fill="#a9b8d4" stroke="#a9b8d4" stroke-width="0.5"/><path d="M290.2,299.0L297.4,303.0L296.9,304.0L289.7,300.0ZM261.3,284.1L268.3,288.0L267.8,289.0L260.7,285.0ZM233.1,269.5L239.9,273.4L239.4,274.3L232.5,270.5ZM93.6,170.7L91.5,171.6L91.7,171.7L93.6,170.7ZM91.1,170.8L88.6,171.1L88.6,171.4L91.1,170.9ZM362.3,318.6L360.6,320.0L360.4,319.9L362.3,318.6Z" fill="#b7c6e1" stroke="#b7c6e1" stroke-width="0.5"/><path d="M80.4,182.9L86.4,186.2L85.9,187.1L79.9,183.8ZM226.8,264.8L233.6,268.6L233.1,269.5L226.2,265.7ZM199.4,250.7L206.0,254.4L205.5,255.3L198.9,251.6ZM172.6,236.9L179.1,240.6L178.6,241.5L172.1,237.8ZM146.5,223.5L152.8,227.0L152.4,228.0L146.0,224.4ZM363.2,320.3L364.1,322.1L363.5,322.2L362.9,320.3ZM360.3,326.6L359.8,329.0L358.5,328.9L359.3,326.4ZM369.7,333.7L370.5,336.4L368.6,336.8L367.9,334.1Z" fill="#b0c0db" stroke="#b0c0db" stroke-width="0.5"/><path d="M92.4,189.6L98.5,193.0L97.9,193.9L91.9,190.5ZM186.2,243.3L192.8,247.0L192.2,247.9L185.7,244.2Z" fill="#adbcd8" stroke="#adbcd8" stroke-width="0.5"/><path d="M206.6,253.5L213.3,257.2L212.7,258.2L206.0,254.4Z" fill="#abbad6" stroke="#abbad6" stroke-width="0.5"/><path d="M247.4,276.3L254.3,280.2L253.8,281.1L246.8,277.3ZM219.5,261.9L226.2,265.7L225.7,266.7L218.9,262.9ZM192.2,247.9L198.9,251.6L198.4,252.6L191.7,248.9ZM165.7,234.2L172.1,237.8L171.7,238.8L165.2,235.2ZM139.7,220.9L146.0,224.4L145.6,225.4L139.3,221.8ZM89.6,195.1L95.7,198.4L95.3,199.4L89.3,196.0ZM93.6,170.7L91.1,170.8L91.1,170.9L93.6,170.7ZM93.6,170.7L91.1,170.9L91.1,171.0L93.6,170.7ZM93.6,170.7L91.1,171.0L91.1,171.1L93.6,170.7ZM362.1,320.3L361.9,322.3L361.3,322.2L361.8,320.3ZM361.9,322.3L361.6,324.4L360.8,324.3L361.3,322.2ZM361.6,324.4L361.4,326.7L360.3,326.6L360.8,324.3ZM360.8,324.3L360.3,326.6L359.3,326.4L360.0,324.2Z" fill="#b4c4df" stroke="#b4c4df" stroke-width="0.5"/><path d="M268.3,288.0L275.4,292.0L274.8,292.9L267.8,289.0ZM239.9,273.4L246.8,277.3L246.3,278.2L239.4,274.3ZM212.2,259.1L218.9,262.9L218.4,263.8L211.7,260.1ZM185.2,245.2L191.7,248.9L191.3,249.8L184.7,246.1ZM158.8,231.6L165.2,235.2L164.7,236.1L158.3,232.5ZM133.0,218.3L139.3,221.8L138.9,222.8L132.6,219.2ZM114.0,208.7L120.1,212.2L119.8,213.2L113.6,209.7ZM101.4,202.8L107.5,206.2L107.1,207.2L101.0,203.8ZM107.5,206.2L113.6,209.7L113.3,210.7L107.1,207.2ZM113.6,209.7L119.8,213.2L119.4,214.1L113.3,210.7ZM119.4,214.1L125.6,217.6L125.3,218.6L119.1,215.1ZM125.6,217.6L131.9,221.2L131.5,222.1L125.3,218.6ZM131.9,221.2L138.1,224.7L137.8,225.7L131.5,222.1ZM138.1,224.7L144.4,228.2L144.1,229.2L137.8,225.7ZM144.4,228.2L150.8,231.8L150.5,232.8L144.1,229.2ZM150.8,231.8L157.2,235.4L156.8,236.4L150.5,232.8ZM157.2,235.4L163.6,239.0L163.2,240.0L156.8,236.4ZM163.6,239.0L170.0,242.7L169.7,243.7L163.2,240.0ZM170.0,242.7L176.5,246.3L176.2,247.3L169.7,243.7ZM176.5,246.3L183.1,250.0L182.7,251.0L176.2,247.3ZM183.1,250.0L189.6,253.7L189.3,254.7L182.7,251.0ZM189.6,253.7L196.2,257.5L195.9,258.5L189.3,254.7ZM196.2,257.5L202.9,261.2L202.5,262.2L195.9,258.5ZM202.9,261.2L209.6,265.0L209.2,266.0L202.5,262.2ZM209.6,265.0L216.3,268.8L215.9,269.8L209.2,266.0ZM216.3,268.8L223.0,272.6L222.7,273.6L215.9,269.8ZM223.0,272.6L229.9,276.4L229.5,277.4L222.7,273.6ZM229.9,276.4L236.7,280.3L236.3,281.3L229.5,277.4ZM236.7,280.3L243.6,284.2L243.2,285.2L236.3,281.3ZM243.6,284.2L250.5,288.1L250.2,289.1L243.2,285.2ZM250.5,288.1L257.5,292.0L257.1,293.0L250.2,289.1ZM257.5,292.0L264.5,295.9L264.1,297.0L257.1,293.0ZM264.5,295.9L271.5,299.9L271.2,300.9L264.1,297.0ZM271.5,299.9L278.6,303.9L278.3,304.9L271.2,300.9ZM278.6,303.9L285.8,308.0L285.4,309.0L278.3,304.9ZM285.8,308.0L293.0,312.0L292.6,313.0L285.4,309.0ZM293.0,312.0L300.2,316.1L299.8,317.1L292.6,313.0ZM300.2,316.1L307.4,320.2L307.1,321.2L299.8,317.1ZM307.4,320.2L314.8,324.3L314.4,325.3L307.1,321.2ZM314.8,324.3L322.1,328.4L321.7,329.5L314.4,325.3ZM322.1,328.4L329.5,332.6L329.1,333.7L321.7,329.5ZM329.5,332.6L337.0,336.8L336.6,337.9L329.1,333.7ZM337.0,336.8L344.5,341.1L344.1,342.1L336.6,337.9ZM89.0,170.4L86.7,170.6L86.5,170.9L88.8,170.6ZM88.8,170.6L86.5,170.9L86.3,171.3L88.7,170.9ZM88.7,170.9L86.3,171.3L86.2,171.6L88.6,171.1ZM87.4,169.9L85.5,170.1L85.0,170.5L87.0,170.2ZM87.0,170.2L85.0,170.5L84.6,171.0L86.7,170.6ZM75.8,178.2L74.2,179.9L74.3,180.8L75.9,179.0ZM353.8,333.3L352.8,335.9L351.1,335.3L352.2,332.7ZM352.8,335.9L351.9,338.6L350.0,338.0L351.1,335.3ZM353.9,339.2L353.3,342.0L351.1,341.4L351.9,338.6ZM347.1,339.9L346.2,342.5L344.3,341.6L345.3,339.0Z" fill="#b7c7e2" stroke="#b7c7e2" stroke-width="0.5"/><path d="M296.9,304.0L304.1,308.0L303.5,309.0L296.3,305.0ZM267.8,289.0L274.8,292.9L274.3,293.9L267.2,289.9ZM239.4,274.3L246.3,278.2L245.8,279.2L238.9,275.3ZM218.4,263.8L225.2,267.6L224.7,268.6L218.0,264.8ZM80.1,173.1L78.3,174.2L77.9,175.0L79.8,173.8ZM79.8,173.8L77.9,175.0L77.6,175.8L79.6,174.5ZM77.9,175.0L76.1,176.4L75.9,177.3L77.6,175.8ZM77.6,175.8L75.9,177.3L75.8,178.2L77.5,176.6ZM76.6,175.5L75.1,176.9L74.6,177.9L76.1,176.4ZM350.8,332.1L349.4,334.6L347.9,333.9L349.4,331.4ZM349.4,334.6L348.2,337.2L346.5,336.4L347.9,333.9ZM357.8,342.8L357.6,345.6L355.1,345.3L355.5,342.4Z" fill="#bac9e4" stroke="#bac9e4" stroke-width="0.5"/><path d="M326.1,320.4L333.5,324.5L332.9,325.5L325.5,321.3ZM296.3,305.0L303.5,309.0L303.0,310.0L295.7,305.9ZM303.5,309.0L310.8,313.1L310.2,314.1L303.0,310.0ZM310.8,313.1L318.1,317.2L317.6,318.2L310.2,314.1ZM274.3,293.9L281.4,297.9L280.9,298.9L273.8,294.9ZM281.4,297.9L288.5,301.9L288.0,302.9L280.9,298.9ZM288.5,301.9L295.7,305.9L295.2,306.9L288.0,302.9ZM295.7,305.9L303.0,310.0L302.4,311.0L295.2,306.9ZM303.0,310.0L310.2,314.1L309.7,315.1L302.4,311.0ZM310.2,314.1L317.6,318.2L317.0,319.2L309.7,315.1ZM317.6,318.2L324.9,322.3L324.4,323.3L317.0,319.2ZM324.9,322.3L332.4,326.5L331.8,327.5L324.4,323.3ZM280.9,298.9L288.0,302.9L287.5,303.9L280.4,299.9ZM288.0,302.9L295.2,306.9L294.7,307.9L287.5,303.9ZM295.2,306.9L302.4,311.0L301.9,312.0L294.7,307.9ZM302.4,311.0L309.7,315.1L309.2,316.1L301.9,312.0ZM309.7,315.1L317.0,319.2L316.5,320.2L309.2,316.1ZM317.0,319.2L324.4,323.3L323.9,324.3L316.5,320.2ZM324.4,323.3L331.8,327.5L331.3,328.5L323.9,324.3ZM331.8,327.5L339.3,331.7L338.8,332.7L331.3,328.5ZM339.3,331.7L346.8,335.9L346.3,336.9L338.8,332.7ZM356.0,339.6L355.5,342.4L353.3,342.0L353.9,339.2Z" fill="#bbcae5" stroke="#bbcae5" stroke-width="0.5"/><path d="M333.5,324.5L341.0,328.7L340.4,329.7L332.9,325.5ZM341.0,328.7L348.5,332.9L347.9,333.9L340.4,329.7ZM318.1,317.2L325.5,321.3L324.9,322.3L317.6,318.2ZM325.5,321.3L332.9,325.5L332.4,326.5L324.9,322.3ZM332.9,325.5L340.4,329.7L339.8,330.7L332.4,326.5ZM340.4,329.7L347.9,333.9L347.3,334.9L339.8,330.7ZM332.4,326.5L339.8,330.7L339.3,331.7L331.8,327.5ZM339.8,330.7L347.3,334.9L346.8,335.9L339.3,331.7Z" fill="#bbcbe5" stroke="#bbcbe5" stroke-width="0.5"/><path d="M212.7,258.2L219.5,261.9L218.9,262.9L212.2,259.1ZM185.7,244.2L192.2,247.9L191.7,248.9L185.2,245.2ZM159.2,230.6L165.7,234.2L165.2,235.2L158.8,231.6ZM133.4,217.3L139.7,220.9L139.3,221.8L133.0,218.3ZM108.2,204.4L114.4,207.8L114.0,208.7L107.8,205.3ZM83.6,191.7L89.6,195.1L89.3,196.0L83.3,192.6ZM73.2,183.8L72.1,185.9L72.6,186.9L73.7,184.8ZM362.3,318.6L361.6,320.3L361.3,320.2L362.3,318.6ZM362.4,320.3L362.4,322.3L361.9,322.3L362.1,320.3ZM362.4,322.3L362.5,324.4L361.6,324.4L361.9,322.3ZM362.5,324.4L362.5,326.7L361.4,326.7L361.6,324.4Z" fill="#b3c3de" stroke="#b3c3de" stroke-width="0.5"/><path d="M109.6,201.6L115.8,205.0L115.3,205.9L109.1,202.5Z" fill="#a2b1cd" stroke="#a2b1cd" stroke-width="0.5"/><path d="M166.2,233.3L172.6,236.9L172.1,237.8L165.7,234.2ZM76.5,180.8L75.0,182.7L75.7,183.6L77.1,181.6ZM74.3,180.8L72.9,182.8L73.2,183.8L74.6,181.8ZM362.3,318.6L363.7,320.2L363.5,320.2L362.3,318.6ZM365.6,321.7L367.1,323.6L366.4,323.8L365.1,321.9ZM372.3,335.9L373.2,338.6L371.2,339.2L370.5,336.4Z" fill="#aebeda" stroke="#aebeda" stroke-width="0.5"/><path d="M205.5,255.3L212.2,259.1L211.7,260.1L205.0,256.3ZM178.6,241.5L185.2,245.2L184.7,246.1L178.2,242.4ZM152.4,228.0L158.8,231.6L158.3,232.5L151.9,228.9ZM126.8,214.8L133.0,218.3L132.6,219.2L126.4,215.7ZM101.7,201.9L107.8,205.3L107.5,206.2L101.4,202.8ZM89.3,196.0L95.3,199.4L95.0,200.3L88.9,196.9ZM77.0,190.2L82.9,193.6L82.6,194.5L76.7,191.2ZM82.9,193.6L88.9,196.9L88.6,197.9L82.6,194.5ZM88.9,196.9L95.0,200.3L94.6,201.3L88.6,197.9ZM91.1,170.7L88.7,170.9L88.6,171.1L91.1,170.8ZM89.2,170.1L87.0,170.2L86.7,170.6L89.0,170.4ZM78.8,179.7L77.1,181.6L77.9,182.4L79.5,180.3ZM71.8,182.5L70.9,184.5L70.8,185.7L71.7,183.7Z" fill="#b6c6e1" stroke="#b6c6e1" stroke-width="0.5"/><path d="M260.2,286.0L267.2,289.9L266.7,290.9L259.7,287.0ZM267.2,289.9L274.3,293.9L273.8,294.9L266.7,290.9ZM232.0,271.5L238.9,275.3L238.4,276.3L231.5,272.4ZM238.9,275.3L245.8,279.2L245.3,280.2L238.4,276.3ZM245.8,279.2L252.7,283.1L252.2,284.1L245.3,280.2ZM252.7,283.1L259.7,287.0L259.2,288.0L252.2,284.1ZM259.7,287.0L266.7,290.9L266.2,291.9L259.2,288.0ZM266.7,290.9L273.8,294.9L273.3,295.9L266.2,291.9ZM273.8,294.9L280.9,298.9L280.4,299.9L273.3,295.9ZM204.5,257.3L211.2,261.0L210.8,262.0L204.1,258.2ZM211.2,261.0L218.0,264.8L217.5,265.8L210.8,262.0ZM218.0,264.8L224.7,268.6L224.3,269.6L217.5,265.8ZM224.7,268.6L231.5,272.4L231.1,273.4L224.3,269.6ZM231.5,272.4L238.4,276.3L237.9,277.3L231.1,273.4ZM238.4,276.3L245.3,280.2L244.8,281.1L237.9,277.3ZM245.3,280.2L252.2,284.1L251.7,285.0L244.8,281.1ZM252.2,284.1L259.2,288.0L258.7,289.0L251.7,285.0ZM259.2,288.0L266.2,291.9L265.7,292.9L258.7,289.0ZM266.2,291.9L273.3,295.9L272.8,296.9L265.7,292.9ZM273.3,295.9L280.4,299.9L279.9,300.9L272.8,296.9ZM280.4,299.9L287.5,303.9L287.0,304.9L279.9,300.9ZM287.5,303.9L294.7,307.9L294.2,308.9L287.0,304.9ZM294.7,307.9L301.9,312.0L301.5,313.0L294.2,308.9ZM301.9,312.0L309.2,316.1L308.7,317.1L301.5,313.0ZM309.2,316.1L316.5,320.2L316.1,321.2L308.7,317.1ZM316.5,320.2L323.9,324.3L323.4,325.4L316.1,321.2ZM323.9,324.3L331.3,328.5L330.8,329.5L323.4,325.4ZM331.3,328.5L338.8,332.7L338.3,333.7L330.8,329.5ZM338.8,332.7L346.3,336.9L345.8,337.9L338.3,333.7ZM177.7,243.4L184.2,247.1L183.8,248.1L177.3,244.4ZM184.2,247.1L190.8,250.8L190.4,251.8L183.8,248.1ZM190.8,250.8L197.4,254.5L197.0,255.5L190.4,251.8ZM197.4,254.5L204.1,258.2L203.7,259.2L197.0,255.5ZM204.1,258.2L210.8,262.0L210.3,263.0L203.7,259.2ZM210.8,262.0L217.5,265.8L217.1,266.8L210.3,263.0ZM217.5,265.8L224.3,269.6L223.8,270.6L217.1,266.8ZM224.3,269.6L231.1,273.4L230.6,274.4L223.8,270.6ZM231.1,273.4L237.9,277.3L237.5,278.3L230.6,274.4ZM237.9,277.3L244.8,281.1L244.4,282.1L237.5,278.3ZM244.8,281.1L251.7,285.0L251.3,286.0L244.4,282.1ZM251.7,285.0L258.7,289.0L258.3,290.0L251.3,286.0ZM258.7,289.0L265.7,292.9L265.3,293.9L258.3,290.0ZM265.7,292.9L272.8,296.9L272.3,297.9L265.3,293.9ZM272.8,296.9L279.9,300.9L279.4,301.9L272.3,297.9ZM279.9,300.9L287.0,304.9L286.6,305.9L279.4,301.9ZM287.0,304.9L294.2,308.9L293.8,310.0L286.6,305.9ZM294.2,308.9L301.5,313.0L301.0,314.0L293.8,310.0ZM301.5,313.0L308.7,317.1L308.3,318.1L301.0,314.0ZM308.7,317.1L316.1,321.2L315.6,322.2L308.3,318.1ZM316.1,321.2L323.4,325.4L323.0,326.4L315.6,322.2ZM323.4,325.4L330.8,329.5L330.4,330.5L323.0,326.4ZM330.8,329.5L338.3,333.7L337.8,334.7L330.4,330.5ZM338.3,333.7L345.8,337.9L345.3,339.0L337.8,334.7Z" fill="#bacae5" stroke="#bacae5" stroke-width="0.5"/><path d="M127.7,212.9L133.9,216.4L133.4,217.3L127.2,213.8ZM102.6,200.0L108.7,203.4L108.2,204.4L102.1,200.9ZM77.1,181.6L75.7,183.6L76.5,184.5L77.9,182.4Z" fill="#abbbd7" stroke="#abbbd7" stroke-width="0.5"/><path d="M191.7,248.9L198.4,252.6L197.9,253.5L191.3,249.8ZM165.2,235.2L171.7,238.8L171.2,239.8L164.7,236.1ZM171.7,238.8L178.2,242.4L177.7,243.4L171.2,239.8ZM139.3,221.8L145.6,225.4L145.2,226.3L138.9,222.8ZM145.6,225.4L151.9,228.9L151.5,229.9L145.2,226.3ZM126.4,215.7L132.6,219.2L132.2,220.2L126.0,216.7ZM132.6,219.2L138.9,222.8L138.5,223.7L132.2,220.2ZM126.0,216.7L132.2,220.2L131.9,221.2L125.6,217.6ZM132.2,220.2L138.5,223.7L138.1,224.7L131.9,221.2ZM138.5,223.7L144.8,227.3L144.4,228.2L138.1,224.7ZM144.8,227.3L151.1,230.9L150.8,231.8L144.4,228.2ZM151.1,230.9L157.5,234.4L157.2,235.4L150.8,231.8ZM157.5,234.4L163.9,238.1L163.6,239.0L157.2,235.4ZM163.9,238.1L170.4,241.7L170.0,242.7L163.6,239.0ZM170.4,241.7L176.9,245.4L176.5,246.3L170.0,242.7ZM176.9,245.4L183.4,249.0L183.1,250.0L176.5,246.3ZM183.4,249.0L190.0,252.7L189.6,253.7L183.1,250.0ZM190.0,252.7L196.6,256.5L196.2,257.5L189.6,253.7ZM196.6,256.5L203.3,260.2L202.9,261.2L196.2,257.5ZM203.3,260.2L209.9,264.0L209.6,265.0L202.9,261.2ZM209.9,264.0L216.7,267.8L216.3,268.8L209.6,265.0ZM216.7,267.8L223.4,271.6L223.0,272.6L216.3,268.8ZM223.4,271.6L230.2,275.4L229.9,276.4L223.0,272.6ZM230.2,275.4L237.1,279.3L236.7,280.3L229.9,276.4ZM237.1,279.3L244.0,283.2L243.6,284.2L236.7,280.3ZM244.0,283.2L250.9,287.1L250.5,288.1L243.6,284.2ZM250.9,287.1L257.9,291.0L257.5,292.0L250.5,288.1ZM257.9,291.0L264.9,294.9L264.5,295.9L257.5,292.0ZM264.9,294.9L271.9,298.9L271.5,299.9L264.5,295.9ZM271.9,298.9L279.0,302.9L278.6,303.9L271.5,299.9ZM279.0,302.9L286.2,306.9L285.8,308.0L278.6,303.9ZM286.2,306.9L293.3,311.0L293.0,312.0L285.8,308.0ZM293.3,311.0L300.6,315.0L300.2,316.1L293.0,312.0ZM300.6,315.0L307.8,319.1L307.4,320.2L300.2,316.1ZM307.8,319.1L315.2,323.3L314.8,324.3L307.4,320.2ZM315.2,323.3L322.5,327.4L322.1,328.4L314.8,324.3ZM322.5,327.4L329.9,331.6L329.5,332.6L322.1,328.4ZM329.9,331.6L337.4,335.8L337.0,336.8L329.5,332.6ZM337.4,335.8L344.9,340.0L344.5,341.1L337.0,336.8ZM86.1,172.0L83.8,172.9L83.9,173.4L86.2,172.4ZM86.1,169.7L84.4,170.0L83.6,170.5L85.5,170.1ZM85.5,170.1L83.6,170.5L83.0,171.0L85.0,170.5ZM85.0,170.5L83.0,171.0L82.5,171.6L84.6,171.0ZM84.6,171.0L82.5,171.6L82.1,172.1L84.2,171.4ZM84.2,171.4L82.1,172.1L81.8,172.7L84.0,171.9ZM351.1,335.3L350.0,338.0L348.2,337.2L349.4,334.6Z" fill="#b8c8e3" stroke="#b8c8e3" stroke-width="0.5"/><path d="M205.0,256.3L211.7,260.1L211.2,261.0L204.5,257.3ZM211.7,260.1L218.4,263.8L218.0,264.8L211.2,261.0ZM178.2,242.4L184.7,246.1L184.2,247.1L177.7,243.4ZM184.7,246.1L191.3,249.8L190.8,250.8L184.2,247.1ZM191.3,249.8L197.9,253.5L197.4,254.5L190.8,250.8ZM151.9,228.9L158.3,232.5L157.9,233.5L151.5,229.9ZM158.3,232.5L164.7,236.1L164.3,237.1L157.9,233.5ZM164.7,236.1L171.2,239.8L170.8,240.7L164.3,237.1ZM171.2,239.8L177.7,243.4L177.3,244.4L170.8,240.7ZM145.2,226.3L151.5,229.9L151.1,230.9L144.8,227.3ZM151.5,229.9L157.9,233.5L157.5,234.4L151.1,230.9ZM157.9,233.5L164.3,237.1L163.9,238.1L157.5,234.4ZM164.3,237.1L170.8,240.7L170.4,241.7L163.9,238.1ZM170.8,240.7L177.3,244.4L176.9,245.4L170.4,241.7ZM177.3,244.4L183.8,248.1L183.4,249.0L176.9,245.4ZM183.8,248.1L190.4,251.8L190.0,252.7L183.4,249.0ZM190.4,251.8L197.0,255.5L196.6,256.5L190.0,252.7ZM197.0,255.5L203.7,259.2L203.3,260.2L196.6,256.5ZM203.7,259.2L210.3,263.0L209.9,264.0L203.3,260.2ZM210.3,263.0L217.1,266.8L216.7,267.8L209.9,264.0ZM217.1,266.8L223.8,270.6L223.4,271.6L216.7,267.8ZM223.8,270.6L230.6,274.4L230.2,275.4L223.4,271.6ZM230.6,274.4L237.5,278.3L237.1,279.3L230.2,275.4ZM237.5,278.3L244.4,282.1L244.0,283.2L237.1,279.3ZM244.4,282.1L251.3,286.0L250.9,287.1L244.0,283.2ZM251.3,286.0L258.3,290.0L257.9,291.0L250.9,287.1ZM258.3,290.0L265.3,293.9L264.9,294.9L257.9,291.0ZM265.3,293.9L272.3,297.9L271.9,298.9L264.9,294.9ZM272.3,297.9L279.4,301.9L279.0,302.9L271.9,298.9ZM279.4,301.9L286.6,305.9L286.2,306.9L279.0,302.9ZM286.6,305.9L293.8,310.0L293.3,311.0L286.2,306.9ZM293.8,310.0L301.0,314.0L300.6,315.0L293.3,311.0ZM301.0,314.0L308.3,318.1L307.8,319.1L300.6,315.0ZM308.3,318.1L315.6,322.2L315.2,323.3L307.8,319.1ZM315.6,322.2L323.0,326.4L322.5,327.4L315.2,323.3ZM323.0,326.4L330.4,330.5L329.9,331.6L322.5,327.4ZM330.4,330.5L337.8,334.7L337.4,335.8L329.9,331.6ZM337.8,334.7L345.3,339.0L344.9,340.0L337.4,335.8ZM85.2,169.5L83.7,169.9L82.8,170.5L84.4,170.0ZM84.4,170.0L82.8,170.5L81.9,171.1L83.6,170.5ZM83.6,170.5L81.9,171.1L81.2,171.7L83.0,171.0ZM83.0,171.0L81.2,171.7L80.6,172.4L82.5,171.6ZM82.5,171.6L80.6,172.4L80.1,173.1L82.1,172.1ZM82.1,172.1L80.1,173.1L79.8,173.8L81.8,172.7ZM81.8,172.7L79.8,173.8L79.6,174.5L81.6,173.3ZM79.6,174.5L77.6,175.8L77.5,176.6L79.5,175.2ZM79.5,175.2L77.5,176.6L77.6,177.4L79.5,175.9ZM77.5,176.6L75.8,178.2L75.9,179.0L77.6,177.4ZM76.1,176.4L74.6,177.9L74.3,178.9L75.9,177.3ZM75.1,176.9L73.8,178.6L73.3,179.6L74.6,177.9ZM348.2,337.2L347.1,339.9L345.3,339.0L346.5,336.4Z" fill="#b9c9e4" stroke="#b9c9e4" stroke-width="0.5"/><path d="M121.0,210.3L127.2,213.8L126.8,214.8L120.6,211.3ZM96.1,197.5L102.1,200.9L101.7,201.9L95.7,198.4ZM72.9,180.7L71.8,182.5L71.7,183.7L72.8,181.7ZM627.0,171.5L629.5,172.2L629.4,171.8L627.0,171.3ZM364.9,324.2L365.7,326.5L364.7,326.6L364.1,324.3ZM365.7,326.5L366.5,328.9L365.2,329.0L364.7,326.6ZM368.8,331.1L369.7,333.7L367.9,334.1L367.3,331.4ZM376.8,337.2L377.9,339.9L376.0,340.7L375.1,338.0Z" fill="#b0c0dc" stroke="#b0c0dc" stroke-width="0.5"/><path d="M84.0,190.7L90.0,194.1L89.6,195.1L83.6,191.7ZM364.2,320.0L366.0,321.5L365.6,321.7L364.0,320.1ZM366.4,321.3L368.4,323.0L367.8,323.3L366.0,321.5ZM370.5,336.4L371.2,339.2L369.1,339.6L368.6,336.8Z" fill="#adbdd9" stroke="#adbdd9" stroke-width="0.5"/><path d="M75.2,200.6L81.2,203.9L81.2,204.8L75.2,201.4ZM81.2,203.9L87.1,207.3L87.2,208.2L81.2,204.8ZM87.1,207.3L93.2,210.8L93.2,211.7L87.2,208.2ZM93.2,210.8L99.2,214.2L99.2,215.1L93.2,211.7ZM99.2,214.2L105.3,217.7L105.3,218.6L99.2,215.1ZM105.3,217.7L111.4,221.1L111.4,222.0L105.3,218.6ZM111.4,221.1L117.5,224.6L117.6,225.5L111.4,222.0ZM117.5,224.6L123.7,228.2L123.7,229.1L117.6,225.5ZM123.7,228.2L129.9,231.7L130.0,232.6L123.7,229.1ZM129.9,231.7L136.2,235.3L136.2,236.2L130.0,232.6ZM136.2,235.3L142.5,238.8L142.5,239.8L136.2,236.2ZM142.5,238.8L148.8,242.4L148.8,243.4L142.5,239.8ZM148.8,242.4L155.2,246.1L155.2,247.0L148.8,243.4ZM155.2,246.1L161.6,249.7L161.6,250.6L155.2,247.0ZM161.6,249.7L168.0,253.4L168.0,254.3L161.6,250.6ZM168.0,253.4L174.5,257.0L174.5,258.0L168.0,254.3ZM174.5,257.0L181.0,260.8L181.0,261.7L174.5,258.0ZM181.0,260.8L187.5,264.5L187.5,265.4L181.0,261.7ZM187.5,264.5L194.1,268.2L194.1,269.2L187.5,265.4ZM194.1,268.2L200.7,272.0L200.7,272.9L194.1,269.2ZM200.7,272.0L207.4,275.8L207.4,276.7L200.7,272.9ZM207.4,275.8L214.1,279.6L214.1,280.5L207.4,276.7ZM214.1,279.6L220.8,283.4L220.8,284.4L214.1,280.5ZM220.8,283.4L227.6,287.3L227.6,288.2L220.8,284.4ZM227.6,287.3L234.4,291.2L234.4,292.1L227.6,288.2ZM234.4,291.2L241.3,295.1L241.3,296.0L234.4,292.1ZM241.3,295.1L248.2,299.0L248.2,300.0L241.3,296.0ZM248.2,299.0L255.2,303.0L255.1,303.9L248.2,300.0ZM255.2,303.0L262.1,306.9L262.1,307.9L255.1,303.9ZM262.1,306.9L269.2,311.0L269.1,311.9L262.1,307.9ZM269.2,311.0L276.2,315.0L276.2,315.9L269.1,311.9ZM276.2,315.0L283.4,319.0L283.3,320.0L276.2,315.9ZM283.4,319.0L290.5,323.1L290.5,324.0L283.3,320.0ZM290.5,323.1L297.7,327.2L297.7,328.1L290.5,324.0ZM297.7,327.2L305.0,331.3L304.9,332.3L297.7,328.1ZM305.0,331.3L312.3,335.5L312.2,336.4L304.9,332.3ZM312.3,335.5L319.6,339.6L319.5,340.6L312.2,336.4ZM319.6,339.6L327.0,343.8L326.9,344.8L319.5,340.6ZM327.0,343.8L334.4,348.1L334.3,349.0L326.9,344.8ZM334.4,348.1L341.9,352.3L341.8,353.3L334.3,349.0ZM73.8,196.9L73.7,199.1L75.2,200.1L75.3,197.8ZM644.3,188.2L644.9,190.4L645.2,189.2L644.5,187.0ZM644.9,190.4L645.3,192.6L645.6,191.4L645.2,189.2ZM645.6,191.4L645.7,193.6L645.7,192.3L645.6,190.1Z" fill="#b5c5e2" stroke="#b5c5e2" stroke-width="0.5"/><path d="M75.2,201.4L81.2,204.8L81.2,205.7L75.3,202.3ZM81.2,204.8L87.2,208.2L87.2,209.1L81.2,205.7ZM87.2,208.2L93.2,211.7L93.2,212.5L87.2,209.1ZM93.2,211.7L99.2,215.1L99.3,216.0L93.2,212.5ZM99.2,215.1L105.3,218.6L105.4,219.5L99.3,216.0ZM105.3,218.6L111.4,222.0L111.5,222.9L105.4,219.5ZM111.4,222.0L117.6,225.5L117.6,226.4L111.5,222.9ZM117.6,225.5L123.7,229.1L123.8,230.0L117.6,226.4ZM123.7,229.1L130.0,232.6L130.0,233.5L123.8,230.0ZM130.0,232.6L136.2,236.2L136.2,237.1L130.0,233.5ZM136.2,236.2L142.5,239.8L142.5,240.7L136.2,237.1ZM142.5,239.8L148.8,243.4L148.9,244.3L142.5,240.7ZM148.8,243.4L155.2,247.0L155.2,247.9L148.9,244.3ZM155.2,247.0L161.6,250.6L161.6,251.5L155.2,247.9ZM161.6,250.6L168.0,254.3L168.0,255.2L161.6,251.5ZM168.0,254.3L174.5,258.0L174.5,258.9L168.0,255.2ZM174.5,258.0L181.0,261.7L181.0,262.6L174.5,258.9ZM181.0,261.7L187.5,265.4L187.6,266.3L181.0,262.6ZM187.5,265.4L194.1,269.2L194.1,270.1L187.6,266.3ZM194.1,269.2L200.7,272.9L200.8,273.8L194.1,270.1ZM200.7,272.9L207.4,276.7L207.4,277.6L200.8,273.8ZM207.4,276.7L214.1,280.5L214.1,281.5L207.4,277.6ZM214.1,280.5L220.8,284.4L220.8,285.3L214.1,281.5ZM220.8,284.4L227.6,288.2L227.6,289.2L220.8,285.3ZM227.6,288.2L234.4,292.1L234.4,293.0L227.6,289.2ZM234.4,292.1L241.3,296.0L241.3,297.0L234.4,293.0ZM241.3,296.0L248.2,300.0L248.2,300.9L241.3,297.0ZM248.2,300.0L255.1,303.9L255.1,304.8L248.2,300.9ZM255.1,303.9L262.1,307.9L262.1,308.8L255.1,304.8ZM262.1,307.9L269.1,311.9L269.1,312.8L262.1,308.8ZM269.1,311.9L276.2,315.9L276.2,316.9L269.1,312.8ZM276.2,315.9L283.3,320.0L283.3,320.9L276.2,316.9ZM283.3,320.0L290.5,324.0L290.5,325.0L283.3,320.9ZM290.5,324.0L297.7,328.1L297.7,329.1L290.5,325.0ZM297.7,328.1L304.9,332.3L304.9,333.2L297.7,329.1ZM304.9,332.3L312.2,336.4L312.2,337.4L304.9,333.2ZM312.2,336.4L319.5,340.6L319.5,341.5L312.2,337.4ZM319.5,340.6L326.9,344.8L326.9,345.7L319.5,341.5ZM326.9,344.8L334.3,349.0L334.3,350.0L326.9,345.7ZM334.3,349.0L341.8,353.3L341.8,354.2L334.3,350.0ZM640.4,198.0L640.4,200.3L641.9,199.3L641.8,197.0Z" fill="#b3c4e1" stroke="#b3c4e1" stroke-width="0.5"/><path d="M94.6,486.6L94.8,487.1L70.1,197.1L69.9,196.6ZM70.5,190.2L70.1,192.4L70.7,193.6L71.1,191.4ZM71.5,194.7L71.4,197.0L72.4,198.1L72.6,195.8ZM72.6,195.8L72.4,198.1L73.7,199.1L73.8,196.9ZM69.9,194.6L70.0,196.8L70.6,198.1L70.5,195.8ZM642.3,188.1L643.1,190.4L643.8,189.3L642.9,187.1ZM642.1,191.4L642.7,193.7L643.7,192.6L643.1,190.4ZM643.1,190.4L643.7,192.6L644.4,191.5L643.8,189.3ZM641.5,194.7L641.8,197.0L643.0,196.0L642.7,193.7ZM645.3,192.6L645.4,194.8L645.7,193.6L645.6,191.4ZM381.5,344.2L382.1,346.8L380.2,347.9L379.6,345.2Z" fill="#b4c4e1" stroke="#b4c4e1" stroke-width="0.5"/><path d="M95.3,488.2L95.6,488.7L70.9,198.5L70.6,198.1ZM352.1,50.3L351.5,50.1L352.3,50.0L352.8,50.3ZM355.4,50.3L355.8,50.0L356.6,50.1L356.0,50.3ZM94.6,487.2L94.4,485.4L94.7,486.8L95.0,488.6ZM71.9,192.5L71.5,194.7L72.6,195.8L72.9,193.5ZM70.5,195.8L70.6,198.1L71.4,199.2L71.4,197.0ZM639.4,187.7L640.3,190.0L641.4,189.1L640.4,186.8ZM640.4,186.8L641.4,189.1L642.3,188.1L641.2,185.9ZM644.8,193.8L644.9,196.0L645.4,194.8L645.3,192.6ZM382.1,346.8L382.6,349.4L380.6,350.4L380.2,347.9Z" fill="#b3c3e0" stroke="#b3c3e0" stroke-width="0.5"/><path d="M95.9,489.2L96.2,489.7L71.6,199.4L71.2,199.0ZM352.9,51.6L351.6,51.0L352.0,50.9L353.1,51.5ZM355.2,51.5L356.3,50.9L356.7,51.0L355.4,51.6ZM95.0,488.6L94.7,486.8L95.3,488.2L95.5,489.9ZM73.7,199.1L73.8,201.4L75.3,202.3L75.2,200.1ZM638.2,185.4L639.4,187.7L640.4,186.8L639.2,184.6ZM639.2,184.6L640.4,186.8L641.2,185.9L640.0,183.8ZM644.0,194.9L644.1,197.2L644.9,196.0L644.8,193.8Z" fill="#b2c2df" stroke="#b2c2df" stroke-width="0.5"/><path d="M96.6,490.2L97.0,490.7L72.5,200.3L72.0,199.9ZM95.5,489.9L95.3,488.2L96.0,489.5L96.3,491.2ZM637.8,182.5L639.2,184.6L640.0,183.8L638.6,181.7Z" fill="#b1c1de" stroke="#b1c1de" stroke-width="0.5"/><path d="M97.0,490.7L97.5,491.2L73.0,200.8L72.5,200.3ZM351.6,352.9L351.4,355.5L348.8,354.8L349.0,352.2Z" fill="#b0c1de" stroke="#b0c1de" stroke-width="0.5"/><path d="M98.0,491.7L98.5,492.1L74.1,201.6L73.5,201.2ZM98.5,492.1L99.0,492.5L74.7,202.0L74.1,201.6ZM613.0,488.3L613.2,487.8L645.0,197.7L644.8,198.2ZM96.3,491.2L96.0,489.5L97.0,490.7L97.3,492.5ZM640.4,200.3L640.3,202.5L641.8,201.5L641.9,199.3ZM644.1,197.2L644.0,199.4L644.8,198.2L644.9,196.0ZM354.7,348.1L354.4,350.8L351.8,350.3L352.2,347.5ZM352.2,347.5L351.8,350.3L349.3,349.6L349.8,346.9ZM351.8,350.3L351.6,352.9L349.0,352.2L349.3,349.6ZM354.2,353.5L354.1,356.0L351.4,355.5L351.6,352.9Z" fill="#afc0dd" stroke="#afc0dd" stroke-width="0.5"/><path d="M99.0,492.5L99.6,493.0L75.3,202.3L74.7,202.0ZM612.4,489.4L612.7,488.8L644.5,198.7L644.2,199.2ZM97.3,492.5L97.0,490.7L98.2,491.9L98.5,493.6ZM612.7,490.1L613.0,488.3L613.5,487.0L613.2,488.7ZM641.9,199.3L641.8,201.5L643.0,200.5L643.1,198.3ZM643.1,198.3L643.0,200.5L644.0,199.4L644.1,197.2ZM359.8,351.4L359.7,354.1L357.0,353.8L357.1,351.2ZM357.1,351.2L357.0,353.8L354.2,353.5L354.4,350.8Z" fill="#aebfdc" stroke="#aebfdc" stroke-width="0.5"/><path d="M609.4,492.7L609.9,492.2L641.5,201.7L640.9,202.1ZM102.3,500.3L101.2,499.3L102.4,500.3L103.5,501.2ZM101.2,499.3L100.3,498.1L101.5,499.1L102.4,500.3ZM100.3,498.1L99.5,496.7L100.8,497.8L101.5,499.1ZM99.5,496.7L98.9,495.2L100.2,496.3L100.8,497.8ZM345.8,670.5L345.1,669.7L343.3,668.8L344.1,669.6ZM347.0,670.5L346.6,669.5L344.5,668.7L345.1,669.7ZM345.1,669.7L344.5,668.7L342.6,667.7L343.3,668.8ZM343.3,668.8L342.6,667.7L340.9,666.6L341.6,667.7ZM346.6,669.5L346.2,668.3L344.1,667.5L344.5,668.7ZM344.5,668.7L344.1,667.5L342.1,666.4L342.6,667.7ZM342.6,667.7L342.1,666.4L340.3,665.3L340.9,666.6ZM348.4,669.1L348.2,667.7L345.9,666.9L346.2,668.3ZM342.1,666.4L341.8,665.0L339.9,663.8L340.3,665.3ZM341.8,665.0L341.5,663.4L339.6,662.2L339.9,663.8Z" fill="#a9bad8" stroke="#a9bad8" stroke-width="0.5"/><path d="M609.9,492.2L610.4,491.8L642.0,201.3L641.5,201.7ZM100.2,498.3L99.2,497.0L100.3,498.1L101.2,499.3ZM98.9,495.2L98.5,493.6L99.8,494.7L100.2,496.3ZM611.5,493.0L612.0,491.4L612.7,490.1L612.2,491.7ZM376.8,343.4L377.5,346.1L375.3,346.9L374.7,344.2ZM370.4,348.1L370.7,350.8L368.0,351.2L367.8,348.4ZM378.0,348.8L378.4,351.4L376.0,352.2L375.7,349.6ZM365.3,351.4L365.4,354.1L362.6,354.2L362.6,351.5Z" fill="#aabbd8" stroke="#aabbd8" stroke-width="0.5"/><path d="M610.4,491.8L610.9,491.3L642.5,200.9L642.0,201.3ZM99.2,497.0L98.4,495.6L99.5,496.7L100.3,498.1ZM611.0,492.6L611.3,490.9L612.3,489.6L612.0,491.4ZM345.9,666.9L345.8,665.3L343.6,664.4L343.8,666.0ZM343.8,666.0L343.6,664.4L341.5,663.4L341.8,665.0Z" fill="#aabbd9" stroke="#aabbd9" stroke-width="0.5"/><path d="M610.9,491.3L611.3,490.9L643.0,200.5L642.5,200.9ZM98.3,495.9L97.4,494.4L98.4,495.6L99.2,497.0ZM98.5,493.6L98.2,491.9L99.6,493.0L99.8,494.7ZM348.1,666.1L348.0,664.3L345.7,663.6L345.8,665.3ZM341.5,663.4L341.5,661.6L339.6,660.4L339.6,662.2Z" fill="#abbcda" stroke="#abbcda" stroke-width="0.5"/><path d="M611.3,490.9L611.7,490.4L643.4,200.1L643.0,200.5ZM97.5,494.7L96.7,493.2L97.4,494.4L98.3,495.9ZM97.4,494.4L96.8,492.9L97.7,494.1L98.4,495.6ZM97.7,494.1L97.3,492.5L98.5,493.6L98.9,495.2ZM612.0,491.4L612.3,489.6L613.0,488.3L612.7,490.1ZM362.6,351.5L362.6,354.2L359.7,354.1L359.8,351.4Z" fill="#acbdda" stroke="#acbdda" stroke-width="0.5"/><path d="M611.7,490.4L612.1,489.9L643.8,199.6L643.4,200.1Z" fill="#acbddb" stroke="#acbddb" stroke-width="0.5"/><path d="M612.1,489.9L612.4,489.4L644.2,199.2L643.8,199.6ZM96.7,493.2L96.0,491.6L96.8,492.9L97.4,494.4ZM96.8,492.9L96.3,491.2L97.3,492.5L97.7,494.1ZM365.2,348.6L365.3,351.4L362.6,351.5L362.6,348.7Z" fill="#adbedb" stroke="#adbedb" stroke-width="0.5"/><path d="M613.6,486.7L613.7,486.1L645.5,196.3L645.4,196.8ZM72.4,198.1L72.5,200.3L73.8,201.4L73.7,199.1ZM641.8,197.0L641.9,199.3L643.1,198.3L643.0,196.0ZM643.0,196.0L643.1,198.3L644.1,197.2L644.0,194.9ZM344.0,352.9L343.9,355.3L341.8,354.2L341.9,351.8Z" fill="#b1c2df" stroke="#b1c2df" stroke-width="0.5"/><path d="M376.2,660.4L375.5,660.9L382.1,354.7L382.9,354.2ZM375.5,660.9L374.7,661.4L381.3,355.1L382.1,354.7ZM374.7,661.4L374.0,661.8L380.4,355.5L381.3,355.1Z" fill="#95a7c6" stroke="#95a7c6" stroke-width="0.5"/><path d="M374.0,661.8L373.2,662.2L379.5,355.9L380.4,355.5ZM373.2,662.2L372.3,662.7L378.6,356.3L379.5,355.9ZM372.3,662.7L371.5,663.0L377.6,356.7L378.6,356.3ZM371.5,663.0L370.6,663.4L376.7,357.0L377.6,356.7ZM370.6,663.4L369.7,663.7L375.7,357.3L376.7,357.0ZM369.7,663.7L368.8,664.1L374.6,357.6L375.7,357.3Z" fill="#96a8c7" stroke="#96a8c7" stroke-width="0.5"/><path d="M368.8,664.1L367.9,664.3L373.6,357.9L374.6,357.6ZM367.9,664.3L367.0,664.6L372.6,358.1L373.6,357.9ZM367.0,664.6L366.0,664.8L371.5,358.3L372.6,358.1Z" fill="#97a9c8" stroke="#97a9c8" stroke-width="0.5"/><path d="M366.0,664.8L365.0,665.0L370.4,358.5L371.5,358.3ZM372.2,664.4L372.3,662.7L370.2,663.6L370.1,665.3ZM370.1,665.3L370.2,663.6L367.9,664.3L367.8,666.1Z" fill="#98aac9" stroke="#98aac9" stroke-width="0.5"/><path d="M365.0,665.0L364.0,665.2L369.3,358.7L370.4,358.5ZM374.2,663.4L374.3,661.6L372.3,662.7L372.2,664.4Z" fill="#99abca" stroke="#99abca" stroke-width="0.5"/><path d="M364.0,665.2L363.1,665.4L368.2,358.8L369.3,358.7ZM372.0,666.0L372.2,664.4L370.1,665.3L369.9,666.9ZM365.4,666.7L365.5,664.9L363.1,665.4L363.0,667.1ZM373.6,355.5L373.6,357.9L370.9,358.4L370.9,356.0Z" fill="#9badcc" stroke="#9badcc" stroke-width="0.5"/><path d="M363.1,665.4L362.1,665.5L367.1,358.9L368.2,358.8ZM371.6,667.5L372.0,666.0L369.9,666.9L369.5,668.3ZM365.3,668.3L365.4,666.7L363.0,667.1L362.9,668.7Z" fill="#9dafcd" stroke="#9dafcd" stroke-width="0.5"/><path d="M362.1,665.5L361.0,665.6L365.9,359.0L367.1,358.9ZM371.1,668.7L371.6,667.5L369.5,668.3L369.1,669.6ZM369.1,669.6L369.5,668.3L367.4,669.1L367.0,670.3ZM367.0,670.3L367.4,669.1L365.1,669.7L364.8,670.8ZM365.1,669.7L365.3,668.3L362.9,668.7L362.7,670.1ZM375.7,663.8L376.1,662.2L374.2,663.4L373.9,665.0ZM380.8,352.9L380.8,355.3L378.6,356.3L378.6,353.9Z" fill="#9eb0ce" stroke="#9eb0ce" stroke-width="0.5"/><path d="M358.0,665.7L357.0,665.7L361.3,359.1L362.5,359.1ZM368.1,353.9L368.2,356.4L365.4,356.6L365.4,354.1Z" fill="#a5b7d4" stroke="#a5b7d4" stroke-width="0.5"/><path d="M357.0,665.7L356.0,665.7L360.2,359.1L361.3,359.1Z" fill="#a6b8d6" stroke="#a6b8d6" stroke-width="0.5"/><path d="M356.0,665.7L354.9,665.6L359.1,359.0L360.2,359.1ZM610.8,494.6L611.5,493.0L612.2,491.7L611.5,493.3ZM348.3,671.8L347.6,671.3L345.8,670.5L346.6,671.1ZM349.5,671.9L349.1,671.2L347.0,670.5L347.6,671.3ZM349.1,671.2L348.7,670.3L346.6,669.5L347.0,670.5ZM350.9,670.8L350.7,669.7L348.4,669.1L348.7,670.3ZM353.1,670.1L353.0,668.7L350.5,668.3L350.7,669.7ZM355.4,669.0L355.4,667.4L352.9,667.1L353.0,668.7ZM368.0,351.2L368.1,353.9L365.4,354.1L365.3,351.4ZM362.5,356.7L362.5,359.1L359.6,359.1L359.7,356.6Z" fill="#a8bad7" stroke="#a8bad7" stroke-width="0.5"/><path d="M354.9,665.6L353.9,665.5L357.9,358.9L359.1,359.0ZM353.9,665.5L352.9,665.4L356.8,358.8L357.9,358.9ZM346.2,668.3L345.9,666.9L343.8,666.0L344.1,667.5ZM344.1,667.5L343.8,666.0L341.8,665.0L342.1,666.4ZM350.5,668.3L350.5,666.7L348.1,666.1L348.2,667.7ZM355.4,667.4L355.4,665.6L352.9,665.4L352.9,667.1ZM352.9,667.1L352.9,665.4L350.4,664.9L350.5,666.7Z" fill="#a9bbd8" stroke="#a9bbd8" stroke-width="0.5"/><path d="M352.9,665.4L351.9,665.2L355.7,358.7L356.8,358.8ZM351.9,665.2L350.9,665.0L354.6,358.5L355.7,358.7ZM350.9,665.0L350.0,664.8L353.5,358.3L354.6,358.5ZM350.5,666.7L350.4,664.9L348.0,664.3L348.1,666.1Z" fill="#aabcd9" stroke="#aabcd9" stroke-width="0.5"/><path d="M350.0,664.8L349.0,664.6L352.4,358.1L353.5,358.3ZM349.0,664.6L348.0,664.3L351.3,357.9L352.4,358.1ZM348.0,664.3L347.1,664.0L350.2,357.6L351.3,357.9ZM347.1,664.0L346.2,663.7L349.2,357.3L350.2,357.6ZM612.2,491.7L612.7,490.1L613.2,488.7L612.7,490.4ZM345.8,665.3L345.7,663.6L343.5,662.6L343.6,664.4ZM343.6,664.4L343.5,662.6L341.5,661.6L341.5,663.4ZM356.8,356.4L356.8,358.8L354.0,358.4L354.1,356.0Z" fill="#abbdda" stroke="#abbdda" stroke-width="0.5"/><path d="M346.2,663.7L345.3,663.4L348.2,357.0L349.2,357.3ZM345.3,663.4L344.4,663.0L347.2,356.7L348.2,357.0ZM344.4,663.0L343.5,662.6L346.2,356.3L347.2,356.7ZM354.1,356.0L354.0,358.4L351.3,357.9L351.4,355.5Z" fill="#acbedb" stroke="#acbedb" stroke-width="0.5"/><path d="M343.5,662.6L342.7,662.2L345.3,355.9L346.2,356.3ZM342.7,662.2L341.9,661.8L344.4,355.5L345.3,355.9ZM341.9,661.8L341.1,661.4L343.5,355.1L344.4,355.5ZM351.4,355.5L351.3,357.9L348.7,357.2L348.8,354.8Z" fill="#adbfdc" stroke="#adbfdc" stroke-width="0.5"/><path d="M341.1,661.4L340.3,660.9L342.6,354.7L343.5,355.1ZM340.3,660.9L339.6,660.4L341.8,354.2L342.6,354.7ZM348.8,354.8L348.7,357.2L346.2,356.3L346.3,353.9Z" fill="#aec0dd" stroke="#aec0dd" stroke-width="0.5"/><path d="M354.2,52.3L353.1,51.5L353.3,51.5L354.2,52.3ZM354.2,52.3L355.0,51.5L355.2,51.5L354.2,52.3ZM76.1,179.9L74.6,181.8L75.0,182.7L76.5,180.8ZM74.2,179.9L72.8,181.7L72.9,182.8L74.3,180.8ZM72.8,181.7L71.7,183.7L71.8,184.8L72.9,182.8ZM622.0,170.8L623.7,170.1L623.5,170.0L622.0,170.8ZM624.2,170.5L626.4,170.3L626.1,170.1L624.1,170.3ZM631.8,173.5L634.0,174.7L634.0,174.1L631.8,173.0ZM633.8,175.3L635.9,176.7L636.1,176.0L634.0,174.7ZM345.4,345.2L344.8,347.8L342.7,346.8L343.4,344.2Z" fill="#b1c1dd" stroke="#b1c1dd" stroke-width="0.5"/><path d="M99.3,497.2L98.3,495.9L99.2,497.0L100.2,498.3ZM98.4,495.6L97.7,494.1L98.9,495.2L99.5,496.7ZM372.4,344.8L372.9,347.5L370.4,348.1L370.1,345.3ZM380.2,347.9L380.6,350.4L378.4,351.4L378.0,348.8ZM362.6,354.2L362.5,356.7L359.7,356.6L359.7,354.1ZM359.7,356.6L359.6,359.1L356.8,358.8L356.8,356.4Z" fill="#abbcd9" stroke="#abbcd9" stroke-width="0.5"/><path d="M95.4,490.3L95.0,488.6L95.5,489.9L96.0,491.6ZM636.3,180.5L637.8,182.5L638.6,181.7L636.9,179.8ZM377.9,339.9L378.8,342.6L376.8,343.4L376.0,340.7ZM378.8,342.6L379.6,345.2L377.5,346.1L376.8,343.4ZM349.8,346.9L349.3,349.6L347.0,348.8L347.5,346.1Z" fill="#b0c0dd" stroke="#b0c0dd" stroke-width="0.5"/><path d="M96.0,491.6L95.5,489.9L96.3,491.2L96.8,492.9Z" fill="#afbfdc" stroke="#afbfdc" stroke-width="0.5"/><path d="M93.6,170.7L91.5,170.2L91.4,170.3L93.6,170.7ZM93.6,170.7L91.4,170.3L91.3,170.4L93.6,170.7Z" fill="#b2c3de" stroke="#b2c3de" stroke-width="0.5"/><path d="M93.6,170.7L91.1,170.7L91.1,170.8L93.6,170.7ZM91.6,170.1L89.7,169.7L89.4,169.9L91.5,170.2Z" fill="#b3c4df" stroke="#b3c4df" stroke-width="0.5"/><path d="M91.4,170.3L89.2,170.1L89.0,170.4L91.3,170.4ZM73.4,188.0L72.5,190.2L73.5,191.2L74.3,188.9ZM362.6,345.9L362.6,348.7L359.9,348.6L360.1,345.8Z" fill="#b4c5e0" stroke="#b4c5e0" stroke-width="0.5"/><path d="M89.4,169.9L87.4,169.9L87.0,170.2L89.2,170.1ZM349.0,340.7L348.2,343.4L346.2,342.5L347.1,339.9Z" fill="#b5c6e1" stroke="#b5c6e1" stroke-width="0.5"/><path d="M88.6,171.1L86.2,171.6L86.1,172.0L88.6,171.4ZM86.7,170.6L84.6,171.0L84.2,171.4L86.5,170.9ZM77.8,178.2L76.1,179.9L76.5,180.8L78.2,178.9Z" fill="#b8c7e2" stroke="#b8c7e2" stroke-width="0.5"/><path d="M87.9,169.6L86.1,169.7L85.5,170.1L87.4,169.9ZM351.9,338.6L351.1,341.4L349.0,340.7L350.0,338.0ZM355.5,342.4L355.1,345.3L352.7,344.8L353.3,342.0Z" fill="#b6c7e2" stroke="#b6c7e2" stroke-width="0.5"/><path d="M81.9,171.1L80.3,171.9L79.5,172.7L81.2,171.7ZM81.2,171.7L79.5,172.7L78.8,173.4L80.6,172.4ZM80.6,172.4L78.8,173.4L78.3,174.2L80.1,173.1ZM80.3,171.9L78.9,173.0L78.0,173.8L79.5,172.7ZM79.5,172.7L78.0,173.8L77.2,174.6L78.8,173.4ZM78.8,173.4L77.2,174.6L76.6,175.5L78.3,174.2ZM78.3,174.2L76.6,175.5L76.1,176.4L77.9,175.0ZM78.0,173.8L76.6,175.1L75.8,176.0L77.2,174.6ZM77.2,174.6L75.8,176.0L75.1,176.9L76.6,175.5Z" fill="#bac9e5" stroke="#bac9e5" stroke-width="0.5"/><path d="M75.9,177.3L74.3,178.9L74.2,179.9L75.8,178.2Z" fill="#b9c8e4" stroke="#b9c8e4" stroke-width="0.5"/><path d="M74.6,181.8L73.2,183.8L73.7,184.8L75.0,182.7ZM358.2,326.2L357.2,328.6L356.0,328.3L357.2,326.0Z" fill="#acbcd8" stroke="#acbcd8" stroke-width="0.5"/><path d="M75.0,182.7L73.7,184.8L74.4,185.8L75.7,183.6ZM372.9,347.5L373.2,350.3L370.7,350.8L370.4,348.1Z" fill="#aabad7" stroke="#aabad7" stroke-width="0.5"/><path d="M604.7,501.4L605.8,500.4L606.9,499.4L605.8,500.5ZM605.8,500.4L606.7,499.2L607.9,498.2L606.9,499.4ZM606.7,499.2L607.5,497.9L608.8,496.9L607.9,498.2ZM607.5,497.9L608.1,496.4L609.4,495.4L608.8,496.9ZM361.6,673.2L362.0,672.8L359.9,673.0L359.7,673.4ZM362.0,672.8L362.3,672.1L360.1,672.4L359.9,673.0ZM360.5,667.4L360.5,665.6L358.0,665.7L358.0,667.5ZM376.0,352.2L376.1,354.8L373.6,355.5L373.5,352.9ZM370.8,353.5L370.9,356.0L368.2,356.4L368.1,353.9Z" fill="#a2b4d2" stroke="#a2b4d2" stroke-width="0.5"/><path d="M606.9,499.4L607.9,498.2L609.0,497.1L608.0,498.4ZM359.9,673.0L360.1,672.4L357.8,672.4L357.8,673.1Z" fill="#a4b5d3" stroke="#a4b5d3" stroke-width="0.5"/><path d="M607.9,498.2L608.8,496.9L609.9,495.8L609.0,497.1ZM359.7,673.4L359.9,673.0L357.8,673.1L357.7,673.5ZM378.4,351.4L378.6,353.9L376.1,354.8L376.0,352.2Z" fill="#a4b6d3" stroke="#a4b6d3" stroke-width="0.5"/><path d="M609.0,497.1L609.9,495.8L610.8,494.6L609.9,496.0ZM609.4,495.4L609.9,493.7L611.0,492.6L610.6,494.2ZM382.9,351.8L382.9,354.2L380.8,355.3L380.8,352.9Z" fill="#a6b7d5" stroke="#a6b7d5" stroke-width="0.5"/><path d="M608.8,496.9L609.4,495.4L610.6,494.2L609.9,495.8ZM608.6,494.8L608.9,493.1L610.2,492.0L609.9,493.7Z" fill="#a5b6d4" stroke="#a5b6d4" stroke-width="0.5"/><path d="M609.9,495.8L610.6,494.2L611.5,493.0L610.8,494.6ZM358.0,667.5L358.0,665.7L355.4,665.6L355.4,667.4ZM373.2,350.3L373.5,352.9L370.8,353.5L370.7,350.8Z" fill="#a6b8d5" stroke="#a6b8d5" stroke-width="0.5"/><path d="M608.1,496.4L608.6,494.8L609.9,493.7L609.4,495.4ZM360.4,669.0L360.5,667.4L358.0,667.5L357.9,669.1Z" fill="#a3b4d2" stroke="#a3b4d2" stroke-width="0.5"/><path d="M366.2,672.1L367.1,671.8L365.3,672.4L364.6,672.7ZM364.6,672.7L365.3,672.4L363.5,672.9L363.0,673.1ZM372.8,668.7L373.8,667.7L372.2,668.8L371.3,669.7Z" fill="#a1b2d1" stroke="#a1b2d1" stroke-width="0.5"/><path d="M361.2,673.4L361.6,673.2L359.7,673.4L359.5,673.6Z" fill="#a3b4d3" stroke="#a3b4d3" stroke-width="0.5"/><path d="M359.5,673.6L359.7,673.4L357.7,673.5L357.7,673.7ZM365.4,356.6L365.3,359.1L362.5,359.1L362.5,356.7Z" fill="#a4b6d4" stroke="#a4b6d4" stroke-width="0.5"/><path d="M357.7,673.7L357.7,673.5L355.8,673.4L355.9,673.6ZM357.7,673.5L357.8,673.1L355.7,673.0L355.8,673.4ZM357.8,673.1L357.8,672.4L355.6,672.4L355.7,673.0ZM357.8,672.4L357.9,671.5L355.5,671.5L355.6,672.4ZM357.9,671.5L357.9,670.4L355.5,670.3L355.5,671.5ZM357.9,670.4L357.9,669.1L355.4,669.0L355.5,670.3ZM357.9,669.1L358.0,667.5L355.4,667.4L355.4,669.0Z" fill="#a5b7d5" stroke="#a5b7d5" stroke-width="0.5"/><path d="M355.9,673.6L355.8,673.4L353.8,673.2L354.1,673.4ZM355.8,673.4L355.7,673.0L353.6,672.8L353.8,673.2ZM355.7,673.0L355.6,672.4L353.4,672.1L353.6,672.8Z" fill="#a7b8d6" stroke="#a7b8d6" stroke-width="0.5"/><path d="M354.1,673.4L353.8,673.2L351.9,672.9L352.4,673.1ZM353.8,673.2L353.6,672.8L351.5,672.4L351.9,672.9ZM355.6,672.4L355.5,671.5L353.2,671.2L353.4,672.1ZM355.5,671.5L355.5,670.3L353.1,670.1L353.2,671.2Z" fill="#a7b9d6" stroke="#a7b9d6" stroke-width="0.5"/><path d="M352.4,673.1L351.9,672.9L350.1,672.4L350.7,672.7ZM353.6,672.8L353.4,672.1L351.2,671.7L351.5,672.4ZM353.4,672.1L353.2,671.2L350.9,670.8L351.2,671.7ZM355.5,670.3L355.4,669.0L353.0,668.7L353.1,670.1Z" fill="#a7b9d7" stroke="#a7b9d7" stroke-width="0.5"/><path d="M346.6,671.1L345.8,670.5L344.1,669.6L345.0,670.3ZM345.0,670.3L344.1,669.6L342.5,668.7L343.6,669.4ZM347.6,671.3L347.0,670.5L345.1,669.7L345.8,670.5ZM344.1,669.6L343.3,668.8L341.6,667.7L342.5,668.7ZM348.7,670.3L348.4,669.1L346.2,668.3L346.6,669.5ZM350.7,669.7L350.5,668.3L348.2,667.7L348.4,669.1ZM353.0,668.7L352.9,667.1L350.5,666.7L350.5,668.3Z" fill="#a8bad8" stroke="#a8bad8" stroke-width="0.5"/><path d="M369.6,670.5L370.4,669.7L368.5,670.5L367.8,671.3ZM362.9,668.7L363.0,667.1L360.5,667.4L360.4,669.0Z" fill="#a0b1d0" stroke="#a0b1d0" stroke-width="0.5"/><path d="M367.8,671.3L368.5,670.5L366.5,671.2L366.0,671.9ZM372.2,668.8L372.9,667.7L371.1,668.7L370.4,669.7ZM370.4,669.7L371.1,668.7L369.1,669.6L368.5,670.5ZM364.8,670.8L365.1,669.7L362.7,670.1L362.5,671.2ZM375.3,665.3L375.7,663.8L373.9,665.0L373.5,666.4Z" fill="#9fb1cf" stroke="#9fb1cf" stroke-width="0.5"/><path d="M366.0,671.9L366.5,671.2L364.4,671.7L364.0,672.4Z" fill="#9fb1d0" stroke="#9fb1d0" stroke-width="0.5"/><path d="M368.5,670.5L369.1,669.6L367.0,670.3L366.5,671.2ZM366.5,671.2L367.0,670.3L364.8,670.8L364.4,671.7ZM372.9,667.7L373.5,666.4L371.6,667.5L371.1,668.7ZM363.0,667.1L363.1,665.4L360.5,665.6L360.5,667.4Z" fill="#9fb0cf" stroke="#9fb0cf" stroke-width="0.5"/><path d="M362.3,672.1L362.5,671.2L360.2,671.5L360.1,672.4Z" fill="#a2b3d1" stroke="#a2b3d1" stroke-width="0.5"/><path d="M373.5,666.4L373.9,665.0L372.0,666.0L371.6,667.5Z" fill="#9eafce" stroke="#9eafce" stroke-width="0.5"/><path d="M369.5,668.3L369.9,666.9L367.6,667.7L367.4,669.1ZM367.4,669.1L367.6,667.7L365.3,668.3L365.1,669.7Z" fill="#9daecd" stroke="#9daecd" stroke-width="0.5"/><path d="M373.9,665.0L374.2,663.4L372.2,664.4L372.0,666.0Z" fill="#9caecc" stroke="#9caecc" stroke-width="0.5"/><path d="M369.9,666.9L370.1,665.3L367.8,666.1L367.6,667.7ZM367.6,667.7L367.8,666.1L365.4,666.7L365.3,668.3ZM376.1,662.2L376.2,660.4L374.3,661.6L374.2,663.4Z" fill="#9badcb" stroke="#9badcb" stroke-width="0.5"/><path d="M348.2,667.7L348.1,666.1L345.8,665.3L345.9,666.9Z" fill="#a9bbd9" stroke="#a9bbd9" stroke-width="0.5"/><path d="M367.8,666.1L367.9,664.3L365.5,664.9L365.4,666.7Z" fill="#99abc9" stroke="#99abc9" stroke-width="0.5"/><path d="M362.3,318.6L363.5,320.2L363.2,320.3L362.3,318.6ZM363.7,320.2L365.1,321.9L364.6,322.0L363.5,320.2ZM367.1,323.6L368.7,325.7L367.7,326.0L366.4,323.8Z" fill="#aebfda" stroke="#aebfda" stroke-width="0.5"/><path d="M362.3,318.6L363.2,320.3L362.9,320.3L362.3,318.6ZM363.5,320.2L364.6,322.0L364.1,322.1L363.2,320.3ZM366.4,323.8L367.7,326.0L366.8,326.2L365.7,324.0ZM367.7,326.0L369.0,328.3L367.8,328.6L366.8,326.2ZM369.0,328.3L370.2,330.7L368.8,331.1L367.8,328.6ZM362.5,329.2L362.6,331.8L361.0,331.8L361.2,329.2ZM370.2,330.7L371.3,333.3L369.7,333.7L368.8,331.1ZM371.3,333.3L372.3,335.9L370.5,336.4L369.7,333.7Z" fill="#afbfdb" stroke="#afbfdb" stroke-width="0.5"/><path d="M362.3,318.6L362.9,320.3L362.7,320.3L362.3,318.6ZM364.6,322.0L365.7,324.0L364.9,324.2L364.1,322.1ZM365.7,324.0L366.8,326.2L365.7,326.5L364.9,324.2ZM366.8,326.2L367.8,328.6L366.5,328.9L365.7,326.5ZM367.8,328.6L368.8,331.1L367.3,331.4L366.5,328.9Z" fill="#afc0db" stroke="#afc0db" stroke-width="0.5"/><path d="M362.3,318.6L362.7,320.3L362.4,320.3L362.3,318.6ZM364.1,322.1L364.9,324.2L364.1,324.3L363.5,322.2ZM366.5,328.9L367.3,331.4L365.7,331.6L365.2,329.0ZM369.6,342.4L370.1,345.3L367.6,345.6L367.3,342.8Z" fill="#b0c1dc" stroke="#b0c1dc" stroke-width="0.5"/><path d="M362.3,318.6L361.0,320.2L360.8,320.1L362.3,318.6Z" fill="#b5c4df" stroke="#b5c4df" stroke-width="0.5"/><path d="M363.5,322.2L364.1,324.3L363.3,324.4L363.0,322.3Z" fill="#b1c2dd" stroke="#b1c2dd" stroke-width="0.5"/><path d="M361.4,326.7L361.2,329.2L359.8,329.0L360.3,326.6Z" fill="#b1c2dc" stroke="#b1c2dc" stroke-width="0.5"/><path d="M357.2,326.0L356.0,328.3L354.9,327.9L356.3,325.7Z" fill="#aabbd6" stroke="#aabbd6" stroke-width="0.5"/><path d="M359.8,329.0L359.4,331.6L357.8,331.4L358.5,328.9Z" fill="#aabad6" stroke="#aabad6" stroke-width="0.5"/><path d="M357.2,328.6L356.3,331.1L354.9,330.7L356.0,328.3Z" fill="#a6b7d3" stroke="#a6b7d3" stroke-width="0.5"/><path d="M364.4,334.5L364.6,337.3L362.6,337.3L362.6,334.5Z" fill="#bfcde6" stroke="#bfcde6" stroke-width="0.5"/><path d="M362.6,334.5L362.6,337.3L360.6,337.2L360.8,334.5ZM360.8,334.5L360.6,337.2L358.6,337.1L359.0,334.3Z" fill="#c3d1ea" stroke="#c3d1ea" stroke-width="0.5"/><path d="M359.0,334.3L358.6,337.1L356.6,336.8L357.2,334.1Z" fill="#bfcee7" stroke="#bfcee7" stroke-width="0.5"/><path d="M366.6,337.1L367.0,339.9L364.8,340.1L364.6,337.3Z" fill="#bdcbe5" stroke="#bdcbe5" stroke-width="0.5"/><path d="M364.6,337.3L364.8,340.1L362.6,340.2L362.6,337.3Z" fill="#c8d5ed" stroke="#c8d5ed" stroke-width="0.5"/><path d="M362.6,337.3L362.6,340.2L360.4,340.1L360.6,337.2Z" fill="#ccd9f0" stroke="#ccd9f0" stroke-width="0.5"/><path d="M360.6,337.2L360.4,340.1L358.2,339.9L358.6,337.1Z" fill="#cad7ef" stroke="#cad7ef" stroke-width="0.5"/><path d="M358.6,337.1L358.2,339.9L356.0,339.6L356.6,336.8Z" fill="#c4d2eb" stroke="#c4d2eb" stroke-width="0.5"/><path d="M356.6,336.8L356.0,339.6L353.9,339.2L354.7,336.4ZM360.2,343.0L360.1,345.8L357.6,345.6L357.8,342.8Z" fill="#bdcce6" stroke="#bdcce6" stroke-width="0.5"/><path d="M371.2,339.2L371.9,342.0L369.6,342.4L369.1,339.6Z" fill="#aabbd7" stroke="#aabbd7" stroke-width="0.5"/><path d="M364.8,340.1L365.0,343.0L362.6,343.0L362.6,340.2Z" fill="#c5d2eb" stroke="#c5d2eb" stroke-width="0.5"/><path d="M362.6,340.2L362.6,343.0L360.2,343.0L360.4,340.1Z" fill="#c9d6ee" stroke="#c9d6ee" stroke-width="0.5"/><path d="M360.4,340.1L360.2,343.0L357.8,342.8L358.2,339.9Z" fill="#c7d4ed" stroke="#c7d4ed" stroke-width="0.5"/><path d="M358.2,339.9L357.8,342.8L355.5,342.4L356.0,339.6Z" fill="#c1cfe8" stroke="#c1cfe8" stroke-width="0.5"/><path d="M376.0,340.7L376.8,343.4L374.7,344.2L374.0,341.4Z" fill="#adbdda" stroke="#adbdda" stroke-width="0.5"/><path d="M374.0,341.4L374.7,344.2L372.4,344.8L371.9,342.0ZM375.7,349.6L376.0,352.2L373.5,352.9L373.2,350.3ZM380.6,350.4L380.8,352.9L378.6,353.9L378.4,351.4Z" fill="#a8b9d6" stroke="#a8b9d6" stroke-width="0.5"/><path d="M371.9,342.0L372.4,344.8L370.1,345.3L369.6,342.4Z" fill="#acbcd9" stroke="#acbcd9" stroke-width="0.5"/><path d="M362.6,343.0L362.6,345.9L360.1,345.8L360.2,343.0Z" fill="#becde6" stroke="#becde6" stroke-width="0.5"/><path d="M374.7,344.2L375.3,346.9L372.9,347.5L372.4,344.8ZM377.5,346.1L378.0,348.8L375.7,349.6L375.3,346.9ZM375.3,346.9L375.7,349.6L373.2,350.3L372.9,347.5Z" fill="#abbbd8" stroke="#abbbd8" stroke-width="0.5"/><path d="M370.7,350.8L370.8,353.5L368.1,353.9L368.0,351.2Z" fill="#a7b8d5" stroke="#a7b8d5" stroke-width="0.5"/><path d="M359.7,354.1L359.7,356.6L356.8,356.4L357.0,353.8Z" fill="#adbfdb" stroke="#adbfdb" stroke-width="0.5"/><path d="M357.0,353.8L356.8,356.4L354.1,356.0L354.2,353.5Z" fill="#aec0dc" stroke="#aec0dc" stroke-width="0.5"/><path d="M378.6,353.9L378.6,356.3L376.2,357.2L376.1,354.8Z" fill="#9caecd" stroke="#9caecd" stroke-width="0.5"/><path d="M376.1,354.8L376.2,357.2L373.6,357.9L373.6,355.5Z" fill="#9cadcc" stroke="#9cadcc" stroke-width="0.5"/><path d="M370.9,356.0L370.9,358.4L368.2,358.8L368.2,356.4Z" fill="#9dafce" stroke="#9dafce" stroke-width="0.5"/><path d="M346.3,353.9L346.2,356.3L343.9,355.3L344.0,352.9Z" fill="#afc1de" stroke="#afc1de" stroke-width="0.5"/></g><defs><linearGradient id="pw0" gradientUnits="userSpaceOnUse" x1="303.5" y1="250.0" x2="416.9" y2="250.0"><stop offset="0" stop-color="#8b9dbd"/><stop offset="0.55" stop-color="#93a5c4"/><stop offset="1" stop-color="#a5b6d3"/></linearGradient><clipPath id="pc0"><path d="M401.64,270.93 L399.52,272.05 L397.28,273.11 L394.94,274.10 L392.50,275.03 L389.96,275.89 L387.34,276.67 L384.64,277.38 L381.87,278.01 L379.03,278.56 L376.14,279.02 L373.20,279.41 L370.23,279.71 L367.22,279.92 L364.20,280.05 L361.16,280.09 L358.12,280.05 L355.09,279.92 L352.07,279.70 L349.08,279.40 L346.11,279.01 L343.20,278.55 L340.33,278.00 L337.51,277.36 L334.77,276.66 L332.10,275.87 L329.51,275.01 L327.01,274.08 L324.61,273.09 L322.31,272.03 L320.12,270.90 L318.04,269.72 L316.09,268.49 L314.26,267.20 L312.57,265.87 L311.01,264.49 L309.59,263.07 L308.31,261.62 L307.18,260.14 L306.20,258.63 L305.37,257.10 L304.70,255.55 L304.17,253.99 L303.81,252.42 L303.60,250.84 L303.54,249.27 L303.64,247.70 L303.89,246.13 L304.30,244.58 L304.86,243.04 L305.57,241.53 L306.42,240.04 L307.42,238.58 L308.56,237.15 L309.84,235.76 L311.25,234.41 L312.79,233.10 L314.46,231.83 L316.25,230.62 L318.15,229.46 L320.16,228.35 L322.28,227.31 L324.49,226.32 L326.80,225.40 L329.19,224.54 L331.67,223.75 L334.22,223.03 L336.83,222.38 L339.50,221.80 L342.23,221.30 L345.01,220.88 L347.82,220.53 L350.67,220.25 L353.53,220.06 L356.42,219.94 L359.32,219.90 L362.22,219.94 L365.11,220.06 L367.99,220.26 L370.85,220.53 L373.69,220.88 L376.49,221.31 L379.25,221.82 L381.96,222.39 L384.61,223.04 L387.20,223.77 L389.73,224.56 L392.17,225.42 L394.54,226.34 L396.81,227.33 L398.99,228.38 L401.07,229.48 L403.04,230.64 L404.91,231.86 L406.65,233.12 L408.27,234.43 L409.77,235.79 L411.13,237.18 L412.36,238.61 L413.45,240.07 L414.39,241.56 L415.19,243.08 L415.85,244.61 L416.35,246.16 L416.70,247.73 L416.89,249.30 L416.94,250.88 L416.82,252.45 L416.55,254.02 L416.12,255.58 L415.54,257.13 L414.81,258.66 L413.92,260.17 L412.88,261.65 L411.69,263.10 L410.36,264.52 L408.88,265.89 L407.27,267.23 L405.52,268.51 L403.64,269.75 L401.64,270.93Z"/></clipPath></defs><path d="M401.64,270.93 L399.52,272.05 L397.28,273.11 L394.94,274.10 L392.50,275.03 L389.96,275.89 L387.34,276.67 L384.64,277.38 L381.87,278.01 L379.03,278.56 L376.14,279.02 L373.20,279.41 L370.23,279.71 L367.22,279.92 L364.20,280.05 L361.16,280.09 L358.12,280.05 L355.09,279.92 L352.07,279.70 L349.08,279.40 L346.11,279.01 L343.20,278.55 L340.33,278.00 L337.51,277.36 L334.77,276.66 L332.10,275.87 L329.51,275.01 L327.01,274.08 L324.61,273.09 L322.31,272.03 L320.12,270.90 L318.04,269.72 L316.09,268.49 L314.26,267.20 L312.57,265.87 L311.01,264.49 L309.59,263.07 L308.31,261.62 L307.18,260.14 L306.20,258.63 L305.37,257.10 L304.70,255.55 L304.17,253.99 L303.81,252.42 L303.60,250.84 L303.54,249.27 L303.64,247.70 L303.89,246.13 L304.30,244.58 L304.86,243.04 L305.57,241.53 L306.42,240.04 L307.42,238.58 L308.56,237.15 L309.84,235.76 L311.25,234.41 L312.79,233.10 L314.46,231.83 L316.25,230.62 L318.15,229.46 L320.16,228.35 L322.28,227.31 L324.49,226.32 L326.80,225.40 L329.19,224.54 L331.67,223.75 L334.22,223.03 L336.83,222.38 L339.50,221.80 L342.23,221.30 L345.01,220.88 L347.82,220.53 L350.67,220.25 L353.53,220.06 L356.42,219.94 L359.32,219.90 L362.22,219.94 L365.11,220.06 L367.99,220.26 L370.85,220.53 L373.69,220.88 L376.49,221.31 L379.25,221.82 L381.96,222.39 L384.61,223.04 L387.20,223.77 L389.73,224.56 L392.17,225.42 L394.54,226.34 L396.81,227.33 L398.99,228.38 L401.07,229.48 L403.04,230.64 L404.91,231.86 L406.65,233.12 L408.27,234.43 L409.77,235.79 L411.13,237.18 L412.36,238.61 L413.45,240.07 L414.39,241.56 L415.19,243.08 L415.85,244.61 L416.35,246.16 L416.70,247.73 L416.89,249.30 L416.94,250.88 L416.82,252.45 L416.55,254.02 L416.12,255.58 L415.54,257.13 L414.81,258.66 L413.92,260.17 L412.88,261.65 L411.69,263.10 L410.36,264.52 L408.88,265.89 L407.27,267.23 L405.52,268.51 L403.64,269.75 L401.64,270.93Z" fill="url(#pw0)"/><g clip-path="url(#pc0)"><path d="M401.21,286.39 L399.10,287.52 L396.88,288.59 L394.55,289.59 L392.12,290.52 L389.60,291.38 L386.99,292.17 L384.30,292.88 L381.54,293.52 L378.72,294.07 L375.85,294.54 L372.92,294.93 L369.96,295.23 L366.98,295.44 L363.97,295.57 L360.95,295.62 L357.92,295.57 L354.91,295.44 L351.91,295.22 L348.93,294.92 L345.98,294.53 L343.08,294.06 L340.22,293.50 L337.43,292.87 L334.70,292.16 L332.04,291.37 L329.47,290.50 L326.98,289.57 L324.59,288.57 L322.31,287.50 L320.13,286.37 L318.06,285.18 L316.12,283.94 L314.30,282.64 L312.62,281.30 L311.07,279.91 L309.65,278.49 L308.38,277.02 L307.26,275.53 L306.28,274.01 L305.46,272.47 L304.79,270.91 L304.27,269.34 L303.90,267.76 L303.69,266.17 L303.64,264.59 L303.73,263.00 L303.99,261.43 L304.39,259.87 L304.95,258.32 L305.65,256.80 L306.50,255.30 L307.50,253.83 L308.63,252.39 L309.90,250.99 L311.31,249.63 L312.84,248.31 L314.50,247.03 L316.28,245.81 L318.17,244.64 L320.17,243.53 L322.27,242.48 L324.48,241.48 L326.77,240.55 L329.15,239.69 L331.62,238.90 L334.15,238.17 L336.75,237.52 L339.41,236.94 L342.13,236.43 L344.89,236.00 L347.68,235.65 L350.52,235.37 L353.37,235.18 L356.24,235.06 L359.12,235.02 L362.01,235.06 L364.89,235.18 L367.75,235.38 L370.60,235.65 L373.42,236.01 L376.21,236.44 L378.95,236.95 L381.65,237.53 L384.29,238.18 L386.86,238.91 L389.37,239.71 L391.81,240.57 L394.16,241.50 L396.42,242.50 L398.59,243.55 L400.66,244.67 L402.62,245.84 L404.47,247.06 L406.21,248.33 L407.82,249.65 L409.30,251.01 L410.66,252.42 L411.88,253.86 L412.96,255.33 L413.90,256.83 L414.70,258.35 L415.35,259.90 L415.85,261.46 L416.20,263.04 L416.39,264.62 L416.43,266.21 L416.32,267.79 L416.05,269.37 L415.62,270.95 L415.04,272.50 L414.31,274.04 L413.42,275.56 L412.39,277.05 L411.21,278.51 L409.88,279.94 L408.41,281.32 L406.81,282.67 L405.07,283.96 L403.20,285.20 L401.21,286.39Z" fill="#a6b7d3" stroke="#56647f" stroke-width="1.05"/></g><path d="M401.64,270.93 L399.52,272.05 L397.28,273.11 L394.94,274.10 L392.50,275.03 L389.96,275.89 L387.34,276.67 L384.64,277.38 L381.87,278.01 L379.03,278.56 L376.14,279.02 L373.20,279.41 L370.23,279.71 L367.22,279.92 L364.20,280.05 L361.16,280.09 L358.12,280.05 L355.09,279.92 L352.07,279.70 L349.08,279.40 L346.11,279.01 L343.20,278.55 L340.33,278.00 L337.51,277.36 L334.77,276.66 L332.10,275.87 L329.51,275.01 L327.01,274.08 L324.61,273.09 L322.31,272.03 L320.12,270.90 L318.04,269.72 L316.09,268.49 L314.26,267.20 L312.57,265.87 L311.01,264.49 L309.59,263.07 L308.31,261.62 L307.18,260.14 L306.20,258.63 L305.37,257.10 L304.70,255.55 L304.17,253.99 L303.81,252.42 L303.60,250.84 L303.54,249.27 L303.64,247.70 L303.89,246.13 L304.30,244.58 L304.86,243.04 L305.57,241.53 L306.42,240.04 L307.42,238.58 L308.56,237.15 L309.84,235.76 L311.25,234.41 L312.79,233.10 L314.46,231.83 L316.25,230.62 L318.15,229.46 L320.16,228.35 L322.28,227.31 L324.49,226.32 L326.80,225.40 L329.19,224.54 L331.67,223.75 L334.22,223.03 L336.83,222.38 L339.50,221.80 L342.23,221.30 L345.01,220.88 L347.82,220.53 L350.67,220.25 L353.53,220.06 L356.42,219.94 L359.32,219.90 L362.22,219.94 L365.11,220.06 L367.99,220.26 L370.85,220.53 L373.69,220.88 L376.49,221.31 L379.25,221.82 L381.96,222.39 L384.61,223.04 L387.20,223.77 L389.73,224.56 L392.17,225.42 L394.54,226.34 L396.81,227.33 L398.99,228.38 L401.07,229.48 L403.04,230.64 L404.91,231.86 L406.65,233.12 L408.27,234.43 L409.77,235.79 L411.13,237.18 L412.36,238.61 L413.45,240.07 L414.39,241.56 L415.19,243.08 L415.85,244.61 L416.35,246.16 L416.70,247.73 L416.89,249.30 L416.94,250.88 L416.82,252.45 L416.55,254.02 L416.12,255.58 L415.54,257.13 L414.81,258.66 L413.92,260.17 L412.88,261.65 L411.69,263.10 L410.36,264.52 L408.88,265.89 L407.27,267.23 L405.52,268.51 L403.64,269.75 L401.64,270.93Z" fill="none" stroke="#56647f" stroke-width="1.05"/><defs><linearGradient id="pw1" gradientUnits="userSpaceOnUse" x1="305.7" y1="99.7" x2="405.6" y2="99.7"><stop offset="0" stop-color="#8b9dbd"/><stop offset="0.55" stop-color="#93a5c4"/><stop offset="1" stop-color="#a5b6d3"/></linearGradient><clipPath id="pc1"><path d="M392.00,116.05 L390.13,116.92 L388.16,117.74 L386.09,118.51 L383.94,119.23 L381.70,119.89 L379.39,120.49 L377.01,121.04 L374.57,121.53 L372.07,121.95 L369.53,122.31 L366.95,122.61 L364.33,122.84 L361.69,123.01 L359.03,123.11 L356.36,123.14 L353.68,123.11 L351.02,123.00 L348.36,122.84 L345.73,122.60 L343.13,122.31 L340.56,121.94 L338.04,121.52 L335.57,121.03 L333.16,120.48 L330.81,119.87 L328.53,119.21 L326.33,118.49 L324.22,117.72 L322.20,116.90 L320.27,116.03 L318.45,115.11 L316.73,114.16 L315.12,113.16 L313.62,112.13 L312.25,111.06 L311.00,109.96 L309.87,108.84 L308.88,107.69 L308.01,106.52 L307.28,105.33 L306.68,104.12 L306.22,102.91 L305.89,101.69 L305.70,100.47 L305.65,99.24 L305.74,98.02 L305.96,96.80 L306.32,95.60 L306.81,94.40 L307.43,93.22 L308.18,92.06 L309.06,90.92 L310.07,89.81 L311.19,88.73 L312.44,87.67 L313.80,86.65 L315.27,85.67 L316.85,84.72 L318.53,83.81 L320.30,82.95 L322.17,82.13 L324.13,81.36 L326.17,80.64 L328.29,79.97 L330.47,79.36 L332.73,78.80 L335.04,78.29 L337.40,77.84 L339.82,77.45 L342.27,77.11 L344.76,76.84 L347.27,76.63 L349.81,76.47 L352.36,76.38 L354.92,76.35 L357.49,76.38 L360.04,76.48 L362.59,76.63 L365.12,76.85 L367.62,77.12 L370.10,77.46 L372.53,77.85 L374.93,78.30 L377.27,78.81 L379.56,79.37 L381.78,79.99 L383.94,80.66 L386.02,81.38 L388.03,82.15 L389.95,82.97 L391.78,83.84 L393.51,84.74 L395.15,85.69 L396.68,86.68 L398.10,87.70 L399.41,88.75 L400.60,89.84 L401.68,90.95 L402.63,92.09 L403.45,93.25 L404.14,94.43 L404.71,95.63 L405.14,96.83 L405.44,98.05 L405.60,99.27 L405.62,100.50 L405.51,101.72 L405.26,102.94 L404.87,104.15 L404.34,105.36 L403.68,106.54 L402.89,107.71 L401.96,108.86 L400.91,109.99 L399.72,111.09 L398.41,112.15 L396.98,113.18 L395.43,114.18 L393.77,115.14 L392.00,116.05Z"/></clipPath></defs><path d="M392.00,116.05 L390.13,116.92 L388.16,117.74 L386.09,118.51 L383.94,119.23 L381.70,119.89 L379.39,120.49 L377.01,121.04 L374.57,121.53 L372.07,121.95 L369.53,122.31 L366.95,122.61 L364.33,122.84 L361.69,123.01 L359.03,123.11 L356.36,123.14 L353.68,123.11 L351.02,123.00 L348.36,122.84 L345.73,122.60 L343.13,122.31 L340.56,121.94 L338.04,121.52 L335.57,121.03 L333.16,120.48 L330.81,119.87 L328.53,119.21 L326.33,118.49 L324.22,117.72 L322.20,116.90 L320.27,116.03 L318.45,115.11 L316.73,114.16 L315.12,113.16 L313.62,112.13 L312.25,111.06 L311.00,109.96 L309.87,108.84 L308.88,107.69 L308.01,106.52 L307.28,105.33 L306.68,104.12 L306.22,102.91 L305.89,101.69 L305.70,100.47 L305.65,99.24 L305.74,98.02 L305.96,96.80 L306.32,95.60 L306.81,94.40 L307.43,93.22 L308.18,92.06 L309.06,90.92 L310.07,89.81 L311.19,88.73 L312.44,87.67 L313.80,86.65 L315.27,85.67 L316.85,84.72 L318.53,83.81 L320.30,82.95 L322.17,82.13 L324.13,81.36 L326.17,80.64 L328.29,79.97 L330.47,79.36 L332.73,78.80 L335.04,78.29 L337.40,77.84 L339.82,77.45 L342.27,77.11 L344.76,76.84 L347.27,76.63 L349.81,76.47 L352.36,76.38 L354.92,76.35 L357.49,76.38 L360.04,76.48 L362.59,76.63 L365.12,76.85 L367.62,77.12 L370.10,77.46 L372.53,77.85 L374.93,78.30 L377.27,78.81 L379.56,79.37 L381.78,79.99 L383.94,80.66 L386.02,81.38 L388.03,82.15 L389.95,82.97 L391.78,83.84 L393.51,84.74 L395.15,85.69 L396.68,86.68 L398.10,87.70 L399.41,88.75 L400.60,89.84 L401.68,90.95 L402.63,92.09 L403.45,93.25 L404.14,94.43 L404.71,95.63 L405.14,96.83 L405.44,98.05 L405.60,99.27 L405.62,100.50 L405.51,101.72 L405.26,102.94 L404.87,104.15 L404.34,105.36 L403.68,106.54 L402.89,107.71 L401.96,108.86 L400.91,109.99 L399.72,111.09 L398.41,112.15 L396.98,113.18 L395.43,114.18 L393.77,115.14 L392.00,116.05Z" fill="url(#pw1)"/><g clip-path="url(#pc1)"><path d="M391.67,130.40 L389.81,131.27 L387.84,132.10 L385.79,132.88 L383.64,133.60 L381.42,134.27 L379.12,134.88 L376.75,135.43 L374.32,135.92 L371.83,136.35 L369.30,136.71 L366.73,137.01 L364.13,137.24 L361.50,137.41 L358.85,137.51 L356.19,137.54 L353.53,137.51 L350.88,137.41 L348.24,137.24 L345.62,137.00 L343.03,136.70 L340.47,136.34 L337.96,135.91 L335.50,135.42 L333.10,134.86 L330.76,134.25 L328.50,133.58 L326.31,132.86 L324.21,132.08 L322.20,131.25 L320.28,130.38 L318.46,129.46 L316.75,128.49 L315.15,127.49 L313.66,126.44 L312.29,125.37 L311.05,124.26 L309.93,123.13 L308.94,121.97 L308.07,120.79 L307.34,119.59 L306.75,118.38 L306.29,117.16 L305.96,115.93 L305.78,114.69 L305.73,113.46 L305.81,112.22 L306.03,111.00 L306.39,109.78 L306.88,108.58 L307.50,107.39 L308.24,106.22 L309.12,105.07 L310.12,103.95 L311.24,102.86 L312.48,101.79 L313.84,100.77 L315.30,99.77 L316.87,98.82 L318.54,97.91 L320.31,97.04 L322.17,96.21 L324.12,95.44 L326.15,94.71 L328.26,94.03 L330.43,93.41 L332.67,92.85 L334.98,92.33 L337.33,91.88 L339.73,91.49 L342.17,91.15 L344.65,90.87 L347.15,90.66 L349.68,90.50 L352.22,90.41 L354.77,90.38 L357.32,90.41 L359.87,90.51 L362.40,90.66 L364.92,90.88 L367.41,91.16 L369.88,91.49 L372.30,91.89 L374.68,92.35 L377.02,92.86 L379.29,93.43 L381.51,94.05 L383.65,94.73 L385.73,95.45 L387.72,96.23 L389.63,97.06 L391.45,97.93 L393.18,98.84 L394.81,99.80 L396.33,100.79 L397.75,101.82 L399.05,102.88 L400.24,103.98 L401.31,105.10 L402.25,106.25 L403.07,107.42 L403.76,108.61 L404.32,109.81 L404.75,111.03 L405.05,112.25 L405.21,113.49 L405.23,114.72 L405.11,115.96 L404.86,117.19 L404.48,118.41 L403.96,119.62 L403.30,120.82 L402.51,122.00 L401.58,123.15 L400.53,124.29 L399.35,125.39 L398.05,126.47 L396.63,127.51 L395.09,128.51 L393.43,129.48 L391.67,130.40Z" fill="#a6b7d3" stroke="#56647f" stroke-width="1.05"/></g><path d="M392.00,116.05 L390.13,116.92 L388.16,117.74 L386.09,118.51 L383.94,119.23 L381.70,119.89 L379.39,120.49 L377.01,121.04 L374.57,121.53 L372.07,121.95 L369.53,122.31 L366.95,122.61 L364.33,122.84 L361.69,123.01 L359.03,123.11 L356.36,123.14 L353.68,123.11 L351.02,123.00 L348.36,122.84 L345.73,122.60 L343.13,122.31 L340.56,121.94 L338.04,121.52 L335.57,121.03 L333.16,120.48 L330.81,119.87 L328.53,119.21 L326.33,118.49 L324.22,117.72 L322.20,116.90 L320.27,116.03 L318.45,115.11 L316.73,114.16 L315.12,113.16 L313.62,112.13 L312.25,111.06 L311.00,109.96 L309.87,108.84 L308.88,107.69 L308.01,106.52 L307.28,105.33 L306.68,104.12 L306.22,102.91 L305.89,101.69 L305.70,100.47 L305.65,99.24 L305.74,98.02 L305.96,96.80 L306.32,95.60 L306.81,94.40 L307.43,93.22 L308.18,92.06 L309.06,90.92 L310.07,89.81 L311.19,88.73 L312.44,87.67 L313.80,86.65 L315.27,85.67 L316.85,84.72 L318.53,83.81 L320.30,82.95 L322.17,82.13 L324.13,81.36 L326.17,80.64 L328.29,79.97 L330.47,79.36 L332.73,78.80 L335.04,78.29 L337.40,77.84 L339.82,77.45 L342.27,77.11 L344.76,76.84 L347.27,76.63 L349.81,76.47 L352.36,76.38 L354.92,76.35 L357.49,76.38 L360.04,76.48 L362.59,76.63 L365.12,76.85 L367.62,77.12 L370.10,77.46 L372.53,77.85 L374.93,78.30 L377.27,78.81 L379.56,79.37 L381.78,79.99 L383.94,80.66 L386.02,81.38 L388.03,82.15 L389.95,82.97 L391.78,83.84 L393.51,84.74 L395.15,85.69 L396.68,86.68 L398.10,87.70 L399.41,88.75 L400.60,89.84 L401.68,90.95 L402.63,92.09 L403.45,93.25 L404.14,94.43 L404.71,95.63 L405.14,96.83 L405.44,98.05 L405.60,99.27 L405.62,100.50 L405.51,101.72 L405.26,102.94 L404.87,104.15 L404.34,105.36 L403.68,106.54 L402.89,107.71 L401.96,108.86 L400.91,109.99 L399.72,111.09 L398.41,112.15 L396.98,113.18 L395.43,114.18 L393.77,115.14 L392.00,116.05Z" fill="none" stroke="#56647f" stroke-width="1.05"/><defs><linearGradient id="pw2" gradientUnits="userSpaceOnUse" x1="207.9" y1="382.8" x2="207.9" y2="479.1"><stop offset="0" stop-color="#9bacca"/><stop offset="0.5" stop-color="#90a2c2"/><stop offset="1" stop-color="#889bbc"/></linearGradient><clipPath id="pc2"><path d="M243.77,454.44 L243.78,456.63 L243.69,458.76 L243.51,460.80 L243.22,462.76 L242.83,464.62 L242.35,466.39 L241.77,468.06 L241.09,469.63 L240.33,471.08 L239.47,472.42 L238.53,473.65 L237.51,474.75 L236.40,475.74 L235.22,476.59 L233.96,477.33 L232.64,477.93 L231.24,478.41 L229.79,478.75 L228.28,478.97 L226.71,479.05 L225.10,479.01 L223.44,478.83 L221.74,478.53 L220.01,478.09 L218.24,477.53 L216.45,476.85 L214.64,476.05 L212.81,475.12 L210.97,474.08 L209.12,472.92 L207.27,471.66 L205.43,470.29 L203.59,468.81 L201.76,467.23 L199.96,465.56 L198.17,463.80 L196.41,461.96 L194.68,460.03 L192.99,458.03 L191.34,455.95 L189.73,453.81 L188.17,451.62 L186.66,449.37 L185.21,447.07 L183.82,444.72 L182.49,442.35 L181.22,439.94 L180.03,437.50 L178.91,435.05 L177.86,432.59 L176.90,430.13 L176.01,427.66 L175.21,425.21 L174.50,422.76 L173.87,420.34 L173.33,417.94 L172.88,415.58 L172.53,413.25 L172.26,410.97 L172.10,408.75 L172.02,406.57 L172.05,404.47 L172.17,402.43 L172.38,400.46 L172.69,398.58 L173.09,396.77 L173.59,395.06 L174.18,393.45 L174.86,391.93 L175.64,390.52 L176.50,389.21 L177.44,388.02 L178.48,386.94 L179.59,385.98 L180.78,385.15 L182.05,384.43 L183.39,383.85 L184.79,383.39 L186.27,383.06 L187.80,382.87 L189.40,382.81 L191.04,382.88 L192.74,383.09 L194.48,383.43 L196.25,383.90 L198.07,384.51 L199.91,385.24 L201.78,386.11 L203.66,387.10 L205.56,388.22 L207.47,389.46 L209.38,390.81 L211.28,392.29 L213.18,393.87 L215.07,395.56 L216.93,397.35 L218.78,399.24 L220.59,401.22 L222.36,403.28 L224.10,405.43 L225.79,407.65 L227.42,409.93 L229.01,412.28 L230.53,414.68 L231.99,417.13 L233.38,419.61 L234.69,422.13 L235.93,424.68 L237.09,427.24 L238.16,429.81 L239.15,432.38 L240.05,434.95 L240.86,437.51 L241.57,440.04 L242.18,442.55 L242.70,445.02 L243.12,447.46 L243.44,449.84 L243.65,452.17 L243.77,454.44Z"/></clipPath></defs><path d="M243.77,454.44 L243.78,456.63 L243.69,458.76 L243.51,460.80 L243.22,462.76 L242.83,464.62 L242.35,466.39 L241.77,468.06 L241.09,469.63 L240.33,471.08 L239.47,472.42 L238.53,473.65 L237.51,474.75 L236.40,475.74 L235.22,476.59 L233.96,477.33 L232.64,477.93 L231.24,478.41 L229.79,478.75 L228.28,478.97 L226.71,479.05 L225.10,479.01 L223.44,478.83 L221.74,478.53 L220.01,478.09 L218.24,477.53 L216.45,476.85 L214.64,476.05 L212.81,475.12 L210.97,474.08 L209.12,472.92 L207.27,471.66 L205.43,470.29 L203.59,468.81 L201.76,467.23 L199.96,465.56 L198.17,463.80 L196.41,461.96 L194.68,460.03 L192.99,458.03 L191.34,455.95 L189.73,453.81 L188.17,451.62 L186.66,449.37 L185.21,447.07 L183.82,444.72 L182.49,442.35 L181.22,439.94 L180.03,437.50 L178.91,435.05 L177.86,432.59 L176.90,430.13 L176.01,427.66 L175.21,425.21 L174.50,422.76 L173.87,420.34 L173.33,417.94 L172.88,415.58 L172.53,413.25 L172.26,410.97 L172.10,408.75 L172.02,406.57 L172.05,404.47 L172.17,402.43 L172.38,400.46 L172.69,398.58 L173.09,396.77 L173.59,395.06 L174.18,393.45 L174.86,391.93 L175.64,390.52 L176.50,389.21 L177.44,388.02 L178.48,386.94 L179.59,385.98 L180.78,385.15 L182.05,384.43 L183.39,383.85 L184.79,383.39 L186.27,383.06 L187.80,382.87 L189.40,382.81 L191.04,382.88 L192.74,383.09 L194.48,383.43 L196.25,383.90 L198.07,384.51 L199.91,385.24 L201.78,386.11 L203.66,387.10 L205.56,388.22 L207.47,389.46 L209.38,390.81 L211.28,392.29 L213.18,393.87 L215.07,395.56 L216.93,397.35 L218.78,399.24 L220.59,401.22 L222.36,403.28 L224.10,405.43 L225.79,407.65 L227.42,409.93 L229.01,412.28 L230.53,414.68 L231.99,417.13 L233.38,419.61 L234.69,422.13 L235.93,424.68 L237.09,427.24 L238.16,429.81 L239.15,432.38 L240.05,434.95 L240.86,437.51 L241.57,440.04 L242.18,442.55 L242.70,445.02 L243.12,447.46 L243.44,449.84 L243.65,452.17 L243.77,454.44Z" fill="url(#pw2)"/><g clip-path="url(#pc2)"><path d="M256.33,446.94 L256.33,449.13 L256.24,451.25 L256.04,453.29 L255.74,455.24 L255.34,457.11 L254.85,458.88 L254.26,460.54 L253.57,462.11 L252.80,463.56 L251.93,464.91 L250.98,466.13 L249.95,467.24 L248.84,468.23 L247.64,469.09 L246.38,469.83 L245.05,470.44 L243.65,470.92 L242.19,471.27 L240.67,471.50 L239.10,471.59 L237.48,471.55 L235.81,471.38 L234.11,471.09 L232.37,470.67 L230.60,470.12 L228.81,469.44 L226.99,468.65 L225.16,467.74 L223.32,466.71 L221.47,465.56 L219.62,464.31 L217.78,462.95 L215.94,461.48 L214.11,459.92 L212.31,458.26 L210.53,456.52 L208.77,454.68 L207.04,452.77 L205.35,450.78 L203.71,448.72 L202.10,446.59 L200.55,444.41 L199.04,442.17 L197.60,439.88 L196.21,437.55 L194.89,435.18 L193.63,432.78 L192.45,430.36 L191.33,427.92 L190.30,425.47 L189.34,423.02 L188.46,420.56 L187.67,418.11 L186.96,415.68 L186.35,413.26 L185.82,410.87 L185.38,408.52 L185.04,406.20 L184.78,403.93 L184.63,401.70 L184.57,399.54 L184.60,397.43 L184.73,395.40 L184.95,393.43 L185.27,391.55 L185.69,389.75 L186.20,388.04 L186.80,386.43 L187.49,384.91 L188.27,383.50 L189.14,382.19 L190.10,381.00 L191.14,379.91 L192.26,378.95 L193.46,378.11 L194.74,377.39 L196.08,376.80 L197.50,376.34 L198.98,376.01 L200.52,375.81 L202.12,375.74 L203.77,375.80 L205.47,376.00 L207.22,376.33 L209.00,376.79 L210.82,377.39 L212.66,378.11 L214.53,378.97 L216.42,379.95 L218.32,381.06 L220.22,382.28 L222.13,383.63 L224.04,385.09 L225.94,386.66 L227.82,388.34 L229.69,390.11 L231.52,391.99 L233.33,393.95 L235.10,396.01 L236.83,398.14 L238.52,400.34 L240.15,402.62 L241.73,404.95 L243.24,407.34 L244.69,409.77 L246.08,412.24 L247.38,414.75 L248.61,417.28 L249.76,419.83 L250.83,422.39 L251.81,424.95 L252.70,427.51 L253.49,430.06 L254.19,432.59 L254.80,435.09 L255.31,437.55 L255.71,439.98 L256.02,442.35 L256.23,444.67 L256.33,446.94Z" fill="#a1b2d0" stroke="#56647f" stroke-width="1.05"/></g><path d="M243.77,454.44 L243.78,456.63 L243.69,458.76 L243.51,460.80 L243.22,462.76 L242.83,464.62 L242.35,466.39 L241.77,468.06 L241.09,469.63 L240.33,471.08 L239.47,472.42 L238.53,473.65 L237.51,474.75 L236.40,475.74 L235.22,476.59 L233.96,477.33 L232.64,477.93 L231.24,478.41 L229.79,478.75 L228.28,478.97 L226.71,479.05 L225.10,479.01 L223.44,478.83 L221.74,478.53 L220.01,478.09 L218.24,477.53 L216.45,476.85 L214.64,476.05 L212.81,475.12 L210.97,474.08 L209.12,472.92 L207.27,471.66 L205.43,470.29 L203.59,468.81 L201.76,467.23 L199.96,465.56 L198.17,463.80 L196.41,461.96 L194.68,460.03 L192.99,458.03 L191.34,455.95 L189.73,453.81 L188.17,451.62 L186.66,449.37 L185.21,447.07 L183.82,444.72 L182.49,442.35 L181.22,439.94 L180.03,437.50 L178.91,435.05 L177.86,432.59 L176.90,430.13 L176.01,427.66 L175.21,425.21 L174.50,422.76 L173.87,420.34 L173.33,417.94 L172.88,415.58 L172.53,413.25 L172.26,410.97 L172.10,408.75 L172.02,406.57 L172.05,404.47 L172.17,402.43 L172.38,400.46 L172.69,398.58 L173.09,396.77 L173.59,395.06 L174.18,393.45 L174.86,391.93 L175.64,390.52 L176.50,389.21 L177.44,388.02 L178.48,386.94 L179.59,385.98 L180.78,385.15 L182.05,384.43 L183.39,383.85 L184.79,383.39 L186.27,383.06 L187.80,382.87 L189.40,382.81 L191.04,382.88 L192.74,383.09 L194.48,383.43 L196.25,383.90 L198.07,384.51 L199.91,385.24 L201.78,386.11 L203.66,387.10 L205.56,388.22 L207.47,389.46 L209.38,390.81 L211.28,392.29 L213.18,393.87 L215.07,395.56 L216.93,397.35 L218.78,399.24 L220.59,401.22 L222.36,403.28 L224.10,405.43 L225.79,407.65 L227.42,409.93 L229.01,412.28 L230.53,414.68 L231.99,417.13 L233.38,419.61 L234.69,422.13 L235.93,424.68 L237.09,427.24 L238.16,429.81 L239.15,432.38 L240.05,434.95 L240.86,437.51 L241.57,440.04 L242.18,442.55 L242.70,445.02 L243.12,447.46 L243.44,449.84 L243.65,452.17 L243.77,454.44Z" fill="none" stroke="#56647f" stroke-width="1.05"/><defs><linearGradient id="pw3" gradientUnits="userSpaceOnUse" x1="583.0" y1="251.7" x2="583.0" y2="349.6"><stop offset="0" stop-color="#8799b9"/><stop offset="0.45" stop-color="#9eb0ce"/><stop offset="0.75" stop-color="#93a5c4"/><stop offset="1" stop-color="#a4b6d4"/></linearGradient><clipPath id="pc3"><path d="M549.45,322.12 L549.69,319.75 L550.02,317.32 L550.44,314.85 L550.96,312.33 L551.57,309.77 L552.27,307.19 L553.06,304.59 L553.93,301.97 L554.89,299.36 L555.92,296.74 L557.04,294.13 L558.23,291.55 L559.49,288.99 L560.82,286.46 L562.21,283.97 L563.66,281.53 L565.17,279.14 L566.72,276.82 L568.33,274.57 L569.97,272.39 L571.65,270.29 L573.37,268.28 L575.11,266.36 L576.87,264.54 L578.65,262.83 L580.44,261.22 L582.24,259.73 L584.03,258.36 L585.83,257.10 L587.61,255.97 L589.38,254.97 L591.13,254.10 L592.86,253.36 L594.55,252.75 L596.21,252.28 L597.84,251.94 L599.42,251.74 L600.95,251.68 L602.43,251.75 L603.86,251.96 L605.22,252.30 L606.52,252.78 L607.76,253.39 L608.93,254.13 L610.02,254.99 L611.04,255.98 L611.99,257.09 L612.85,258.31 L613.63,259.65 L614.32,261.10 L614.93,262.66 L615.46,264.32 L615.89,266.07 L616.24,267.91 L616.49,269.84 L616.66,271.85 L616.74,273.94 L616.73,276.09 L616.62,278.31 L616.43,280.59 L616.15,282.92 L615.78,285.29 L615.33,287.70 L614.79,290.15 L614.16,292.62 L613.46,295.11 L612.67,297.61 L611.81,300.12 L610.87,302.63 L609.86,305.14 L608.78,307.63 L607.63,310.10 L606.42,312.55 L605.14,314.97 L603.81,317.35 L602.42,319.69 L600.98,321.97 L599.50,324.20 L597.97,326.37 L596.40,328.47 L594.80,330.50 L593.16,332.46 L591.50,334.33 L589.81,336.11 L588.11,337.80 L586.39,339.39 L584.66,340.88 L582.92,342.26 L581.18,343.54 L579.45,344.70 L577.73,345.75 L576.02,346.68 L574.32,347.49 L572.65,348.17 L571.00,348.72 L569.38,349.15 L567.80,349.45 L566.26,349.61 L564.76,349.65 L563.31,349.55 L561.91,349.32 L560.57,348.96 L559.28,348.46 L558.06,347.83 L556.91,347.08 L555.82,346.20 L554.81,345.18 L553.88,344.05 L553.02,342.80 L552.25,341.42 L551.56,339.94 L550.96,338.34 L550.45,336.63 L550.03,334.82 L549.70,332.92 L549.46,330.92 L549.31,328.84 L549.26,326.67 L549.31,324.43 L549.45,322.12Z"/></clipPath></defs><path d="M549.45,322.12 L549.69,319.75 L550.02,317.32 L550.44,314.85 L550.96,312.33 L551.57,309.77 L552.27,307.19 L553.06,304.59 L553.93,301.97 L554.89,299.36 L555.92,296.74 L557.04,294.13 L558.23,291.55 L559.49,288.99 L560.82,286.46 L562.21,283.97 L563.66,281.53 L565.17,279.14 L566.72,276.82 L568.33,274.57 L569.97,272.39 L571.65,270.29 L573.37,268.28 L575.11,266.36 L576.87,264.54 L578.65,262.83 L580.44,261.22 L582.24,259.73 L584.03,258.36 L585.83,257.10 L587.61,255.97 L589.38,254.97 L591.13,254.10 L592.86,253.36 L594.55,252.75 L596.21,252.28 L597.84,251.94 L599.42,251.74 L600.95,251.68 L602.43,251.75 L603.86,251.96 L605.22,252.30 L606.52,252.78 L607.76,253.39 L608.93,254.13 L610.02,254.99 L611.04,255.98 L611.99,257.09 L612.85,258.31 L613.63,259.65 L614.32,261.10 L614.93,262.66 L615.46,264.32 L615.89,266.07 L616.24,267.91 L616.49,269.84 L616.66,271.85 L616.74,273.94 L616.73,276.09 L616.62,278.31 L616.43,280.59 L616.15,282.92 L615.78,285.29 L615.33,287.70 L614.79,290.15 L614.16,292.62 L613.46,295.11 L612.67,297.61 L611.81,300.12 L610.87,302.63 L609.86,305.14 L608.78,307.63 L607.63,310.10 L606.42,312.55 L605.14,314.97 L603.81,317.35 L602.42,319.69 L600.98,321.97 L599.50,324.20 L597.97,326.37 L596.40,328.47 L594.80,330.50 L593.16,332.46 L591.50,334.33 L589.81,336.11 L588.11,337.80 L586.39,339.39 L584.66,340.88 L582.92,342.26 L581.18,343.54 L579.45,344.70 L577.73,345.75 L576.02,346.68 L574.32,347.49 L572.65,348.17 L571.00,348.72 L569.38,349.15 L567.80,349.45 L566.26,349.61 L564.76,349.65 L563.31,349.55 L561.91,349.32 L560.57,348.96 L559.28,348.46 L558.06,347.83 L556.91,347.08 L555.82,346.20 L554.81,345.18 L553.88,344.05 L553.02,342.80 L552.25,341.42 L551.56,339.94 L550.96,338.34 L550.45,336.63 L550.03,334.82 L549.70,332.92 L549.46,330.92 L549.31,328.84 L549.26,326.67 L549.31,324.43 L549.45,322.12Z" fill="url(#pw3)"/><g clip-path="url(#pc3)"><path d="M536.13,315.29 L536.35,312.93 L536.67,310.51 L537.08,308.04 L537.59,305.53 L538.19,302.98 L538.88,300.41 L539.65,297.82 L540.51,295.21 L541.46,292.61 L542.49,290.00 L543.59,287.41 L544.77,284.83 L546.03,282.28 L547.35,279.77 L548.73,277.29 L550.17,274.86 L551.67,272.49 L553.23,270.18 L554.83,267.94 L556.47,265.77 L558.14,263.69 L559.86,261.69 L561.59,259.79 L563.35,257.98 L565.13,256.28 L566.92,254.69 L568.72,253.20 L570.52,251.84 L572.31,250.60 L574.09,249.48 L575.87,248.49 L577.62,247.63 L579.35,246.89 L581.05,246.30 L582.72,245.83 L584.34,245.51 L585.93,245.31 L587.47,245.26 L588.96,245.34 L590.39,245.55 L591.77,245.90 L593.08,246.38 L594.32,247.00 L595.50,247.74 L596.61,248.60 L597.64,249.59 L598.59,250.71 L599.46,251.93 L600.25,253.27 L600.96,254.72 L601.58,256.28 L602.12,257.93 L602.56,259.68 L602.92,261.53 L603.19,263.45 L603.37,265.46 L603.46,267.54 L603.46,269.69 L603.37,271.90 L603.19,274.17 L602.92,276.50 L602.56,278.86 L602.12,281.27 L601.59,283.70 L600.97,286.16 L600.28,288.65 L599.50,291.14 L598.65,293.64 L597.72,296.14 L596.72,298.64 L595.65,301.12 L594.51,303.58 L593.30,306.02 L592.03,308.43 L590.71,310.80 L589.33,313.12 L587.90,315.39 L586.42,317.61 L584.89,319.77 L583.33,321.86 L581.73,323.88 L580.09,325.82 L578.43,327.67 L576.75,329.44 L575.04,331.12 L573.32,332.70 L571.60,334.18 L569.86,335.55 L568.12,336.82 L566.39,337.97 L564.66,339.01 L562.95,339.93 L561.25,340.72 L559.57,341.39 L557.92,341.94 L556.30,342.36 L554.71,342.65 L553.16,342.81 L551.65,342.83 L550.20,342.73 L548.79,342.49 L547.44,342.12 L546.14,341.62 L544.91,340.99 L543.75,340.23 L542.66,339.34 L541.64,338.33 L540.69,337.19 L539.83,335.94 L539.04,334.56 L538.34,333.08 L537.73,331.48 L537.21,329.77 L536.77,327.97 L536.43,326.07 L536.18,324.07 L536.03,321.99 L535.96,319.83 L536.00,317.60 L536.13,315.29Z" fill="#98a9c7" stroke="#56647f" stroke-width="1.05"/></g><path d="M549.45,322.12 L549.69,319.75 L550.02,317.32 L550.44,314.85 L550.96,312.33 L551.57,309.77 L552.27,307.19 L553.06,304.59 L553.93,301.97 L554.89,299.36 L555.92,296.74 L557.04,294.13 L558.23,291.55 L559.49,288.99 L560.82,286.46 L562.21,283.97 L563.66,281.53 L565.17,279.14 L566.72,276.82 L568.33,274.57 L569.97,272.39 L571.65,270.29 L573.37,268.28 L575.11,266.36 L576.87,264.54 L578.65,262.83 L580.44,261.22 L582.24,259.73 L584.03,258.36 L585.83,257.10 L587.61,255.97 L589.38,254.97 L591.13,254.10 L592.86,253.36 L594.55,252.75 L596.21,252.28 L597.84,251.94 L599.42,251.74 L600.95,251.68 L602.43,251.75 L603.86,251.96 L605.22,252.30 L606.52,252.78 L607.76,253.39 L608.93,254.13 L610.02,254.99 L611.04,255.98 L611.99,257.09 L612.85,258.31 L613.63,259.65 L614.32,261.10 L614.93,262.66 L615.46,264.32 L615.89,266.07 L616.24,267.91 L616.49,269.84 L616.66,271.85 L616.74,273.94 L616.73,276.09 L616.62,278.31 L616.43,280.59 L616.15,282.92 L615.78,285.29 L615.33,287.70 L614.79,290.15 L614.16,292.62 L613.46,295.11 L612.67,297.61 L611.81,300.12 L610.87,302.63 L609.86,305.14 L608.78,307.63 L607.63,310.10 L606.42,312.55 L605.14,314.97 L603.81,317.35 L602.42,319.69 L600.98,321.97 L599.50,324.20 L597.97,326.37 L596.40,328.47 L594.80,330.50 L593.16,332.46 L591.50,334.33 L589.81,336.11 L588.11,337.80 L586.39,339.39 L584.66,340.88 L582.92,342.26 L581.18,343.54 L579.45,344.70 L577.73,345.75 L576.02,346.68 L574.32,347.49 L572.65,348.17 L571.00,348.72 L569.38,349.15 L567.80,349.45 L566.26,349.61 L564.76,349.65 L563.31,349.55 L561.91,349.32 L560.57,348.96 L559.28,348.46 L558.06,347.83 L556.91,347.08 L555.82,346.20 L554.81,345.18 L553.88,344.05 L553.02,342.80 L552.25,341.42 L551.56,339.94 L550.96,338.34 L550.45,336.63 L550.03,334.82 L549.70,332.92 L549.46,330.92 L549.31,328.84 L549.26,326.67 L549.31,324.43 L549.45,322.12Z" fill="none" stroke="#56647f" stroke-width="1.05"/><defs><linearGradient id="pw4" gradientUnits="userSpaceOnUse" x1="507.8" y1="382.9" x2="507.8" y2="479.1"><stop offset="0" stop-color="#8799b9"/><stop offset="0.45" stop-color="#9eb0ce"/><stop offset="0.75" stop-color="#93a5c4"/><stop offset="1" stop-color="#a4b6d4"/></linearGradient><clipPath id="pc4"><path d="M473.09,454.49 L473.27,452.23 L473.54,449.90 L473.91,447.51 L474.38,445.08 L474.94,442.61 L475.60,440.10 L476.35,437.57 L477.18,435.01 L478.11,432.44 L479.12,429.87 L480.22,427.30 L481.39,424.74 L482.64,422.20 L483.96,419.68 L485.35,417.19 L486.81,414.75 L488.32,412.35 L489.89,410.00 L491.51,407.72 L493.18,405.50 L494.89,403.35 L496.64,401.29 L498.41,399.31 L500.22,397.42 L502.04,395.63 L503.88,393.94 L505.73,392.36 L507.58,390.89 L509.43,389.53 L511.28,388.30 L513.11,387.18 L514.93,386.19 L516.73,385.32 L518.50,384.59 L520.24,383.98 L521.94,383.51 L523.60,383.17 L525.22,382.97 L526.78,382.90 L528.29,382.96 L529.75,383.15 L531.14,383.48 L532.46,383.94 L533.71,384.52 L534.90,385.24 L536.00,386.07 L537.03,387.03 L537.98,388.11 L538.85,389.31 L539.63,390.61 L540.32,392.02 L540.92,393.54 L541.44,395.16 L541.86,396.87 L542.19,398.67 L542.43,400.56 L542.58,402.52 L542.63,404.56 L542.59,406.67 L542.46,408.84 L542.24,411.07 L541.92,413.35 L541.52,415.67 L541.03,418.03 L540.45,420.43 L539.78,422.85 L539.03,425.30 L538.20,427.75 L537.29,430.22 L536.30,432.68 L535.24,435.14 L534.10,437.59 L532.90,440.02 L531.63,442.43 L530.30,444.81 L528.91,447.15 L527.46,449.45 L525.97,451.70 L524.42,453.90 L522.83,456.04 L521.20,458.11 L519.54,460.11 L517.84,462.04 L516.12,463.88 L514.37,465.64 L512.61,467.31 L510.83,468.88 L509.04,470.36 L507.25,471.73 L505.46,473.00 L503.67,474.15 L501.90,475.19 L500.13,476.12 L498.39,476.92 L496.67,477.60 L494.97,478.16 L493.32,478.59 L491.69,478.90 L490.11,479.07 L488.58,479.12 L487.09,479.03 L485.66,478.81 L484.29,478.47 L482.99,477.99 L481.74,477.39 L480.57,476.65 L479.48,475.79 L478.45,474.81 L477.51,473.71 L476.65,472.48 L475.88,471.14 L475.20,469.68 L474.60,468.12 L474.10,466.45 L473.69,464.68 L473.38,462.81 L473.16,460.86 L473.04,458.81 L473.02,456.69 L473.09,454.49Z"/></clipPath></defs><path d="M473.09,454.49 L473.27,452.23 L473.54,449.90 L473.91,447.51 L474.38,445.08 L474.94,442.61 L475.60,440.10 L476.35,437.57 L477.18,435.01 L478.11,432.44 L479.12,429.87 L480.22,427.30 L481.39,424.74 L482.64,422.20 L483.96,419.68 L485.35,417.19 L486.81,414.75 L488.32,412.35 L489.89,410.00 L491.51,407.72 L493.18,405.50 L494.89,403.35 L496.64,401.29 L498.41,399.31 L500.22,397.42 L502.04,395.63 L503.88,393.94 L505.73,392.36 L507.58,390.89 L509.43,389.53 L511.28,388.30 L513.11,387.18 L514.93,386.19 L516.73,385.32 L518.50,384.59 L520.24,383.98 L521.94,383.51 L523.60,383.17 L525.22,382.97 L526.78,382.90 L528.29,382.96 L529.75,383.15 L531.14,383.48 L532.46,383.94 L533.71,384.52 L534.90,385.24 L536.00,386.07 L537.03,387.03 L537.98,388.11 L538.85,389.31 L539.63,390.61 L540.32,392.02 L540.92,393.54 L541.44,395.16 L541.86,396.87 L542.19,398.67 L542.43,400.56 L542.58,402.52 L542.63,404.56 L542.59,406.67 L542.46,408.84 L542.24,411.07 L541.92,413.35 L541.52,415.67 L541.03,418.03 L540.45,420.43 L539.78,422.85 L539.03,425.30 L538.20,427.75 L537.29,430.22 L536.30,432.68 L535.24,435.14 L534.10,437.59 L532.90,440.02 L531.63,442.43 L530.30,444.81 L528.91,447.15 L527.46,449.45 L525.97,451.70 L524.42,453.90 L522.83,456.04 L521.20,458.11 L519.54,460.11 L517.84,462.04 L516.12,463.88 L514.37,465.64 L512.61,467.31 L510.83,468.88 L509.04,470.36 L507.25,471.73 L505.46,473.00 L503.67,474.15 L501.90,475.19 L500.13,476.12 L498.39,476.92 L496.67,477.60 L494.97,478.16 L493.32,478.59 L491.69,478.90 L490.11,479.07 L488.58,479.12 L487.09,479.03 L485.66,478.81 L484.29,478.47 L482.99,477.99 L481.74,477.39 L480.57,476.65 L479.48,475.79 L478.45,474.81 L477.51,473.71 L476.65,472.48 L475.88,471.14 L475.20,469.68 L474.60,468.12 L474.10,466.45 L473.69,464.68 L473.38,462.81 L473.16,460.86 L473.04,458.81 L473.02,456.69 L473.09,454.49Z" fill="url(#pw4)"/><g clip-path="url(#pc4)"><path d="M460.15,446.99 L460.32,444.73 L460.58,442.40 L460.94,440.03 L461.39,437.60 L461.95,435.14 L462.59,432.64 L463.33,430.11 L464.16,427.57 L465.07,425.01 L466.08,422.45 L467.16,419.89 L468.33,417.34 L469.57,414.81 L470.88,412.30 L472.27,409.83 L473.71,407.39 L475.22,405.01 L476.79,402.68 L478.40,400.40 L480.07,398.20 L481.77,396.07 L483.51,394.02 L485.29,392.05 L487.09,390.18 L488.91,388.40 L490.74,386.73 L492.59,385.16 L494.45,383.70 L496.30,382.35 L498.15,381.13 L499.98,380.02 L501.81,379.04 L503.61,378.19 L505.38,377.47 L507.12,376.87 L508.83,376.41 L510.50,376.08 L512.12,375.88 L513.69,375.82 L515.21,375.89 L516.67,376.09 L518.06,376.42 L519.40,376.89 L520.66,377.48 L521.85,378.20 L522.97,379.04 L524.01,380.00 L524.96,381.08 L525.84,382.28 L526.63,383.58 L527.33,385.00 L527.95,386.51 L528.47,388.13 L528.91,389.84 L529.25,391.64 L529.50,393.52 L529.66,395.48 L529.73,397.52 L529.70,399.62 L529.58,401.79 L529.37,404.01 L529.06,406.29 L528.67,408.60 L528.19,410.96 L527.62,413.35 L526.96,415.76 L526.22,418.20 L525.40,420.65 L524.50,423.10 L523.52,425.56 L522.46,428.01 L521.34,430.45 L520.14,432.87 L518.88,435.26 L517.56,437.63 L516.17,439.96 L514.73,442.24 L513.24,444.48 L511.70,446.67 L510.12,448.79 L508.49,450.85 L506.83,452.84 L505.14,454.76 L503.41,456.59 L501.67,458.34 L499.91,459.99 L498.13,461.55 L496.34,463.02 L494.55,464.38 L492.76,465.63 L490.97,466.77 L489.19,467.80 L487.42,468.71 L485.67,469.51 L483.95,470.18 L482.25,470.73 L480.59,471.15 L478.96,471.44 L477.37,471.61 L475.83,471.65 L474.34,471.55 L472.91,471.33 L471.53,470.98 L470.21,470.49 L468.96,469.88 L467.78,469.15 L466.67,468.28 L465.64,467.29 L464.69,466.19 L463.82,464.96 L463.04,463.62 L462.35,462.16 L461.74,460.60 L461.23,458.93 L460.81,457.16 L460.48,455.29 L460.25,453.34 L460.12,451.30 L460.09,449.18 L460.15,446.99Z" fill="#98a9c7" stroke="#56647f" stroke-width="1.05"/></g><path d="M473.09,454.49 L473.27,452.23 L473.54,449.90 L473.91,447.51 L474.38,445.08 L474.94,442.61 L475.60,440.10 L476.35,437.57 L477.18,435.01 L478.11,432.44 L479.12,429.87 L480.22,427.30 L481.39,424.74 L482.64,422.20 L483.96,419.68 L485.35,417.19 L486.81,414.75 L488.32,412.35 L489.89,410.00 L491.51,407.72 L493.18,405.50 L494.89,403.35 L496.64,401.29 L498.41,399.31 L500.22,397.42 L502.04,395.63 L503.88,393.94 L505.73,392.36 L507.58,390.89 L509.43,389.53 L511.28,388.30 L513.11,387.18 L514.93,386.19 L516.73,385.32 L518.50,384.59 L520.24,383.98 L521.94,383.51 L523.60,383.17 L525.22,382.97 L526.78,382.90 L528.29,382.96 L529.75,383.15 L531.14,383.48 L532.46,383.94 L533.71,384.52 L534.90,385.24 L536.00,386.07 L537.03,387.03 L537.98,388.11 L538.85,389.31 L539.63,390.61 L540.32,392.02 L540.92,393.54 L541.44,395.16 L541.86,396.87 L542.19,398.67 L542.43,400.56 L542.58,402.52 L542.63,404.56 L542.59,406.67 L542.46,408.84 L542.24,411.07 L541.92,413.35 L541.52,415.67 L541.03,418.03 L540.45,420.43 L539.78,422.85 L539.03,425.30 L538.20,427.75 L537.29,430.22 L536.30,432.68 L535.24,435.14 L534.10,437.59 L532.90,440.02 L531.63,442.43 L530.30,444.81 L528.91,447.15 L527.46,449.45 L525.97,451.70 L524.42,453.90 L522.83,456.04 L521.20,458.11 L519.54,460.11 L517.84,462.04 L516.12,463.88 L514.37,465.64 L512.61,467.31 L510.83,468.88 L509.04,470.36 L507.25,471.73 L505.46,473.00 L503.67,474.15 L501.90,475.19 L500.13,476.12 L498.39,476.92 L496.67,477.60 L494.97,478.16 L493.32,478.59 L491.69,478.90 L490.11,479.07 L488.58,479.12 L487.09,479.03 L485.66,478.81 L484.29,478.47 L482.99,477.99 L481.74,477.39 L480.57,476.65 L479.48,475.79 L478.45,474.81 L477.51,473.71 L476.65,472.48 L475.88,471.14 L475.20,469.68 L474.60,468.12 L474.10,466.45 L473.69,464.68 L473.38,462.81 L473.16,460.86 L473.04,458.81 L473.02,456.69 L473.09,454.49Z" fill="none" stroke="#56647f" stroke-width="1.05"/><defs><linearGradient id="pw5" gradientUnits="userSpaceOnUse" x1="432.6" y1="514.0" x2="432.6" y2="608.8"><stop offset="0" stop-color="#8799b9"/><stop offset="0.45" stop-color="#9eb0ce"/><stop offset="0.75" stop-color="#93a5c4"/><stop offset="1" stop-color="#a4b6d4"/></linearGradient><clipPath id="pc5"><path d="M396.68,586.95 L396.80,584.79 L397.01,582.56 L397.33,580.27 L397.74,577.93 L398.26,575.54 L398.87,573.10 L399.58,570.63 L400.39,568.13 L401.29,565.62 L402.27,563.09 L403.35,560.55 L404.50,558.02 L405.74,555.50 L407.06,552.99 L408.45,550.51 L409.91,548.05 L411.43,545.64 L413.01,543.27 L414.65,540.96 L416.34,538.70 L418.08,536.51 L419.85,534.39 L421.67,532.35 L423.51,530.40 L425.38,528.53 L427.26,526.76 L429.16,525.08 L431.07,523.52 L432.99,522.06 L434.90,520.71 L436.80,519.48 L438.69,518.37 L440.55,517.38 L442.40,516.52 L444.22,515.78 L446.00,515.17 L447.74,514.69 L449.44,514.34 L451.09,514.13 L452.68,514.04 L454.22,514.09 L455.70,514.27 L457.11,514.57 L458.45,515.01 L459.72,515.57 L460.92,516.26 L462.03,517.07 L463.06,518.00 L464.02,519.04 L464.88,520.20 L465.65,521.47 L466.34,522.85 L466.93,524.33 L467.43,525.91 L467.84,527.58 L468.15,529.34 L468.37,531.19 L468.49,533.11 L468.52,535.11 L468.44,537.17 L468.28,539.30 L468.02,541.49 L467.67,543.73 L467.22,546.01 L466.68,548.33 L466.06,550.68 L465.34,553.07 L464.54,555.47 L463.66,557.89 L462.69,560.31 L461.65,562.74 L460.53,565.16 L459.34,567.58 L458.07,569.98 L456.74,572.35 L455.35,574.70 L453.90,577.01 L452.39,579.28 L450.83,581.51 L449.22,583.68 L447.56,585.79 L445.87,587.85 L444.14,589.83 L442.38,591.74 L440.59,593.57 L438.78,595.32 L436.96,596.97 L435.12,598.54 L433.27,600.01 L431.42,601.37 L429.57,602.64 L427.73,603.79 L425.90,604.83 L424.08,605.76 L422.29,606.57 L420.52,607.25 L418.78,607.82 L417.08,608.26 L415.42,608.58 L413.80,608.77 L412.23,608.83 L410.71,608.76 L409.26,608.56 L407.86,608.24 L406.53,607.78 L405.27,607.20 L404.09,606.49 L402.98,605.66 L401.95,604.70 L401.01,603.63 L400.15,602.43 L399.38,601.12 L398.70,599.70 L398.12,598.17 L397.63,596.53 L397.24,594.80 L396.95,592.96 L396.76,591.04 L396.67,589.04 L396.68,586.95Z"/></clipPath></defs><path d="M396.68,586.95 L396.80,584.79 L397.01,582.56 L397.33,580.27 L397.74,577.93 L398.26,575.54 L398.87,573.10 L399.58,570.63 L400.39,568.13 L401.29,565.62 L402.27,563.09 L403.35,560.55 L404.50,558.02 L405.74,555.50 L407.06,552.99 L408.45,550.51 L409.91,548.05 L411.43,545.64 L413.01,543.27 L414.65,540.96 L416.34,538.70 L418.08,536.51 L419.85,534.39 L421.67,532.35 L423.51,530.40 L425.38,528.53 L427.26,526.76 L429.16,525.08 L431.07,523.52 L432.99,522.06 L434.90,520.71 L436.80,519.48 L438.69,518.37 L440.55,517.38 L442.40,516.52 L444.22,515.78 L446.00,515.17 L447.74,514.69 L449.44,514.34 L451.09,514.13 L452.68,514.04 L454.22,514.09 L455.70,514.27 L457.11,514.57 L458.45,515.01 L459.72,515.57 L460.92,516.26 L462.03,517.07 L463.06,518.00 L464.02,519.04 L464.88,520.20 L465.65,521.47 L466.34,522.85 L466.93,524.33 L467.43,525.91 L467.84,527.58 L468.15,529.34 L468.37,531.19 L468.49,533.11 L468.52,535.11 L468.44,537.17 L468.28,539.30 L468.02,541.49 L467.67,543.73 L467.22,546.01 L466.68,548.33 L466.06,550.68 L465.34,553.07 L464.54,555.47 L463.66,557.89 L462.69,560.31 L461.65,562.74 L460.53,565.16 L459.34,567.58 L458.07,569.98 L456.74,572.35 L455.35,574.70 L453.90,577.01 L452.39,579.28 L450.83,581.51 L449.22,583.68 L447.56,585.79 L445.87,587.85 L444.14,589.83 L442.38,591.74 L440.59,593.57 L438.78,595.32 L436.96,596.97 L435.12,598.54 L433.27,600.01 L431.42,601.37 L429.57,602.64 L427.73,603.79 L425.90,604.83 L424.08,605.76 L422.29,606.57 L420.52,607.25 L418.78,607.82 L417.08,608.26 L415.42,608.58 L413.80,608.77 L412.23,608.83 L410.71,608.76 L409.26,608.56 L407.86,608.24 L406.53,607.78 L405.27,607.20 L404.09,606.49 L402.98,605.66 L401.95,604.70 L401.01,603.63 L400.15,602.43 L399.38,601.12 L398.70,599.70 L398.12,598.17 L397.63,596.53 L397.24,594.80 L396.95,592.96 L396.76,591.04 L396.67,589.04 L396.68,586.95Z" fill="url(#pw5)"/><g clip-path="url(#pc5)"><path d="M384.13,578.77 L384.23,576.61 L384.44,574.39 L384.74,572.11 L385.15,569.77 L385.65,567.38 L386.25,564.96 L386.96,562.49 L387.75,560.01 L388.64,557.50 L389.62,554.98 L390.68,552.46 L391.83,549.93 L393.06,547.42 L394.37,544.93 L395.75,542.46 L397.20,540.02 L398.72,537.62 L400.29,535.26 L401.93,532.96 L403.61,530.72 L405.34,528.54 L407.12,526.44 L408.93,524.41 L410.77,522.47 L412.63,520.62 L414.52,518.86 L416.42,517.20 L418.33,515.65 L420.24,514.20 L422.15,512.87 L424.05,511.65 L425.94,510.55 L427.81,509.57 L429.66,508.72 L431.48,508.00 L433.26,507.40 L435.01,506.93 L436.71,506.59 L438.37,506.39 L439.97,506.31 L441.52,506.36 L443.00,506.55 L444.42,506.86 L445.77,507.31 L447.05,507.87 L448.25,508.57 L449.37,509.38 L450.42,510.32 L451.38,511.37 L452.25,512.53 L453.04,513.80 L453.73,515.18 L454.34,516.66 L454.85,518.24 L455.26,519.91 L455.59,521.67 L455.81,523.51 L455.95,525.43 L455.98,527.43 L455.92,529.49 L455.77,531.61 L455.52,533.79 L455.17,536.03 L454.74,538.30 L454.21,540.62 L453.60,542.96 L452.89,545.34 L452.10,547.73 L451.22,550.14 L450.27,552.56 L449.23,554.98 L448.12,557.39 L446.93,559.79 L445.68,562.18 L444.36,564.54 L442.97,566.88 L441.52,569.18 L440.02,571.44 L438.46,573.65 L436.86,575.81 L435.21,577.91 L433.52,579.95 L431.79,581.92 L430.03,583.81 L428.25,585.63 L426.44,587.37 L424.61,589.01 L422.78,590.56 L420.93,592.02 L419.08,593.37 L417.23,594.62 L415.38,595.76 L413.55,596.79 L411.73,597.70 L409.93,598.50 L408.16,599.18 L406.42,599.73 L404.71,600.16 L403.05,600.47 L401.42,600.65 L399.85,600.70 L398.33,600.62 L396.86,600.42 L395.46,600.08 L394.12,599.62 L392.86,599.03 L391.66,598.32 L390.54,597.48 L389.51,596.52 L388.55,595.44 L387.69,594.24 L386.91,592.93 L386.22,591.50 L385.63,589.97 L385.13,588.34 L384.73,586.60 L384.43,584.77 L384.23,582.85 L384.13,580.85 L384.13,578.77Z" fill="#98a9c7" stroke="#56647f" stroke-width="1.05"/></g><path d="M396.68,586.95 L396.80,584.79 L397.01,582.56 L397.33,580.27 L397.74,577.93 L398.26,575.54 L398.87,573.10 L399.58,570.63 L400.39,568.13 L401.29,565.62 L402.27,563.09 L403.35,560.55 L404.50,558.02 L405.74,555.50 L407.06,552.99 L408.45,550.51 L409.91,548.05 L411.43,545.64 L413.01,543.27 L414.65,540.96 L416.34,538.70 L418.08,536.51 L419.85,534.39 L421.67,532.35 L423.51,530.40 L425.38,528.53 L427.26,526.76 L429.16,525.08 L431.07,523.52 L432.99,522.06 L434.90,520.71 L436.80,519.48 L438.69,518.37 L440.55,517.38 L442.40,516.52 L444.22,515.78 L446.00,515.17 L447.74,514.69 L449.44,514.34 L451.09,514.13 L452.68,514.04 L454.22,514.09 L455.70,514.27 L457.11,514.57 L458.45,515.01 L459.72,515.57 L460.92,516.26 L462.03,517.07 L463.06,518.00 L464.02,519.04 L464.88,520.20 L465.65,521.47 L466.34,522.85 L466.93,524.33 L467.43,525.91 L467.84,527.58 L468.15,529.34 L468.37,531.19 L468.49,533.11 L468.52,535.11 L468.44,537.17 L468.28,539.30 L468.02,541.49 L467.67,543.73 L467.22,546.01 L466.68,548.33 L466.06,550.68 L465.34,553.07 L464.54,555.47 L463.66,557.89 L462.69,560.31 L461.65,562.74 L460.53,565.16 L459.34,567.58 L458.07,569.98 L456.74,572.35 L455.35,574.70 L453.90,577.01 L452.39,579.28 L450.83,581.51 L449.22,583.68 L447.56,585.79 L445.87,587.85 L444.14,589.83 L442.38,591.74 L440.59,593.57 L438.78,595.32 L436.96,596.97 L435.12,598.54 L433.27,600.01 L431.42,601.37 L429.57,602.64 L427.73,603.79 L425.90,604.83 L424.08,605.76 L422.29,606.57 L420.52,607.25 L418.78,607.82 L417.08,608.26 L415.42,608.58 L413.80,608.77 L412.23,608.83 L410.71,608.76 L409.26,608.56 L407.86,608.24 L406.53,607.78 L405.27,607.20 L404.09,606.49 L402.98,605.66 L401.95,604.70 L401.01,603.63 L400.15,602.43 L399.38,601.12 L398.70,599.70 L398.12,598.17 L397.63,596.53 L397.24,594.80 L396.95,592.96 L396.76,591.04 L396.67,589.04 L396.68,586.95Z" fill="none" stroke="#56647f" stroke-width="1.05"/><path d="M99.60,492.97 L105.02,496.74 L110.46,500.54 L115.93,504.36 L121.43,508.19 L126.95,512.04 L132.50,515.92 L138.08,519.81 L143.69,523.73 L149.33,527.66 L155.00,531.61 L160.69,535.59 L166.42,539.58 L172.17,543.59 L177.96,547.63 L183.77,551.68 L189.61,555.76 L195.49,559.86 L201.39,563.98 L207.33,568.12 L213.30,572.28 L219.30,576.47 L225.33,580.68 L231.39,584.91 L237.48,589.16 L243.61,593.43 L249.77,597.73 L255.96,602.05 L262.18,606.39 L268.44,610.76 L274.74,615.15 L281.06,619.56 L287.42,624.00 L293.82,628.46 L300.25,632.94 L306.71,637.45 L313.21,641.99 L319.75,646.55 L326.32,651.13 L332.93,655.74 L339.57,660.38M608.87,493.09 L603.62,496.86 L598.34,500.66 L593.04,504.47 L587.71,508.30 L582.35,512.15 L576.97,516.02 L571.56,519.92 L566.12,523.83 L560.65,527.76 L555.16,531.71 L549.64,535.68 L544.09,539.67 L538.51,543.68 L532.90,547.71 L527.26,551.77 L521.60,555.84 L515.90,559.93 L510.17,564.05 L504.42,568.19 L498.63,572.35 L492.82,576.53 L486.97,580.74 L481.09,584.96 L475.18,589.21 L469.24,593.48 L463.27,597.78 L457.27,602.09 L451.23,606.43 L445.16,610.80 L439.06,615.18 L432.93,619.59 L426.76,624.03 L420.56,628.49 L414.32,632.97 L408.05,637.48 L401.75,642.01 L395.41,646.57 L389.04,651.15 L382.63,655.76 L376.19,660.39M354.19,52.32 L360.23,54.99 L366.31,57.68 L372.41,60.38 L378.55,63.10 L384.71,65.82 L390.91,68.57 L397.14,71.32 L403.40,74.09 L409.69,76.88 L416.01,79.68 L422.37,82.49 L428.76,85.32 L435.18,88.16 L441.64,91.02 L448.13,93.89 L454.65,96.77 L461.20,99.67 L467.79,102.59 L474.42,105.52 L481.08,108.47 L487.77,111.43 L494.50,114.41 L501.27,117.40 L508.07,120.41 L514.91,123.44 L521.78,126.48 L528.69,129.54 L535.64,132.61 L542.62,135.70 L549.64,138.81 L556.70,141.93 L563.80,145.08 L570.94,148.23 L578.11,151.41 L585.32,154.60 L592.58,157.81 L599.87,161.04 L607.20,164.28 L614.58,167.55 L621.99,170.83M354.19,52.32 L348.31,54.99 L342.40,57.67 L336.46,60.37 L330.49,63.08 L324.49,65.81 L318.46,68.54 L312.40,71.30 L306.31,74.06 L300.19,76.84 L294.03,79.64 L287.85,82.45 L281.63,85.27 L275.38,88.11 L269.10,90.96 L262.79,93.83 L256.44,96.71 L250.06,99.61 L243.65,102.52 L237.21,105.45 L230.73,108.39 L224.21,111.35 L217.67,114.33 L211.08,117.32 L204.47,120.32 L197.81,123.34 L191.13,126.38 L184.40,129.44 L177.64,132.51 L170.85,135.59 L164.01,138.70 L157.15,141.82 L150.24,144.95 L143.30,148.11 L136.31,151.28 L129.29,154.47 L122.24,157.67 L115.14,160.90 L108.00,164.14 L100.83,167.40 L93.61,170.67M93.61,170.67 L99.61,173.97 L105.63,177.29 L111.69,180.63 L117.78,183.98 L123.91,187.35 L130.07,190.75 L136.27,194.16 L142.50,197.59 L148.77,201.04 L155.07,204.51 L161.41,208.00 L167.78,211.51 L174.19,215.04 L180.64,218.59 L187.12,222.16 L193.65,225.75 L200.21,229.36 L206.81,232.99 L213.44,236.65 L220.12,240.32 L226.83,244.02 L233.59,247.74 L240.38,251.48 L247.22,255.24 L254.09,259.03 L261.01,262.84 L267.96,266.67 L274.96,270.52 L282.00,274.40 L289.09,278.30 L296.21,282.22 L303.38,286.17 L310.60,290.14 L317.85,294.13 L325.15,298.15 L332.50,302.20 L339.89,306.27 L347.33,310.36 L354.81,314.48 L362.34,318.63M621.99,170.83 L616.20,174.12 L610.38,177.44 L604.53,180.77 L598.64,184.12 L592.72,187.49 L586.77,190.88 L580.78,194.29 L574.76,197.71 L568.71,201.16 L562.62,204.63 L556.49,208.11 L550.33,211.62 L544.14,215.14 L537.91,218.69 L531.64,222.26 L525.34,225.84 L519.00,229.45 L512.63,233.08 L506.22,236.73 L499.77,240.40 L493.28,244.09 L486.75,247.81 L480.19,251.55 L473.58,255.31 L466.94,259.09 L460.26,262.89 L453.53,266.72 L446.77,270.57 L439.97,274.44 L433.12,278.33 L426.24,282.25 L419.31,286.20 L412.34,290.16 L405.33,294.16 L398.27,298.17 L391.18,302.21 L384.03,306.28 L376.85,310.37 L369.62,314.48 L362.34,318.63M75.31,202.33 L81.25,205.72 L87.22,209.12 L93.23,212.55 L99.27,215.99 L105.35,219.46 L111.46,222.94 L117.60,226.44 L123.78,229.96 L130.00,233.51 L136.25,237.07 L142.53,240.65 L148.85,244.25 L155.21,247.88 L161.60,251.52 L168.03,255.19 L174.50,258.88 L181.01,262.58 L187.55,266.31 L194.13,270.06 L200.75,273.84 L207.41,277.63 L214.11,281.45 L220.85,285.29 L227.62,289.16 L234.44,293.04 L241.30,296.95 L248.20,300.88 L255.14,304.84 L262.12,308.82 L269.14,312.82 L276.21,316.85 L283.32,320.90 L290.47,324.98 L297.67,329.08 L304.91,333.21 L312.19,337.36 L319.52,341.54 L326.90,345.74 L334.32,349.97 L341.78,354.23M640.30,202.49 L634.56,205.88 L628.79,209.28 L622.99,212.70 L617.16,216.14 L611.29,219.60 L605.39,223.08 L599.45,226.58 L593.48,230.10 L587.48,233.63 L581.44,237.19 L575.37,240.77 L569.27,244.37 L563.13,247.99 L556.95,251.63 L550.74,255.29 L544.49,258.98 L538.21,262.68 L531.89,266.41 L525.53,270.16 L519.14,273.93 L512.71,277.72 L506.24,281.53 L499.73,285.37 L493.18,289.23 L486.60,293.11 L479.97,297.02 L473.31,300.94 L466.61,304.90 L459.86,308.87 L453.08,312.87 L446.25,316.90 L439.38,320.95 L432.47,325.02 L425.52,329.12 L418.53,333.24 L411.49,337.39 L404.41,341.56 L397.29,345.76 L390.12,349.99 L382.91,354.24M99.60,492.97 L99.05,486.40 L98.50,479.80 L97.95,473.17 L97.39,466.51 L96.83,459.81 L96.27,453.08 L95.70,446.32 L95.13,439.52 L94.56,432.69 L93.99,425.82 L93.41,418.92 L92.83,411.98 L92.25,405.01 L91.66,398.00 L91.07,390.95 L90.48,383.87 L89.89,376.76 L89.29,369.60 L88.69,362.41 L88.08,355.19 L87.48,347.92 L86.87,340.62 L86.25,333.28 L85.64,325.90 L85.02,318.48 L84.39,311.02 L83.77,303.53 L83.14,295.99 L82.50,288.41 L81.87,280.79 L81.23,273.14 L80.58,265.44 L79.94,257.70 L79.29,249.92 L78.63,242.09 L77.97,234.23 L77.31,226.32 L76.65,218.37 L75.98,210.37 L75.31,202.33M608.87,493.09 L609.58,486.52 L610.29,479.93 L611.01,473.30 L611.73,466.63 L612.45,459.94 L613.18,453.21 L613.91,446.44 L614.65,439.65 L615.39,432.82 L616.13,425.95 L616.88,419.05 L617.63,412.11 L618.38,405.14 L619.14,398.13 L619.90,391.09 L620.67,384.01 L621.44,376.90 L622.21,369.74 L622.99,362.55 L623.77,355.33 L624.56,348.06 L625.35,340.76 L626.14,333.42 L626.94,326.04 L627.74,318.62 L628.55,311.17 L629.36,303.67 L630.17,296.14 L630.99,288.56 L631.82,280.94 L632.65,273.29 L633.48,265.59 L634.32,257.85 L635.16,250.07 L636.00,242.25 L636.85,234.38 L637.71,226.48 L638.57,218.52 L639.43,210.53 L640.30,202.49M339.57,660.38 L339.62,653.55 L339.67,646.67 L339.72,639.77 L339.77,632.82 L339.82,625.83 L339.87,618.81 L339.92,611.74 L339.98,604.64 L340.03,597.49 L340.08,590.31 L340.13,583.08 L340.18,575.82 L340.24,568.51 L340.29,561.16 L340.34,553.77 L340.40,546.34 L340.45,538.86 L340.51,531.34 L340.56,523.78 L340.61,516.18 L340.67,508.53 L340.73,500.83 L340.78,493.09 L340.84,485.31 L340.89,477.48 L340.95,469.60 L341.01,461.67 L341.07,453.70 L341.12,445.69 L341.18,437.62 L341.24,429.51 L341.30,421.34 L341.36,413.13 L341.42,404.87 L341.48,396.56 L341.54,388.19 L341.60,379.78 L341.66,371.32 L341.72,362.80 L341.78,354.23M376.19,660.39 L376.34,653.55 L376.49,646.68 L376.64,639.77 L376.79,632.83 L376.95,625.84 L377.10,618.81 L377.26,611.75 L377.41,604.65 L377.57,597.50 L377.73,590.32 L377.89,583.09 L378.05,575.83 L378.21,568.52 L378.37,561.17 L378.53,553.78 L378.69,546.35 L378.86,538.87 L379.02,531.35 L379.19,523.79 L379.35,516.19 L379.52,508.54 L379.69,500.84 L379.86,493.10 L380.03,485.32 L380.20,477.48 L380.38,469.61 L380.55,461.68 L380.72,453.71 L380.90,445.70 L381.08,437.63 L381.26,429.52 L381.43,421.35 L381.61,413.14 L381.80,404.88 L381.98,396.57 L382.16,388.20 L382.35,379.79 L382.53,371.33 L382.72,362.81 L382.91,354.24M354.19,52.32 L355.25,51.88 L356.30,51.54 L357.35,51.28 L358.37,51.13 L359.38,51.07 L360.37,51.11 L361.32,51.24 L362.24,51.46 L363.13,51.78M354.19,52.32 L353.10,51.88 L352.01,51.53 L350.93,51.28 L349.87,51.13 L348.82,51.07 L347.80,51.10 L346.81,51.23 L345.85,51.46 L344.92,51.77M103.46,501.24 L102.76,500.60 L102.12,499.88 L101.55,499.09 L101.04,498.23 L100.61,497.29 L100.24,496.30 L99.95,495.24 L99.74,494.13 L99.60,492.97M94.36,485.45 L94.56,486.38 L94.86,487.30 L95.26,488.19 L95.76,489.07 L96.35,489.92 L97.03,490.73 L97.81,491.52 L98.66,492.26 L99.60,492.97M93.61,170.67 L92.31,171.32 L91.01,172.06 L89.73,172.89 L88.48,173.80 L87.25,174.80 L86.06,175.89 L84.91,177.04 L83.80,178.27 L82.74,179.56 L81.74,180.91 L80.79,182.31 L79.91,183.76 L79.10,185.25 L78.35,186.77 L77.68,188.32 L77.08,189.89 L76.57,191.47 L76.13,193.06 L75.78,194.65 L75.51,196.23 L75.33,197.79 L75.24,199.34 L75.23,200.85 L75.31,202.33M93.61,170.67 L92.54,170.13 L91.47,169.68 L90.42,169.33 L89.40,169.09 L88.40,168.95 L87.43,168.91 L86.50,168.98 L85.61,169.15 L84.76,169.42 L83.96,169.80 L83.20,170.27 L82.50,170.84M69.66,193.05 L69.54,193.91 L69.52,194.76 L69.62,195.60 L69.83,196.43 L70.15,197.25 L70.58,198.06 L71.12,198.84 L71.76,199.60 L72.50,200.33 L73.34,201.03 L74.28,201.70 L75.31,202.33M604.69,501.36 L605.43,500.72 L606.11,500.01 L606.72,499.21 L607.26,498.35 L607.73,497.42 L608.13,496.42 L608.46,495.36 L608.70,494.25 L608.87,493.09M608.87,493.09 L609.78,492.38 L610.60,491.64 L611.34,490.86 L611.99,490.04 L612.54,489.19 L613.00,488.32 L613.36,487.42 L613.62,486.51 L613.79,485.58M621.99,170.83 L623.03,170.28 L624.06,169.83 L625.06,169.49 L626.04,169.24 L627.00,169.10 L627.92,169.07 L628.80,169.14 L629.64,169.31 L630.44,169.58 L631.20,169.95 L631.90,170.43M621.99,170.83 L623.33,171.47 L624.66,172.21 L625.97,173.04 L627.25,173.96 L628.50,174.96 L629.72,176.04 L630.89,177.20 L632.01,178.42 L633.08,179.72 L634.09,181.07 L635.04,182.47 L635.93,183.92 L636.74,185.41 L637.48,186.93 L638.15,188.48 L638.73,190.05 L639.23,191.63 L639.65,193.22 L639.98,194.81 L640.22,196.39 L640.38,197.95 L640.44,199.50 L640.42,201.01 L640.30,202.49M640.30,202.49 L641.30,201.86 L642.19,201.19 L642.99,200.49 L643.69,199.76 L644.29,199.00 L644.77,198.22 L645.15,197.42 L645.43,196.60 L645.59,195.76 L645.63,194.92 L645.57,194.07M344.76,669.88 L343.96,669.57 L343.22,669.15 L342.54,668.65 L341.93,668.05 L341.38,667.37 L340.90,666.60 L340.49,665.75 L340.16,664.82 L339.89,663.81 L339.71,662.73 L339.60,661.59 L339.57,660.38M370.46,669.89 L371.30,669.57 L372.09,669.16 L372.82,668.66 L373.49,668.06 L374.08,667.38 L374.61,666.61 L375.07,665.76 L375.45,664.82 L375.75,663.82 L375.98,662.74 L376.12,661.59 L376.19,660.39M376.19,660.39 L374.98,661.20 L373.69,661.96 L372.33,662.65 L370.91,663.28 L369.43,663.85 L367.90,664.34 L366.32,664.76 L364.70,665.11 L363.06,665.38 L361.38,665.57 L359.70,665.69 L358.00,665.73 L356.30,665.69 L354.60,665.57 L352.92,665.38 L351.26,665.11 L349.63,664.76 L348.04,664.34 L346.48,663.84 L344.98,663.28 L343.53,662.65 L342.14,661.95 L340.82,661.19 L339.57,660.38M362.34,318.63 L361.02,319.43 L359.70,320.34 L358.39,321.34 L357.09,322.43 L355.81,323.61 L354.56,324.88 L353.34,326.22 L352.16,327.63 L351.02,329.11 L349.92,330.65 L348.88,332.24 L347.90,333.87 L346.98,335.54 L346.12,337.24 L345.33,338.97 L344.61,340.71 L343.97,342.45 L343.41,344.20 L342.92,345.94 L342.53,347.66 L342.21,349.35 L341.98,351.02 L341.84,352.65 L341.78,354.23M362.34,318.63 L363.71,319.43 L365.07,320.34 L366.42,321.34 L367.75,322.43 L369.06,323.62 L370.34,324.88 L371.58,326.23 L372.78,327.64 L373.94,329.12 L375.04,330.66 L376.09,332.25 L377.08,333.88 L378.00,335.55 L378.85,337.25 L379.63,338.98 L380.33,340.72 L380.96,342.46 L381.50,344.21 L381.95,345.95 L382.32,347.67 L382.60,349.36 L382.79,351.03 L382.90,352.66 L382.91,354.24M382.91,354.24 L381.55,354.99 L380.11,355.68 L378.59,356.32 L376.99,356.90 L375.33,357.42 L373.61,357.87 L371.84,358.26 L370.02,358.58 L368.17,358.83 L366.30,359.00 L364.40,359.11 L362.49,359.15 L360.58,359.11 L358.68,359.00 L356.79,358.82 L354.93,358.57 L353.09,358.25 L351.30,357.86 L349.55,357.41 L347.86,356.89 L346.23,356.31 L344.67,355.67 L343.19,354.98 L341.78,354.23" fill="none" stroke="#5a6886" stroke-width="1.1" stroke-linejoin="round"/><defs><linearGradient id="silg" gradientUnits="userSpaceOnUse" x1="0" y1="45" x2="0" y2="675"><stop offset="0" stop-color="#6f87c3"/><stop offset="0.45" stop-color="#6a83c0"/><stop offset="1" stop-color="#5a73af"/></linearGradient></defs><path d="M68.75,192.23 L68.89,190.25 L69.03,189.08 L69.36,187.14 L69.89,185.24 L70.21,184.14 L70.92,182.34 L71.42,181.28 L72.29,179.61 L72.93,178.62 L73.95,177.11 L74.71,176.19 L75.84,174.86 L76.69,174.03 L77.90,172.89 L78.82,172.16 L80.08,171.23 L81.01,170.60 L82.03,170.02 L83.20,169.39 L84.20,168.90 L344.33,51.26 L345.22,50.90 L346.35,50.49 L347.17,50.21 L348.05,49.96 L348.98,49.74 L349.93,49.56 L350.59,49.47 L351.42,49.35 L352.28,49.26 L353.15,49.21 L354.03,49.20 L354.91,49.21 L355.79,49.26 L356.66,49.35 L357.49,49.47 L358.09,49.56 L359.05,49.74 L359.99,49.96 L360.88,50.21 L361.72,50.50 L362.80,50.90 L363.70,51.27 L630.98,169.05 L632.01,169.54 L632.95,170.06 L634.17,170.76 L635.15,171.39 L636.00,172.05 L637.29,173.04 L638.13,173.80 L639.35,175.00 L640.12,175.86 L641.25,177.26 L641.91,178.20 L642.91,179.77 L643.45,180.77 L644.30,182.50 L644.96,184.30 L645.35,185.40 L645.84,187.30 L646.04,188.44 L646.33,190.41 L646.42,192.39 L646.43,193.56 L646.31,195.56 L614.52,485.34 L614.31,486.62 L614.05,488.22 L613.60,489.79 L613.22,491.03 L612.60,492.51 L612.06,493.69 L611.29,495.06 L610.59,496.17 L609.70,497.41 L608.87,498.43 L607.86,499.51 L606.93,500.42 L605.84,501.32 L604.84,502.12 L373.00,669.40 L371.63,670.30 L370.68,670.87 L369.30,671.63 L367.82,672.31 L366.28,672.88 L365.56,673.12 L364.07,673.56 L362.52,673.90 L360.93,674.15 L359.32,674.31 L357.69,674.36 L356.06,674.30 L354.44,674.15 L352.84,673.90 L351.27,673.55 L349.75,673.11 L348.31,672.58 L347.55,672.30 L346.05,671.63 L344.63,670.86 L343.33,670.03 L342.36,669.40 L103.31,502.01 L102.26,501.20 L101.22,500.30 L100.25,499.38 L99.30,498.30 L98.43,497.29 L97.57,496.05 L96.83,494.94 L96.11,493.57 L95.51,492.39 L94.94,490.90 L94.51,489.66 L94.10,488.10 L93.84,486.82 L93.61,485.20 L68.88,195.38 L68.82,194.22Z" fill="none" stroke="url(#silg)" stroke-width="2.0" stroke-linejoin="round"/></svg>
<style>
#dlg{position:absolute;left:741px;top:37px;width:312px;height:603px;box-sizing:border-box;background:#f1f1f1;border:1px solid #c9c9c9;font-family:"Liberation Sans",sans-serif;color:#333}
#dlg .hdr{position:absolute;left:0;top:0;width:310px;height:29px;background:#f0f0f0;border-bottom:2px solid #d0d0d0}
#dlg .minus{position:absolute;left:7px;top:9px;width:11px;height:11px;border-radius:50%;background:#333}
#dlg .minus:after{content:"";position:absolute;left:2.5px;top:4.6px;width:6px;height:1.8px;background:#eee}
#dlg .title{position:absolute;left:31px;top:0;height:29px;line-height:29px;font-size:13.75px;color:#606060;white-space:nowrap}
#dlg .row{position:absolute;left:0;width:310px;height:37.5px;line-height:37.5px;font-size:13.75px;white-space:nowrap}
#dlg .lbl{position:absolute;left:15.5px;top:0}
#dlg .val{position:absolute;left:114px;top:0}
#dlg .sec{position:absolute;top:0;font-weight:bold}
#dlg .tri{position:absolute;width:0;height:0;border-left:5px solid transparent;border-right:5px solid transparent;border-top:7px solid #333}
#dlg .dd{position:absolute;left:110px;top:1.5px;width:161px;height:33px;box-sizing:border-box;background:#fff;border:1px solid #cbcbcb;line-height:31px}
#dlg .dd .tx{position:absolute;left:8px;top:0}
#dlg .dd .ar{position:absolute;left:146px;top:14px;width:0;height:0;border-left:3.5px solid transparent;border-right:3.5px solid transparent;border-top:4px solid #222}
#dlg .radio{position:absolute;left:114.9px;top:8.4px;width:17.8px;height:17.8px;box-sizing:border-box;border-radius:50%;border:1.8px solid #3a3a3a;background:linear-gradient(#f4f4f4,#c4c4c4)}
#dlg .radio.on{background:radial-gradient(circle,#f8f8f8 0,#d0d0d0 100%)}
#dlg .radio.on:after{content:"";position:absolute;left:2.9px;top:2.9px;width:8.4px;height:8.4px;border-radius:50%;background:#000}
#dlg .sep{position:absolute;left:0;top:556px;width:310px;height:2px;background:#d6d6d6}
#dlg .btn{position:absolute;top:568px;height:24px;box-sizing:border-box;border:1px solid #b2b2b2;background:#e1e1e1;font-size:15px;line-height:19.5px;text-align:center;color:#444}
#dlg .info{position:absolute;left:10.2px;top:572.5px;width:15px;height:15px;border-radius:50%;background:#000}
</style>
<div id="dlg">
 <div class="hdr"><div class="minus"></div><div class="title">CREATE DRAWING</div></div>
 <div class="row" style="top:31.0px"><span class="lbl">Automatic</span></div>
 <div class="row" style="top:68.5px"><span class="lbl">Manual</span></div>
 <svg style="position:absolute;left:110px;top:35px" width="28" height="64" viewBox="0 0 28 64"><defs><linearGradient id="rg1" x1="0" y1="0" x2="0" y2="1"><stop offset="0" stop-color="#f6f6f6"/><stop offset="1" stop-color="#bdbdbd"/></linearGradient><radialGradient id="rg2"><stop offset="0.5" stop-color="#fafafa"/><stop offset="1" stop-color="#c8c8c8"/></radialGradient></defs><circle cx="13.9" cy="13.8" r="8.05" fill="url(#rg1)" stroke="#3a3a3a" stroke-width="1.75"/><circle cx="13.9" cy="51.8" r="8.05" fill="url(#rg2)" stroke="#3a3a3a" stroke-width="1.75"/><circle cx="13.9" cy="51.8" r="4.6" fill="#000"/></svg>
 <div class="row" style="top:106.0px"><span class="lbl">Sheet Count</span><span class="val">1</span></div>
 <div class="row" style="top:143.5px"><div class="tri" style="left:12.5px;top:16px"></div><span class="sec" style="left:31px">Reference</span></div>
 <div class="row" style="top:181.0px"><span class="lbl">Contents</span><div class="dd"><span class="tx">Full Assembly</span><div class="ar"></div></div></div>
 <div class="row" style="top:218.5px"><div class="tri" style="left:5.5px;top:16px"></div><span class="sec" style="left:22px">Destination</span></div>
 <div class="row" style="top:256.0px"><span class="lbl">Drawing</span><div class="dd"><svg style="position:absolute;left:6px;top:7.5px" width="16" height="17" viewBox="0 0 16 17"><path d="M5.7 1.6h4.1v5.1h4.9v4.1h-4.9v5.3H5.7v-5.3H0.9V6.7h4.8z" fill="#fff" stroke="#444" stroke-width="1.4" stroke-linejoin="round"/></svg><span class="tx" style="left:28.5px">Create New</span><div class="ar"></div></div></div>
 <div class="row" style="top:293.5px"><span class="lbl">Template</span><div class="dd"><span class="tx">From Scratch</span><div class="ar"></div></div></div>
 <div class="row" style="top:331.0px"><span class="lbl">Standard</span><div class="dd"><span class="tx">ISO</span><div class="ar"></div></div></div>
 <div class="row" style="top:368.5px"><span class="lbl">Units</span><div class="dd"><span class="tx">mm</span><div class="ar"></div></div></div>
 <div class="row" style="top:406.0px"><span class="lbl">Sheet Size</span><div class="dd"><span class="tx">A3</span><div class="ar"></div></div></div>
 <div class="row" style="top:443.5px"><span class="lbl">Width</span><span class="val">420mm</span></div>
 <div class="row" style="top:481.0px"><span class="lbl">Height</span><span class="val">297mm</span></div>
 <div class="row" style="top:518.5px"><span class="lbl">Orientation</span></div>
 <svg style="position:absolute;left:109px;top:519px" width="60" height="36" viewBox="0 0 60 36">
   <rect x="0.7" y="0.4" width="28.5" height="33.8" rx="1.5" fill="#0796d8"/>
   <path d="M4.9 9.9H19.7L25 15.2V25.1H4.9z" fill="#d9d9d9"/>
   <path d="M19.7 9.9V15.2H25z" fill="#f6f6f6"/>
   <path d="M11.9 22.5L15.15 14.1L18.4 22.5M13.1 19.6H17.2" fill="none" stroke="#2e8fe3" stroke-width="1.45"/>
   <path d="M44.6 8H52.5L58.1 13.6V26.8H44.6z" fill="#fff" stroke="#6a6a6a" stroke-width="1.2"/>
   <path d="M52.5 8V13.6H58.1z" fill="#6a6a6a" stroke="#6a6a6a" stroke-width="0.6"/>
   <path d="M48.2 23.9L51.3 15.1L54.4 23.9M49.3 21H53.3" fill="none" stroke="#2e8fe3" stroke-width="1.45"/>
 </svg>
 <div class="sep"></div>
 <div class="info"><svg width="15" height="15" viewBox="0 0 15 15" style="position:absolute;left:0;top:0"><circle cx="7.5" cy="4.3" r="1.4" fill="#fff"/><path d="M5.8 6.6h2.9v4.6h1v1.4H5.6v-1.4h1v-3.2h-0.8z" fill="#fff"/></svg></div>
 <div class="btn" style="left:134px;width:75px">OK</div>
 <div class="btn" style="left:222px;width:74.5px">Cancel</div>
</div>

</body></html>
